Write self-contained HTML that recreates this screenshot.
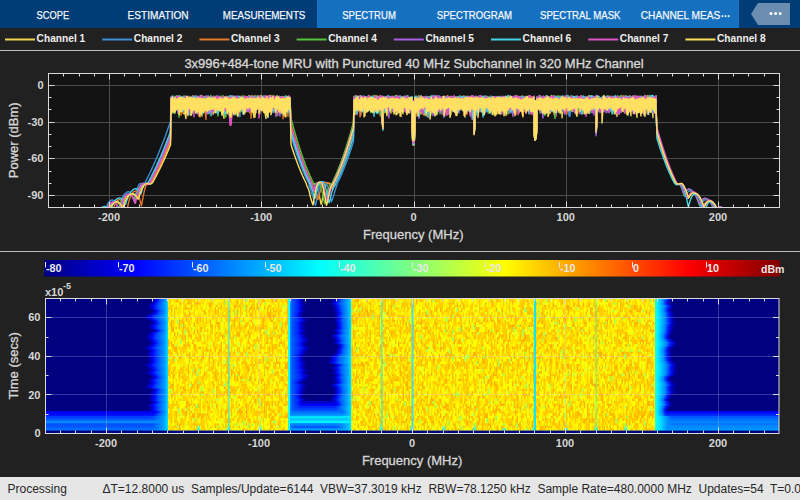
<!DOCTYPE html><html><head><meta charset="utf-8"><style>html,body{margin:0;padding:0;width:800px;height:500px;overflow:hidden;background:#212121}svg{display:block}</style></head><body>
<svg width="800" height="500" viewBox="0 0 800 500" font-family='"Liberation Sans", sans-serif'>
<defs>
<linearGradient id="jet" x1="0" x2="1" y1="0" y2="0"><stop offset="0.000" stop-color="#000080"/><stop offset="0.031" stop-color="#00009f"/><stop offset="0.062" stop-color="#0000bf"/><stop offset="0.094" stop-color="#0000df"/><stop offset="0.125" stop-color="#0000ff"/><stop offset="0.156" stop-color="#0020ff"/><stop offset="0.188" stop-color="#0040ff"/><stop offset="0.219" stop-color="#0060ff"/><stop offset="0.250" stop-color="#0080ff"/><stop offset="0.281" stop-color="#009fff"/><stop offset="0.312" stop-color="#00bfff"/><stop offset="0.344" stop-color="#00dfff"/><stop offset="0.375" stop-color="#00ffff"/><stop offset="0.406" stop-color="#20ffdf"/><stop offset="0.438" stop-color="#40ffbf"/><stop offset="0.469" stop-color="#60ff9f"/><stop offset="0.500" stop-color="#80ff80"/><stop offset="0.531" stop-color="#9fff60"/><stop offset="0.562" stop-color="#bfff40"/><stop offset="0.594" stop-color="#dfff20"/><stop offset="0.625" stop-color="#ffff00"/><stop offset="0.656" stop-color="#ffdf00"/><stop offset="0.688" stop-color="#ffbf00"/><stop offset="0.719" stop-color="#ff9f00"/><stop offset="0.750" stop-color="#ff8000"/><stop offset="0.781" stop-color="#ff6000"/><stop offset="0.812" stop-color="#ff4000"/><stop offset="0.844" stop-color="#ff2000"/><stop offset="0.875" stop-color="#ff0000"/><stop offset="0.906" stop-color="#df0000"/><stop offset="0.938" stop-color="#bf0000"/><stop offset="0.969" stop-color="#9f0000"/><stop offset="1.000" stop-color="#800000"/></linearGradient>
<clipPath id="ax1"><rect x="48.5" y="73.5" width="731" height="134"/></clipPath>
<clipPath id="ax2"><rect x="45.5" y="298.5" width="733.5" height="134.5"/></clipPath>
</defs>
<rect x="0" y="0" width="800" height="28" fill="#003c75"/>
<rect x="317" y="0" width="422" height="28" fill="#1571c0"/>
<text x="36.6" y="18.8" font-size="10.8" fill="#f4f6fa" stroke="#f4f6fa" stroke-width="0.25" textLength="32.5" lengthAdjust="spacingAndGlyphs">SCOPE</text>
<text x="127.6" y="18.8" font-size="10.8" fill="#f4f6fa" stroke="#f4f6fa" stroke-width="0.25" textLength="61.0" lengthAdjust="spacingAndGlyphs">ESTIMATION</text>
<text x="222.8" y="18.8" font-size="10.8" fill="#f4f6fa" stroke="#f4f6fa" stroke-width="0.25" textLength="82.6" lengthAdjust="spacingAndGlyphs">MEASUREMENTS</text>
<text x="342.2" y="18.8" font-size="10.8" fill="#f4f6fa" stroke="#f4f6fa" stroke-width="0.25" textLength="53.7" lengthAdjust="spacingAndGlyphs">SPECTRUM</text>
<text x="436.8" y="18.8" font-size="10.8" fill="#f4f6fa" stroke="#f4f6fa" stroke-width="0.25" textLength="75.3" lengthAdjust="spacingAndGlyphs">SPECTROGRAM</text>
<text x="540.0" y="18.8" font-size="10.8" fill="#f4f6fa" stroke="#f4f6fa" stroke-width="0.25" textLength="80.5" lengthAdjust="spacingAndGlyphs">SPECTRAL MASK</text>
<text x="640.8" y="18.8" font-size="10.8" fill="#f4f6fa" stroke="#f4f6fa" stroke-width="0.25" textLength="79.5" lengthAdjust="spacingAndGlyphs">CHANNEL MEAS</text>
<rect x="721.6" y="15.2" width="1.7" height="1.9" fill="#f2f4f8"/>
<rect x="724.7" y="15.2" width="1.7" height="1.9" fill="#f2f4f8"/>
<rect x="727.8" y="15.2" width="1.7" height="1.9" fill="#f2f4f8"/>
<polygon points="751,14 758,3 790,3 790,25 758,25" fill="#6a8db0"/>
<circle cx="771.0" cy="13.6" r="1.5" fill="#ffffff"/>
<circle cx="775.6" cy="13.6" r="1.5" fill="#ffffff"/>
<circle cx="780.2" cy="13.6" r="1.5" fill="#ffffff"/>
<line x1="5.0" y1="39.5" x2="35.0" y2="39.5" stroke="#f2d453" stroke-width="2"/>
<text x="36.6" y="41.8" font-size="10.4" font-weight="bold" fill="#efefef" textLength="48.6" lengthAdjust="spacingAndGlyphs">Channel 1</text>
<line x1="102.2" y1="39.5" x2="132.2" y2="39.5" stroke="#3d8fd6" stroke-width="2"/>
<text x="133.8" y="41.8" font-size="10.4" font-weight="bold" fill="#efefef" textLength="48.6" lengthAdjust="spacingAndGlyphs">Channel 2</text>
<line x1="199.4" y1="39.5" x2="229.4" y2="39.5" stroke="#e8792b" stroke-width="2"/>
<text x="231.0" y="41.8" font-size="10.4" font-weight="bold" fill="#efefef" textLength="48.6" lengthAdjust="spacingAndGlyphs">Channel 3</text>
<line x1="296.6" y1="39.5" x2="326.6" y2="39.5" stroke="#52c23c" stroke-width="2"/>
<text x="328.2" y="41.8" font-size="10.4" font-weight="bold" fill="#efefef" textLength="48.6" lengthAdjust="spacingAndGlyphs">Channel 4</text>
<line x1="393.8" y1="39.5" x2="423.8" y2="39.5" stroke="#ad5fe2" stroke-width="2"/>
<text x="425.4" y="41.8" font-size="10.4" font-weight="bold" fill="#efefef" textLength="48.6" lengthAdjust="spacingAndGlyphs">Channel 5</text>
<line x1="491.0" y1="39.5" x2="521.0" y2="39.5" stroke="#43d5e6" stroke-width="2"/>
<text x="522.6" y="41.8" font-size="10.4" font-weight="bold" fill="#efefef" textLength="48.6" lengthAdjust="spacingAndGlyphs">Channel 6</text>
<line x1="588.2" y1="39.5" x2="618.2" y2="39.5" stroke="#e153c3" stroke-width="2"/>
<text x="619.8" y="41.8" font-size="10.4" font-weight="bold" fill="#efefef" textLength="48.6" lengthAdjust="spacingAndGlyphs">Channel 7</text>
<line x1="685.4" y1="39.5" x2="715.4" y2="39.5" stroke="#ffe060" stroke-width="2"/>
<text x="717.0" y="41.8" font-size="10.4" font-weight="bold" fill="#efefef" textLength="48.6" lengthAdjust="spacingAndGlyphs">Channel 8</text>
<rect x="0" y="50" width="800" height="1" fill="#bdbdbd"/>
<rect x="48.5" y="73.5" width="731.0" height="134.0" fill="#131313"/>
<path d="M109.5 73.5V207.5M261.5 73.5V207.5M414.5 73.5V207.5M566.5 73.5V207.5M718.5 73.5V207.5M48.5 85.5H779.5M48.5 122.5H779.5M48.5 158.5H779.5M48.5 195.5H779.5" stroke="#4c4c4c" stroke-width="1" fill="none"/>
<g clip-path="url(#ax1)" fill="none" stroke-linejoin="round">
<path d="M49 212.0 97 212.0 97.5 211.9 98 211.6 98.5 211.3 99 211.0 99.5 210.9 100 210.7 100.5 210.7 101 210.8 101.5 211.0 102 211.3 102.5 211.7 103 212.0 107 212.0 107.5 211.4 108 210.1 108.5 208.9 109 207.8 109.5 206.8 110 205.9 110.5 205.2 111 204.5 111.5 203.9 112 203.4 112.5 203.0 113 202.7 113.5 202.4 114 202.1 114.5 201.8 115 201.6 115.5 201.5 116 201.5 116.5 201.7 117 201.9 117.5 202.2 118 202.7 118.5 203.2 119 203.9 119.5 204.6 120 205.4 120.5 206.3 121 207.3 121.5 207.0 122 205.6 122.5 204.2 123 202.9 123.5 201.6 124 200.5 124.5 199.4 125 198.5 125.5 197.6 126 196.9 126.5 196.3 127 195.8 127.5 195.3 128 195.0 128.5 194.7 129 194.4 129.5 194.2 130 194.0 130.5 193.8 131 193.8 131.5 193.8 132 193.9 132.5 194.0 133 194.2 133.5 194.5 134 194.9 134.5 195.5 135 196.1 135.5 196.8 136 197.6 136.5 198.4 137 198.0 137.5 196.4 138 194.9 138.5 193.5 139 192.1 139.5 190.9 140 189.7 140.5 188.6 141 187.7 141.5 186.8 142 186.1 142.5 185.4 143 184.9 143.5 184.4 144 184.0 144.5 183.6 145 183.4 145.5 183.5 146 183.6 146.5 183.7 147 183.8 147.5 183.9 148 184.0 148.5 184.0 149 183.9 149.5 183.8 150 183.5 150.5 183.2 151 182.6 151.5 181.8 152 180.9 152.5 180.0 153 179.0 153.5 178.1 154 177.2 154.5 176.2 155 175.3 155.5 174.3 156 173.3 156.5 172.3 157 171.3 157.5 170.3 158 169.3 158.5 168.3 159 167.2 159.5 166.2 160 165.1 160.5 164.0 161 163.0 161.5 161.9 162 160.8 162.5 159.7 163 158.6 163.5 157.4 164 156.3 164.5 155.1 165 154.0 165.5 152.8 166 151.6 166.5 150.4 167 149.2 167.5 148.0 168 146.8 168.5 145.6 169 144.3 169.5 143.1 170 141.8 170.5 140.6 171 99.0 171 107.4 172 105.8 172 98.6 173 99.5 173 110.7 174 107.2 174 99.5 175 98.9 175 108.2 176 110.3 176 96.9 177 96.0 177 106.1 178 107.6 178 97.9 179 96.6 179 111.3 180 105.2 180 98.1 181 99.9 181 108.9 182 109.0 182 97.7 183 97.3 183 112.8 184 113.9 184 98.3 185 97.5 185 105.7 186 106.2 186 97.2 187 98.8 187 109.7 188 105.6 188 99.5 189 98.1 189 107.3 190 114.7 190 98.1 191 98.2 191 106.0 192 106.8 192 96.7 193 95.9 193 107.2 194 105.9 194 98.3 195 97.1 195 110.7 196 112.6 196 96.8 197 97.0 197 109.2 198 108.2 198 96.7 199 98.3 199 106.9 200 106.8 200 97.0 201 95.6 201 113.3 202 116.0 202 96.9 203 98.5 203 107.7 204 109.5 204 97.2 205 96.4 205 107.6 206 106.6 206 97.4 207 98.5 207 105.8 208 109.9 208 96.1 209 99.2 209 108.7 210 105.8 210 97.3 211 97.9 211 110.3 212 105.4 212 99.1 213 96.5 213 114.3 214 106.2 214 97.5 215 99.1 215 105.7 216 109.2 216 97.2 217 98.3 217 106.6 218 107.3 218 99.9 219 98.6 219 107.5 220 105.8 220 97.5 221 97.1 221 106.8 222 105.4 222 97.7 223 97.8 223 112.7 224 118.4 224 97.3 225 98.1 225 114.5 226 108.5 226 96.5 227 97.7 227 105.4 228 112.2 228 97.5 229 97.2 229 110.3 230 120.0 230 99.0 231 98.6 231 120.0 232 106.5 232 96.2 233 97.5 233 108.7 234 105.7 234 98.1 235 97.5 235 108.2 236 105.7 236 98.4 237 97.5 237 114.8 238 109.3 238 98.6 239 97.5 239 110.7 240 106.3 240 99.6 241 96.4 241 110.9 242 105.4 242 98.4 243 99.6 243 109.4 244 107.3 244 98.1 245 98.2 245 109.9 246 110.8 246 97.7 247 99.1 247 111.5 248 111.3 248 97.4 249 95.5 249 106.9 250 109.8 250 99.2 251 97.5 251 109.9 252 106.1 252 98.2 253 97.6 253 107.5 254 107.2 254 99.8 255 99.1 255 117.2 256 106.0 256 97.3 257 97.9 257 105.2 258 105.5 258 96.0 259 98.6 259 105.3 260 106.0 260 97.6 261 95.5 261 107.6 262 105.7 262 98.7 263 98.8 263 106.1 264 108.0 264 97.9 265 97.9 265 106.8 266 105.7 266 96.9 267 97.7 267 113.7 268 107.1 268 98.7 269 97.6 269 106.2 270 108.9 270 95.5 271 96.4 271 105.8 272 105.6 272 100.9 273 98.0 273 106.0 274 105.2 274 98.8 275 97.1 275 107.0 276 112.4 276 98.0 277 95.7 277 112.6 278 111.5 278 96.8 279 96.9 279 106.5 280 107.8 280 97.6 281 97.9 281 106.7 282 107.5 282 97.5 283 96.4 283 108.3 284 110.3 284 97.2 285 98.2 285 106.4 286 116.9 286 96.4 287 97.6 287 109.3 288 106.1 288 97.9 289 98.7 289 106.6 290 107.4 290 98.5 291 132.9 291.5 134.6 292 136.3 292.5 138.0 293 139.7 293.5 141.3 294 142.9 294.5 144.5 295 146.1 295.5 147.7 296 149.2 296.5 150.7 297 152.2 297.5 153.7 298 155.2 298.5 156.6 299 158.0 299.5 159.4 300 160.8 300.5 162.1 301 163.5 301.5 164.8 302 166.1 302.5 167.3 303 168.6 303.5 169.8 304 171.0 304.5 172.2 305 173.4 305.5 174.5 306 175.7 306.5 176.8 307 177.9 307.5 178.9 308 180.0 308.5 181.0 309 182.0 309.5 183.0 310 184.6 310.5 186.2 311 186.9 311.5 185.8 312 184.9 312.5 184.3 313 183.9 313.5 183.7 314 183.6 314.5 183.6 315 183.7 315.5 184.1 316 184.8 316.5 185.7 317 186.8 317.5 188.2 318 189.9 318.5 191.8 319 193.9 319.5 196.3 320 198.8 320.5 201.4 321 204.2 321.5 203.9 322 200.9 322.5 198.1 323 195.6 323.5 193.3 324 191.2 324.5 189.3 325 187.6 325.5 186.2 326 185.1 326.5 184.2 327 183.6 327.5 183.2 328 183.1 328.5 183.1 329 183.2 329.5 183.4 330 183.8 330.5 184.5 331 185.3 331.5 186.5 332 187.8 332.5 189.4 333 187.8 333.5 186.2 334 184.6 334.5 183.0 335 182.0 335.5 181.0 336 180.0 336.5 178.9 337 177.9 337.5 176.8 338 175.7 338.5 174.5 339 173.4 339.5 172.2 340 171.0 340.5 169.8 341 168.6 341.5 167.3 342 166.1 342.5 164.8 343 163.5 343.5 162.1 344 160.8 344.5 159.4 345 158.0 345.5 156.6 346 155.2 346.5 153.7 347 152.2 347.5 150.7 348 149.2 348.5 147.7 349 146.1 349.5 144.5 350 142.9 350.5 141.3 351 139.7 351.5 138.0 352 136.3 352.5 134.6 353 132.9 353.5 131.1 354 97.9 354 107.6 355 107.3 355 98.4 356 96.2 356 107.5 357 106.9 357 96.7 358 96.4 358 107.0 359 105.7 359 97.2 360 98.0 360 106.2 361 106.1 361 98.3 362 98.1 362 106.9 363 107.4 363 96.8 364 97.7 364 116.9 365 106.3 365 99.5 366 97.9 366 112.0 367 107.1 367 99.4 368 97.7 368 107.3 369 105.3 369 99.2 370 99.2 370 105.6 371 105.4 371 97.7 372 97.9 372 111.5 373 109.6 373 99.7 374 97.0 374 108.7 375 111.3 375 95.5 376 99.5 376 107.1 377 105.8 377 95.8 378 98.6 378 108.6 379 106.0 379 98.4 380 98.0 380 108.1 381 110.0 381 99.4 382 96.4 382 119.7 383 127.4 383 97.3 384 98.7 384 113.0 385 105.9 385 98.1 386 99.5 386 111.4 387 110.6 387 98.2 388 96.8 388 108.7 389 112.0 389 99.7 390 98.3 390 107.3 391 113.0 391 97.7 392 96.7 392 110.9 393 107.0 393 96.3 394 98.3 394 108.4 395 108.8 395 98.6 396 97.3 396 110.8 397 112.2 397 98.2 398 98.2 398 106.6 399 110.2 399 96.6 400 96.0 400 115.9 401 106.7 401 97.5 402 98.0 402 108.2 403 106.7 403 97.2 404 99.9 404 105.6 405 106.6 405 97.9 406 99.0 406 107.7 407 106.3 407 95.5 408 97.0 408 106.7 409 112.3 409 97.7 410 98.0 410 108.1 411 111.0 411 100.6 412 97.0 412 134.4 413 145.1 413 100.8 414 100.6 414 145.1 415 134.4 415 97.1 416 97.0 416 109.8 417 106.1 417 99.5 418 96.8 418 109.6 419 115.1 419 96.3 420 97.6 420 106.9 421 114.1 421 97.9 422 97.0 422 107.4 423 109.5 423 99.5 424 97.7 424 115.1 425 106.2 425 96.7 426 99.2 426 106.4 427 111.3 427 96.7 428 98.3 428 105.2 429 110.1 429 100.1 430 97.9 430 105.3 431 106.6 431 98.9 432 97.5 432 107.1 433 110.1 433 99.1 434 96.7 434 108.0 435 108.7 435 98.6 436 97.4 436 107.0 437 106.5 437 98.5 438 98.2 438 108.0 439 106.4 439 96.5 440 97.6 440 110.4 441 107.6 441 98.3 442 99.2 442 109.7 443 108.8 443 96.6 444 97.0 444 109.6 445 108.5 445 98.2 446 97.6 446 105.9 447 114.3 447 99.0 448 98.9 448 108.1 449 113.5 449 98.7 450 97.4 450 112.4 451 107.5 451 97.5 452 98.7 452 105.4 453 107.2 453 97.0 454 97.0 454 108.7 455 105.3 455 97.6 456 96.7 456 109.6 457 108.2 457 98.1 458 98.0 458 107.6 459 110.6 459 97.3 460 97.9 460 106.7 461 106.2 461 97.0 462 99.2 462 105.2 463 107.2 463 96.3 464 98.7 464 115.6 465 107.3 465 98.0 466 99.3 466 105.7 467 110.7 467 97.2 468 96.4 468 107.6 469 110.8 469 96.7 470 96.9 470 113.1 471 105.3 471 99.5 472 98.7 472 105.4 473 111.0 473 98.3 474 98.9 474 133.3 475 127.1 475 96.6 476 97.6 476 108.0 477 108.3 477 97.9 478 97.3 478 107.5 479 108.6 479 98.9 480 98.8 480 105.8 481 105.7 481 98.8 482 97.3 482 107.1 483 113.7 483 97.5 484 97.2 484 108.6 485 106.5 485 96.6 486 99.3 486 105.5 487 106.8 487 98.4 488 97.7 488 106.8 489 107.9 489 99.3 490 98.4 490 111.9 491 108.5 491 96.7 492 96.6 492 105.2 493 106.6 493 96.6 494 97.8 494 108.8 495 111.3 495 98.1 496 96.6 496 105.6 497 108.8 497 98.2 498 97.5 498 113.8 499 105.6 499 96.4 500 98.2 500 106.1 501 106.8 501 98.5 502 97.8 502 112.7 503 109.0 503 97.2 504 97.3 504 105.9 505 108.3 505 97.7 506 97.2 506 105.7 507 105.4 507 99.6 508 98.8 508 109.5 509 110.9 509 97.7 510 98.9 510 105.3 511 111.6 511 99.3 512 99.2 512 107.3 513 105.9 513 98.8 514 98.0 514 108.8 515 115.8 515 99.0 516 97.6 516 105.7 517 109.8 517 96.0 518 98.0 518 107.1 519 112.7 519 96.4 520 97.5 520 106.2 521 105.4 521 99.1 522 98.1 522 109.1 523 108.8 523 98.9 524 97.0 524 111.0 525 106.7 525 99.1 526 96.4 526 112.5 527 109.6 527 97.2 528 100.1 528 105.8 529 109.5 529 97.0 530 96.1 530 109.4 531 106.4 531 98.7 532 96.7 532 105.8 533 108.8 533 99.8 534 97.6 534 134.0 535 140.4 535 101.0 536 101.4 536 138.9 537 128.1 537 99.8 538 100.7 538 108.0 539 105.5 539 97.4 540 95.5 540 106.9 541 108.3 541 98.5 542 96.9 542 112.4 543 108.2 543 97.7 544 98.2 544 107.6 545 105.7 545 97.2 546 96.0 546 106.9 547 106.4 547 99.2 548 97.2 548 105.8 549 107.3 549 97.5 550 99.4 550 113.3 551 108.3 551 96.1 552 95.7 552 111.3 553 106.6 553 98.9 554 95.9 554 106.5 555 106.2 555 97.8 556 98.0 556 111.7 557 110.0 557 96.2 558 97.6 558 107.7 559 108.2 559 97.5 560 96.2 560 110.2 561 108.4 561 96.4 562 96.9 562 117.9 563 106.5 563 99.4 564 99.6 564 110.4 565 109.8 565 96.6 566 98.9 566 107.4 567 105.6 567 97.7 568 99.0 568 106.3 569 112.5 569 98.0 570 99.2 570 107.9 571 107.8 571 96.0 572 99.0 572 111.5 573 107.8 573 98.0 574 98.0 574 111.5 575 105.2 575 96.5 576 99.4 576 111.9 577 114.1 577 97.9 578 98.1 578 109.1 579 107.7 579 97.3 580 97.3 580 112.0 581 107.3 581 98.3 582 97.6 582 110.1 583 109.4 583 98.2 584 97.3 584 105.4 585 110.1 585 97.9 586 98.6 586 109.5 587 106.7 587 97.9 588 97.4 588 109.1 589 106.3 589 95.5 590 98.4 590 107.8 591 111.8 591 97.5 592 96.2 592 110.3 593 111.0 593 100.1 594 99.8 594 110.1 595 111.7 595 99.1 596 98.0 596 132.2 597 123.1 597 95.5 598 97.4 598 105.7 599 109.5 599 96.5 600 98.1 600 111.6 601 109.6 601 100.5 602 100.4 602 105.3 603 109.9 603 96.7 604 97.6 604 108.5 605 107.7 605 99.3 606 96.6 606 107.9 607 106.4 607 99.5 608 96.6 608 105.8 609 110.5 609 96.2 610 98.7 610 106.5 611 107.6 611 99.1 612 96.9 612 109.4 613 106.5 613 99.0 614 96.9 614 105.6 615 105.9 615 99.1 616 96.9 616 107.0 617 116.4 617 97.7 618 98.3 618 106.4 619 107.1 619 98.8 620 97.6 620 109.3 621 108.8 621 99.9 622 98.1 622 110.0 623 107.7 623 98.3 624 97.1 624 107.1 625 107.0 625 99.2 626 95.9 626 107.1 627 111.1 627 98.2 628 99.1 628 109.3 629 107.0 629 96.3 630 96.0 630 110.1 631 115.8 631 98.0 632 98.8 632 107.3 633 109.9 633 97.8 634 98.6 634 106.6 635 107.7 635 98.2 636 96.1 636 111.1 637 106.6 637 97.4 638 97.7 638 110.7 639 109.9 639 97.5 640 97.9 640 106.9 641 111.9 641 96.9 642 96.9 642 108.6 643 111.3 643 98.2 644 97.7 644 114.7 645 110.9 645 95.5 646 97.4 646 108.3 647 112.0 647 98.0 648 95.6 648 109.4 649 106.0 649 97.8 650 99.0 650 106.3 651 112.2 651 97.1 652 98.8 652 107.5 653 117.5 653 98.4 654 97.5 654 110.7 655 108.8 655 98.0 656 98.7 656 108.3 657 134.4 657.5 136.1 658 137.7 658.5 139.4 659 141.0 659.5 142.6 660 144.2 660.5 145.7 661 147.3 661.5 148.8 662 150.3 662.5 151.8 663 153.3 663.5 154.7 664 156.1 664.5 157.5 665 158.9 665.5 160.3 666 161.6 666.5 163.0 667 164.3 667.5 165.6 668 166.8 668.5 168.1 669 169.3 669.5 170.5 670 171.7 670.5 172.8 671 174.0 671.5 175.1 672 176.2 672.5 177.3 673 178.4 673.5 179.4 674 180.4 674.5 181.4 675 182.4 675.5 183.1 676 183.5 676.5 183.7 677 183.8 677.5 183.9 678 183.9 678.5 183.9 679 183.9 679.5 183.8 680 183.7 680.5 183.6 681 183.6 681.5 183.9 682 184.5 682.5 185.3 683 186.2 683.5 187.2 684 188.4 684.5 189.6 685 191.0 685.5 192.5 686 194.0 686.5 195.7 687 197.4 687.5 198.4 688 197.4 688.5 196.4 689 195.5 689.5 194.8 690 194.1 690.5 193.5 691 193.1 691.5 192.8 692 192.6 692.5 192.5 693 192.5 693.5 192.6 694 192.9 694.5 193.1 695 193.4 695.5 193.6 696 193.9 696.5 194.3 697 194.7 697.5 195.3 698 195.9 698.5 196.7 699 197.6 699.5 198.6 700 199.7 700.5 201.0 701 202.3 701.5 203.8 702 205.3 702.5 207.0 703 207.8 703.5 206.6 704 205.6 704.5 204.6 705 203.7 705.5 202.9 706 202.2 706.5 201.6 707 201.2 707.5 200.9 708 200.7 708.5 200.6 709 200.6 709.5 200.7 710 200.9 710.5 201.1 711 201.4 711.5 201.8 712 202.2 712.5 202.7 713 203.3 713.5 204.0 714 204.8 714.5 205.7 715 206.8 715.5 208.0 716 209.3 716.5 210.7 717 212.0 720.5 212.0 721 211.6 721.5 211.0 722 210.5 722.5 210.1 723 209.8 723.5 209.6 724 209.6 724.5 209.7 725 209.8 725.5 210.0 726 210.3 726.5 210.6 727 211.0 727.5 211.4 728 211.9 728.5 212.0 779.5 212.0" stroke="#f2d453" stroke-width="1.4"/>
<path d="M49 212.0 92.5 212.0 93 211.8 93.5 211.1 94 210.6 94.5 210.1 95 209.8 95.5 209.5 96 209.2 96.5 209.0 97 209.0 97.5 209.0 98 209.2 98.5 209.5 99 210.0 99.5 210.7 100 211.5 100.5 212.0 104.5 212.0 105 211.5 105.5 209.7 106 208.1 106.5 206.7 107 205.4 107.5 204.3 108 203.4 108.5 202.6 109 201.9 109.5 201.4 110 201.0 110.5 200.7 111 200.4 111.5 200.2 112 200.0 112.5 200.0 113 200.1 113.5 200.3 114 200.7 114.5 201.3 115 202.0 115.5 202.8 116 203.8 116.5 205.0 117 206.3 117.5 207.7 118 209.3 118.5 210.9 119 209.1 119.5 207.0 120 205.1 120.5 203.3 121 201.6 121.5 200.0 122 198.6 122.5 197.4 123 196.3 123.5 195.4 124 194.7 124.5 194.1 125 193.6 125.5 193.2 126 192.9 126.5 192.5 127 192.1 127.5 191.9 128 191.7 128.5 191.7 129 191.8 129.5 192.1 130 192.5 130.5 193.1 131 193.8 131.5 194.7 132 195.8 132.5 196.9 133 198.2 133.5 199.6 134 201.1 134.5 199.2 135 197.1 135.5 195.0 136 193.1 136.5 191.2 137 189.6 137.5 188.1 138 186.7 138.5 185.5 139 184.6 139.5 184.1 140 183.8 140.5 183.6 141 183.5 141.5 183.5 142 183.5 142.5 183.5 143 183.5 143.5 183.4 144 183.3 144.5 183.2 145 182.6 145.5 181.7 146 180.7 146.5 179.7 147 178.8 147.5 177.8 148 176.8 148.5 175.8 149 174.8 149.5 173.7 150 172.7 150.5 171.6 151 170.6 151.5 169.5 152 168.4 152.5 167.3 153 166.2 153.5 165.1 154 164.0 154.5 162.9 155 161.7 155.5 160.6 156 159.4 156.5 158.3 157 157.1 157.5 155.9 158 154.7 158.5 153.5 159 152.3 159.5 151.0 160 149.8 160.5 148.6 161 147.3 161.5 146.0 162 144.7 162.5 143.5 163 142.2 163.5 140.9 164 139.5 164.5 138.2 165 136.9 165.5 135.5 166 134.2 166.5 132.8 167 131.4 167.5 130.0 168 128.6 168.5 127.2 169 125.8 169.5 124.4 170 122.9 170.5 121.5 171 97.4 171 108.1 172 108.7 172 98.8 173 98.0 173 105.6 174 105.9 174 98.6 175 100.4 175 110.3 176 107.6 176 99.8 177 97.0 177 108.1 178 106.5 178 98.3 179 98.0 179 109.0 180 106.1 180 99.5 181 98.5 181 105.9 182 105.2 182 97.0 183 97.7 183 106.9 184 106.7 184 98.4 185 96.1 185 105.6 186 105.6 186 97.9 187 98.2 187 110.5 188 105.7 188 96.6 189 99.8 189 114.1 190 114.3 190 97.2 191 99.1 191 112.4 192 106.3 192 98.7 193 98.6 193 110.9 194 107.6 194 97.7 195 97.7 195 109.3 196 106.6 196 97.5 197 97.6 197 106.7 198 113.4 198 96.3 199 96.0 199 107.1 200 106.4 200 97.1 201 97.0 201 105.4 202 109.0 202 98.3 203 99.1 203 108.9 204 111.0 204 97.2 205 97.8 205 106.6 206 106.4 206 96.9 207 99.9 207 108.0 208 106.4 208 95.5 209 99.2 209 107.6 210 109.2 210 97.8 211 96.7 211 112.6 212 106.8 212 99.4 213 98.5 213 108.0 214 111.2 214 100.1 215 99.4 215 113.1 216 106.9 216 100.0 217 97.7 217 109.9 218 109.3 218 97.5 219 98.2 219 111.9 220 107.0 220 96.4 221 96.3 221 106.2 222 106.7 222 97.8 223 98.1 223 109.8 224 114.6 224 98.1 225 98.3 225 106.8 226 106.6 226 96.4 227 97.6 227 105.2 228 111.6 228 98.2 229 98.1 229 107.4 230 115.8 230 97.2 231 98.3 231 115.8 232 106.6 232 97.5 233 97.9 233 106.6 234 106.6 234 96.3 235 96.5 235 107.4 236 115.1 236 99.4 237 98.0 237 107.5 238 107.7 238 97.0 239 98.3 239 107.5 240 116.6 240 96.9 241 97.5 241 109.5 242 107.6 242 97.2 243 97.9 243 114.4 244 108.0 244 97.5 245 97.3 245 107.9 246 107.1 246 99.5 247 98.8 247 106.3 248 107.6 248 99.0 249 96.0 249 105.9 250 106.7 250 97.5 251 97.4 251 107.6 252 108.3 252 97.6 253 98.4 253 112.2 254 108.8 254 98.7 255 96.9 255 107.8 256 105.8 256 98.2 257 96.1 257 108.9 258 109.1 258 97.6 259 97.7 259 113.8 260 106.3 260 98.1 261 97.9 261 110.8 262 108.4 262 97.8 263 96.1 263 109.3 264 106.8 264 95.5 265 99.1 265 105.9 266 107.9 266 97.5 267 97.0 267 108.7 268 112.4 268 98.8 269 98.5 269 110.1 270 105.6 270 98.3 271 100.5 271 105.9 272 108.1 272 97.1 273 97.9 273 112.5 274 112.4 274 97.9 275 97.7 275 107.6 276 105.8 276 97.5 277 95.5 277 109.9 278 108.4 278 97.6 279 96.9 279 107.2 280 105.8 280 98.4 281 97.4 281 112.2 282 106.0 282 98.2 283 98.0 283 105.3 284 110.2 284 98.8 285 98.7 285 114.0 286 112.9 286 97.3 287 97.0 287 107.7 288 106.7 288 97.3 289 98.6 289 111.6 290 109.6 290 97.5 291 136.3 291.5 138.0 292 139.7 292.5 141.3 293 142.9 293.5 144.5 294 146.1 294.5 147.7 295 149.2 295.5 150.7 296 152.2 296.5 153.7 297 155.2 297.5 156.6 298 158.0 298.5 159.4 299 160.8 299.5 162.1 300 163.5 300.5 164.8 301 166.1 301.5 167.3 302 168.6 302.5 169.8 303 171.0 303.5 172.2 304 173.4 304.5 174.5 305 175.7 305.5 176.8 306 177.9 306.5 178.9 307 180.0 307.5 181.0 308 182.0 308.5 183.0 309 184.6 309.5 186.2 310 187.8 310.5 189.4 311 191.0 311.5 192.6 312 194.2 312.5 195.8 313 197.4 313.5 199.0 314 200.6 314.5 202.2 315 203.8 315.5 205.4 316 203.2 316.5 200.6 317 198.1 317.5 195.8 318 193.6 318.5 191.5 319 189.6 319.5 188.0 320 186.5 320.5 185.2 321 184.0 321.5 183.1 322 182.4 322.5 182.0 323 181.8 323.5 181.8 324 181.9 324.5 182.1 325 182.4 325.5 182.8 326 183.3 326.5 184.1 327 185.0 327.5 186.2 328 187.5 328.5 189.0 329 190.7 329.5 192.6 330 194.7 330.5 196.9 331 199.3 331.5 201.8 332 200.6 332.5 199.0 333 197.4 333.5 195.8 334 194.2 334.5 192.6 335 191.0 335.5 189.4 336 187.8 336.5 186.2 337 184.6 337.5 183.0 338 182.0 338.5 181.0 339 180.0 339.5 178.9 340 177.9 340.5 176.8 341 175.7 341.5 174.5 342 173.4 342.5 172.2 343 171.0 343.5 169.8 344 168.6 344.5 167.3 345 166.1 345.5 164.8 346 163.5 346.5 162.1 347 160.8 347.5 159.4 348 158.0 348.5 156.6 349 155.2 349.5 153.7 350 152.2 350.5 150.7 351 149.2 351.5 147.7 352 146.1 352.5 144.5 353 142.9 353.5 141.3 354 98.8 354 112.5 355 111.0 355 95.6 356 97.7 356 105.4 357 105.8 357 97.2 358 98.4 358 106.9 359 106.8 359 98.4 360 96.2 360 112.9 361 113.2 361 98.0 362 97.9 362 111.8 363 105.4 363 96.5 364 95.9 364 108.0 365 107.1 365 99.4 366 98.0 366 105.7 367 110.3 367 97.8 368 95.7 368 108.4 369 106.3 369 95.5 370 97.8 370 105.3 371 105.5 371 97.3 372 96.8 372 107.1 373 108.1 373 96.5 374 98.1 374 107.6 375 110.4 375 96.8 376 98.5 376 106.2 377 105.9 377 100.7 378 99.3 378 109.3 379 112.5 379 97.5 380 96.9 380 109.9 381 105.5 381 100.2 382 99.7 382 119.7 383 127.3 383 97.8 384 101.4 384 108.5 385 111.2 385 97.1 386 96.6 386 108.8 387 106.0 387 101.0 388 96.9 388 108.0 389 108.5 389 97.9 390 96.1 390 107.2 391 106.1 391 97.4 392 98.0 392 106.6 393 109.3 393 97.6 394 96.7 394 105.7 395 105.8 395 97.5 396 97.6 396 108.1 397 105.5 397 99.3 398 97.2 398 113.4 399 108.9 399 97.7 400 95.7 400 110.2 401 110.8 401 97.7 402 97.8 402 109.8 403 108.6 403 98.4 404 96.9 404 106.3 405 108.7 405 97.9 406 98.5 406 110.0 407 106.1 407 95.9 408 95.7 408 109.1 409 106.5 409 98.2 410 98.8 410 110.9 411 105.7 411 96.4 412 98.6 412 130.4 413 139.7 413 101.0 414 102.5 414 139.7 415 130.4 415 96.6 416 99.1 416 108.0 417 111.4 417 97.7 418 96.5 418 109.7 419 106.2 419 97.2 420 98.3 420 106.5 421 108.4 421 95.5 422 96.9 422 110.9 423 105.7 423 97.9 424 98.3 424 113.1 425 109.8 425 98.0 426 96.2 426 108.6 427 105.8 427 98.5 428 97.6 428 108.2 429 108.1 429 98.6 430 96.3 430 107.6 431 114.1 431 97.8 432 96.7 432 105.5 433 107.3 433 97.0 434 98.3 434 105.3 435 110.2 435 96.9 436 96.6 436 107.3 437 109.1 437 98.9 438 96.9 438 107.5 439 109.2 439 95.5 440 98.0 440 106.3 441 106.3 441 97.0 442 99.1 442 108.2 443 108.4 443 97.2 444 98.3 444 117.4 445 106.1 445 96.8 446 97.7 446 106.3 447 106.2 447 99.0 448 96.4 448 109.7 449 109.9 449 97.9 450 98.8 450 107.7 451 107.1 451 97.6 452 98.7 452 106.4 453 107.9 453 97.2 454 97.7 454 106.4 455 112.3 455 98.1 456 96.9 456 105.6 457 113.3 457 99.1 458 96.6 458 106.9 459 110.5 459 99.9 460 95.9 460 107.3 461 109.9 461 97.5 462 98.0 462 109.9 463 106.1 463 98.5 464 97.1 464 106.5 465 113.2 465 97.8 466 97.9 466 110.7 467 109.7 467 96.5 468 98.1 468 107.1 469 110.4 469 97.9 470 97.2 470 110.1 471 116.9 471 96.5 472 97.8 472 106.2 473 107.5 473 97.5 474 97.6 474 132.8 475 126.7 475 96.8 476 96.0 476 108.3 477 109.0 477 98.7 478 97.8 478 110.2 479 111.8 479 97.7 480 97.0 480 107.8 481 106.9 481 96.0 482 97.7 482 109.1 483 106.7 483 97.4 484 96.4 484 108.7 485 110.1 485 99.0 486 98.5 486 106.9 487 109.8 487 98.2 488 97.7 488 112.9 489 108.7 489 97.4 490 98.2 490 106.5 491 106.9 491 95.7 492 98.5 492 109.1 493 108.2 493 97.9 494 96.5 494 113.6 495 107.5 495 96.8 496 97.7 496 108.9 497 110.2 497 97.2 498 96.8 498 105.8 499 106.0 499 97.7 500 96.9 500 111.1 501 105.2 501 98.7 502 97.6 502 109.0 503 105.5 503 99.5 504 98.7 504 107.0 505 111.0 505 98.9 506 96.3 506 107.8 507 106.5 507 98.2 508 97.3 508 105.9 509 108.5 509 98.7 510 97.9 510 110.4 511 108.9 511 98.0 512 98.6 512 112.8 513 109.9 513 96.7 514 99.5 514 107.2 515 107.7 515 97.0 516 95.5 516 105.3 517 111.8 517 98.6 518 97.7 518 109.2 519 110.0 519 99.4 520 97.7 520 108.6 521 107.0 521 99.6 522 97.0 522 110.1 523 105.5 523 98.3 524 99.8 524 106.4 525 106.8 525 99.2 526 99.5 526 107.6 527 110.9 527 98.0 528 96.8 528 107.4 529 110.3 529 98.2 530 99.0 530 108.1 531 105.5 531 98.7 532 97.6 532 106.7 533 112.1 533 100.5 534 97.1 534 134.0 535 140.4 535 101.8 536 100.8 536 138.9 537 128.1 537 96.4 538 99.6 538 108.5 539 105.8 539 98.0 540 96.4 540 108.0 541 110.9 541 99.6 542 99.8 542 107.4 543 106.4 543 99.0 544 99.0 544 106.3 545 107.3 545 97.9 546 98.4 546 105.3 547 106.1 547 98.3 548 98.3 548 107.0 549 108.6 549 98.0 550 98.7 550 111.4 551 106.6 551 97.4 552 97.8 552 106.1 553 105.7 553 98.9 554 95.7 554 109.2 555 110.6 555 99.2 556 97.0 556 107.2 557 112.2 557 98.6 558 97.4 558 108.3 559 107.4 559 97.2 560 96.8 560 106.3 561 107.7 561 96.2 562 98.7 562 107.3 563 106.6 563 95.5 564 97.3 564 106.3 565 112.7 565 98.7 566 99.3 566 110.9 567 107.0 567 95.5 568 95.9 568 107.2 569 116.0 569 97.8 570 96.9 570 116.5 571 105.5 571 96.3 572 97.6 572 108.4 573 105.8 573 98.2 574 97.8 574 107.8 575 105.6 575 96.8 576 97.7 576 109.5 577 105.7 577 99.1 578 96.9 578 105.4 579 110.9 579 99.7 580 98.6 580 110.1 581 109.9 581 96.4 582 97.5 582 114.2 583 105.8 583 97.5 584 97.6 584 106.3 585 110.7 585 96.6 586 97.8 586 107.5 587 108.7 587 99.9 588 97.5 588 110.1 589 107.5 589 101.2 590 100.1 590 113.1 591 111.7 591 96.0 592 96.6 592 105.6 593 108.2 593 98.3 594 97.8 594 105.8 595 108.9 595 97.7 596 96.6 596 132.1 597 123.0 597 98.6 598 98.7 598 108.5 599 109.4 599 98.5 600 97.6 600 110.8 601 109.3 601 97.5 602 98.2 602 105.6 603 105.5 603 96.9 604 98.9 604 106.8 605 105.7 605 97.8 606 98.5 606 106.1 607 112.6 607 98.9 608 96.4 608 107.1 609 112.7 609 98.1 610 98.9 610 108.3 611 105.4 611 97.7 612 98.9 612 106.9 613 106.7 613 97.1 614 96.8 614 106.3 615 111.5 615 96.6 616 98.9 616 106.9 617 112.4 617 97.9 618 95.7 618 107.9 619 108.2 619 98.0 620 96.3 620 107.4 621 108.1 621 96.0 622 99.3 622 107.3 623 107.6 623 96.4 624 96.9 624 108.8 625 110.9 625 96.8 626 95.8 626 107.1 627 112.1 627 97.2 628 97.7 628 115.6 629 106.0 629 97.1 630 98.1 630 109.1 631 105.8 631 97.2 632 100.0 632 108.3 633 108.7 633 95.8 634 98.3 634 113.5 635 110.5 635 97.1 636 97.4 636 105.4 637 107.4 637 97.6 638 97.6 638 105.2 639 112.5 639 97.7 640 99.6 640 106.3 641 111.8 641 98.4 642 96.4 642 106.4 643 106.5 643 98.9 644 98.9 644 106.4 645 108.7 645 95.5 646 96.4 646 113.9 647 107.7 647 96.0 648 97.8 648 108.4 649 114.6 649 97.5 650 96.9 650 108.1 651 111.7 651 97.1 652 97.9 652 107.5 653 106.7 653 99.4 654 98.6 654 107.1 655 109.8 655 99.5 656 96.0 656 106.1 657 136.5 657.5 138.2 658 139.8 658.5 141.4 659 143.0 659.5 144.6 660 146.1 660.5 147.7 661 149.2 661.5 150.7 662 152.1 662.5 153.6 663 155.0 663.5 156.4 664 157.8 664.5 159.2 665 160.5 665.5 161.9 666 163.2 666.5 164.5 667 165.7 667.5 167.0 668 168.2 668.5 169.4 669 170.6 669.5 171.8 670 173.0 670.5 174.1 671 175.2 671.5 176.3 672 177.4 672.5 178.4 673 179.5 673.5 180.5 674 181.5 674.5 182.4 675 183.1 675.5 183.4 676 183.6 676.5 183.7 677 183.8 677.5 183.9 678 183.9 678.5 184.0 679 184.1 679.5 184.2 680 184.6 680.5 185.1 681 185.9 681.5 187.1 682 188.4 682.5 189.8 683 191.3 683.5 192.9 684 194.6 684.5 196.3 685 196.6 685.5 195.6 686 194.7 686.5 193.8 687 193.1 687.5 192.4 688 191.9 688.5 191.4 689 191.1 689.5 191.0 690 190.9 690.5 191.0 691 191.1 691.5 191.4 692 191.7 692.5 192.0 693 192.4 693.5 192.8 694 193.3 694.5 193.8 695 194.3 695.5 195.0 696 195.8 696.5 196.8 697 197.8 697.5 199.0 698 200.3 698.5 201.6 699 203.1 699.5 204.7 700 206.3 700.5 206.5 701 205.4 701.5 204.3 702 203.3 702.5 202.4 703 201.7 703.5 201.0 704 200.5 704.5 200.1 705 199.8 705.5 199.6 706 199.5 706.5 199.5 707 199.7 707.5 199.9 708 200.1 708.5 200.4 709 200.7 709.5 201.1 710 201.5 710.5 202.2 711 202.9 711.5 203.7 712 204.7 712.5 205.8 713 207.0 713.5 208.4 714 209.8 714.5 211.3 715 212.0 717 212.0 717.5 211.8 718 211.0 718.5 210.2 719 209.6 719.5 209.1 720 208.8 720.5 208.5 721 208.4 721.5 208.4 722 208.4 722.5 208.6 723 208.8 723.5 209.1 724 209.4 724.5 209.8 725 210.2 725.5 210.7 726 211.4 726.5 212.0 779.5 212.0" stroke="#3d8fd6" stroke-width="1.4"/>
<path d="M49 212.0 100 212.0 100.5 211.4 101 210.6 101.5 210.0 102 209.5 102.5 209.2 103 208.9 103.5 208.7 104 208.6 104.5 208.6 105 208.8 105.5 209.2 106 209.8 106.5 210.7 107 211.7 107.5 212.0 112.5 212.0 113 211.2 113.5 209.2 114 207.3 114.5 205.7 115 204.3 115.5 203.1 116 202.2 116.5 201.4 117 200.9 117.5 200.5 118 200.2 118.5 199.9 119 199.7 119.5 199.7 120 199.7 120.5 200.0 121 200.4 121.5 201.1 122 202.0 122.5 203.1 123 204.5 123.5 206.0 124 207.8 124.5 209.7 125 211.8 125.5 212.0 126.5 212.0 127 210.3 127.5 207.8 128 205.4 128.5 203.2 129 201.1 129.5 199.3 130 197.8 130.5 196.4 131 195.3 131.5 194.4 132 193.7 132.5 193.1 133 192.5 133.5 192.1 134 191.7 134.5 191.4 135 191.2 135.5 191.2 136 191.3 136.5 191.7 137 192.2 137.5 193.0 138 194.0 138.5 195.2 139 196.6 139.5 198.3 140 200.1 140.5 202.1 141 204.2 141.5 205.9 142 203.0 142.5 200.1 143 197.4 143.5 194.9 144 192.6 144.5 190.4 145 188.5 145.5 186.8 146 185.5 146.5 184.6 147 184.1 147.5 183.8 148 183.6 148.5 183.5 149 183.5 149.5 183.5 150 183.4 150.5 183.3 151 183.1 151.5 182.6 152 181.8 152.5 180.9 153 180.0 153.5 179.1 154 178.1 154.5 177.2 155 176.3 155.5 175.3 156 174.3 156.5 173.4 157 172.4 157.5 171.4 158 170.4 158.5 169.4 159 168.3 159.5 167.3 160 166.3 160.5 165.2 161 164.1 161.5 163.1 162 162.0 162.5 160.9 163 159.8 163.5 158.7 164 157.5 164.5 156.4 165 155.3 165.5 154.1 166 153.0 166.5 151.8 167 150.6 167.5 149.4 168 148.2 168.5 147.0 169 145.8 169.5 144.5 170 143.3 170.5 142.0 171 97.8 171 111.3 172 113.5 172 99.0 173 97.6 173 111.2 174 107.3 174 99.1 175 98.6 175 105.8 176 107.7 176 97.7 177 97.7 177 107.1 178 107.7 178 96.6 179 96.9 179 106.9 180 111.9 180 97.3 181 98.2 181 115.2 182 108.4 182 97.9 183 98.1 183 112.2 184 112.7 184 96.0 185 97.3 185 105.9 186 106.1 186 98.5 187 98.8 187 112.9 188 106.7 188 96.5 189 98.8 189 108.0 190 106.4 190 97.4 191 97.6 191 112.4 192 105.9 192 96.7 193 98.8 193 106.2 194 105.9 194 97.3 195 97.6 195 106.5 196 107.4 196 97.0 197 96.4 197 111.2 198 106.4 198 97.7 199 98.1 199 116.2 200 106.3 200 96.9 201 99.4 201 106.6 202 108.6 202 97.6 203 98.9 203 105.2 204 106.2 204 99.1 205 99.5 205 110.5 206 119.5 206 99.6 207 96.9 207 112.2 208 114.0 208 96.9 209 97.7 209 108.5 210 107.7 210 96.7 211 97.8 211 106.7 212 106.6 212 98.4 213 99.0 213 108.8 214 106.1 214 97.0 215 96.9 215 109.1 216 110.2 216 96.5 217 98.7 217 108.1 218 106.5 218 98.1 219 99.3 219 107.1 220 105.4 220 96.6 221 97.1 221 109.6 222 112.5 222 97.3 223 97.8 223 108.2 224 105.6 224 98.0 225 98.2 225 107.9 226 110.7 226 96.6 227 98.5 227 110.3 228 111.7 228 96.8 229 97.5 229 108.9 230 118.9 230 98.9 231 99.4 231 118.9 232 109.4 232 98.7 233 97.9 233 109.4 234 110.2 234 99.2 235 97.1 235 108.1 236 108.2 236 96.6 237 97.2 237 108.8 238 115.5 238 99.7 239 100.4 239 112.6 240 111.8 240 96.9 241 96.2 241 108.8 242 107.0 242 98.2 243 97.2 243 105.3 244 109.0 244 98.1 245 98.5 245 107.2 246 109.3 246 96.7 247 98.4 247 107.6 248 106.1 248 96.9 249 95.9 249 109.8 250 113.1 250 97.9 251 95.8 251 118.4 252 106.4 252 99.2 253 96.8 253 106.0 254 113.1 254 97.8 255 95.5 255 109.2 256 105.6 256 97.8 257 98.7 257 106.7 258 108.6 258 96.0 259 99.5 259 108.1 260 107.3 260 97.3 261 98.6 261 110.1 262 107.1 262 96.3 263 97.9 263 105.3 264 112.5 264 96.9 265 97.9 265 108.4 266 110.7 266 99.0 267 100.2 267 108.1 268 105.8 268 95.9 269 97.6 269 111.9 270 106.1 270 99.1 271 98.2 271 108.7 272 107.5 272 96.7 273 99.4 273 106.2 274 109.4 274 95.5 275 98.1 275 112.2 276 105.4 276 98.2 277 96.4 277 112.6 278 107.4 278 97.6 279 98.9 279 109.6 280 110.2 280 96.8 281 97.3 281 109.7 282 111.7 282 96.6 283 98.8 283 118.8 284 107.7 284 99.1 285 97.1 285 112.8 286 108.9 286 98.3 287 100.2 287 107.0 288 116.2 288 98.5 289 97.1 289 110.7 290 108.9 290 98.6 291 124.0 291.5 125.8 292 127.6 292.5 129.4 293 131.1 293.5 132.9 294 134.6 294.5 136.3 295 138.0 295.5 139.7 296 141.3 296.5 142.9 297 144.5 297.5 146.1 298 147.7 298.5 149.2 299 150.7 299.5 152.2 300 153.7 300.5 155.2 301 156.6 301.5 158.0 302 159.4 302.5 160.8 303 162.1 303.5 163.5 304 164.8 304.5 166.1 305 167.3 305.5 168.6 306 169.8 306.5 171.0 307 172.2 307.5 173.4 308 174.5 308.5 175.7 309 176.8 309.5 177.9 310 178.9 310.5 180.0 311 181.0 311.5 182.0 312 183.0 312.5 184.6 313 186.2 313.5 187.8 314 188.8 314.5 189.9 315 191.1 315.5 192.5 316 193.9 316.5 195.4 317 197.1 317.5 198.7 318 199.7 318.5 197.7 319 195.8 319.5 194.0 320 192.2 320.5 190.6 321 189.0 321.5 187.6 322 186.3 322.5 185.2 323 184.5 323.5 183.8 324 183.3 324.5 182.9 325 182.7 325.5 182.5 326 182.5 326.5 182.6 327 182.7 327.5 182.9 328 183.1 328.5 183.5 329 184.0 329.5 184.6 330 185.3 330.5 186.2 331 187.3 331.5 186.2 332 184.6 332.5 183.0 333 182.0 333.5 181.0 334 180.0 334.5 178.9 335 177.9 335.5 176.8 336 175.7 336.5 174.5 337 173.4 337.5 172.2 338 171.0 338.5 169.8 339 168.6 339.5 167.3 340 166.1 340.5 164.8 341 163.5 341.5 162.1 342 160.8 342.5 159.4 343 158.0 343.5 156.6 344 155.2 344.5 153.7 345 152.2 345.5 150.7 346 149.2 346.5 147.7 347 146.1 347.5 144.5 348 142.9 348.5 141.3 349 139.7 349.5 138.0 350 136.3 350.5 134.6 351 132.9 351.5 131.1 352 129.4 352.5 127.6 353 125.8 353.5 124.0 354 96.5 354 112.8 355 105.3 355 98.7 356 95.8 356 109.7 357 113.5 357 97.6 358 99.2 358 106.7 359 111.5 359 97.2 360 95.7 360 116.8 361 114.3 361 98.6 362 97.2 362 106.1 363 105.3 363 98.8 364 98.5 364 106.7 365 109.8 365 97.7 366 97.3 366 109.2 367 107.2 367 97.4 368 97.6 368 106.7 369 107.4 369 95.5 370 99.0 370 109.9 371 106.8 371 99.9 372 97.2 372 108.7 373 105.9 373 97.6 374 99.4 374 105.9 375 107.2 375 95.9 376 98.6 376 108.3 377 111.3 377 99.4 378 97.4 378 105.7 379 108.6 379 97.1 380 95.5 380 115.6 381 111.5 381 99.5 382 99.2 382 119.9 383 127.7 383 98.1 384 98.3 384 110.7 385 105.6 385 97.9 386 98.6 386 112.0 387 109.8 387 99.6 388 98.3 388 105.7 389 105.2 389 97.0 390 97.0 390 107.8 391 107.4 391 98.6 392 97.2 392 111.6 393 111.2 393 97.4 394 98.4 394 107.7 395 107.9 395 98.2 396 97.8 396 105.6 397 110.0 397 95.5 398 97.6 398 111.8 399 112.3 399 98.8 400 98.0 400 108.9 401 107.6 401 98.4 402 96.6 402 111.9 403 111.1 403 100.2 404 99.0 404 110.5 405 106.8 405 96.9 406 97.4 406 108.5 407 109.3 407 97.8 408 97.0 408 107.5 409 110.8 409 99.3 410 97.4 410 110.8 411 105.4 411 99.1 412 99.2 412 132.4 413 142.4 413 102.1 414 101.3 414 142.4 415 132.4 415 98.2 416 97.1 416 105.9 417 116.3 417 99.0 418 97.1 418 106.8 419 105.8 419 95.5 420 98.0 420 106.8 421 106.9 421 96.8 422 97.0 422 109.8 423 107.5 423 99.2 424 99.3 424 106.6 425 105.8 425 97.8 426 100.2 426 107.4 427 105.7 427 97.8 428 97.5 428 108.2 429 107.7 429 97.3 430 97.3 430 112.0 431 105.5 431 96.3 432 98.2 432 109.1 433 105.6 433 96.3 434 97.2 434 110.8 435 105.3 435 97.2 436 98.0 436 110.7 437 106.5 437 96.7 438 98.6 438 105.3 439 109.0 439 97.0 440 96.6 440 108.1 441 107.0 441 98.6 442 98.9 442 105.7 443 107.2 443 98.7 444 97.9 444 106.0 445 108.7 445 97.4 446 96.8 446 109.7 447 110.9 447 95.7 448 96.0 448 106.2 449 111.8 449 97.5 450 98.2 450 113.8 451 108.9 451 99.1 452 96.9 452 108.1 453 107.8 453 97.2 454 98.1 454 105.9 455 107.5 455 98.0 456 97.9 456 115.7 457 108.6 457 100.7 458 97.9 458 107.9 459 105.6 459 97.4 460 97.9 460 106.0 461 109.5 461 99.0 462 97.8 462 109.3 463 106.3 463 97.3 464 95.8 464 105.9 465 108.0 465 96.6 466 97.1 466 108.8 467 114.6 467 97.9 468 99.3 468 108.6 469 107.5 469 98.3 470 99.3 470 108.5 471 106.7 471 97.9 472 96.6 472 115.2 473 110.5 473 96.6 474 96.8 474 130.2 475 124.6 475 97.8 476 96.7 476 109.1 477 106.6 477 98.1 478 100.0 478 111.7 479 106.1 479 97.7 480 97.8 480 108.9 481 105.4 481 99.7 482 98.4 482 106.1 483 107.8 483 100.5 484 98.3 484 108.8 485 105.5 485 96.5 486 98.5 486 109.6 487 106.7 487 96.3 488 97.6 488 109.0 489 105.9 489 98.6 490 99.8 490 108.7 491 105.3 491 97.0 492 97.1 492 110.1 493 106.9 493 99.5 494 98.3 494 105.5 495 108.7 495 96.6 496 98.6 496 105.8 497 109.8 497 97.4 498 100.0 498 108.5 499 110.5 499 98.8 500 97.0 500 110.7 501 108.5 501 99.1 502 99.4 502 111.9 503 105.8 503 99.4 504 98.2 504 108.2 505 106.9 505 99.6 506 97.9 506 107.9 507 114.1 507 97.2 508 96.1 508 106.0 509 106.8 509 98.3 510 96.0 510 109.6 511 105.9 511 97.2 512 98.1 512 107.8 513 109.2 513 97.2 514 96.1 514 109.2 515 114.5 515 96.1 516 97.0 516 114.3 517 105.8 517 97.9 518 96.9 518 111.0 519 106.2 519 97.6 520 97.6 520 109.2 521 108.3 521 97.5 522 95.8 522 110.8 523 114.7 523 99.1 524 97.9 524 110.9 525 108.4 525 99.0 526 96.8 526 112.0 527 106.3 527 96.6 528 96.3 528 106.0 529 111.1 529 98.2 530 97.7 530 106.4 531 114.0 531 96.9 532 97.6 532 109.0 533 107.5 533 97.5 534 97.6 534 129.9 535 135.5 535 100.6 536 101.9 536 134.2 537 124.8 537 97.3 538 99.4 538 109.9 539 108.6 539 98.3 540 99.3 540 109.8 541 109.8 541 97.9 542 98.6 542 105.4 543 108.1 543 97.2 544 96.4 544 109.1 545 108.4 545 99.2 546 98.7 546 107.3 547 109.1 547 97.4 548 96.2 548 108.6 549 106.0 549 96.9 550 97.3 550 106.2 551 106.2 551 97.9 552 98.3 552 109.4 553 107.4 553 97.4 554 97.2 554 114.4 555 106.5 555 97.6 556 98.4 556 116.3 557 106.2 557 99.6 558 98.7 558 110.0 559 105.5 559 98.2 560 99.1 560 107.5 561 105.3 561 97.4 562 99.4 562 107.0 563 106.6 563 98.1 564 97.4 564 109.1 565 113.4 565 96.9 566 97.5 566 108.6 567 114.0 567 96.5 568 98.5 568 109.2 569 110.6 569 98.7 570 96.6 570 107.3 571 106.6 571 98.8 572 98.0 572 108.9 573 110.0 573 99.7 574 96.6 574 108.7 575 107.5 575 97.0 576 98.6 576 107.5 577 108.1 577 99.7 578 97.5 578 107.1 579 113.1 579 97.5 580 96.5 580 107.9 581 106.0 581 95.7 582 97.5 582 109.4 583 110.9 583 98.0 584 98.1 584 109.8 585 106.7 585 98.1 586 99.3 586 107.4 587 110.5 587 98.8 588 97.9 588 106.8 589 108.4 589 99.6 590 99.3 590 110.1 591 110.4 591 96.5 592 98.6 592 105.5 593 106.0 593 96.9 594 96.6 594 106.2 595 107.7 595 97.8 596 96.9 596 133.2 597 123.8 597 98.0 598 98.8 598 108.3 599 106.9 599 97.9 600 97.7 600 107.9 601 107.4 601 97.7 602 97.7 602 112.8 603 109.2 603 98.2 604 96.6 604 111.0 605 109.0 605 98.0 606 98.3 606 105.9 607 109.8 607 96.8 608 98.9 608 106.9 609 108.8 609 97.8 610 96.2 610 111.1 611 106.2 611 97.7 612 96.2 612 107.7 613 111.3 613 98.1 614 98.4 614 108.9 615 112.0 615 98.0 616 98.4 616 111.6 617 108.9 617 98.2 618 98.3 618 108.4 619 108.0 619 96.9 620 97.4 620 109.5 621 107.9 621 98.0 622 98.6 622 107.7 623 106.9 623 95.5 624 98.0 624 109.0 625 108.4 625 96.2 626 99.1 626 110.5 627 105.3 627 98.6 628 96.4 628 106.0 629 110.1 629 99.0 630 99.0 630 108.5 631 106.7 631 97.9 632 98.6 632 109.4 633 109.2 633 98.1 634 97.6 634 106.8 635 106.6 635 96.8 636 97.6 636 109.2 637 107.8 637 97.5 638 96.3 638 108.0 639 107.8 639 96.2 640 98.2 640 109.8 641 109.4 641 99.8 642 98.9 642 106.0 643 108.5 643 96.6 644 98.3 644 110.0 645 114.2 645 98.6 646 98.3 646 106.9 647 112.1 647 96.0 648 97.7 648 108.5 649 105.7 649 98.2 650 98.6 650 106.1 651 106.4 651 99.0 652 95.5 652 108.2 653 109.1 653 97.8 654 97.6 654 105.9 655 112.9 655 98.1 656 96.6 656 109.0 657 134.4 657.5 136.1 658 137.7 658.5 139.4 659 141.0 659.5 142.6 660 144.2 660.5 145.7 661 147.3 661.5 148.8 662 150.3 662.5 151.8 663 153.3 663.5 154.7 664 156.1 664.5 157.5 665 158.9 665.5 160.3 666 161.6 666.5 163.0 667 164.3 667.5 165.6 668 166.8 668.5 168.1 669 169.3 669.5 170.5 670 171.7 670.5 172.8 671 174.0 671.5 175.1 672 176.2 672.5 177.3 673 178.4 673.5 179.4 674 180.4 674.5 181.4 675 182.4 675.5 183.2 676 183.5 676.5 183.8 677 184.0 677.5 184.1 678 184.1 678.5 184.1 679 184.0 679.5 183.9 680 183.7 680.5 183.6 681 183.5 681.5 183.5 682 184.0 682.5 184.5 683 185.2 683.5 185.9 684 186.7 684.5 187.6 685 188.7 685.5 189.8 686 191.0 686.5 192.4 687 193.8 687.5 195.3 688 196.9 688.5 198.0 689 197.1 689.5 196.3 690 195.6 690.5 195.0 691 194.4 691.5 193.9 692 193.6 692.5 193.3 693 193.2 693.5 193.2 694 193.2 694.5 193.3 695 193.4 695.5 193.6 696 193.9 696.5 194.1 697 194.4 697.5 194.7 698 195.1 698.5 195.6 699 196.2 699.5 196.9 700 197.8 700.5 198.7 701 199.7 701.5 200.8 702 202.0 702.5 203.3 703 204.7 703.5 206.1 704 207.1 704.5 206.2 705 205.2 705.5 204.4 706 203.6 706.5 202.9 707 202.4 707.5 201.9 708 201.5 708.5 201.3 709 201.1 709.5 201.0 710 201.1 710.5 201.2 711 201.4 711.5 201.7 712 202.0 712.5 202.3 713 202.7 713.5 203.2 714 203.7 714.5 204.4 715 205.1 715.5 206.0 716 206.9 716.5 208.0 717 209.2 717.5 210.4 718 211.8 718.5 212.0 721.5 212.0 722 211.8 722.5 211.3 723 210.8 723.5 210.5 724 210.3 724.5 210.2 725 210.2 725.5 210.2 726 210.4 726.5 210.6 727 210.9 727.5 211.2 728 211.5 728.5 211.9 729 212.0 779.5 212.0" stroke="#e8792b" stroke-width="1.4"/>
<path d="M49 212.0 95.5 212.0 96 211.9 96.5 211.6 97 211.4 97.5 211.3 98 211.3 98.5 211.3 99 211.5 99.5 211.8 100 212.0 105 212.0 105.5 211.1 106 209.8 106.5 208.7 107 207.7 107.5 206.7 108 205.9 108.5 205.2 109 204.6 109.5 204.1 110 203.6 110.5 203.3 111 203.0 111.5 202.7 112 202.4 112.5 202.2 113 202.1 113.5 202.1 114 202.1 114.5 202.3 115 202.7 115.5 203.1 116 203.7 116.5 204.3 117 205.1 117.5 205.9 118 206.9 118.5 207.8 119 208.2 119.5 206.7 120 205.2 120.5 203.8 121 202.5 121.5 201.3 122 200.2 122.5 199.2 123 198.3 123.5 197.6 124 196.9 124.5 196.3 125 195.9 125.5 195.5 126 195.2 126.5 194.9 127 194.7 127.5 194.4 128 194.3 128.5 194.2 129 194.2 129.5 194.4 130 194.6 130.5 194.9 131 195.2 131.5 195.6 132 196.2 132.5 196.8 133 197.5 133.5 198.3 134 199.2 134.5 199.4 135 197.8 135.5 196.2 136 194.7 136.5 193.3 137 191.9 137.5 190.7 138 189.6 138.5 188.6 139 187.7 139.5 186.9 140 186.2 140.5 185.6 141 185.1 141.5 184.7 142 184.3 142.5 184.0 143 183.6 143.5 183.5 144 183.7 144.5 183.9 145 184.1 145.5 184.2 146 184.4 146.5 184.4 147 184.3 147.5 184.2 148 184.0 148.5 183.6 149 183.2 149.5 182.6 150 181.7 150.5 180.8 151 179.9 151.5 179.0 152 178.0 152.5 177.1 153 176.1 153.5 175.1 154 174.1 154.5 173.2 155 172.1 155.5 171.1 156 170.1 156.5 169.1 157 168.0 157.5 167.0 158 165.9 158.5 164.8 159 163.8 159.5 162.7 160 161.6 160.5 160.4 161 159.3 161.5 158.2 162 157.0 162.5 155.9 163 154.7 163.5 153.5 164 152.4 164.5 151.2 165 150.0 165.5 148.8 166 147.5 166.5 146.3 167 145.1 167.5 143.8 168 142.5 168.5 141.3 169 140.0 169.5 138.7 170 137.4 170.5 136.1 171 99.0 171 115.2 172 105.5 172 98.3 173 96.6 173 111.4 174 106.4 174 97.8 175 98.6 175 113.5 176 107.7 176 95.9 177 96.4 177 107.8 178 109.9 178 97.8 179 99.7 179 117.2 180 106.9 180 96.4 181 96.4 181 106.6 182 105.9 182 98.5 183 96.2 183 107.8 184 109.4 184 98.7 185 98.1 185 106.3 186 109.1 186 98.3 187 97.6 187 107.6 188 106.6 188 98.0 189 96.2 189 105.3 190 105.5 190 98.2 191 97.3 191 108.7 192 107.5 192 97.8 193 97.5 193 113.4 194 106.5 194 98.7 195 97.8 195 110.4 196 107.3 196 96.3 197 96.9 197 106.3 198 108.1 198 99.1 199 98.3 199 113.6 200 107.8 200 98.9 201 98.6 201 108.4 202 110.0 202 98.5 203 99.2 203 109.2 204 107.8 204 97.3 205 96.8 205 106.9 206 110.3 206 97.6 207 98.3 207 105.8 208 108.1 208 97.6 209 98.7 209 105.6 210 108.7 210 96.7 211 95.5 211 106.3 212 105.2 212 100.8 213 97.4 213 106.7 214 106.4 214 97.8 215 97.6 215 105.5 216 108.6 216 98.1 217 99.5 217 109.0 218 116.0 218 97.9 219 98.3 219 105.6 220 105.4 220 98.0 221 97.9 221 109.5 222 111.1 222 98.4 223 95.5 223 109.8 224 111.8 224 99.2 225 98.2 225 116.7 226 116.7 226 99.2 227 98.0 227 106.2 228 108.7 228 96.1 229 97.9 229 111.0 230 117.0 230 98.7 231 99.3 231 117.0 232 113.8 232 97.2 233 98.6 233 106.5 234 108.6 234 97.1 235 98.6 235 107.7 236 114.6 236 98.4 237 97.9 237 107.7 238 107.2 238 99.6 239 96.5 239 108.5 240 106.0 240 99.1 241 97.7 241 111.7 242 110.6 242 97.3 243 95.5 243 109.3 244 105.3 244 97.3 245 96.9 245 106.8 246 108.6 246 98.4 247 98.0 247 107.3 248 105.2 248 97.8 249 96.6 249 105.4 250 105.8 250 98.9 251 97.4 251 110.6 252 110.7 252 95.5 253 98.9 253 112.5 254 111.5 254 99.8 255 98.4 255 106.6 256 105.4 256 98.0 257 96.0 257 107.1 258 106.2 258 97.3 259 96.5 259 105.5 260 112.7 260 98.6 261 97.9 261 108.1 262 106.7 262 97.5 263 98.7 263 110.5 264 107.4 264 97.5 265 98.1 265 107.2 266 106.9 266 97.6 267 99.3 267 109.0 268 112.3 268 100.1 269 96.3 269 106.9 270 106.6 270 97.8 271 97.9 271 108.4 272 107.9 272 95.5 273 96.7 273 106.4 274 107.5 274 97.3 275 98.5 275 107.4 276 113.4 276 97.4 277 97.5 277 115.9 278 107.3 278 98.1 279 96.2 279 108.7 280 105.2 280 96.9 281 97.1 281 111.7 282 105.7 282 98.7 283 98.5 283 108.7 284 107.2 284 96.5 285 97.5 285 110.5 286 110.6 286 98.4 287 97.4 287 112.0 288 109.6 288 97.7 289 98.2 289 112.9 290 105.4 290 97.9 291 118.4 291.5 120.3 292 122.1 292.5 124.0 293 125.8 293.5 127.6 294 129.4 294.5 131.1 295 132.9 295.5 134.6 296 136.3 296.5 138.0 297 139.7 297.5 141.3 298 142.9 298.5 144.5 299 146.1 299.5 147.7 300 149.2 300.5 150.7 301 152.2 301.5 153.7 302 155.2 302.5 156.6 303 158.0 303.5 159.4 304 160.8 304.5 162.1 305 163.5 305.5 164.8 306 166.1 306.5 167.3 307 168.6 307.5 169.8 308 171.0 308.5 172.2 309 173.4 309.5 174.5 310 175.7 310.5 176.8 311 177.9 311.5 178.9 312 180.0 312.5 181.0 313 182.0 313.5 183.0 314 184.6 314.5 185.2 315 184.4 315.5 183.7 316 183.2 316.5 183.0 317 182.8 317.5 182.7 318 182.8 318.5 183.0 319 183.5 319.5 184.2 320 185.1 320.5 186.2 321 187.6 321.5 189.2 322 191.0 322.5 193.1 323 195.5 323.5 198.1 324 200.8 324.5 203.6 325 202.4 325.5 199.9 326 197.5 326.5 195.3 327 193.2 327.5 191.3 328 189.6 328.5 188.1 329 186.8 329.5 185.8 330 185.0 330.5 184.4 331 184.1 331.5 183.9 332 183.0 332.5 182.0 333 181.0 333.5 180.0 334 178.9 334.5 177.9 335 176.8 335.5 175.7 336 174.5 336.5 173.4 337 172.2 337.5 171.0 338 169.8 338.5 168.6 339 167.3 339.5 166.1 340 164.8 340.5 163.5 341 162.1 341.5 160.8 342 159.4 342.5 158.0 343 156.6 343.5 155.2 344 153.7 344.5 152.2 345 150.7 345.5 149.2 346 147.7 346.5 146.1 347 144.5 347.5 142.9 348 141.3 348.5 139.7 349 138.0 349.5 136.3 350 134.6 350.5 132.9 351 131.1 351.5 129.4 352 127.6 352.5 125.8 353 124.0 353.5 122.1 354 96.8 354 108.4 355 107.4 355 96.7 356 98.2 356 110.1 357 108.5 357 98.3 358 96.6 358 108.1 359 105.3 359 98.2 360 97.1 360 108.1 361 106.8 361 98.9 362 97.4 362 108.0 363 107.4 363 97.6 364 100.3 364 108.0 365 105.4 365 98.0 366 97.2 366 105.9 367 106.4 367 97.2 368 97.4 368 105.2 369 108.8 369 96.4 370 97.9 370 108.1 371 112.5 371 98.7 372 96.8 372 106.6 373 112.6 373 95.5 374 98.2 374 109.2 375 110.3 375 96.2 376 98.0 376 106.8 377 109.5 377 99.5 378 98.8 378 108.6 379 112.4 379 98.8 380 96.5 380 108.4 381 116.7 381 97.7 382 98.4 382 120.1 383 128.0 383 97.7 384 96.3 384 109.1 385 112.4 385 97.9 386 98.6 386 110.6 387 106.9 387 97.4 388 98.8 388 109.4 389 109.6 389 97.3 390 96.7 390 107.7 391 110.0 391 97.6 392 98.3 392 107.0 393 108.8 393 97.7 394 99.4 394 112.8 395 106.9 395 96.1 396 95.5 396 106.8 397 108.0 397 97.8 398 100.1 398 108.4 399 111.4 399 98.6 400 99.4 400 110.7 401 107.6 401 99.9 402 98.0 402 106.1 403 106.2 403 98.0 404 98.5 404 110.5 405 108.5 405 96.6 406 97.8 406 107.5 407 105.2 407 98.9 408 97.4 408 107.4 409 107.2 409 99.2 410 98.2 410 109.0 411 107.7 411 98.8 412 97.5 412 133.0 413 143.3 413 101.9 414 101.2 414 143.3 415 133.0 415 97.5 416 97.3 416 107.8 417 112.0 417 97.6 418 96.6 418 110.8 419 111.8 419 99.0 420 97.4 420 106.2 421 110.4 421 96.0 422 97.8 422 109.3 423 105.7 423 100.3 424 96.8 424 106.2 425 106.4 425 98.1 426 97.1 426 112.4 427 106.0 427 97.5 428 97.1 428 106.5 429 110.2 429 96.5 430 97.7 430 108.9 431 105.7 431 97.0 432 99.3 432 106.2 433 106.4 433 98.8 434 98.0 434 105.7 435 116.3 435 96.1 436 98.7 436 107.7 437 107.9 437 98.2 438 97.1 438 108.2 439 110.9 439 98.4 440 99.3 440 113.9 441 110.3 441 100.0 442 97.0 442 105.9 443 106.2 443 99.1 444 97.5 444 111.0 445 107.9 445 97.3 446 98.9 446 107.4 447 109.8 447 97.3 448 100.2 448 106.1 449 105.4 449 98.0 450 99.0 450 108.1 451 107.9 451 97.6 452 97.6 452 105.4 453 107.6 453 97.6 454 97.2 454 108.2 455 108.0 455 98.5 456 99.4 456 110.1 457 107.0 457 99.2 458 96.7 458 110.5 459 107.1 459 99.0 460 98.2 460 106.8 461 106.9 461 97.4 462 98.0 462 106.6 463 109.2 463 98.9 464 100.2 464 108.9 465 107.0 465 96.8 466 98.5 466 111.1 467 107.7 467 99.6 468 98.6 468 108.2 469 110.9 469 97.8 470 100.0 470 105.5 471 110.8 471 97.7 472 97.8 472 108.6 473 111.2 473 97.3 474 97.8 474 130.0 475 124.5 475 98.9 476 99.6 476 108.3 477 107.6 477 98.1 478 98.4 478 105.8 479 108.2 479 96.2 480 98.2 480 106.5 481 107.7 481 97.4 482 97.8 482 108.9 483 108.6 483 99.8 484 97.0 484 114.8 485 108.5 485 98.4 486 99.4 486 108.6 487 109.8 487 97.4 488 96.5 488 108.3 489 113.4 489 98.0 490 98.2 490 108.4 491 107.2 491 98.6 492 98.3 492 105.5 493 106.9 493 96.6 494 97.8 494 105.6 495 111.9 495 97.4 496 97.2 496 109.1 497 110.4 497 101.1 498 97.7 498 105.8 499 110.5 499 97.2 500 97.6 500 109.0 501 114.2 501 99.5 502 98.7 502 111.5 503 109.8 503 97.1 504 97.4 504 108.8 505 105.4 505 97.4 506 99.1 506 108.6 507 105.9 507 97.6 508 96.3 508 113.9 509 112.3 509 97.8 510 96.4 510 105.5 511 107.4 511 96.9 512 97.0 512 106.5 513 106.6 513 98.6 514 98.6 514 109.3 515 108.7 515 98.6 516 96.6 516 110.5 517 110.1 517 96.5 518 99.0 518 107.0 519 106.6 519 99.3 520 97.7 520 107.5 521 110.7 521 96.4 522 97.6 522 105.9 523 111.7 523 97.2 524 97.3 524 106.1 525 106.7 525 97.2 526 98.0 526 107.5 527 109.6 527 97.3 528 97.1 528 108.6 529 106.3 529 98.0 530 96.0 530 107.9 531 107.5 531 99.0 532 98.3 532 108.7 533 112.8 533 98.8 534 96.7 534 133.8 535 140.2 535 101.0 536 102.0 536 138.7 537 127.9 537 97.8 538 98.4 538 106.0 539 105.8 539 99.4 540 98.7 540 113.1 541 109.0 541 97.5 542 97.2 542 107.8 543 108.3 543 98.7 544 97.9 544 106.7 545 115.4 545 97.0 546 96.4 546 113.5 547 105.4 547 97.5 548 98.8 548 106.4 549 110.7 549 99.6 550 97.8 550 107.1 551 107.4 551 98.2 552 98.5 552 106.1 553 106.6 553 98.6 554 98.5 554 110.9 555 118.5 555 97.7 556 97.1 556 105.8 557 108.9 557 98.8 558 95.8 558 109.4 559 105.4 559 96.3 560 98.1 560 113.9 561 110.0 561 97.5 562 96.2 562 111.7 563 111.1 563 98.9 564 98.5 564 111.7 565 106.6 565 98.5 566 99.0 566 108.9 567 106.3 567 97.1 568 98.1 568 109.4 569 110.2 569 97.7 570 97.8 570 107.2 571 107.5 571 98.1 572 96.2 572 109.0 573 106.4 573 98.0 574 98.8 574 106.6 575 106.5 575 99.4 576 98.6 576 106.1 577 107.4 577 97.6 578 97.7 578 108.4 579 110.0 579 97.5 580 98.3 580 108.4 581 112.4 581 97.4 582 97.3 582 109.6 583 110.8 583 99.2 584 97.4 584 105.7 585 112.5 585 97.4 586 98.1 586 108.5 587 106.7 587 96.6 588 97.8 588 109.8 589 105.7 589 98.7 590 96.8 590 108.4 591 108.3 591 95.9 592 99.1 592 112.6 593 106.0 593 97.9 594 96.9 594 107.9 595 108.2 595 97.2 596 96.7 596 130.6 597 121.9 597 96.4 598 99.8 598 111.8 599 110.2 599 97.1 600 99.6 600 107.5 601 109.1 601 98.9 602 99.0 602 107.8 603 105.3 603 97.3 604 99.6 604 105.5 605 108.9 605 97.7 606 99.5 606 108.6 607 107.4 607 95.7 608 98.4 608 106.4 609 108.3 609 97.9 610 99.1 610 108.5 611 105.2 611 98.5 612 96.4 612 114.1 613 106.7 613 97.6 614 99.1 614 109.5 615 110.0 615 98.4 616 98.0 616 108.9 617 105.8 617 95.9 618 98.0 618 105.4 619 109.0 619 97.4 620 96.7 620 106.7 621 109.5 621 95.5 622 97.1 622 107.5 623 109.0 623 99.0 624 98.9 624 110.9 625 113.1 625 96.0 626 97.4 626 107.5 627 107.6 627 99.9 628 98.4 628 107.8 629 112.0 629 98.3 630 98.2 630 105.9 631 110.1 631 97.1 632 97.1 632 109.6 633 105.6 633 96.4 634 99.9 634 105.2 635 105.6 635 97.5 636 98.1 636 108.2 637 105.3 637 99.0 638 96.9 638 107.4 639 106.6 639 99.3 640 99.4 640 107.3 641 109.6 641 96.1 642 97.4 642 111.6 643 109.6 643 96.9 644 96.4 644 105.6 645 107.9 645 99.2 646 96.3 646 109.5 647 108.5 647 97.7 648 97.2 648 108.8 649 107.6 649 97.0 650 97.1 650 108.5 651 108.5 651 98.3 652 97.9 652 107.8 653 111.3 653 97.7 654 96.7 654 108.0 655 112.0 655 100.3 656 96.3 656 108.7 657 132.2 657.5 133.9 658 135.6 658.5 137.3 659 139.0 659.5 140.6 660 142.2 660.5 143.8 661 145.4 661.5 146.9 662 148.5 662.5 150.0 663 151.5 663.5 153.0 664 154.4 664.5 155.9 665 157.3 665.5 158.7 666 160.0 666.5 161.4 667 162.7 667.5 164.1 668 165.4 668.5 166.6 669 167.9 669.5 169.1 670 170.3 670.5 171.5 671 172.7 671.5 173.9 672 175.0 672.5 176.1 673 177.2 673.5 178.3 674 179.4 674.5 180.4 675 181.4 675.5 182.4 676 183.1 676.5 183.4 677 183.6 677.5 183.7 678 183.9 678.5 184.0 679 184.3 679.5 184.6 680 185.0 680.5 185.6 681 186.5 681.5 187.6 682 189.0 682.5 190.5 683 192.1 683.5 193.7 684 194.7 684.5 193.8 685 192.9 685.5 192.1 686 191.4 686.5 190.8 687 190.3 687.5 189.9 688 189.7 688.5 189.5 689 189.5 689.5 189.5 690 189.7 690.5 189.9 691 190.2 691.5 190.6 692 190.9 692.5 191.3 693 191.8 693.5 192.4 694 193.0 694.5 193.7 695 194.6 695.5 195.4 696 196.4 696.5 197.4 697 198.6 697.5 199.9 698 201.2 698.5 202.7 699 204.2 699.5 205.0 700 204.0 700.5 203.0 701 202.1 701.5 201.3 702 200.6 702.5 200.0 703 199.5 703.5 199.1 704 198.8 704.5 198.6 705 198.5 705.5 198.6 706 198.7 706.5 198.9 707 199.1 707.5 199.4 708 199.6 708.5 200.0 709 200.4 709.5 200.9 710 201.6 710.5 202.3 711 203.2 711.5 204.2 712 205.3 712.5 206.5 713 207.8 713.5 209.2 714 210.7 714.5 212.0 715.5 212.0 716 211.3 716.5 210.4 717 209.6 717.5 209.0 718 208.4 718.5 207.9 719 207.6 719.5 207.3 720 207.2 720.5 207.2 721 207.3 721.5 207.4 722 207.7 722.5 207.9 723 208.2 723.5 208.6 724 209.0 724.5 209.5 725 210.0 725.5 210.7 726 211.5 726.5 212.0 779.5 212.0" stroke="#52c23c" stroke-width="1.4"/>
<path d="M49 212.0 95 212.0 95.5 211.9 96 211.6 96.5 211.3 97 211.0 97.5 210.9 98 210.8 98.5 210.8 99 211.0 99.5 211.3 100 211.8 100.5 212.0 106 212.0 106.5 210.6 107 209.2 107.5 207.9 108 206.8 108.5 205.8 109 204.9 109.5 204.2 110 203.6 110.5 203.1 111 202.7 111.5 202.4 112 202.1 112.5 201.8 113 201.6 113.5 201.6 114 201.6 114.5 201.9 115 202.2 115.5 202.7 116 203.4 116.5 204.2 117 205.1 117.5 206.2 118 207.3 118.5 208.6 119 210.0 119.5 210.9 120 209.0 120.5 207.1 121 205.4 121.5 203.7 122 202.2 122.5 200.8 123 199.6 123.5 198.5 124 197.5 124.5 196.7 125 196.0 125.5 195.5 126 195.0 126.5 194.7 127 194.4 127.5 194.2 128 194.0 128.5 193.8 129 193.8 129.5 193.9 130 194.1 130.5 194.3 131 194.7 131.5 195.2 132 195.9 132.5 196.7 133 197.6 133.5 198.7 134 199.9 134.5 201.1 135 201.9 135.5 199.9 136 197.9 136.5 196.0 137 194.2 137.5 192.6 138 191.1 138.5 189.7 139 188.5 139.5 187.4 140 186.5 140.5 185.7 141 185.0 141.5 184.4 142 184.0 142.5 183.6 143 183.4 143.5 183.5 144 183.6 144.5 183.7 145 183.9 145.5 184.0 146 184.1 146.5 184.1 147 184.0 147.5 183.9 148 183.6 148.5 183.2 149 182.6 149.5 181.7 150 180.8 150.5 179.9 151 178.9 151.5 178.0 152 177.0 152.5 176.1 153 175.1 153.5 174.1 154 173.1 154.5 172.1 155 171.1 155.5 170.0 156 169.0 156.5 168.0 157 166.9 157.5 165.8 158 164.7 158.5 163.7 159 162.6 159.5 161.5 160 160.3 160.5 159.2 161 158.1 161.5 156.9 162 155.8 162.5 154.6 163 153.4 163.5 152.2 164 151.0 164.5 149.8 165 148.6 165.5 147.4 166 146.1 166.5 144.9 167 143.6 167.5 142.3 168 141.1 168.5 139.8 169 138.5 169.5 137.2 170 135.9 170.5 134.5 171 97.0 171 106.4 172 108.3 172 95.9 173 98.8 173 108.8 174 106.0 174 97.5 175 97.3 175 107.1 176 105.4 176 98.2 177 97.4 177 108.3 178 113.1 178 98.3 179 96.4 179 106.4 180 105.8 180 99.6 181 97.4 181 106.2 182 110.9 182 98.3 183 97.9 183 110.4 184 107.8 184 98.8 185 101.1 185 106.9 186 107.2 186 96.1 187 97.0 187 106.0 188 107.0 188 97.3 189 97.8 189 111.5 190 107.7 190 97.4 191 98.1 191 110.2 192 109.6 192 97.6 193 96.2 193 105.6 194 112.1 194 98.5 195 98.7 195 109.3 196 110.6 196 95.7 197 98.3 197 109.7 198 105.8 198 97.5 199 98.0 199 107.2 200 110.3 200 97.1 201 97.1 201 105.6 202 107.2 202 97.6 203 98.8 203 105.2 204 108.2 204 98.8 205 97.7 205 106.9 206 109.5 206 95.8 207 99.7 207 114.1 208 110.2 208 97.9 209 97.3 209 111.8 210 110.2 210 98.4 211 97.5 211 109.2 212 106.3 212 97.9 213 96.9 213 107.9 214 109.5 214 96.0 215 98.1 215 111.0 216 109.9 216 97.4 217 97.3 217 106.2 218 107.8 218 97.6 219 97.8 219 107.3 220 107.7 220 100.1 221 97.7 221 110.1 222 107.3 222 98.9 223 98.3 223 109.3 224 106.0 224 97.3 225 97.2 225 108.0 226 110.3 226 98.3 227 98.3 227 109.1 228 114.2 228 98.1 229 98.9 229 107.9 230 118.9 230 96.1 231 95.9 231 118.9 232 110.5 232 98.0 233 96.0 233 107.1 234 107.9 234 97.0 235 99.0 235 105.4 236 108.5 236 96.8 237 97.1 237 108.0 238 106.9 238 97.6 239 99.4 239 105.6 240 108.5 240 98.5 241 100.3 241 109.6 242 110.0 242 97.8 243 98.1 243 105.6 244 107.9 244 99.0 245 99.2 245 106.7 246 105.3 246 96.4 247 99.5 247 111.1 248 111.2 248 97.0 249 97.7 249 111.9 250 106.4 250 96.5 251 99.6 251 106.1 252 108.7 252 97.7 253 96.5 253 109.0 254 105.6 254 98.0 255 99.4 255 105.6 256 107.8 256 99.9 257 98.6 257 106.5 258 109.2 258 96.7 259 96.1 259 107.7 260 110.7 260 97.7 261 96.8 261 107.6 262 105.5 262 96.7 263 97.2 263 108.8 264 107.9 264 98.7 265 97.0 265 109.8 266 109.6 266 98.9 267 97.7 267 108.5 268 110.8 268 96.9 269 96.6 269 109.3 270 107.9 270 97.9 271 96.6 271 111.1 272 107.2 272 96.1 273 96.7 273 107.5 274 106.0 274 97.8 275 97.5 275 105.8 276 116.6 276 97.8 277 97.7 277 107.8 278 106.3 278 97.0 279 96.6 279 108.1 280 116.2 280 97.8 281 97.0 281 108.0 282 105.3 282 97.5 283 97.6 283 109.5 284 112.9 284 98.8 285 97.4 285 108.4 286 108.8 286 97.9 287 97.5 287 108.3 288 107.5 288 96.7 289 97.0 289 112.2 290 107.3 290 97.0 291 129.4 291.5 131.1 292 132.9 292.5 134.6 293 136.3 293.5 138.0 294 139.7 294.5 141.3 295 142.9 295.5 144.5 296 146.1 296.5 147.7 297 149.2 297.5 150.7 298 152.2 298.5 153.7 299 155.2 299.5 156.6 300 158.0 300.5 159.4 301 160.8 301.5 162.1 302 163.5 302.5 164.8 303 166.1 303.5 167.3 304 168.6 304.5 169.8 305 171.0 305.5 172.2 306 173.4 306.5 174.5 307 175.7 307.5 176.8 308 177.9 308.5 178.9 309 180.0 309.5 181.0 310 182.0 310.5 183.0 311 184.6 311.5 186.2 312 187.8 312.5 189.4 313 191.0 313.5 190.3 314 188.8 314.5 187.4 315 186.3 315.5 185.2 316 184.4 316.5 183.7 317 183.2 317.5 182.8 318 182.6 318.5 182.4 319 182.4 319.5 182.4 320 182.5 320.5 182.8 321 183.3 321.5 183.9 322 184.7 322.5 185.8 323 187.2 323.5 188.8 324 190.5 324.5 192.4 325 194.3 325.5 196.4 326 198.6 326.5 199.2 327 197.3 327.5 195.5 328 193.7 328.5 192.1 329 190.6 329.5 189.2 330 188.0 330.5 187.0 331 186.1 331.5 185.5 332 185.0 332.5 184.6 333 184.4 333.5 184.4 334 183.0 334.5 182.0 335 181.0 335.5 180.0 336 178.9 336.5 177.9 337 176.8 337.5 175.7 338 174.5 338.5 173.4 339 172.2 339.5 171.0 340 169.8 340.5 168.6 341 167.3 341.5 166.1 342 164.8 342.5 163.5 343 162.1 343.5 160.8 344 159.4 344.5 158.0 345 156.6 345.5 155.2 346 153.7 346.5 152.2 347 150.7 347.5 149.2 348 147.7 348.5 146.1 349 144.5 349.5 142.9 350 141.3 350.5 139.7 351 138.0 351.5 136.3 352 134.6 352.5 132.9 353 131.1 353.5 129.4 354 97.3 354 115.6 355 105.5 355 97.6 356 97.8 356 107.3 357 114.7 357 95.5 358 97.8 358 106.1 359 110.2 359 97.9 360 96.6 360 108.3 361 106.8 361 95.9 362 98.9 362 108.5 363 111.8 363 98.9 364 96.4 364 111.1 365 108.0 365 96.7 366 97.0 366 106.6 367 105.4 367 98.1 368 97.2 368 108.2 369 108.1 369 99.4 370 99.1 370 109.3 371 109.3 371 96.2 372 99.2 372 106.6 373 107.3 373 98.0 374 97.2 374 109.5 375 109.9 375 97.5 376 99.0 376 108.4 377 111.6 377 98.5 378 97.2 378 105.9 379 106.7 379 98.3 380 96.1 380 110.5 381 107.4 381 98.0 382 95.9 382 120.1 383 128.0 383 97.9 384 96.6 384 108.2 385 106.6 385 97.4 386 97.8 386 109.3 387 109.1 387 99.3 388 97.3 388 107.9 389 118.1 389 97.8 390 97.5 390 109.6 391 106.5 391 98.5 392 98.9 392 106.2 393 111.3 393 98.9 394 98.0 394 109.1 395 108.1 395 96.9 396 98.3 396 105.2 397 109.5 397 99.1 398 98.8 398 112.1 399 107.3 399 99.1 400 99.7 400 105.6 401 107.3 401 98.3 402 98.6 402 106.6 403 109.5 403 98.3 404 95.9 404 107.2 405 106.1 405 96.9 406 96.4 406 107.9 407 105.2 407 97.9 408 97.6 408 107.0 409 105.5 409 98.8 410 99.8 410 112.9 411 107.9 411 99.6 412 98.3 412 131.0 413 140.6 413 102.3 414 102.5 414 140.6 415 131.0 415 98.0 416 99.6 416 108.8 417 107.5 417 98.3 418 97.4 418 110.8 419 118.4 419 99.2 420 98.4 420 109.3 421 110.2 421 97.4 422 97.8 422 109.2 423 108.0 423 97.4 424 97.8 424 107.5 425 107.3 425 97.9 426 96.4 426 106.2 427 110.4 427 96.9 428 97.6 428 116.4 429 107.7 429 97.3 430 97.9 430 108.7 431 105.9 431 97.9 432 97.4 432 111.5 433 115.5 433 97.6 434 95.5 434 107.4 435 107.6 435 97.6 436 97.4 436 115.4 437 107.4 437 95.6 438 98.8 438 112.0 439 107.5 439 97.7 440 96.5 440 108.6 441 111.5 441 97.6 442 97.9 442 114.6 443 107.3 443 98.7 444 97.8 444 108.3 445 107.3 445 98.6 446 96.7 446 107.9 447 107.5 447 97.2 448 98.1 448 105.4 449 114.5 449 96.6 450 98.9 450 109.0 451 107.9 451 98.7 452 97.0 452 106.6 453 106.4 453 97.5 454 99.0 454 109.5 455 108.1 455 98.6 456 98.1 456 106.1 457 106.4 457 98.5 458 97.6 458 108.1 459 112.8 459 97.9 460 97.3 460 109.2 461 106.8 461 97.9 462 97.4 462 106.5 463 106.0 463 98.3 464 97.4 464 110.1 465 108.1 465 97.5 466 97.1 466 108.3 467 106.5 467 97.5 468 98.2 468 110.9 469 106.4 469 97.9 470 96.4 470 111.2 471 108.6 471 98.1 472 97.8 472 119.2 473 111.7 473 96.1 474 97.1 474 133.5 475 127.3 475 97.1 476 98.8 476 109.8 477 111.1 477 98.8 478 97.5 478 107.6 479 111.3 479 95.6 480 99.7 480 105.2 481 111.8 481 99.6 482 97.2 482 110.6 483 113.7 483 97.6 484 98.9 484 105.7 485 110.6 485 96.9 486 97.6 486 105.8 487 110.8 487 98.3 488 97.9 488 109.7 489 106.6 489 98.4 490 97.5 490 108.2 491 105.8 491 98.6 492 99.0 492 109.8 493 107.2 493 98.6 494 97.5 494 105.2 495 106.8 495 96.7 496 98.5 496 105.2 497 111.6 497 98.9 498 97.5 498 106.0 499 111.8 499 96.7 500 98.3 500 106.9 501 106.0 501 96.2 502 98.7 502 112.2 503 113.7 503 96.3 504 97.1 504 105.8 505 106.8 505 99.6 506 97.3 506 113.0 507 108.0 507 98.1 508 98.0 508 108.9 509 108.5 509 98.6 510 97.8 510 113.2 511 105.6 511 98.5 512 97.7 512 110.3 513 116.3 513 96.7 514 96.4 514 112.4 515 105.8 515 96.7 516 96.9 516 105.2 517 106.3 517 97.4 518 98.1 518 108.9 519 105.3 519 99.0 520 96.8 520 106.2 521 105.3 521 98.3 522 97.6 522 111.6 523 108.9 523 99.3 524 97.4 524 109.0 525 107.9 525 96.4 526 97.9 526 109.1 527 105.6 527 96.9 528 98.0 528 109.2 529 111.3 529 97.7 530 98.3 530 105.7 531 107.7 531 100.7 532 97.5 532 109.6 533 111.9 533 97.3 534 97.2 534 131.5 535 137.5 535 100.8 536 102.1 536 136.1 537 126.1 537 97.4 538 98.5 538 107.8 539 105.6 539 95.5 540 99.3 540 106.8 541 112.6 541 98.2 542 98.4 542 110.6 543 118.1 543 96.7 544 97.5 544 106.6 545 113.1 545 97.3 546 99.7 546 107.5 547 105.6 547 98.4 548 96.7 548 107.6 549 105.6 549 98.4 550 99.2 550 109.9 551 105.2 551 97.6 552 98.5 552 109.6 553 107.6 553 97.8 554 97.5 554 109.8 555 109.6 555 98.9 556 97.9 556 114.4 557 110.1 557 96.4 558 98.1 558 106.5 559 105.5 559 98.1 560 98.4 560 105.8 561 110.2 561 97.5 562 97.3 562 106.7 563 110.5 563 98.8 564 97.7 564 109.5 565 114.4 565 96.0 566 99.6 566 106.6 567 109.9 567 96.7 568 96.9 568 111.3 569 105.5 569 99.4 570 99.6 570 105.5 571 105.7 571 98.4 572 96.3 572 106.2 573 105.6 573 98.5 574 97.8 574 110.8 575 113.1 575 97.7 576 97.9 576 112.1 577 107.5 577 95.7 578 97.5 578 106.6 579 106.2 579 99.1 580 97.5 580 114.0 581 107.6 581 97.1 582 99.0 582 109.3 583 109.0 583 97.6 584 98.5 584 107.4 585 106.6 585 99.2 586 98.8 586 106.9 587 108.6 587 97.0 588 98.0 588 108.2 589 105.8 589 99.6 590 97.1 590 110.7 591 106.8 591 98.2 592 101.0 592 108.7 593 107.0 593 99.0 594 100.4 594 115.2 595 105.5 595 98.5 596 95.5 596 135.8 597 125.6 597 95.7 598 97.5 598 106.5 599 109.1 599 98.8 600 99.1 600 112.8 601 110.2 601 98.6 602 97.6 602 106.9 603 111.9 603 96.5 604 97.8 604 111.6 605 106.5 605 96.5 606 98.0 606 105.6 607 108.7 607 100.1 608 97.5 608 106.3 609 110.8 609 96.7 610 97.2 610 109.8 611 110.1 611 96.6 612 98.8 612 106.7 613 106.7 613 98.1 614 97.8 614 107.5 615 108.3 615 97.4 616 97.2 616 105.6 617 105.9 617 96.8 618 98.3 618 111.6 619 105.3 619 99.0 620 98.3 620 106.6 621 108.7 621 98.0 622 98.3 622 105.7 623 105.4 623 98.8 624 96.9 624 107.3 625 107.6 625 96.8 626 96.8 626 108.1 627 108.0 627 97.0 628 97.2 628 111.0 629 111.1 629 98.3 630 98.3 630 106.2 631 110.9 631 97.5 632 99.8 632 106.5 633 113.1 633 97.6 634 99.9 634 113.7 635 106.4 635 95.8 636 97.1 636 107.5 637 105.8 637 98.5 638 97.8 638 109.2 639 106.8 639 98.4 640 96.2 640 108.3 641 106.6 641 96.6 642 97.7 642 105.7 643 106.3 643 98.4 644 97.2 644 115.2 645 110.0 645 97.5 646 97.8 646 107.4 647 106.8 647 98.4 648 99.5 648 105.7 649 106.3 649 99.3 650 98.6 650 110.4 651 105.4 651 99.6 652 98.8 652 108.4 653 112.3 653 95.9 654 97.8 654 112.9 655 105.8 655 97.1 656 98.4 656 106.1 657 130.0 657.5 131.7 658 133.5 658.5 135.2 659 136.9 659.5 138.5 660 140.2 660.5 141.8 661 143.4 661.5 145.0 662 146.6 662.5 148.1 663 149.7 663.5 151.2 664 152.7 664.5 154.1 665 155.6 665.5 157.0 666 158.4 666.5 159.8 667 161.2 667.5 162.5 668 163.9 668.5 165.2 669 166.5 669.5 167.7 670 169.0 670.5 170.2 671 171.4 671.5 172.6 672 173.8 672.5 174.9 673 176.0 673.5 177.2 674 178.2 674.5 179.3 675 180.4 675.5 181.4 676 182.4 676.5 183.1 677 183.4 677.5 183.6 678 183.8 678.5 183.9 679 184.2 679.5 184.4 680 184.8 680.5 185.3 681 186.1 681.5 187.0 682 188.3 682.5 189.7 683 191.2 683.5 192.7 684 193.3 684.5 192.5 685 191.7 685.5 191.1 686 190.5 686.5 190.0 687 189.6 687.5 189.3 688 189.1 688.5 189.0 689 189.0 689.5 189.1 690 189.2 690.5 189.5 691 189.8 691.5 190.2 692 190.6 692.5 191.0 693 191.4 693.5 192.0 694 192.6 694.5 193.4 695 194.2 695.5 195.1 696 196.0 696.5 197.0 697 198.1 697.5 199.3 698 200.6 698.5 201.9 699 203.3 699.5 203.7 700 202.8 700.5 202.0 701 201.2 701.5 200.5 702 199.8 702.5 199.3 703 198.9 703.5 198.6 704 198.4 704.5 198.2 705 198.2 705.5 198.3 706 198.4 706.5 198.6 707 198.9 707.5 199.1 708 199.4 708.5 199.8 709 200.2 709.5 200.7 710 201.3 710.5 202.0 711 202.8 711.5 203.7 712 204.8 712.5 205.9 713 207.2 713.5 208.5 714 209.9 714.5 211.4 715 211.8 715.5 211.0 716 210.2 716.5 209.4 717 208.8 717.5 208.2 718 207.7 718.5 207.3 719 207.1 719.5 206.9 720 206.8 720.5 206.8 721 206.9 721.5 207.1 722 207.4 722.5 207.7 723 208.0 723.5 208.3 724 208.7 724.5 209.2 725 209.7 725.5 210.4 726 211.1 726.5 212.0 727 212.0 779.5 212.0" stroke="#ad5fe2" stroke-width="1.4"/>
<path d="M49 212.0 98 212.0 98.5 211.2 99 210.4 99.5 209.7 100 209.0 100.5 208.5 101 208.1 101.5 207.7 102 207.4 102.5 207.1 103 206.9 103.5 206.7 104 206.6 104.5 206.5 105 206.6 105.5 206.8 106 207.1 106.5 207.6 107 208.1 107.5 208.7 108 209.5 108.5 210.3 109 211.2 109.5 212.0 110 212.0 110.5 210.9 111 209.3 111.5 207.9 112 206.5 112.5 205.2 113 204.0 113.5 203.0 114 202.1 114.5 201.3 115 200.7 115.5 200.1 116 199.6 116.5 199.2 117 198.9 117.5 198.7 118 198.4 118.5 198.2 119 198.1 119.5 198.0 120 198.0 120.5 198.2 121 198.4 121.5 198.7 122 199.2 122.5 199.8 123 200.5 123.5 201.3 124 202.2 124.5 203.1 125 204.2 125.5 204.5 126 202.9 126.5 201.4 127 200.0 127.5 198.7 128 197.4 128.5 196.3 129 195.2 129.5 194.2 130 193.3 130.5 192.5 131 191.8 131.5 191.2 132 190.7 132.5 190.3 133 189.9 133.5 189.5 134 189.2 134.5 188.9 135 188.7 135.5 188.6 136 188.7 136.5 188.8 137 189.0 137.5 189.4 138 189.8 138.5 190.4 139 191.1 139.5 191.8 140 192.7 140.5 193.6 141 193.8 141.5 192.1 142 190.3 142.5 188.5 143 187.0 143.5 185.9 144 185.1 144.5 184.5 145 184.1 145.5 183.8 146 183.6 146.5 183.4 147 183.3 147.5 183.1 148 182.6 148.5 181.7 149 180.8 149.5 179.8 150 178.9 150.5 177.9 151 177.0 151.5 176.0 152 175.0 152.5 174.0 153 173.0 153.5 172.0 154 170.9 154.5 169.9 155 168.9 155.5 167.8 156 166.7 156.5 165.7 157 164.6 157.5 163.5 158 162.4 158.5 161.2 159 160.1 159.5 159.0 160 157.8 160.5 156.7 161 155.5 161.5 154.3 162 153.1 162.5 151.9 163 150.7 163.5 149.5 164 148.3 164.5 147.0 165 145.8 165.5 144.5 166 143.3 166.5 142.0 167 140.7 167.5 139.4 168 138.1 168.5 136.8 169 135.4 169.5 134.1 170 132.7 170.5 131.4 171 97.9 171 107.6 172 112.3 172 98.5 173 96.0 173 106.4 174 112.5 174 98.4 175 97.4 175 109.6 176 105.8 176 97.9 177 97.6 177 108.2 178 107.3 178 99.6 179 95.7 179 110.7 180 108.3 180 96.2 181 97.9 181 108.7 182 106.2 182 96.6 183 97.8 183 111.4 184 105.6 184 97.0 185 97.9 185 105.8 186 107.4 186 99.5 187 98.5 187 112.0 188 108.9 188 98.5 189 98.6 189 107.9 190 108.3 190 100.0 191 98.1 191 110.5 192 105.4 192 97.2 193 97.4 193 106.7 194 107.1 194 98.7 195 96.0 195 110.1 196 113.1 196 98.1 197 97.5 197 106.5 198 107.7 198 98.1 199 98.7 199 108.7 200 111.1 200 97.7 201 98.9 201 108.2 202 107.7 202 99.1 203 99.9 203 113.3 204 112.1 204 97.7 205 97.2 205 108.8 206 106.0 206 97.9 207 98.3 207 105.2 208 107.3 208 98.1 209 97.0 209 113.6 210 109.2 210 98.4 211 97.9 211 115.8 212 105.8 212 97.5 213 98.0 213 110.9 214 106.4 214 97.5 215 97.2 215 109.7 216 108.8 216 98.2 217 95.8 217 111.5 218 113.9 218 98.6 219 97.9 219 110.4 220 105.3 220 97.6 221 97.9 221 109.2 222 109.6 222 99.1 223 97.8 223 107.8 224 107.6 224 98.9 225 98.0 225 114.0 226 108.5 226 97.3 227 97.0 227 109.5 228 106.5 228 97.9 229 98.4 229 105.9 230 118.4 230 95.6 231 98.0 231 118.4 232 108.9 232 95.9 233 98.7 233 106.0 234 109.0 234 97.6 235 96.2 235 105.3 236 106.6 236 98.8 237 99.1 237 108.3 238 110.1 238 96.8 239 96.2 239 110.4 240 108.0 240 97.0 241 97.4 241 107.9 242 110.6 242 98.4 243 97.5 243 113.5 244 106.8 244 96.9 245 98.3 245 109.0 246 106.6 246 99.6 247 96.7 247 108.5 248 109.2 248 99.1 249 99.3 249 106.0 250 107.7 250 98.4 251 96.7 251 106.2 252 107.0 252 99.2 253 97.8 253 106.6 254 108.9 254 95.9 255 97.4 255 110.6 256 107.0 256 98.1 257 98.7 257 109.0 258 106.9 258 99.5 259 96.4 259 105.9 260 107.5 260 99.3 261 97.7 261 106.6 262 110.0 262 96.8 263 98.5 263 105.2 264 106.7 264 98.1 265 96.8 265 108.4 266 108.4 266 97.7 267 96.6 267 112.0 268 117.5 268 96.6 269 96.3 269 108.3 270 105.8 270 99.4 271 97.5 271 108.4 272 109.2 272 97.8 273 98.1 273 105.9 274 111.1 274 99.7 275 98.0 275 106.5 276 107.3 276 96.5 277 96.8 277 107.4 278 106.3 278 98.6 279 98.0 279 107.1 280 106.8 280 98.0 281 97.0 281 105.3 282 113.9 282 98.6 283 98.5 283 108.5 284 106.4 284 99.4 285 97.0 285 105.9 286 107.4 286 95.8 287 97.4 287 107.7 288 108.1 288 97.2 289 97.0 289 111.6 290 107.3 290 99.1 291 131.1 291.5 132.9 292 134.6 292.5 136.3 293 138.0 293.5 139.7 294 141.3 294.5 142.9 295 144.5 295.5 146.1 296 147.7 296.5 149.2 297 150.7 297.5 152.2 298 153.7 298.5 155.2 299 156.6 299.5 158.0 300 159.4 300.5 160.8 301 162.1 301.5 163.5 302 164.8 302.5 166.1 303 167.3 303.5 168.6 304 169.8 304.5 171.0 305 172.2 305.5 173.4 306 174.5 306.5 175.7 307 176.8 307.5 177.9 308 178.9 308.5 180.0 309 181.0 309.5 182.0 310 183.0 310.5 184.6 311 186.2 311.5 187.8 312 189.4 312.5 191.0 313 192.6 313.5 194.2 314 195.8 314.5 197.4 315 198.5 315.5 196.1 316 193.8 316.5 191.7 317 189.8 317.5 188.1 318 186.5 318.5 185.2 319 184.2 319.5 183.3 320 182.6 320.5 182.2 321 181.9 321.5 181.7 322 181.6 322.5 181.7 323 182.2 323.5 182.8 324 183.6 324.5 184.7 325 185.9 325.5 187.4 326 189.1 326.5 190.9 327 193.0 327.5 195.2 328 197.6 328.5 200.1 329 202.7 329.5 202.1 330 199.8 330.5 197.6 331 195.5 331.5 193.6 332 191.8 332.5 190.2 333 188.9 333.5 187.7 334 186.7 334.5 186.0 335 185.5 335.5 184.6 336 183.0 336.5 182.0 337 181.0 337.5 180.0 338 178.9 338.5 177.9 339 176.8 339.5 175.7 340 174.5 340.5 173.4 341 172.2 341.5 171.0 342 169.8 342.5 168.6 343 167.3 343.5 166.1 344 164.8 344.5 163.5 345 162.1 345.5 160.8 346 159.4 346.5 158.0 347 156.6 347.5 155.2 348 153.7 348.5 152.2 349 150.7 349.5 149.2 350 147.7 350.5 146.1 351 144.5 351.5 142.9 352 141.3 352.5 139.7 353 138.0 353.5 136.3 354 100.4 354 108.8 355 107.8 355 97.4 356 96.7 356 107.3 357 113.5 357 98.9 358 97.8 358 109.8 359 106.4 359 98.6 360 98.6 360 106.8 361 108.1 361 95.9 362 96.7 362 109.4 363 111.7 363 98.7 364 99.1 364 108.7 365 112.4 365 97.0 366 97.5 366 106.3 367 105.6 367 98.1 368 97.5 368 106.6 369 108.7 369 99.2 370 98.6 370 110.6 371 106.4 371 98.6 372 96.4 372 109.3 373 105.3 373 97.8 374 98.9 374 116.2 375 107.3 375 98.6 376 96.6 376 110.8 377 113.6 377 97.4 378 98.3 378 113.1 379 107.8 379 98.2 380 97.0 380 107.0 381 107.9 381 98.1 382 98.0 382 121.7 383 130.2 383 98.5 384 100.4 384 106.4 385 110.9 385 97.1 386 97.9 386 110.2 387 112.4 387 96.9 388 95.5 388 107.5 389 105.8 389 98.1 390 97.1 390 110.6 391 107.5 391 98.2 392 98.6 392 106.2 393 105.7 393 98.6 394 98.2 394 108.8 395 107.2 395 97.7 396 95.9 396 106.6 397 108.4 397 97.4 398 98.4 398 108.4 399 107.6 399 96.7 400 98.8 400 105.2 401 110.6 401 97.0 402 97.5 402 105.6 403 111.9 403 98.4 404 97.3 404 107.4 405 106.5 405 96.6 406 97.1 406 112.4 407 109.6 407 99.8 408 99.7 408 105.4 409 108.8 409 97.9 410 98.1 410 108.5 411 107.7 411 99.3 412 97.0 412 133.7 413 144.2 413 101.7 414 102.4 414 144.2 415 133.7 415 97.5 416 95.9 416 110.4 417 112.2 417 98.5 418 98.2 418 108.9 419 116.5 419 97.1 420 97.4 420 111.4 421 109.3 421 99.4 422 98.7 422 106.8 423 107.0 423 97.2 424 97.7 424 107.0 425 113.6 425 98.6 426 98.1 426 106.2 427 105.7 427 98.0 428 98.0 428 117.3 429 108.3 429 97.3 430 97.1 430 105.4 431 108.6 431 98.6 432 95.5 432 108.0 433 110.2 433 97.5 434 97.9 434 109.2 435 107.7 435 95.8 436 97.8 436 113.8 437 112.5 437 99.1 438 99.2 438 107.6 439 106.1 439 98.4 440 98.5 440 106.8 441 107.1 441 99.7 442 98.2 442 106.7 443 109.5 443 98.7 444 96.4 444 105.6 445 108.9 445 97.3 446 98.7 446 107.5 447 105.4 447 96.7 448 98.0 448 105.3 449 106.6 449 100.0 450 97.8 450 105.7 451 107.0 451 96.3 452 97.7 452 106.6 453 111.5 453 98.5 454 97.7 454 110.9 455 109.0 455 98.4 456 97.2 456 114.3 457 108.4 457 97.5 458 98.2 458 112.7 459 106.2 459 96.9 460 96.0 460 106.7 461 105.2 461 97.4 462 96.4 462 106.5 463 107.3 463 96.9 464 98.0 464 105.3 465 106.2 465 97.7 466 96.2 466 106.3 467 105.9 467 97.4 468 96.7 468 110.9 469 109.7 469 99.5 470 97.0 470 105.6 471 106.0 471 99.7 472 95.7 472 108.1 473 119.6 473 97.4 474 96.8 474 132.3 475 126.3 475 98.5 476 97.8 476 115.2 477 109.9 477 98.9 478 98.8 478 111.4 479 106.4 479 97.5 480 98.1 480 107.1 481 111.3 481 98.1 482 98.0 482 107.7 483 117.0 483 96.3 484 96.7 484 110.2 485 112.9 485 95.7 486 98.0 486 107.2 487 111.6 487 98.4 488 97.5 488 108.6 489 111.5 489 96.9 490 99.3 490 105.8 491 106.6 491 97.1 492 98.1 492 114.2 493 111.0 493 97.2 494 97.4 494 105.5 495 106.1 495 98.1 496 98.6 496 105.2 497 105.4 497 98.0 498 96.6 498 110.4 499 106.3 499 99.6 500 97.6 500 108.0 501 106.8 501 97.9 502 98.0 502 106.1 503 107.7 503 97.5 504 97.3 504 109.0 505 106.8 505 97.8 506 96.3 506 107.3 507 109.6 507 98.1 508 95.5 508 107.1 509 105.5 509 99.8 510 96.0 510 110.8 511 111.8 511 98.2 512 99.1 512 106.3 513 110.1 513 98.7 514 98.3 514 112.8 515 109.1 515 97.6 516 97.9 516 108.8 517 110.1 517 96.4 518 97.9 518 107.2 519 106.7 519 98.1 520 98.2 520 109.8 521 105.7 521 97.2 522 97.7 522 110.4 523 107.3 523 96.1 524 98.4 524 105.8 525 105.9 525 98.2 526 98.3 526 110.5 527 108.5 527 98.7 528 98.3 528 105.7 529 113.9 529 98.8 530 100.2 530 107.9 531 105.8 531 99.7 532 99.1 532 105.5 533 109.7 533 100.7 534 98.8 534 129.4 535 135.0 535 100.5 536 101.9 536 133.7 537 124.4 537 99.7 538 99.6 538 106.1 539 105.6 539 98.6 540 98.8 540 109.5 541 107.3 541 97.4 542 97.8 542 105.3 543 108.2 543 97.7 544 98.3 544 113.8 545 107.0 545 97.0 546 97.8 546 108.5 547 107.1 547 95.5 548 97.1 548 112.2 549 108.0 549 97.7 550 98.1 550 109.1 551 108.4 551 98.5 552 99.0 552 111.7 553 109.8 553 97.7 554 97.3 554 107.0 555 108.7 555 96.2 556 97.5 556 107.2 557 108.0 557 96.8 558 97.5 558 108.5 559 105.7 559 98.1 560 97.2 560 109.6 561 105.3 561 97.2 562 98.1 562 105.7 563 105.3 563 98.1 564 98.0 564 105.4 565 109.8 565 100.1 566 97.5 566 109.4 567 106.8 567 99.4 568 95.5 568 105.9 569 107.2 569 98.0 570 97.5 570 107.3 571 106.5 571 97.4 572 99.7 572 107.1 573 109.7 573 96.1 574 98.5 574 106.3 575 107.6 575 96.6 576 96.3 576 109.4 577 105.3 577 96.7 578 100.9 578 106.5 579 107.1 579 99.0 580 98.3 580 107.0 581 105.3 581 99.2 582 97.8 582 113.9 583 106.3 583 96.0 584 96.4 584 105.4 585 108.4 585 98.2 586 99.0 586 109.1 587 108.9 587 96.9 588 96.9 588 109.3 589 109.1 589 98.1 590 98.7 590 109.1 591 106.0 591 96.0 592 95.9 592 108.6 593 105.3 593 96.3 594 96.9 594 109.7 595 109.2 595 98.2 596 97.4 596 132.7 597 123.4 597 99.0 598 96.0 598 108.4 599 109.4 599 99.0 600 98.6 600 107.6 601 107.6 601 98.1 602 98.0 602 105.2 603 108.7 603 96.1 604 96.9 604 107.6 605 108.9 605 98.6 606 97.4 606 108.9 607 110.4 607 97.5 608 96.1 608 109.1 609 109.9 609 99.6 610 98.4 610 106.8 611 110.7 611 98.9 612 97.6 612 112.3 613 113.5 613 96.8 614 98.0 614 109.9 615 106.6 615 95.5 616 98.8 616 110.7 617 109.3 617 97.6 618 98.5 618 107.1 619 114.1 619 99.3 620 98.3 620 109.6 621 112.2 621 97.7 622 98.5 622 110.5 623 109.9 623 98.5 624 97.8 624 108.0 625 108.0 625 98.5 626 96.7 626 107.9 627 107.0 627 97.1 628 97.7 628 107.2 629 105.7 629 96.6 630 100.3 630 107.8 631 107.6 631 98.9 632 96.4 632 105.4 633 110.8 633 98.8 634 96.7 634 111.4 635 108.4 635 97.3 636 97.6 636 110.8 637 107.8 637 98.0 638 99.1 638 106.0 639 110.4 639 99.5 640 99.7 640 110.5 641 107.6 641 97.3 642 97.8 642 110.2 643 110.0 643 97.4 644 99.1 644 106.5 645 106.9 645 97.7 646 96.6 646 106.2 647 110.2 647 98.6 648 98.4 648 106.7 649 105.6 649 98.2 650 95.5 650 112.2 651 106.2 651 96.5 652 95.6 652 110.7 653 109.5 653 95.5 654 98.1 654 111.2 655 106.1 655 97.4 656 100.5 656 106.3 657 138.6 657.5 140.2 658 141.8 658.5 143.4 659 144.9 659.5 146.5 660 148.0 660.5 149.5 661 151.0 661.5 152.4 662 153.9 662.5 155.3 663 156.7 663.5 158.1 664 159.4 664.5 160.8 665 162.1 665.5 163.4 666 164.7 666.5 165.9 667 167.2 667.5 168.4 668 169.6 668.5 170.8 669 171.9 669.5 173.1 670 174.2 670.5 175.3 671 176.4 671.5 177.4 672 178.5 672.5 179.5 673 180.5 673.5 181.5 674 182.4 674.5 183.2 675 183.7 675.5 184.2 676 184.6 676.5 184.7 677 184.8 677.5 184.7 678 184.5 678.5 184.3 679 184.0 679.5 183.7 680 183.5 680.5 183.5 681 183.9 681.5 184.3 682 184.9 682.5 185.6 683 186.5 683.5 187.5 684 188.7 684.5 190.2 685 191.8 685.5 193.7 686 195.7 686.5 197.9 687 200.3 687.5 202.8 688 205.4 688.5 206.7 689 204.8 689.5 203.0 690 201.3 690.5 199.7 691 198.4 691.5 197.2 692 196.2 692.5 195.4 693 194.9 693.5 194.4 694 194.1 694.5 194.0 695 194.0 695.5 194.1 696 194.4 696.5 194.6 697 194.9 697.5 195.4 698 196.0 698.5 196.7 699 197.6 699.5 198.7 700 200.1 700.5 201.6 701 203.3 701.5 205.2 702 207.3 702.5 209.6 703 212.0 703.5 212.0 704.5 212.0 705 211.6 705.5 209.8 706 208.2 706.5 206.7 707 205.4 707.5 204.3 708 203.4 708.5 202.7 709 202.2 709.5 201.9 710 201.8 710.5 201.9 711 202.0 711.5 202.3 712 202.6 712.5 203.0 713 203.5 713.5 204.1 714 204.9 714.5 205.9 715 207.0 715.5 208.4 716 210.0 716.5 211.7 717 212.0 723.5 212.0 724 211.8 724.5 211.4 725 211.1 725.5 211.0 726 211.1 726.5 211.2 727 211.5 727.5 211.8 728 212.0 779.5 212.0" stroke="#43d5e6" stroke-width="1.4"/>
<path d="M49 212.0 96 212.0 96.5 211.9 97 211.6 97.5 211.4 98 211.2 98.5 211.2 99 211.4 99.5 211.6 100 212.0 106.5 212.0 107 211.0 107.5 209.5 108 208.2 108.5 207.0 109 206.0 109.5 205.1 110 204.4 110.5 203.8 111 203.3 111.5 203.0 112 202.7 112.5 202.4 113 202.2 113.5 202.0 114 202.0 114.5 202.2 115 202.5 115.5 202.9 116 203.6 116.5 204.4 117 205.4 117.5 206.5 118 207.7 118.5 209.1 119 210.6 119.5 212.0 120 211.8 120.5 209.7 121 207.8 121.5 205.9 122 204.1 122.5 202.5 123 201.1 123.5 199.8 124 198.6 124.5 197.7 125 196.9 125.5 196.2 126 195.7 126.5 195.2 127 194.9 127.5 194.7 128 194.4 128.5 194.2 129 194.2 129.5 194.2 130 194.4 130.5 194.7 131 195.1 131.5 195.7 132 196.4 132.5 197.2 133 198.2 133.5 199.3 134 200.6 134.5 201.9 135 203.4 135.5 202.9 136 200.7 136.5 198.6 137 196.6 137.5 194.8 138 193.0 138.5 191.5 139 190.0 139.5 188.8 140 187.7 140.5 186.8 141 186.0 141.5 185.3 142 184.8 142.5 184.3 143 183.9 143.5 183.6 144 183.5 144.5 183.6 145 183.9 145.5 184.1 146 184.3 146.5 184.5 147 184.5 147.5 184.5 148 184.4 148.5 184.1 149 183.7 149.5 183.3 150 182.6 150.5 181.7 151 180.8 151.5 179.9 152 179.0 152.5 178.0 153 177.1 153.5 176.1 154 175.2 154.5 174.2 155 173.2 155.5 172.2 156 171.2 156.5 170.2 157 169.1 157.5 168.1 158 167.1 158.5 166.0 159 164.9 159.5 163.9 160 162.8 160.5 161.7 161 160.6 161.5 159.4 162 158.3 162.5 157.2 163 156.0 163.5 154.9 164 153.7 164.5 152.5 165 151.3 165.5 150.1 166 148.9 166.5 147.7 167 146.5 167.5 145.2 168 144.0 168.5 142.7 169 141.5 169.5 140.2 170 138.9 170.5 137.6 171 98.2 171 105.3 172 107.3 172 98.7 173 99.6 173 105.6 174 108.6 174 97.4 175 99.4 175 110.4 176 107.5 176 98.7 177 96.5 177 105.4 178 106.8 178 96.2 179 98.1 179 105.9 180 106.4 180 96.9 181 97.7 181 106.5 182 109.1 182 97.3 183 99.3 183 109.4 184 107.9 184 97.5 185 97.6 185 108.4 186 106.1 186 97.4 187 97.4 187 106.1 188 113.0 188 97.7 189 97.2 189 108.2 190 107.3 190 98.7 191 97.4 191 109.8 192 110.3 192 98.8 193 97.7 193 107.6 194 116.9 194 98.3 195 98.6 195 107.2 196 105.8 196 98.5 197 98.5 197 111.1 198 114.6 198 96.9 199 98.6 199 110.9 200 106.8 200 97.4 201 97.2 201 109.7 202 106.4 202 95.5 203 96.7 203 106.0 204 109.1 204 98.9 205 99.1 205 107.2 206 107.6 206 97.7 207 97.3 207 105.4 208 112.9 208 98.5 209 96.8 209 107.4 210 110.0 210 99.9 211 100.1 211 110.7 212 113.3 212 98.6 213 97.1 213 110.6 214 110.3 214 96.8 215 97.7 215 107.6 216 107.1 216 96.2 217 97.3 217 108.2 218 108.0 218 98.0 219 96.1 219 106.9 220 105.4 220 97.4 221 98.7 221 110.8 222 107.2 222 97.5 223 99.0 223 110.7 224 108.9 224 96.6 225 98.1 225 110.9 226 105.7 226 99.8 227 96.4 227 110.3 228 106.2 228 97.4 229 98.4 229 108.0 230 125.3 230 97.6 231 97.1 231 125.3 232 115.2 232 97.8 233 97.5 233 111.9 234 107.0 234 96.6 235 98.3 235 107.9 236 107.4 236 97.8 237 95.8 237 105.7 238 111.0 238 98.1 239 98.6 239 105.5 240 109.0 240 97.7 241 96.7 241 109.3 242 107.6 242 98.7 243 98.1 243 109.0 244 108.9 244 98.5 245 95.9 245 105.5 246 110.8 246 96.4 247 97.4 247 108.7 248 109.6 248 96.5 249 99.3 249 105.3 250 110.1 250 98.6 251 97.5 251 106.9 252 106.2 252 96.3 253 99.4 253 107.7 254 105.9 254 97.4 255 98.1 255 107.6 256 107.6 256 98.1 257 97.7 257 105.5 258 109.2 258 99.0 259 96.2 259 118.1 260 110.2 260 98.4 261 97.4 261 106.4 262 106.2 262 99.0 263 98.6 263 106.0 264 105.2 264 99.8 265 96.2 265 105.9 266 106.8 266 95.5 267 97.7 267 114.0 268 111.0 268 97.4 269 95.6 269 111.6 270 110.9 270 98.5 271 97.5 271 110.3 272 106.7 272 98.6 273 96.9 273 108.8 274 107.8 274 97.3 275 96.6 275 106.1 276 107.4 276 96.6 277 99.0 277 112.9 278 105.3 278 98.5 279 97.5 279 115.0 280 105.2 280 97.1 281 97.9 281 109.3 282 105.5 282 97.1 283 96.9 283 111.6 284 109.0 284 98.2 285 97.7 285 110.1 286 108.7 286 98.2 287 99.1 287 110.3 288 107.4 288 96.6 289 95.7 289 105.8 290 109.0 290 98.0 291 125.8 291.5 127.6 292 129.4 292.5 131.1 293 132.9 293.5 134.6 294 136.3 294.5 138.0 295 139.7 295.5 141.3 296 142.9 296.5 144.5 297 146.1 297.5 147.7 298 149.2 298.5 150.7 299 152.2 299.5 153.7 300 155.2 300.5 156.6 301 158.0 301.5 159.4 302 160.8 302.5 162.1 303 163.5 303.5 164.8 304 166.1 304.5 167.3 305 168.6 305.5 169.8 306 171.0 306.5 172.2 307 173.4 307.5 174.5 308 175.7 308.5 176.8 309 177.9 309.5 178.9 310 180.0 310.5 181.0 311 182.0 311.5 183.0 312 184.6 312.5 186.2 313 187.8 313.5 189.4 314 191.0 314.5 191.4 315 189.6 315.5 188.0 316 186.6 316.5 185.4 317 184.4 317.5 183.6 318 183.0 318.5 182.6 319 182.3 319.5 182.2 320 182.1 320.5 182.1 321 182.3 321.5 182.6 322 183.1 322.5 184.0 323 185.2 323.5 186.6 324 188.2 324.5 189.9 325 191.9 325.5 194.1 326 196.4 326.5 198.8 327 201.4 327.5 200.6 328 199.0 328.5 197.4 329 195.8 329.5 194.2 330 192.6 330.5 191.0 331 189.4 331.5 187.8 332 186.2 332.5 184.6 333 183.0 333.5 182.0 334 181.0 334.5 180.0 335 178.9 335.5 177.9 336 176.8 336.5 175.7 337 174.5 337.5 173.4 338 172.2 338.5 171.0 339 169.8 339.5 168.6 340 167.3 340.5 166.1 341 164.8 341.5 163.5 342 162.1 342.5 160.8 343 159.4 343.5 158.0 344 156.6 344.5 155.2 345 153.7 345.5 152.2 346 150.7 346.5 149.2 347 147.7 347.5 146.1 348 144.5 348.5 142.9 349 141.3 349.5 139.7 350 138.0 350.5 136.3 351 134.6 351.5 132.9 352 131.1 352.5 129.4 353 127.6 353.5 125.8 354 97.5 354 110.9 355 109.4 355 97.5 356 97.7 356 106.6 357 105.8 357 100.2 358 97.0 358 105.5 359 107.4 359 98.3 360 100.1 360 105.3 361 110.7 361 97.2 362 97.0 362 107.6 363 109.0 363 96.3 364 96.6 364 107.5 365 106.5 365 98.0 366 97.0 366 106.6 367 107.3 367 97.8 368 97.6 368 110.1 369 108.4 369 95.7 370 98.1 370 106.1 371 110.3 371 100.5 372 98.3 372 106.9 373 105.4 373 99.5 374 98.9 374 105.9 375 109.5 375 96.2 376 97.3 376 107.9 377 109.9 377 98.6 378 97.9 378 110.2 379 107.4 379 96.6 380 97.5 380 108.8 381 107.3 381 95.9 382 98.9 382 120.4 383 128.4 383 97.5 384 97.6 384 109.1 385 107.7 385 98.7 386 97.4 386 106.3 387 108.4 387 97.0 388 96.5 388 109.5 389 106.1 389 100.0 390 97.6 390 105.5 391 106.2 391 97.1 392 96.4 392 106.5 393 106.2 393 97.3 394 97.7 394 108.0 395 106.4 395 98.5 396 96.2 396 105.5 397 114.1 397 97.9 398 96.1 398 107.4 399 109.5 399 97.6 400 97.4 400 106.5 401 107.1 401 98.6 402 99.2 402 107.4 403 106.5 403 97.4 404 98.0 404 109.6 405 111.5 405 96.3 406 99.3 406 110.7 407 114.3 407 99.2 408 96.6 408 106.5 409 105.2 409 98.8 410 99.0 410 105.7 411 106.4 411 100.1 412 98.8 412 132.8 413 143.0 413 102.4 414 100.7 414 143.0 415 132.8 415 99.9 416 97.5 416 105.6 417 111.6 417 98.9 418 98.6 418 111.8 419 108.0 419 97.2 420 98.0 420 111.9 421 107.3 421 97.5 422 97.2 422 108.4 423 114.2 423 97.2 424 97.5 424 108.4 425 106.7 425 96.9 426 98.4 426 110.2 427 107.2 427 98.9 428 98.8 428 106.5 429 106.0 429 97.8 430 98.7 430 109.0 431 107.6 431 97.6 432 98.0 432 105.5 433 106.9 433 96.2 434 98.9 434 109.0 435 109.7 435 96.5 436 97.1 436 106.4 437 108.7 437 95.5 438 98.5 438 110.6 439 111.3 439 97.2 440 98.4 440 107.1 441 106.2 441 98.2 442 97.5 442 106.1 443 108.7 443 96.8 444 96.2 444 106.0 445 115.7 445 98.2 446 98.6 446 107.9 447 115.3 447 97.7 448 96.6 448 107.2 449 107.5 449 97.1 450 97.1 450 108.1 451 105.2 451 96.8 452 97.7 452 107.2 453 109.1 453 97.1 454 95.5 454 109.9 455 107.6 455 97.2 456 98.5 456 106.7 457 112.1 457 98.2 458 98.0 458 106.8 459 106.1 459 97.4 460 97.1 460 107.8 461 108.5 461 99.5 462 98.6 462 109.0 463 105.7 463 98.2 464 98.9 464 105.4 465 106.0 465 100.0 466 99.2 466 107.0 467 112.3 467 96.6 468 99.3 468 106.4 469 105.3 469 96.1 470 97.8 470 115.6 471 107.0 471 97.6 472 95.8 472 110.0 473 107.7 473 95.7 474 99.1 474 133.0 475 126.8 475 96.7 476 97.1 476 107.1 477 107.3 477 98.6 478 98.2 478 107.5 479 107.3 479 98.8 480 96.0 480 105.7 481 105.5 481 95.5 482 99.4 482 110.8 483 106.9 483 98.7 484 98.0 484 106.1 485 112.7 485 98.9 486 96.6 486 106.0 487 106.3 487 97.5 488 98.1 488 109.0 489 107.2 489 99.7 490 99.6 490 107.4 491 105.8 491 97.8 492 100.0 492 108.5 493 110.6 493 96.9 494 98.3 494 113.5 495 106.3 495 96.7 496 97.5 496 105.5 497 107.2 497 97.2 498 97.4 498 110.1 499 107.0 499 98.5 500 98.5 500 106.6 501 113.5 501 98.2 502 97.7 502 106.8 503 109.4 503 96.9 504 98.0 504 105.6 505 108.6 505 96.3 506 98.3 506 107.4 507 107.1 507 99.1 508 98.6 508 110.3 509 110.0 509 98.5 510 96.2 510 105.5 511 109.3 511 96.9 512 97.4 512 106.0 513 110.0 513 97.9 514 97.5 514 107.1 515 106.9 515 99.1 516 95.5 516 109.0 517 105.7 517 97.2 518 96.6 518 114.8 519 111.4 519 96.5 520 97.8 520 107.2 521 109.9 521 97.9 522 98.8 522 107.6 523 111.5 523 97.9 524 98.0 524 107.6 525 105.9 525 99.8 526 97.5 526 113.5 527 108.2 527 99.1 528 98.0 528 107.1 529 106.4 529 95.5 530 95.9 530 112.8 531 107.5 531 99.4 532 97.6 532 114.6 533 108.1 533 97.4 534 96.1 534 133.4 535 139.7 535 101.9 536 101.6 536 138.3 537 127.6 537 98.4 538 97.4 538 105.8 539 107.7 539 97.2 540 99.8 540 105.3 541 107.0 541 97.5 542 98.2 542 105.3 543 106.5 543 96.0 544 97.1 544 108.1 545 111.2 545 97.5 546 96.9 546 109.4 547 107.1 547 98.0 548 97.6 548 112.9 549 110.9 549 97.4 550 99.8 550 105.8 551 107.2 551 96.8 552 96.7 552 108.7 553 106.7 553 97.0 554 96.6 554 109.0 555 109.8 555 99.1 556 97.6 556 106.6 557 107.7 557 98.0 558 98.1 558 108.2 559 107.4 559 99.1 560 98.8 560 106.1 561 108.4 561 97.9 562 99.0 562 107.5 563 108.7 563 98.2 564 99.1 564 112.7 565 111.9 565 97.3 566 95.6 566 109.5 567 105.9 567 97.4 568 97.9 568 108.6 569 108.8 569 99.4 570 98.6 570 105.4 571 106.0 571 97.1 572 97.7 572 108.9 573 106.5 573 98.1 574 99.9 574 110.5 575 106.4 575 99.1 576 97.4 576 110.2 577 107.4 577 99.0 578 97.0 578 107.6 579 105.3 579 97.7 580 98.9 580 105.2 581 108.8 581 95.8 582 100.7 582 107.5 583 106.2 583 98.3 584 99.5 584 108.8 585 112.4 585 98.3 586 97.3 586 116.4 587 108.2 587 96.4 588 97.4 588 112.8 589 111.2 589 98.1 590 97.6 590 106.3 591 105.7 591 99.2 592 98.0 592 110.1 593 113.1 593 97.0 594 97.5 594 105.5 595 107.0 595 97.1 596 98.3 596 132.0 597 122.9 597 97.2 598 98.0 598 110.2 599 110.5 599 98.9 600 99.6 600 106.7 601 111.4 601 100.4 602 98.9 602 109.6 603 108.6 603 98.4 604 97.7 604 105.8 605 109.2 605 98.7 606 99.2 606 112.6 607 107.2 607 97.5 608 97.3 608 108.1 609 112.4 609 97.3 610 97.4 610 106.7 611 106.9 611 98.5 612 97.4 612 108.0 613 105.9 613 97.3 614 96.8 614 108.3 615 114.1 615 98.1 616 99.0 616 105.9 617 113.5 617 96.7 618 96.8 618 110.2 619 114.4 619 98.0 620 100.3 620 110.7 621 112.6 621 98.8 622 96.7 622 109.4 623 106.6 623 98.6 624 98.5 624 110.4 625 113.0 625 96.7 626 97.7 626 107.3 627 111.9 627 97.8 628 98.6 628 106.4 629 105.2 629 97.5 630 97.7 630 107.5 631 111.4 631 97.1 632 99.8 632 105.3 633 111.4 633 96.5 634 95.8 634 108.7 635 113.9 635 97.3 636 98.2 636 106.6 637 105.6 637 96.5 638 96.4 638 106.0 639 106.2 639 98.6 640 97.9 640 107.5 641 106.0 641 97.6 642 98.8 642 110.8 643 112.9 643 98.0 644 96.8 644 107.7 645 108.7 645 95.5 646 99.8 646 109.2 647 108.0 647 97.1 648 99.4 648 108.4 649 106.4 649 98.5 650 97.1 650 111.4 651 108.7 651 99.0 652 97.4 652 105.3 653 109.3 653 98.3 654 97.0 654 105.5 655 107.1 655 99.3 656 95.6 656 109.2 657 127.7 657.5 129.5 658 131.3 658.5 133.0 659 134.7 659.5 136.4 660 138.1 660.5 139.8 661 141.4 661.5 143.0 662 144.6 662.5 146.2 663 147.8 663.5 149.3 664 150.8 664.5 152.3 665 153.8 665.5 155.3 666 156.7 666.5 158.2 667 159.6 667.5 160.9 668 162.3 668.5 163.6 669 165.0 669.5 166.3 670 167.6 670.5 168.8 671 170.1 671.5 171.3 672 172.5 672.5 173.7 673 174.8 673.5 176.0 674 177.1 674.5 178.2 675 179.3 675.5 180.3 676 181.4 676.5 182.4 677 183.1 677.5 183.4 678 183.6 678.5 183.8 679 183.8 679.5 183.9 680 183.9 680.5 183.9 681 183.8 681.5 183.8 682 183.9 682.5 184.1 683 184.7 683.5 185.6 684 186.7 684.5 187.9 685 189.2 685.5 190.7 686 192.3 686.5 194.0 687 195.7 687.5 197.6 688 198.5 688.5 197.4 689 196.3 689.5 195.3 690 194.5 690.5 193.7 691 193.1 691.5 192.5 692 192.2 692.5 191.9 693 191.8 693.5 191.8 694 191.9 694.5 192.1 695 192.4 695.5 192.8 696 193.1 696.5 193.4 697 193.8 697.5 194.2 698 194.8 698.5 195.5 699 196.3 699.5 197.3 700 198.4 700.5 199.6 701 200.9 701.5 202.4 702 204.0 702.5 205.6 703 207.3 703.5 208.2 704 206.9 704.5 205.7 705 204.6 705.5 203.6 706 202.7 706.5 202.0 707 201.3 707.5 200.8 708 200.5 708.5 200.2 709 200.1 709.5 200.1 710 200.2 710.5 200.4 711 200.6 711.5 200.9 712 201.2 712.5 201.6 713 202.1 713.5 202.7 714 203.5 714.5 204.3 715 205.3 715.5 206.5 716 207.7 716.5 209.1 717 210.6 717.5 212.0 721 212.0 721.5 211.4 722 210.7 722.5 210.1 723 209.6 723.5 209.3 724 209.1 724.5 209.0 725 209.1 725.5 209.2 726 209.5 726.5 209.7 727 210.0 727.5 210.4 728 210.8 728.5 211.3 729 211.9 729.5 212.0 779.5 212.0" stroke="#e153c3" stroke-width="1.4"/>
<path d="M49 212.0 98.5 212.0 99 211.9 99.5 211.6 100 211.3 100.5 211.0 101 210.9 101.5 210.8 102 210.8 102.5 210.9 103 211.1 103.5 211.4 104 211.9 104.5 212.0 108.5 212.0 109 211.9 109.5 210.5 110 209.2 110.5 208.1 111 207.0 111.5 206.1 112 205.3 112.5 204.6 113 204.0 113.5 203.4 114 203.0 114.5 202.7 115 202.4 115.5 202.1 116 201.8 116.5 201.7 117 201.6 117.5 201.6 118 201.7 118.5 202.0 119 202.4 119.5 202.9 120 203.5 120.5 204.2 121 205.0 121.5 206.0 122 206.9 122.5 208.0 123 207.8 123.5 206.3 124 204.8 124.5 203.3 125 202.0 125.5 200.8 126 199.7 126.5 198.7 127 197.8 127.5 197.0 128 196.4 128.5 195.8 129 195.3 129.5 195.0 130 194.7 130.5 194.4 131 194.2 131.5 194.0 132 193.8 132.5 193.8 133 193.8 133.5 193.9 134 194.1 134.5 194.4 135 194.7 135.5 195.2 136 195.8 136.5 196.5 137 197.3 137.5 198.2 138 199.1 138.5 198.8 139 197.1 139.5 195.5 140 194.0 140.5 192.5 141 191.2 141.5 189.9 142 188.8 142.5 187.8 143 186.9 143.5 186.1 144 185.5 144.5 184.9 145 184.4 145.5 184.0 146 183.6 146.5 183.4 147 183.5 147.5 183.6 148 183.7 148.5 183.9 149 184.0 149.5 184.0 150 184.0 150.5 184.0 151 183.8 151.5 183.5 152 183.2 152.5 182.7 153 181.8 153.5 180.9 154 180.0 154.5 179.1 155 178.2 155.5 177.3 156 176.3 156.5 175.4 157 174.4 157.5 173.5 158 172.5 158.5 171.5 159 170.5 159.5 169.5 160 168.5 160.5 167.5 161 166.4 161.5 165.4 162 164.3 162.5 163.3 163 162.2 163.5 161.1 164 160.0 164.5 158.9 165 157.8 165.5 156.7 166 155.5 166.5 154.4 167 153.2 167.5 152.1 168 150.9 168.5 149.7 169 148.5 169.5 147.3 170 146.1 170.5 144.9 171 99.0 171 114.4 172 111.1 172 97.1 173 98.8 173 110.4 174 112.8 174 99.9 175 97.2 175 111.7 176 107.4 176 99.8 177 99.2 177 109.7 178 107.3 178 98.3 179 97.8 179 114.6 180 109.4 180 97.8 181 97.6 181 111.6 182 111.0 182 97.8 183 98.0 183 108.4 184 109.4 184 98.5 185 98.8 185 113.4 186 118.5 186 99.1 187 96.3 187 111.3 188 115.6 188 97.7 189 98.3 189 107.7 190 108.8 190 97.4 191 98.0 191 115.4 192 112.7 192 97.9 193 98.3 193 110.9 194 109.5 194 98.0 195 98.4 195 107.8 196 113.0 196 99.8 197 98.3 197 111.3 198 112.2 198 97.9 199 98.5 199 106.5 200 116.7 200 98.8 201 98.3 201 113.6 202 110.7 202 98.6 203 99.6 203 112.2 204 111.8 204 98.6 205 99.3 205 110.1 206 110.4 206 99.8 207 98.1 207 111.8 208 107.6 208 98.3 209 97.7 209 110.3 210 109.3 210 98.8 211 98.1 211 109.5 212 107.4 212 98.4 213 98.0 213 109.4 214 106.8 214 99.3 215 97.6 215 112.3 216 112.7 216 99.2 217 100.5 217 109.3 218 110.3 218 98.6 219 100.0 219 109.2 220 111.0 220 97.6 221 99.8 221 107.6 222 115.3 222 98.5 223 100.2 223 113.8 224 108.7 224 98.2 225 97.2 225 107.1 226 107.8 226 98.9 227 97.4 227 113.6 228 111.5 228 98.7 229 99.6 229 109.3 230 117.0 230 98.8 231 99.3 231 117.0 232 108.0 232 98.0 233 98.0 233 111.8 234 114.9 234 96.9 235 99.3 235 112.9 236 113.7 236 98.7 237 99.1 237 106.6 238 116.6 238 99.3 239 98.9 239 111.0 240 110.8 240 98.0 241 97.9 241 109.6 242 107.1 242 97.5 243 98.9 243 108.9 244 114.3 244 98.7 245 99.0 245 112.9 246 107.6 246 101.9 247 98.5 247 106.5 248 108.8 248 98.5 249 99.1 249 106.8 250 107.3 250 98.4 251 97.5 251 108.0 252 111.7 252 99.8 253 98.2 253 110.2 254 117.6 254 99.2 255 98.7 255 108.4 256 112.6 256 98.8 257 98.8 257 109.0 258 106.9 258 97.1 259 98.7 259 113.2 260 108.1 260 98.8 261 99.6 261 109.3 262 111.0 262 97.0 263 98.1 263 106.6 264 112.5 264 98.5 265 99.4 265 112.9 266 118.5 266 98.9 267 96.9 267 113.4 268 116.7 268 99.4 269 99.5 269 112.3 270 109.9 270 97.2 271 99.5 271 114.7 272 110.6 272 97.9 273 96.7 273 107.0 274 107.4 274 99.8 275 99.5 275 107.2 276 112.4 276 97.3 277 97.3 277 109.0 278 109.1 278 96.6 279 98.3 279 112.0 280 107.8 280 98.4 281 99.7 281 113.0 282 110.7 282 98.8 283 98.6 283 112.6 284 114.9 284 98.3 285 99.4 285 116.6 286 109.5 286 98.8 287 97.6 287 111.7 288 108.2 288 97.0 289 98.0 289 108.4 290 111.0 290 97.7 291 144.5 291.5 146.1 292 147.7 292.5 149.2 293 150.7 293.5 152.2 294 153.7 294.5 155.2 295 156.6 295.5 158.0 296 159.4 296.5 160.8 297 162.1 297.5 163.5 298 164.8 298.5 166.1 299 167.3 299.5 168.6 300 169.8 300.5 171.0 301 172.2 301.5 173.4 302 174.5 302.5 175.7 303 176.8 303.5 177.9 304 178.9 304.5 180.0 305 181.0 305.5 182.0 306 183.0 306.5 184.6 307 186.2 307.5 186.9 308 187.9 308.5 189.3 309 190.9 309.5 192.8 310 195.0 310.5 197.4 311 199.0 311.5 200.6 312 202.2 312.5 203.8 313 205.1 313.5 201.9 314 198.8 314.5 195.9 315 193.2 315.5 190.8 316 188.7 316.5 186.9 317 185.4 317.5 184.3 318 183.4 318.5 182.7 319 182.4 319.5 182.2 320 182.1 320.5 182.2 321 182.5 321.5 183.2 322 184.1 322.5 185.4 323 187.2 323.5 189.2 324 191.6 324.5 194.2 325 197.1 325.5 200.2 326 203.4 326.5 205.4 327 203.8 327.5 202.0 328 199.1 328.5 196.4 329 193.9 329.5 191.7 330 189.7 330.5 188.1 331 186.7 331.5 185.7 332 185.0 332.5 184.5 333 184.3 333.5 183.0 334 182.0 334.5 181.0 335 180.0 335.5 178.9 336 177.9 336.5 176.8 337 175.7 337.5 174.5 338 173.4 338.5 172.2 339 171.0 339.5 169.8 340 168.6 340.5 167.3 341 166.1 341.5 164.8 342 163.5 342.5 162.1 343 160.8 343.5 159.4 344 158.0 344.5 156.6 345 155.2 345.5 153.7 346 152.2 346.5 150.7 347 149.2 347.5 147.7 348 146.1 348.5 144.5 349 142.9 349.5 141.3 350 139.7 350.5 138.0 351 136.3 351.5 134.6 352 132.9 352.5 131.1 353 129.4 353.5 127.6 354 99.7 354 108.9 355 114.6 355 100.2 356 98.1 356 110.4 357 106.7 357 97.5 358 96.5 358 110.2 359 108.9 359 100.2 360 99.8 360 110.6 361 110.8 361 97.3 362 97.9 362 111.1 363 107.1 363 99.0 364 98.3 364 107.7 365 115.8 365 97.5 366 98.0 366 107.2 367 112.1 367 100.3 368 98.6 368 111.2 369 108.2 369 98.4 370 97.5 370 108.8 371 111.9 371 97.4 372 98.4 372 110.7 373 112.7 373 98.0 374 98.9 374 110.9 375 106.8 375 99.4 376 98.3 376 112.1 377 107.4 377 100.0 378 100.6 378 111.3 379 106.9 379 99.9 380 98.0 380 110.1 381 108.6 381 98.5 382 98.7 382 120.4 383 128.3 383 97.1 384 98.2 384 108.2 385 107.4 385 98.9 386 97.4 386 110.7 387 115.7 387 98.6 388 100.2 388 106.6 389 106.8 389 99.2 390 99.1 390 110.4 391 107.5 391 98.3 392 98.7 392 108.2 393 106.9 393 98.1 394 98.6 394 114.0 395 107.0 395 98.9 396 98.9 396 114.7 397 113.9 397 98.8 398 99.0 398 107.2 399 112.5 399 100.0 400 99.4 400 109.4 401 116.5 401 98.1 402 99.7 402 109.6 403 113.7 403 97.3 404 98.2 404 107.2 405 107.2 405 98.8 406 100.1 406 108.6 407 114.6 407 98.8 408 98.9 408 112.0 409 113.0 409 98.1 410 97.4 410 107.1 411 109.8 411 97.6 412 97.9 412 131.0 413 140.6 413 102.0 414 102.1 414 140.6 415 131.0 415 97.9 416 98.0 416 112.8 417 108.3 417 99.1 418 98.5 418 115.7 419 106.9 419 98.0 420 100.2 420 109.0 421 107.8 421 96.7 422 98.7 422 106.6 423 108.8 423 97.9 424 100.7 424 107.0 425 106.6 425 98.4 426 99.7 426 115.9 427 108.2 427 98.7 428 99.7 428 111.3 429 110.2 429 99.6 430 100.2 430 119.1 431 112.2 431 97.3 432 99.3 432 108.7 433 112.3 433 99.7 434 100.1 434 112.7 435 115.3 435 98.7 436 97.0 436 106.7 437 114.6 437 98.7 438 99.5 438 109.9 439 108.4 439 98.7 440 99.3 440 107.9 441 110.5 441 98.8 442 99.3 442 107.4 443 108.2 443 97.2 444 96.4 444 115.9 445 110.9 445 99.0 446 99.5 446 108.6 447 108.2 447 98.4 448 98.5 448 107.4 449 107.2 449 97.6 450 99.1 450 117.4 451 113.3 451 98.8 452 98.6 452 107.4 453 110.8 453 98.7 454 98.2 454 111.3 455 112.5 455 98.1 456 98.1 456 114.9 457 115.4 457 100.3 458 98.0 458 108.9 459 109.8 459 98.4 460 100.4 460 109.3 461 108.2 461 98.5 462 99.2 462 108.1 463 110.8 463 98.7 464 99.7 464 109.6 465 117.0 465 97.8 466 97.9 466 113.2 467 108.8 467 97.6 468 98.1 468 109.9 469 108.6 469 98.1 470 98.0 470 112.0 471 109.3 471 97.4 472 98.5 472 107.6 473 109.3 473 97.7 474 99.7 474 134.7 475 128.2 475 97.8 476 98.7 476 110.5 477 106.9 477 97.0 478 98.1 478 117.3 479 106.7 479 99.4 480 98.1 480 107.0 481 107.6 481 99.0 482 97.4 482 112.0 483 106.8 483 98.5 484 98.7 484 114.9 485 109.7 485 98.6 486 99.7 486 107.1 487 107.6 487 98.5 488 98.8 488 107.0 489 109.9 489 98.5 490 97.5 490 113.1 491 108.7 491 99.7 492 98.6 492 110.3 493 114.7 493 97.1 494 98.7 494 109.3 495 115.9 495 98.9 496 98.4 496 114.8 497 110.9 497 97.4 498 98.5 498 107.3 499 113.4 499 97.4 500 99.6 500 114.0 501 107.1 501 97.2 502 98.9 502 111.1 503 110.8 503 97.9 504 97.5 504 115.8 505 108.5 505 99.2 506 96.6 506 115.4 507 108.5 507 98.3 508 99.0 508 109.9 509 108.0 509 96.9 510 97.8 510 106.6 511 107.4 511 96.4 512 98.5 512 109.7 513 108.7 513 99.8 514 98.2 514 110.6 515 114.1 515 100.3 516 97.7 516 107.8 517 108.1 517 98.5 518 100.9 518 108.0 519 108.9 519 98.7 520 99.5 520 111.0 521 111.0 521 100.4 522 99.5 522 112.1 523 116.8 523 99.4 524 98.5 524 107.5 525 108.9 525 99.5 526 97.3 526 112.4 527 110.2 527 96.4 528 98.0 528 110.2 529 108.4 529 99.4 530 98.6 530 107.6 531 111.6 531 98.6 532 99.4 532 111.8 533 110.9 533 98.9 534 97.3 534 133.9 535 140.4 535 100.6 536 102.1 536 138.9 537 128.1 537 98.8 538 99.6 538 109.3 539 107.3 539 98.9 540 97.7 540 110.3 541 107.5 541 98.7 542 99.2 542 111.7 543 113.4 543 98.8 544 99.6 544 110.6 545 113.9 545 98.4 546 97.7 546 113.1 547 111.2 547 97.6 548 96.8 548 116.6 549 113.5 549 97.9 550 100.8 550 108.6 551 109.8 551 98.2 552 99.9 552 110.3 553 110.1 553 99.0 554 99.3 554 112.5 555 106.6 555 98.1 556 98.6 556 112.9 557 108.1 557 99.0 558 98.5 558 106.7 559 112.4 559 100.1 560 99.5 560 109.3 561 113.2 561 98.0 562 96.8 562 107.9 563 109.3 563 99.2 564 97.3 564 106.7 565 110.5 565 98.8 566 97.4 566 107.3 567 107.9 567 99.8 568 98.4 568 110.7 569 108.0 569 97.5 570 99.8 570 110.5 571 108.5 571 98.6 572 99.5 572 109.0 573 107.6 573 98.9 574 98.3 574 108.6 575 107.1 575 98.9 576 99.2 576 113.6 577 116.3 577 98.4 578 99.3 578 107.8 579 107.1 579 99.0 580 99.3 580 111.2 581 108.8 581 98.4 582 99.4 582 107.8 583 109.7 583 99.5 584 99.6 584 113.6 585 113.8 585 99.8 586 98.2 586 112.9 587 113.2 587 97.7 588 98.8 588 108.3 589 113.4 589 99.8 590 100.2 590 110.1 591 109.4 591 99.1 592 99.0 592 107.1 593 109.2 593 98.6 594 98.7 594 106.6 595 108.0 595 98.1 596 99.4 596 131.7 597 122.7 597 96.7 598 99.6 598 109.8 599 106.7 599 98.9 600 98.8 600 107.2 601 108.8 601 99.4 602 100.7 602 123.0 603 107.4 603 97.6 604 95.5 604 108.5 605 108.8 605 97.5 606 100.4 606 107.6 607 110.2 607 98.6 608 98.9 608 108.9 609 107.5 609 97.4 610 98.5 610 107.5 611 107.3 611 98.8 612 99.4 612 109.1 613 109.5 613 98.2 614 99.0 614 108.7 615 113.9 615 98.3 616 98.2 616 111.9 617 108.9 617 98.6 618 98.6 618 108.6 619 107.8 619 98.9 620 98.7 620 107.0 621 106.9 621 99.9 622 100.7 622 110.3 623 111.6 623 98.8 624 97.9 624 108.9 625 106.9 625 99.0 626 99.4 626 107.2 627 114.7 627 98.6 628 99.6 628 114.5 629 107.9 629 99.6 630 99.0 630 111.4 631 111.5 631 98.5 632 98.7 632 109.0 633 110.1 633 97.4 634 98.9 634 113.5 635 110.8 635 100.1 636 99.6 636 109.0 637 117.3 637 99.3 638 98.8 638 112.7 639 112.4 639 99.8 640 98.1 640 108.3 641 116.0 641 98.1 642 99.4 642 113.0 643 107.0 643 97.5 644 98.8 644 112.3 645 116.4 645 99.6 646 99.2 646 109.1 647 108.7 647 99.3 648 97.6 648 114.4 649 110.0 649 99.2 650 97.4 650 110.4 651 112.1 651 98.2 652 98.7 652 107.5 653 109.5 653 98.1 654 98.8 654 109.6 655 112.9 655 99.0 656 99.8 656 107.2 657 132.2 657.5 133.9 658 135.6 658.5 137.3 659 139.0 659.5 140.6 660 142.2 660.5 143.8 661 145.4 661.5 146.9 662 148.5 662.5 150.0 663 151.5 663.5 153.0 664 154.4 664.5 155.9 665 157.3 665.5 158.7 666 160.0 666.5 161.4 667 162.7 667.5 164.1 668 165.4 668.5 166.6 669 167.9 669.5 169.1 670 170.3 670.5 171.5 671 172.7 671.5 173.9 672 175.0 672.5 176.1 673 177.2 673.5 178.3 674 179.4 674.5 180.4 675 181.4 675.5 182.4 676 183.2 676.5 183.5 677 183.7 677.5 183.9 678 184.0 678.5 184.0 679 184.0 679.5 183.9 680 183.8 680.5 183.7 681 183.6 681.5 183.5 682 183.6 682.5 184.1 683 184.7 683.5 185.4 684 186.2 684.5 187.1 685 188.2 685.5 189.3 686 190.5 686.5 191.9 687 193.3 687.5 194.8 688 196.4 688.5 198.0 689 197.3 689.5 196.4 690 195.7 690.5 195.0 691 194.4 691.5 193.8 692 193.4 692.5 193.2 693 193.0 693.5 192.9 694 192.9 694.5 193.1 695 193.2 695.5 193.4 696 193.6 696.5 193.9 697 194.1 697.5 194.5 698 194.9 698.5 195.3 699 195.9 699.5 196.6 700 197.4 700.5 198.3 701 199.3 701.5 200.4 702 201.6 702.5 202.9 703 204.3 703.5 205.8 704 207.3 704.5 206.4 705 205.5 705.5 204.6 706 203.7 706.5 203.0 707 202.4 707.5 201.9 708 201.5 708.5 201.2 709 201.0 709.5 200.9 710 200.9 710.5 201.0 711 201.2 711.5 201.4 712 201.7 712.5 202.0 713 202.4 713.5 202.9 714 203.4 714.5 204.0 715 204.7 715.5 205.6 716 206.5 716.5 207.6 717 208.7 717.5 210.0 718 211.4 718.5 212.0 721.5 212.0 722 211.8 722.5 211.2 723 210.8 723.5 210.4 724 210.1 724.5 210.0 725 210.0 725.5 210.0 726 210.1 726.5 210.4 727 210.6 727.5 210.9 728 211.2 728.5 211.6 729 212.0 779.5 212.0" stroke="#ffe060" stroke-width="1.4"/>
</g>
<path d="M63.5 73.5v3 M63.5 207.5v-3M79.5 73.5v3 M79.5 207.5v-3M94.5 73.5v3 M94.5 207.5v-3M109.5 73.5v6 M109.5 207.5v-6M124.5 73.5v3 M124.5 207.5v-3M139.5 73.5v3 M139.5 207.5v-3M155.5 73.5v3 M155.5 207.5v-3M170.5 73.5v3 M170.5 207.5v-3M185.5 73.5v3 M185.5 207.5v-3M200.5 73.5v3 M200.5 207.5v-3M216.5 73.5v3 M216.5 207.5v-3M231.5 73.5v3 M231.5 207.5v-3M246.5 73.5v3 M246.5 207.5v-3M261.5 73.5v6 M261.5 207.5v-6M276.5 73.5v3 M276.5 207.5v-3M292.5 73.5v3 M292.5 207.5v-3M307.5 73.5v3 M307.5 207.5v-3M322.5 73.5v3 M322.5 207.5v-3M337.5 73.5v3 M337.5 207.5v-3M353.5 73.5v3 M353.5 207.5v-3M368.5 73.5v3 M368.5 207.5v-3M383.5 73.5v3 M383.5 207.5v-3M398.5 73.5v3 M398.5 207.5v-3M414.5 73.5v6 M414.5 207.5v-6M429.5 73.5v3 M429.5 207.5v-3M444.5 73.5v3 M444.5 207.5v-3M459.5 73.5v3 M459.5 207.5v-3M474.5 73.5v3 M474.5 207.5v-3M490.5 73.5v3 M490.5 207.5v-3M505.5 73.5v3 M505.5 207.5v-3M520.5 73.5v3 M520.5 207.5v-3M535.5 73.5v3 M535.5 207.5v-3M551.5 73.5v3 M551.5 207.5v-3M566.5 73.5v6 M566.5 207.5v-6M581.5 73.5v3 M581.5 207.5v-3M596.5 73.5v3 M596.5 207.5v-3M611.5 73.5v3 M611.5 207.5v-3M627.5 73.5v3 M627.5 207.5v-3M642.5 73.5v3 M642.5 207.5v-3M657.5 73.5v3 M657.5 207.5v-3M672.5 73.5v3 M672.5 207.5v-3M688.5 73.5v3 M688.5 207.5v-3M703.5 73.5v3 M703.5 207.5v-3M718.5 73.5v6 M718.5 207.5v-6M733.5 73.5v3 M733.5 207.5v-3M748.5 73.5v3 M748.5 207.5v-3M764.5 73.5v3 M764.5 207.5v-3" stroke="#d9d9d9" stroke-width="1" fill="none"/>
<path d="M48.5 85.5h6 M779.5 85.5h-6M48.5 97.5h3 M779.5 97.5h-3M48.5 109.5h3 M779.5 109.5h-3M48.5 122.5h6 M779.5 122.5h-6M48.5 134.5h3 M779.5 134.5h-3M48.5 146.5h3 M779.5 146.5h-3M48.5 158.5h6 M779.5 158.5h-6M48.5 171.5h3 M779.5 171.5h-3M48.5 183.5h3 M779.5 183.5h-3M48.5 195.5h6 M779.5 195.5h-6" stroke="#d9d9d9" stroke-width="1" fill="none"/>
<rect x="48.5" y="73.5" width="731.0" height="134.0" fill="none" stroke="#d9d9d9" stroke-width="1"/>
<text x="414" y="68" font-size="13" fill="#d6d6d6" stroke="#d6d6d6" stroke-width="0.35" text-anchor="middle">3x996+484-tone MRU with Punctured 40 MHz Subchannel in 320 MHz Channel</text>
<text x="43.5" y="89.0" font-size="11" font-weight="bold" fill="#d6d6d6" text-anchor="end">0</text>
<text x="43.5" y="125.7" font-size="11" font-weight="bold" fill="#d6d6d6" text-anchor="end">-30</text>
<text x="43.5" y="162.3" font-size="11" font-weight="bold" fill="#d6d6d6" text-anchor="end">-60</text>
<text x="43.5" y="199.0" font-size="11" font-weight="bold" fill="#d6d6d6" text-anchor="end">-90</text>
<text x="109.0" y="221" font-size="11" font-weight="bold" fill="#d6d6d6" text-anchor="middle">-200</text>
<text x="261.2" y="221" font-size="11" font-weight="bold" fill="#d6d6d6" text-anchor="middle">-100</text>
<text x="413.5" y="221" font-size="11" font-weight="bold" fill="#d6d6d6" text-anchor="middle">0</text>
<text x="565.8" y="221" font-size="11" font-weight="bold" fill="#d6d6d6" text-anchor="middle">100</text>
<text x="718.0" y="221" font-size="11" font-weight="bold" fill="#d6d6d6" text-anchor="middle">200</text>
<text x="413.3" y="238.7" font-size="13" fill="#d6d6d6" stroke="#d6d6d6" stroke-width="0.3" text-anchor="middle">Frequency (MHz)</text>
<text transform="translate(18.3 140.3) rotate(-90)" font-size="13" fill="#d6d6d6" stroke="#d6d6d6" stroke-width="0.3" text-anchor="middle">Power (dBm)</text>
<rect x="0" y="251" width="800" height="1" fill="#bdbdbd"/>
<rect x="44" y="260" width="736" height="16.5" fill="url(#jet)"/>
<line x1="45.5" y1="262" x2="45.5" y2="267.5" stroke="#e8e8e8" stroke-width="1"/>
<text x="46.0" y="272" font-size="10.8" font-weight="bold" fill="#e8e8e8">-80</text>
<line x1="118.5" y1="262" x2="118.5" y2="267.5" stroke="#e8e8e8" stroke-width="1"/>
<text x="119.0" y="272" font-size="10.8" font-weight="bold" fill="#e8e8e8">-70</text>
<line x1="192.5" y1="262" x2="192.5" y2="267.5" stroke="#e8e8e8" stroke-width="1"/>
<text x="193.0" y="272" font-size="10.8" font-weight="bold" fill="#e8e8e8">-60</text>
<line x1="265.5" y1="262" x2="265.5" y2="267.5" stroke="#e8e8e8" stroke-width="1"/>
<text x="266.0" y="272" font-size="10.8" font-weight="bold" fill="#e8e8e8">-50</text>
<line x1="339.5" y1="262" x2="339.5" y2="267.5" stroke="#e8e8e8" stroke-width="1"/>
<text x="340.0" y="272" font-size="10.8" font-weight="bold" fill="#e8e8e8">-40</text>
<line x1="412.5" y1="262" x2="412.5" y2="267.5" stroke="#e8e8e8" stroke-width="1"/>
<text x="413.0" y="272" font-size="10.8" font-weight="bold" fill="#e8e8e8">-30</text>
<line x1="485.5" y1="262" x2="485.5" y2="267.5" stroke="#e8e8e8" stroke-width="1"/>
<text x="486.0" y="272" font-size="10.8" font-weight="bold" fill="#e8e8e8">-20</text>
<line x1="559.5" y1="262" x2="559.5" y2="267.5" stroke="#e8e8e8" stroke-width="1"/>
<text x="560.0" y="272" font-size="10.8" font-weight="bold" fill="#e8e8e8">-10</text>
<line x1="632.5" y1="262" x2="632.5" y2="267.5" stroke="#e8e8e8" stroke-width="1"/>
<text x="633.0" y="272" font-size="10.8" font-weight="bold" fill="#e8e8e8">0</text>
<line x1="706.5" y1="262" x2="706.5" y2="267.5" stroke="#e8e8e8" stroke-width="1"/>
<text x="707.0" y="272" font-size="10.8" font-weight="bold" fill="#e8e8e8">10</text>
<text x="761" y="272.5" font-size="10.5" font-weight="bold" fill="#e6e6e6">dBm</text>
<text x="45" y="296" font-size="11" font-weight="bold" fill="#d6d6d6">x10</text>
<text x="63" y="289" font-size="9" font-weight="bold" fill="#d6d6d6">-5</text>
<g clip-path="url(#ax2)">
<rect x="45.5" y="298.5" width="733.5" height="135.0" fill="#00007f"/>
<linearGradient id="g53" gradientUnits="userSpaceOnUse" x1="45.5" y1="0" x2="779.0" y2="0"><stop offset="0.0000" stop-color="#000080"/><stop offset="0.1474" stop-color="#000080"/><stop offset="0.1504" stop-color="#0000bd"/><stop offset="0.1533" stop-color="#0005ff"/><stop offset="0.1572" stop-color="#004dff"/><stop offset="0.1641" stop-color="#009eff"/><stop offset="0.1670" stop-color="#00e5ff"/><stop offset="0.3333" stop-color="#008aff"/><stop offset="0.3366" stop-color="#0057ff"/><stop offset="0.3442" stop-color="#0024ff"/><stop offset="0.3485" stop-color="#0000e6"/><stop offset="0.3518" stop-color="#0000a8"/><stop offset="0.3550" stop-color="#000080"/><stop offset="0.3932" stop-color="#000080"/><stop offset="0.3968" stop-color="#0000bd"/><stop offset="0.4004" stop-color="#000fff"/><stop offset="0.4052" stop-color="#0061ff"/><stop offset="0.4136" stop-color="#00b3ff"/><stop offset="0.4172" stop-color="#00f0ff"/><stop offset="0.8309" stop-color="#1affe5"/><stop offset="0.8350" stop-color="#00f0ff"/><stop offset="0.8446" stop-color="#008aff"/><stop offset="0.8501" stop-color="#0019ff"/><stop offset="0.8542" stop-color="#0000bd"/><stop offset="0.8582" stop-color="#000080"/><stop offset="1.0000" stop-color="#000080"/></linearGradient>
<rect x="45.5" y="298.50" width="733.5" height="2.35" fill="url(#g53)"/>
<linearGradient id="g52" gradientUnits="userSpaceOnUse" x1="45.5" y1="0" x2="779.0" y2="0"><stop offset="0.0000" stop-color="#000080"/><stop offset="0.1449" stop-color="#000080"/><stop offset="0.1483" stop-color="#0000bd"/><stop offset="0.1516" stop-color="#0005ff"/><stop offset="0.1560" stop-color="#004dff"/><stop offset="0.1637" stop-color="#009eff"/><stop offset="0.1670" stop-color="#00e5ff"/><stop offset="0.3333" stop-color="#008aff"/><stop offset="0.3361" stop-color="#0057ff"/><stop offset="0.3427" stop-color="#0024ff"/><stop offset="0.3465" stop-color="#0000e6"/><stop offset="0.3493" stop-color="#0000a8"/><stop offset="0.3521" stop-color="#000080"/><stop offset="0.3901" stop-color="#000080"/><stop offset="0.3942" stop-color="#0000bd"/><stop offset="0.3982" stop-color="#000fff"/><stop offset="0.4036" stop-color="#0061ff"/><stop offset="0.4131" stop-color="#00b3ff"/><stop offset="0.4172" stop-color="#00f0ff"/><stop offset="0.8309" stop-color="#1affe5"/><stop offset="0.8343" stop-color="#00f0ff"/><stop offset="0.8421" stop-color="#008aff"/><stop offset="0.8466" stop-color="#0019ff"/><stop offset="0.8499" stop-color="#0000bd"/><stop offset="0.8533" stop-color="#000080"/><stop offset="1.0000" stop-color="#000080"/></linearGradient>
<rect x="45.5" y="299.85" width="733.5" height="3.47" fill="url(#g52)"/>
<linearGradient id="g51" gradientUnits="userSpaceOnUse" x1="45.5" y1="0" x2="779.0" y2="0"><stop offset="0.0000" stop-color="#000080"/><stop offset="0.1417" stop-color="#000080"/><stop offset="0.1455" stop-color="#0000bd"/><stop offset="0.1493" stop-color="#0005ff"/><stop offset="0.1544" stop-color="#004dff"/><stop offset="0.1632" stop-color="#009eff"/><stop offset="0.1670" stop-color="#00e5ff"/><stop offset="0.3333" stop-color="#008aff"/><stop offset="0.3364" stop-color="#0057ff"/><stop offset="0.3435" stop-color="#0024ff"/><stop offset="0.3475" stop-color="#0000e6"/><stop offset="0.3506" stop-color="#0000a8"/><stop offset="0.3536" stop-color="#000080"/><stop offset="0.3871" stop-color="#000080"/><stop offset="0.3916" stop-color="#0000bd"/><stop offset="0.3961" stop-color="#000fff"/><stop offset="0.4021" stop-color="#0061ff"/><stop offset="0.4127" stop-color="#00b3ff"/><stop offset="0.4172" stop-color="#00f0ff"/><stop offset="0.8309" stop-color="#1affe5"/><stop offset="0.8342" stop-color="#00f0ff"/><stop offset="0.8418" stop-color="#008aff"/><stop offset="0.8461" stop-color="#0019ff"/><stop offset="0.8494" stop-color="#0000bd"/><stop offset="0.8526" stop-color="#000080"/><stop offset="1.0000" stop-color="#000080"/></linearGradient>
<rect x="45.5" y="302.32" width="733.5" height="3.47" fill="url(#g51)"/>
<linearGradient id="g50" gradientUnits="userSpaceOnUse" x1="45.5" y1="0" x2="779.0" y2="0"><stop offset="0.0000" stop-color="#000080"/><stop offset="0.1389" stop-color="#000080"/><stop offset="0.1431" stop-color="#0000bd"/><stop offset="0.1473" stop-color="#0005ff"/><stop offset="0.1529" stop-color="#004dff"/><stop offset="0.1628" stop-color="#009eff"/><stop offset="0.1670" stop-color="#00e5ff"/><stop offset="0.3333" stop-color="#008aff"/><stop offset="0.3365" stop-color="#0057ff"/><stop offset="0.3439" stop-color="#0024ff"/><stop offset="0.3481" stop-color="#0000e6"/><stop offset="0.3513" stop-color="#0000a8"/><stop offset="0.3545" stop-color="#000080"/><stop offset="0.3905" stop-color="#000080"/><stop offset="0.3945" stop-color="#0000bd"/><stop offset="0.3985" stop-color="#000fff"/><stop offset="0.4038" stop-color="#0061ff"/><stop offset="0.4132" stop-color="#00b3ff"/><stop offset="0.4172" stop-color="#00f0ff"/><stop offset="0.8309" stop-color="#1affe5"/><stop offset="0.8349" stop-color="#00f0ff"/><stop offset="0.8443" stop-color="#008aff"/><stop offset="0.8496" stop-color="#0019ff"/><stop offset="0.8536" stop-color="#0000bd"/><stop offset="0.8576" stop-color="#000080"/><stop offset="1.0000" stop-color="#000080"/></linearGradient>
<rect x="45.5" y="304.78" width="733.5" height="3.47" fill="url(#g50)"/>
<linearGradient id="g49" gradientUnits="userSpaceOnUse" x1="45.5" y1="0" x2="779.0" y2="0"><stop offset="0.0000" stop-color="#000080"/><stop offset="0.1403" stop-color="#000080"/><stop offset="0.1443" stop-color="#0000bd"/><stop offset="0.1483" stop-color="#0005ff"/><stop offset="0.1537" stop-color="#004dff"/><stop offset="0.1630" stop-color="#009eff"/><stop offset="0.1670" stop-color="#00e5ff"/><stop offset="0.3333" stop-color="#008aff"/><stop offset="0.3363" stop-color="#0057ff"/><stop offset="0.3433" stop-color="#0024ff"/><stop offset="0.3472" stop-color="#0000e6"/><stop offset="0.3502" stop-color="#0000a8"/><stop offset="0.3532" stop-color="#000080"/><stop offset="0.3915" stop-color="#000080"/><stop offset="0.3953" stop-color="#0000bd"/><stop offset="0.3992" stop-color="#000fff"/><stop offset="0.4043" stop-color="#0061ff"/><stop offset="0.4133" stop-color="#00b3ff"/><stop offset="0.4172" stop-color="#00f0ff"/><stop offset="0.8309" stop-color="#1affe5"/><stop offset="0.8347" stop-color="#00f0ff"/><stop offset="0.8433" stop-color="#008aff"/><stop offset="0.8483" stop-color="#0019ff"/><stop offset="0.8520" stop-color="#0000bd"/><stop offset="0.8557" stop-color="#000080"/><stop offset="1.0000" stop-color="#000080"/></linearGradient>
<rect x="45.5" y="307.25" width="733.5" height="3.47" fill="url(#g49)"/>
<linearGradient id="g48" gradientUnits="userSpaceOnUse" x1="45.5" y1="0" x2="779.0" y2="0"><stop offset="0.0000" stop-color="#000080"/><stop offset="0.1455" stop-color="#000080"/><stop offset="0.1487" stop-color="#0000bd"/><stop offset="0.1519" stop-color="#0005ff"/><stop offset="0.1562" stop-color="#004dff"/><stop offset="0.1638" stop-color="#009eff"/><stop offset="0.1670" stop-color="#00e5ff"/><stop offset="0.3333" stop-color="#008aff"/><stop offset="0.3366" stop-color="#0057ff"/><stop offset="0.3441" stop-color="#0024ff"/><stop offset="0.3484" stop-color="#0000e6"/><stop offset="0.3516" stop-color="#0000a8"/><stop offset="0.3549" stop-color="#000080"/><stop offset="0.3922" stop-color="#000080"/><stop offset="0.3959" stop-color="#0000bd"/><stop offset="0.3997" stop-color="#000fff"/><stop offset="0.4047" stop-color="#0061ff"/><stop offset="0.4134" stop-color="#00b3ff"/><stop offset="0.4172" stop-color="#00f0ff"/><stop offset="0.8309" stop-color="#1affe5"/><stop offset="0.8346" stop-color="#00f0ff"/><stop offset="0.8430" stop-color="#008aff"/><stop offset="0.8479" stop-color="#0019ff"/><stop offset="0.8515" stop-color="#0000bd"/><stop offset="0.8551" stop-color="#000080"/><stop offset="1.0000" stop-color="#000080"/></linearGradient>
<rect x="45.5" y="309.72" width="733.5" height="3.47" fill="url(#g48)"/>
<linearGradient id="g47" gradientUnits="userSpaceOnUse" x1="45.5" y1="0" x2="779.0" y2="0"><stop offset="0.0000" stop-color="#000080"/><stop offset="0.1426" stop-color="#000080"/><stop offset="0.1462" stop-color="#0000bd"/><stop offset="0.1499" stop-color="#0005ff"/><stop offset="0.1548" stop-color="#004dff"/><stop offset="0.1633" stop-color="#009eff"/><stop offset="0.1670" stop-color="#00e5ff"/><stop offset="0.3333" stop-color="#008aff"/><stop offset="0.3361" stop-color="#0057ff"/><stop offset="0.3426" stop-color="#0024ff"/><stop offset="0.3463" stop-color="#0000e6"/><stop offset="0.3491" stop-color="#0000a8"/><stop offset="0.3519" stop-color="#000080"/><stop offset="0.3940" stop-color="#000080"/><stop offset="0.3975" stop-color="#0000bd"/><stop offset="0.4010" stop-color="#000fff"/><stop offset="0.4056" stop-color="#0061ff"/><stop offset="0.4137" stop-color="#00b3ff"/><stop offset="0.4172" stop-color="#00f0ff"/><stop offset="0.8309" stop-color="#1affe5"/><stop offset="0.8349" stop-color="#00f0ff"/><stop offset="0.8443" stop-color="#008aff"/><stop offset="0.8496" stop-color="#0019ff"/><stop offset="0.8536" stop-color="#0000bd"/><stop offset="0.8576" stop-color="#000080"/><stop offset="1.0000" stop-color="#000080"/></linearGradient>
<rect x="45.5" y="312.18" width="733.5" height="3.47" fill="url(#g47)"/>
<linearGradient id="g46" gradientUnits="userSpaceOnUse" x1="45.5" y1="0" x2="779.0" y2="0"><stop offset="0.0000" stop-color="#000080"/><stop offset="0.1340" stop-color="#000080"/><stop offset="0.1390" stop-color="#0000bd"/><stop offset="0.1439" stop-color="#0005ff"/><stop offset="0.1505" stop-color="#004dff"/><stop offset="0.1621" stop-color="#009eff"/><stop offset="0.1670" stop-color="#00e5ff"/><stop offset="0.3333" stop-color="#008aff"/><stop offset="0.3359" stop-color="#0057ff"/><stop offset="0.3420" stop-color="#0024ff"/><stop offset="0.3455" stop-color="#0000e6"/><stop offset="0.3481" stop-color="#0000a8"/><stop offset="0.3508" stop-color="#000080"/><stop offset="0.3921" stop-color="#000080"/><stop offset="0.3958" stop-color="#0000bd"/><stop offset="0.3996" stop-color="#000fff"/><stop offset="0.4046" stop-color="#0061ff"/><stop offset="0.4134" stop-color="#00b3ff"/><stop offset="0.4172" stop-color="#00f0ff"/><stop offset="0.8309" stop-color="#1affe5"/><stop offset="0.8350" stop-color="#00f0ff"/><stop offset="0.8444" stop-color="#008aff"/><stop offset="0.8497" stop-color="#0019ff"/><stop offset="0.8537" stop-color="#0000bd"/><stop offset="0.8578" stop-color="#000080"/><stop offset="1.0000" stop-color="#000080"/></linearGradient>
<rect x="45.5" y="314.65" width="733.5" height="3.47" fill="url(#g46)"/>
<linearGradient id="g45" gradientUnits="userSpaceOnUse" x1="45.5" y1="0" x2="779.0" y2="0"><stop offset="0.0000" stop-color="#000080"/><stop offset="0.1348" stop-color="#000080"/><stop offset="0.1396" stop-color="#0000bd"/><stop offset="0.1445" stop-color="#0005ff"/><stop offset="0.1509" stop-color="#004dff"/><stop offset="0.1622" stop-color="#009eff"/><stop offset="0.1670" stop-color="#00e5ff"/><stop offset="0.3333" stop-color="#008aff"/><stop offset="0.3368" stop-color="#0057ff"/><stop offset="0.3449" stop-color="#0024ff"/><stop offset="0.3495" stop-color="#0000e6"/><stop offset="0.3529" stop-color="#0000a8"/><stop offset="0.3564" stop-color="#000080"/><stop offset="0.3946" stop-color="#000080"/><stop offset="0.3979" stop-color="#0000bd"/><stop offset="0.4013" stop-color="#000fff"/><stop offset="0.4059" stop-color="#0061ff"/><stop offset="0.4138" stop-color="#00b3ff"/><stop offset="0.4172" stop-color="#00f0ff"/><stop offset="0.8309" stop-color="#1affe5"/><stop offset="0.8351" stop-color="#00f0ff"/><stop offset="0.8448" stop-color="#008aff"/><stop offset="0.8504" stop-color="#0019ff"/><stop offset="0.8546" stop-color="#0000bd"/><stop offset="0.8587" stop-color="#000080"/><stop offset="1.0000" stop-color="#000080"/></linearGradient>
<rect x="45.5" y="317.12" width="733.5" height="3.47" fill="url(#g45)"/>
<linearGradient id="g44" gradientUnits="userSpaceOnUse" x1="45.5" y1="0" x2="779.0" y2="0"><stop offset="0.0000" stop-color="#000080"/><stop offset="0.1417" stop-color="#000080"/><stop offset="0.1455" stop-color="#0000bd"/><stop offset="0.1493" stop-color="#0005ff"/><stop offset="0.1543" stop-color="#004dff"/><stop offset="0.1632" stop-color="#009eff"/><stop offset="0.1670" stop-color="#00e5ff"/><stop offset="0.3333" stop-color="#008aff"/><stop offset="0.3370" stop-color="#0057ff"/><stop offset="0.3457" stop-color="#0024ff"/><stop offset="0.3506" stop-color="#0000e6"/><stop offset="0.3543" stop-color="#0000a8"/><stop offset="0.3580" stop-color="#000080"/><stop offset="0.3928" stop-color="#000080"/><stop offset="0.3965" stop-color="#0000bd"/><stop offset="0.4001" stop-color="#000fff"/><stop offset="0.4050" stop-color="#0061ff"/><stop offset="0.4135" stop-color="#00b3ff"/><stop offset="0.4172" stop-color="#00f0ff"/><stop offset="0.8309" stop-color="#1affe5"/><stop offset="0.8351" stop-color="#00f0ff"/><stop offset="0.8448" stop-color="#008aff"/><stop offset="0.8503" stop-color="#0019ff"/><stop offset="0.8545" stop-color="#0000bd"/><stop offset="0.8586" stop-color="#000080"/><stop offset="1.0000" stop-color="#000080"/></linearGradient>
<rect x="45.5" y="319.59" width="733.5" height="3.47" fill="url(#g44)"/>
<linearGradient id="g43" gradientUnits="userSpaceOnUse" x1="45.5" y1="0" x2="779.0" y2="0"><stop offset="0.0000" stop-color="#000080"/><stop offset="0.1442" stop-color="#000080"/><stop offset="0.1476" stop-color="#0000bd"/><stop offset="0.1510" stop-color="#0005ff"/><stop offset="0.1556" stop-color="#004dff"/><stop offset="0.1636" stop-color="#009eff"/><stop offset="0.1670" stop-color="#00e5ff"/><stop offset="0.3333" stop-color="#008aff"/><stop offset="0.3364" stop-color="#0057ff"/><stop offset="0.3434" stop-color="#0024ff"/><stop offset="0.3474" stop-color="#0000e6"/><stop offset="0.3504" stop-color="#0000a8"/><stop offset="0.3535" stop-color="#000080"/><stop offset="0.3942" stop-color="#000080"/><stop offset="0.3976" stop-color="#0000bd"/><stop offset="0.4011" stop-color="#000fff"/><stop offset="0.4057" stop-color="#0061ff"/><stop offset="0.4137" stop-color="#00b3ff"/><stop offset="0.4172" stop-color="#00f0ff"/><stop offset="0.8309" stop-color="#1affe5"/><stop offset="0.8353" stop-color="#00f0ff"/><stop offset="0.8454" stop-color="#008aff"/><stop offset="0.8512" stop-color="#0019ff"/><stop offset="0.8555" stop-color="#0000bd"/><stop offset="0.8598" stop-color="#000080"/><stop offset="1.0000" stop-color="#000080"/></linearGradient>
<rect x="45.5" y="322.05" width="733.5" height="3.47" fill="url(#g43)"/>
<linearGradient id="g42" gradientUnits="userSpaceOnUse" x1="45.5" y1="0" x2="779.0" y2="0"><stop offset="0.0000" stop-color="#000080"/><stop offset="0.1395" stop-color="#000080"/><stop offset="0.1436" stop-color="#0000bd"/><stop offset="0.1478" stop-color="#0005ff"/><stop offset="0.1533" stop-color="#004dff"/><stop offset="0.1629" stop-color="#009eff"/><stop offset="0.1670" stop-color="#00e5ff"/><stop offset="0.3333" stop-color="#008aff"/><stop offset="0.3366" stop-color="#0057ff"/><stop offset="0.3441" stop-color="#0024ff"/><stop offset="0.3485" stop-color="#0000e6"/><stop offset="0.3517" stop-color="#0000a8"/><stop offset="0.3549" stop-color="#000080"/><stop offset="0.3944" stop-color="#000080"/><stop offset="0.3978" stop-color="#0000bd"/><stop offset="0.4012" stop-color="#000fff"/><stop offset="0.4058" stop-color="#0061ff"/><stop offset="0.4138" stop-color="#00b3ff"/><stop offset="0.4172" stop-color="#00f0ff"/><stop offset="0.8309" stop-color="#1affe5"/><stop offset="0.8349" stop-color="#00f0ff"/><stop offset="0.8441" stop-color="#008aff"/><stop offset="0.8494" stop-color="#0019ff"/><stop offset="0.8534" stop-color="#0000bd"/><stop offset="0.8573" stop-color="#000080"/><stop offset="1.0000" stop-color="#000080"/></linearGradient>
<rect x="45.5" y="324.52" width="733.5" height="3.47" fill="url(#g42)"/>
<linearGradient id="g41" gradientUnits="userSpaceOnUse" x1="45.5" y1="0" x2="779.0" y2="0"><stop offset="0.0000" stop-color="#000080"/><stop offset="0.1401" stop-color="#000080"/><stop offset="0.1441" stop-color="#0000bd"/><stop offset="0.1482" stop-color="#0005ff"/><stop offset="0.1535" stop-color="#004dff"/><stop offset="0.1630" stop-color="#009eff"/><stop offset="0.1670" stop-color="#00e5ff"/><stop offset="0.3333" stop-color="#008aff"/><stop offset="0.3363" stop-color="#0057ff"/><stop offset="0.3434" stop-color="#0024ff"/><stop offset="0.3474" stop-color="#0000e6"/><stop offset="0.3504" stop-color="#0000a8"/><stop offset="0.3534" stop-color="#000080"/><stop offset="0.3951" stop-color="#000080"/><stop offset="0.3984" stop-color="#0000bd"/><stop offset="0.4017" stop-color="#000fff"/><stop offset="0.4061" stop-color="#0061ff"/><stop offset="0.4139" stop-color="#00b3ff"/><stop offset="0.4172" stop-color="#00f0ff"/><stop offset="0.8309" stop-color="#1affe5"/><stop offset="0.8348" stop-color="#00f0ff"/><stop offset="0.8439" stop-color="#008aff"/><stop offset="0.8490" stop-color="#0019ff"/><stop offset="0.8529" stop-color="#0000bd"/><stop offset="0.8568" stop-color="#000080"/><stop offset="1.0000" stop-color="#000080"/></linearGradient>
<rect x="45.5" y="326.99" width="733.5" height="3.47" fill="url(#g41)"/>
<linearGradient id="g40" gradientUnits="userSpaceOnUse" x1="45.5" y1="0" x2="779.0" y2="0"><stop offset="0.0000" stop-color="#000080"/><stop offset="0.1470" stop-color="#000080"/><stop offset="0.1500" stop-color="#0000bd"/><stop offset="0.1530" stop-color="#0005ff"/><stop offset="0.1570" stop-color="#004dff"/><stop offset="0.1640" stop-color="#009eff"/><stop offset="0.1670" stop-color="#00e5ff"/><stop offset="0.3333" stop-color="#008aff"/><stop offset="0.3367" stop-color="#0057ff"/><stop offset="0.3446" stop-color="#0024ff"/><stop offset="0.3492" stop-color="#0000e6"/><stop offset="0.3526" stop-color="#0000a8"/><stop offset="0.3560" stop-color="#000080"/><stop offset="0.3915" stop-color="#000080"/><stop offset="0.3953" stop-color="#0000bd"/><stop offset="0.3992" stop-color="#000fff"/><stop offset="0.4043" stop-color="#0061ff"/><stop offset="0.4133" stop-color="#00b3ff"/><stop offset="0.4172" stop-color="#00f0ff"/><stop offset="0.8309" stop-color="#1affe5"/><stop offset="0.8347" stop-color="#00f0ff"/><stop offset="0.8436" stop-color="#008aff"/><stop offset="0.8486" stop-color="#0019ff"/><stop offset="0.8524" stop-color="#0000bd"/><stop offset="0.8562" stop-color="#000080"/><stop offset="1.0000" stop-color="#000080"/></linearGradient>
<rect x="45.5" y="329.45" width="733.5" height="3.47" fill="url(#g40)"/>
<linearGradient id="g39" gradientUnits="userSpaceOnUse" x1="45.5" y1="0" x2="779.0" y2="0"><stop offset="0.0000" stop-color="#000080"/><stop offset="0.1390" stop-color="#000080"/><stop offset="0.1432" stop-color="#0000bd"/><stop offset="0.1474" stop-color="#0005ff"/><stop offset="0.1530" stop-color="#004dff"/><stop offset="0.1628" stop-color="#009eff"/><stop offset="0.1670" stop-color="#00e5ff"/><stop offset="0.3333" stop-color="#008aff"/><stop offset="0.3363" stop-color="#0057ff"/><stop offset="0.3433" stop-color="#0024ff"/><stop offset="0.3472" stop-color="#0000e6"/><stop offset="0.3502" stop-color="#0000a8"/><stop offset="0.3532" stop-color="#000080"/><stop offset="0.3940" stop-color="#000080"/><stop offset="0.3975" stop-color="#0000bd"/><stop offset="0.4009" stop-color="#000fff"/><stop offset="0.4056" stop-color="#0061ff"/><stop offset="0.4137" stop-color="#00b3ff"/><stop offset="0.4172" stop-color="#00f0ff"/><stop offset="0.8309" stop-color="#1affe5"/><stop offset="0.8346" stop-color="#00f0ff"/><stop offset="0.8431" stop-color="#008aff"/><stop offset="0.8479" stop-color="#0019ff"/><stop offset="0.8515" stop-color="#0000bd"/><stop offset="0.8552" stop-color="#000080"/><stop offset="1.0000" stop-color="#000080"/></linearGradient>
<rect x="45.5" y="331.92" width="733.5" height="3.47" fill="url(#g39)"/>
<linearGradient id="g38" gradientUnits="userSpaceOnUse" x1="45.5" y1="0" x2="779.0" y2="0"><stop offset="0.0000" stop-color="#000080"/><stop offset="0.1370" stop-color="#000080"/><stop offset="0.1415" stop-color="#0000bd"/><stop offset="0.1460" stop-color="#0005ff"/><stop offset="0.1520" stop-color="#004dff"/><stop offset="0.1625" stop-color="#009eff"/><stop offset="0.1670" stop-color="#00e5ff"/><stop offset="0.3333" stop-color="#008aff"/><stop offset="0.3369" stop-color="#0057ff"/><stop offset="0.3452" stop-color="#0024ff"/><stop offset="0.3499" stop-color="#0000e6"/><stop offset="0.3535" stop-color="#0000a8"/><stop offset="0.3571" stop-color="#000080"/><stop offset="0.3883" stop-color="#000080"/><stop offset="0.3926" stop-color="#0000bd"/><stop offset="0.3969" stop-color="#000fff"/><stop offset="0.4027" stop-color="#0061ff"/><stop offset="0.4128" stop-color="#00b3ff"/><stop offset="0.4172" stop-color="#00f0ff"/><stop offset="0.8309" stop-color="#1affe5"/><stop offset="0.8343" stop-color="#00f0ff"/><stop offset="0.8421" stop-color="#008aff"/><stop offset="0.8466" stop-color="#0019ff"/><stop offset="0.8500" stop-color="#0000bd"/><stop offset="0.8533" stop-color="#000080"/><stop offset="1.0000" stop-color="#000080"/></linearGradient>
<rect x="45.5" y="334.39" width="733.5" height="3.47" fill="url(#g38)"/>
<linearGradient id="g37" gradientUnits="userSpaceOnUse" x1="45.5" y1="0" x2="779.0" y2="0"><stop offset="0.0000" stop-color="#000080"/><stop offset="0.1358" stop-color="#000080"/><stop offset="0.1405" stop-color="#0000bd"/><stop offset="0.1452" stop-color="#0005ff"/><stop offset="0.1514" stop-color="#004dff"/><stop offset="0.1623" stop-color="#009eff"/><stop offset="0.1670" stop-color="#00e5ff"/><stop offset="0.3333" stop-color="#008aff"/><stop offset="0.3371" stop-color="#0057ff"/><stop offset="0.3460" stop-color="#0024ff"/><stop offset="0.3510" stop-color="#0000e6"/><stop offset="0.3548" stop-color="#0000a8"/><stop offset="0.3586" stop-color="#000080"/><stop offset="0.3907" stop-color="#000080"/><stop offset="0.3947" stop-color="#0000bd"/><stop offset="0.3986" stop-color="#000fff"/><stop offset="0.4039" stop-color="#0061ff"/><stop offset="0.4132" stop-color="#00b3ff"/><stop offset="0.4172" stop-color="#00f0ff"/><stop offset="0.8309" stop-color="#1affe5"/><stop offset="0.8343" stop-color="#00f0ff"/><stop offset="0.8421" stop-color="#008aff"/><stop offset="0.8466" stop-color="#0019ff"/><stop offset="0.8500" stop-color="#0000bd"/><stop offset="0.8533" stop-color="#000080"/><stop offset="1.0000" stop-color="#000080"/></linearGradient>
<rect x="45.5" y="336.85" width="733.5" height="3.47" fill="url(#g37)"/>
<linearGradient id="g36" gradientUnits="userSpaceOnUse" x1="45.5" y1="0" x2="779.0" y2="0"><stop offset="0.0000" stop-color="#000080"/><stop offset="0.1397" stop-color="#000080"/><stop offset="0.1438" stop-color="#0000bd"/><stop offset="0.1479" stop-color="#0005ff"/><stop offset="0.1534" stop-color="#004dff"/><stop offset="0.1629" stop-color="#009eff"/><stop offset="0.1670" stop-color="#00e5ff"/><stop offset="0.3333" stop-color="#008aff"/><stop offset="0.3375" stop-color="#0057ff"/><stop offset="0.3472" stop-color="#0024ff"/><stop offset="0.3528" stop-color="#0000e6"/><stop offset="0.3569" stop-color="#0000a8"/><stop offset="0.3611" stop-color="#000080"/><stop offset="0.3930" stop-color="#000080"/><stop offset="0.3966" stop-color="#0000bd"/><stop offset="0.4002" stop-color="#000fff"/><stop offset="0.4051" stop-color="#0061ff"/><stop offset="0.4135" stop-color="#00b3ff"/><stop offset="0.4172" stop-color="#00f0ff"/><stop offset="0.8309" stop-color="#1affe5"/><stop offset="0.8350" stop-color="#00f0ff"/><stop offset="0.8444" stop-color="#008aff"/><stop offset="0.8498" stop-color="#0019ff"/><stop offset="0.8538" stop-color="#0000bd"/><stop offset="0.8579" stop-color="#000080"/><stop offset="1.0000" stop-color="#000080"/></linearGradient>
<rect x="45.5" y="339.32" width="733.5" height="3.47" fill="url(#g36)"/>
<linearGradient id="g35" gradientUnits="userSpaceOnUse" x1="45.5" y1="0" x2="779.0" y2="0"><stop offset="0.0000" stop-color="#000080"/><stop offset="0.1419" stop-color="#000080"/><stop offset="0.1457" stop-color="#0000bd"/><stop offset="0.1494" stop-color="#0005ff"/><stop offset="0.1545" stop-color="#004dff"/><stop offset="0.1632" stop-color="#009eff"/><stop offset="0.1670" stop-color="#00e5ff"/><stop offset="0.3333" stop-color="#008aff"/><stop offset="0.3369" stop-color="#0057ff"/><stop offset="0.3451" stop-color="#0024ff"/><stop offset="0.3499" stop-color="#0000e6"/><stop offset="0.3534" stop-color="#0000a8"/><stop offset="0.3570" stop-color="#000080"/><stop offset="0.3918" stop-color="#000080"/><stop offset="0.3956" stop-color="#0000bd"/><stop offset="0.3994" stop-color="#000fff"/><stop offset="0.4045" stop-color="#0061ff"/><stop offset="0.4134" stop-color="#00b3ff"/><stop offset="0.4172" stop-color="#00f0ff"/><stop offset="0.8309" stop-color="#1affe5"/><stop offset="0.8356" stop-color="#00f0ff"/><stop offset="0.8463" stop-color="#008aff"/><stop offset="0.8525" stop-color="#0019ff"/><stop offset="0.8571" stop-color="#0000bd"/><stop offset="0.8617" stop-color="#000080"/><stop offset="1.0000" stop-color="#000080"/></linearGradient>
<rect x="45.5" y="341.79" width="733.5" height="3.47" fill="url(#g35)"/>
<linearGradient id="g34" gradientUnits="userSpaceOnUse" x1="45.5" y1="0" x2="779.0" y2="0"><stop offset="0.0000" stop-color="#000080"/><stop offset="0.1389" stop-color="#000080"/><stop offset="0.1431" stop-color="#0000bd"/><stop offset="0.1473" stop-color="#0005ff"/><stop offset="0.1529" stop-color="#004dff"/><stop offset="0.1628" stop-color="#009eff"/><stop offset="0.1670" stop-color="#00e5ff"/><stop offset="0.3333" stop-color="#008aff"/><stop offset="0.3369" stop-color="#0057ff"/><stop offset="0.3451" stop-color="#0024ff"/><stop offset="0.3498" stop-color="#0000e6"/><stop offset="0.3533" stop-color="#0000a8"/><stop offset="0.3568" stop-color="#000080"/><stop offset="0.3977" stop-color="#000080"/><stop offset="0.4006" stop-color="#0000bd"/><stop offset="0.4036" stop-color="#000fff"/><stop offset="0.4075" stop-color="#0061ff"/><stop offset="0.4143" stop-color="#00b3ff"/><stop offset="0.4172" stop-color="#00f0ff"/><stop offset="0.8309" stop-color="#1affe5"/><stop offset="0.8353" stop-color="#00f0ff"/><stop offset="0.8454" stop-color="#008aff"/><stop offset="0.8512" stop-color="#0019ff"/><stop offset="0.8555" stop-color="#0000bd"/><stop offset="0.8599" stop-color="#000080"/><stop offset="1.0000" stop-color="#000080"/></linearGradient>
<rect x="45.5" y="344.25" width="733.5" height="3.47" fill="url(#g34)"/>
<linearGradient id="g33" gradientUnits="userSpaceOnUse" x1="45.5" y1="0" x2="779.0" y2="0"><stop offset="0.0000" stop-color="#000080"/><stop offset="0.1335" stop-color="#000080"/><stop offset="0.1386" stop-color="#0000bd"/><stop offset="0.1436" stop-color="#0005ff"/><stop offset="0.1503" stop-color="#004dff"/><stop offset="0.1620" stop-color="#009eff"/><stop offset="0.1670" stop-color="#00e5ff"/><stop offset="0.3333" stop-color="#008aff"/><stop offset="0.3377" stop-color="#0057ff"/><stop offset="0.3478" stop-color="#0024ff"/><stop offset="0.3536" stop-color="#0000e6"/><stop offset="0.3580" stop-color="#0000a8"/><stop offset="0.3623" stop-color="#000080"/><stop offset="0.3967" stop-color="#000080"/><stop offset="0.3997" stop-color="#0000bd"/><stop offset="0.4028" stop-color="#000fff"/><stop offset="0.4069" stop-color="#0061ff"/><stop offset="0.4141" stop-color="#00b3ff"/><stop offset="0.4172" stop-color="#00f0ff"/><stop offset="0.8309" stop-color="#1affe5"/><stop offset="0.8346" stop-color="#00f0ff"/><stop offset="0.8432" stop-color="#008aff"/><stop offset="0.8481" stop-color="#0019ff"/><stop offset="0.8517" stop-color="#0000bd"/><stop offset="0.8554" stop-color="#000080"/><stop offset="1.0000" stop-color="#000080"/></linearGradient>
<rect x="45.5" y="346.72" width="733.5" height="3.47" fill="url(#g33)"/>
<linearGradient id="g32" gradientUnits="userSpaceOnUse" x1="45.5" y1="0" x2="779.0" y2="0"><stop offset="0.0000" stop-color="#000080"/><stop offset="0.1385" stop-color="#000080"/><stop offset="0.1427" stop-color="#0000bd"/><stop offset="0.1470" stop-color="#0005ff"/><stop offset="0.1527" stop-color="#004dff"/><stop offset="0.1627" stop-color="#009eff"/><stop offset="0.1670" stop-color="#00e5ff"/><stop offset="0.3333" stop-color="#008aff"/><stop offset="0.3371" stop-color="#0057ff"/><stop offset="0.3458" stop-color="#0024ff"/><stop offset="0.3507" stop-color="#0000e6"/><stop offset="0.3545" stop-color="#0000a8"/><stop offset="0.3582" stop-color="#000080"/><stop offset="0.3947" stop-color="#000080"/><stop offset="0.3981" stop-color="#0000bd"/><stop offset="0.4014" stop-color="#000fff"/><stop offset="0.4059" stop-color="#0061ff"/><stop offset="0.4138" stop-color="#00b3ff"/><stop offset="0.4172" stop-color="#00f0ff"/><stop offset="0.8309" stop-color="#1affe5"/><stop offset="0.8344" stop-color="#00f0ff"/><stop offset="0.8424" stop-color="#008aff"/><stop offset="0.8470" stop-color="#0019ff"/><stop offset="0.8505" stop-color="#0000bd"/><stop offset="0.8539" stop-color="#000080"/><stop offset="1.0000" stop-color="#000080"/></linearGradient>
<rect x="45.5" y="349.19" width="733.5" height="3.47" fill="url(#g32)"/>
<linearGradient id="g31" gradientUnits="userSpaceOnUse" x1="45.5" y1="0" x2="779.0" y2="0"><stop offset="0.0000" stop-color="#000080"/><stop offset="0.1373" stop-color="#000080"/><stop offset="0.1418" stop-color="#0000bd"/><stop offset="0.1462" stop-color="#0005ff"/><stop offset="0.1522" stop-color="#004dff"/><stop offset="0.1626" stop-color="#009eff"/><stop offset="0.1670" stop-color="#00e5ff"/><stop offset="0.3333" stop-color="#008aff"/><stop offset="0.3369" stop-color="#0057ff"/><stop offset="0.3454" stop-color="#0024ff"/><stop offset="0.3502" stop-color="#0000e6"/><stop offset="0.3538" stop-color="#0000a8"/><stop offset="0.3574" stop-color="#000080"/><stop offset="0.3940" stop-color="#000080"/><stop offset="0.3975" stop-color="#0000bd"/><stop offset="0.4010" stop-color="#000fff"/><stop offset="0.4056" stop-color="#0061ff"/><stop offset="0.4137" stop-color="#00b3ff"/><stop offset="0.4172" stop-color="#00f0ff"/><stop offset="0.8309" stop-color="#1affe5"/><stop offset="0.8345" stop-color="#00f0ff"/><stop offset="0.8427" stop-color="#008aff"/><stop offset="0.8474" stop-color="#0019ff"/><stop offset="0.8509" stop-color="#0000bd"/><stop offset="0.8544" stop-color="#000080"/><stop offset="1.0000" stop-color="#000080"/></linearGradient>
<rect x="45.5" y="351.66" width="733.5" height="3.47" fill="url(#g31)"/>
<linearGradient id="g30" gradientUnits="userSpaceOnUse" x1="45.5" y1="0" x2="779.0" y2="0"><stop offset="0.0000" stop-color="#000080"/><stop offset="0.1373" stop-color="#000080"/><stop offset="0.1417" stop-color="#0000bd"/><stop offset="0.1462" stop-color="#0005ff"/><stop offset="0.1521" stop-color="#004dff"/><stop offset="0.1625" stop-color="#009eff"/><stop offset="0.1670" stop-color="#00e5ff"/><stop offset="0.3333" stop-color="#008aff"/><stop offset="0.3363" stop-color="#0057ff"/><stop offset="0.3432" stop-color="#0024ff"/><stop offset="0.3472" stop-color="#0000e6"/><stop offset="0.3501" stop-color="#0000a8"/><stop offset="0.3531" stop-color="#000080"/><stop offset="0.3890" stop-color="#000080"/><stop offset="0.3932" stop-color="#0000bd"/><stop offset="0.3975" stop-color="#000fff"/><stop offset="0.4031" stop-color="#0061ff"/><stop offset="0.4130" stop-color="#00b3ff"/><stop offset="0.4172" stop-color="#00f0ff"/><stop offset="0.8309" stop-color="#1affe5"/><stop offset="0.8345" stop-color="#00f0ff"/><stop offset="0.8430" stop-color="#008aff"/><stop offset="0.8478" stop-color="#0019ff"/><stop offset="0.8514" stop-color="#0000bd"/><stop offset="0.8550" stop-color="#000080"/><stop offset="1.0000" stop-color="#000080"/></linearGradient>
<rect x="45.5" y="354.12" width="733.5" height="3.47" fill="url(#g30)"/>
<linearGradient id="g29" gradientUnits="userSpaceOnUse" x1="45.5" y1="0" x2="779.0" y2="0"><stop offset="0.0000" stop-color="#000080"/><stop offset="0.1391" stop-color="#000080"/><stop offset="0.1433" stop-color="#0000bd"/><stop offset="0.1475" stop-color="#0005ff"/><stop offset="0.1530" stop-color="#004dff"/><stop offset="0.1628" stop-color="#009eff"/><stop offset="0.1670" stop-color="#00e5ff"/><stop offset="0.3333" stop-color="#008aff"/><stop offset="0.3364" stop-color="#0057ff"/><stop offset="0.3436" stop-color="#0024ff"/><stop offset="0.3476" stop-color="#0000e6"/><stop offset="0.3507" stop-color="#0000a8"/><stop offset="0.3538" stop-color="#000080"/><stop offset="0.3851" stop-color="#000080"/><stop offset="0.3899" stop-color="#0000bd"/><stop offset="0.3947" stop-color="#000fff"/><stop offset="0.4011" stop-color="#0061ff"/><stop offset="0.4124" stop-color="#00b3ff"/><stop offset="0.4172" stop-color="#00f0ff"/><stop offset="0.8309" stop-color="#1affe5"/><stop offset="0.8346" stop-color="#00f0ff"/><stop offset="0.8430" stop-color="#008aff"/><stop offset="0.8478" stop-color="#0019ff"/><stop offset="0.8514" stop-color="#0000bd"/><stop offset="0.8550" stop-color="#000080"/><stop offset="1.0000" stop-color="#000080"/></linearGradient>
<rect x="45.5" y="356.59" width="733.5" height="3.47" fill="url(#g29)"/>
<linearGradient id="g28" gradientUnits="userSpaceOnUse" x1="45.5" y1="0" x2="779.0" y2="0"><stop offset="0.0000" stop-color="#000080"/><stop offset="0.1389" stop-color="#000080"/><stop offset="0.1431" stop-color="#0000bd"/><stop offset="0.1473" stop-color="#0005ff"/><stop offset="0.1529" stop-color="#004dff"/><stop offset="0.1628" stop-color="#009eff"/><stop offset="0.1670" stop-color="#00e5ff"/><stop offset="0.3333" stop-color="#008aff"/><stop offset="0.3363" stop-color="#0057ff"/><stop offset="0.3433" stop-color="#0024ff"/><stop offset="0.3473" stop-color="#0000e6"/><stop offset="0.3503" stop-color="#0000a8"/><stop offset="0.3533" stop-color="#000080"/><stop offset="0.3848" stop-color="#000080"/><stop offset="0.3897" stop-color="#0000bd"/><stop offset="0.3945" stop-color="#000fff"/><stop offset="0.4010" stop-color="#0061ff"/><stop offset="0.4123" stop-color="#00b3ff"/><stop offset="0.4172" stop-color="#00f0ff"/><stop offset="0.8309" stop-color="#1affe5"/><stop offset="0.8346" stop-color="#00f0ff"/><stop offset="0.8432" stop-color="#008aff"/><stop offset="0.8481" stop-color="#0019ff"/><stop offset="0.8518" stop-color="#0000bd"/><stop offset="0.8555" stop-color="#000080"/><stop offset="1.0000" stop-color="#000080"/></linearGradient>
<rect x="45.5" y="359.06" width="733.5" height="3.47" fill="url(#g28)"/>
<linearGradient id="g27" gradientUnits="userSpaceOnUse" x1="45.5" y1="0" x2="779.0" y2="0"><stop offset="0.0000" stop-color="#000080"/><stop offset="0.1381" stop-color="#000080"/><stop offset="0.1425" stop-color="#0000bd"/><stop offset="0.1468" stop-color="#0005ff"/><stop offset="0.1526" stop-color="#004dff"/><stop offset="0.1627" stop-color="#009eff"/><stop offset="0.1670" stop-color="#00e5ff"/><stop offset="0.3333" stop-color="#008aff"/><stop offset="0.3368" stop-color="#0057ff"/><stop offset="0.3448" stop-color="#0024ff"/><stop offset="0.3494" stop-color="#0000e6"/><stop offset="0.3528" stop-color="#0000a8"/><stop offset="0.3563" stop-color="#000080"/><stop offset="0.3835" stop-color="#000080"/><stop offset="0.3886" stop-color="#0000bd"/><stop offset="0.3936" stop-color="#000fff"/><stop offset="0.4004" stop-color="#0061ff"/><stop offset="0.4121" stop-color="#00b3ff"/><stop offset="0.4172" stop-color="#00f0ff"/><stop offset="0.8309" stop-color="#1affe5"/><stop offset="0.8352" stop-color="#00f0ff"/><stop offset="0.8451" stop-color="#008aff"/><stop offset="0.8508" stop-color="#0019ff"/><stop offset="0.8551" stop-color="#0000bd"/><stop offset="0.8594" stop-color="#000080"/><stop offset="1.0000" stop-color="#000080"/></linearGradient>
<rect x="45.5" y="361.52" width="733.5" height="3.47" fill="url(#g27)"/>
<linearGradient id="g26" gradientUnits="userSpaceOnUse" x1="45.5" y1="0" x2="779.0" y2="0"><stop offset="0.0000" stop-color="#000080"/><stop offset="0.1345" stop-color="#000080"/><stop offset="0.1394" stop-color="#0000bd"/><stop offset="0.1443" stop-color="#0005ff"/><stop offset="0.1508" stop-color="#004dff"/><stop offset="0.1621" stop-color="#009eff"/><stop offset="0.1670" stop-color="#00e5ff"/><stop offset="0.3333" stop-color="#008aff"/><stop offset="0.3367" stop-color="#0057ff"/><stop offset="0.3445" stop-color="#0024ff"/><stop offset="0.3490" stop-color="#0000e6"/><stop offset="0.3523" stop-color="#0000a8"/><stop offset="0.3556" stop-color="#000080"/><stop offset="0.3928" stop-color="#000080"/><stop offset="0.3965" stop-color="#0000bd"/><stop offset="0.4001" stop-color="#000fff"/><stop offset="0.4050" stop-color="#0061ff"/><stop offset="0.4135" stop-color="#00b3ff"/><stop offset="0.4172" stop-color="#00f0ff"/><stop offset="0.8309" stop-color="#1affe5"/><stop offset="0.8356" stop-color="#00f0ff"/><stop offset="0.8465" stop-color="#008aff"/><stop offset="0.8527" stop-color="#0019ff"/><stop offset="0.8573" stop-color="#0000bd"/><stop offset="0.8620" stop-color="#000080"/><stop offset="1.0000" stop-color="#000080"/></linearGradient>
<rect x="45.5" y="363.99" width="733.5" height="3.47" fill="url(#g26)"/>
<linearGradient id="g25" gradientUnits="userSpaceOnUse" x1="45.5" y1="0" x2="779.0" y2="0"><stop offset="0.0000" stop-color="#000080"/><stop offset="0.1378" stop-color="#000080"/><stop offset="0.1421" stop-color="#0000bd"/><stop offset="0.1465" stop-color="#0005ff"/><stop offset="0.1524" stop-color="#004dff"/><stop offset="0.1626" stop-color="#009eff"/><stop offset="0.1670" stop-color="#00e5ff"/><stop offset="0.3333" stop-color="#008aff"/><stop offset="0.3365" stop-color="#0057ff"/><stop offset="0.3440" stop-color="#0024ff"/><stop offset="0.3483" stop-color="#0000e6"/><stop offset="0.3515" stop-color="#0000a8"/><stop offset="0.3547" stop-color="#000080"/><stop offset="0.3888" stop-color="#000080"/><stop offset="0.3931" stop-color="#0000bd"/><stop offset="0.3973" stop-color="#000fff"/><stop offset="0.4030" stop-color="#0061ff"/><stop offset="0.4129" stop-color="#00b3ff"/><stop offset="0.4172" stop-color="#00f0ff"/><stop offset="0.8309" stop-color="#1affe5"/><stop offset="0.8355" stop-color="#00f0ff"/><stop offset="0.8460" stop-color="#008aff"/><stop offset="0.8520" stop-color="#0019ff"/><stop offset="0.8565" stop-color="#0000bd"/><stop offset="0.8610" stop-color="#000080"/><stop offset="1.0000" stop-color="#000080"/></linearGradient>
<rect x="45.5" y="366.46" width="733.5" height="3.47" fill="url(#g25)"/>
<linearGradient id="g24" gradientUnits="userSpaceOnUse" x1="45.5" y1="0" x2="779.0" y2="0"><stop offset="0.0000" stop-color="#000080"/><stop offset="0.1399" stop-color="#000080"/><stop offset="0.1440" stop-color="#0000bd"/><stop offset="0.1480" stop-color="#0005ff"/><stop offset="0.1534" stop-color="#004dff"/><stop offset="0.1629" stop-color="#009eff"/><stop offset="0.1670" stop-color="#00e5ff"/><stop offset="0.3333" stop-color="#008aff"/><stop offset="0.3371" stop-color="#0057ff"/><stop offset="0.3460" stop-color="#0024ff"/><stop offset="0.3510" stop-color="#0000e6"/><stop offset="0.3548" stop-color="#0000a8"/><stop offset="0.3586" stop-color="#000080"/><stop offset="0.3910" stop-color="#000080"/><stop offset="0.3949" stop-color="#0000bd"/><stop offset="0.3988" stop-color="#000fff"/><stop offset="0.4041" stop-color="#0061ff"/><stop offset="0.4132" stop-color="#00b3ff"/><stop offset="0.4172" stop-color="#00f0ff"/><stop offset="0.8309" stop-color="#1affe5"/><stop offset="0.8354" stop-color="#00f0ff"/><stop offset="0.8458" stop-color="#008aff"/><stop offset="0.8517" stop-color="#0019ff"/><stop offset="0.8562" stop-color="#0000bd"/><stop offset="0.8606" stop-color="#000080"/><stop offset="1.0000" stop-color="#000080"/></linearGradient>
<rect x="45.5" y="368.93" width="733.5" height="3.47" fill="url(#g24)"/>
<linearGradient id="g23" gradientUnits="userSpaceOnUse" x1="45.5" y1="0" x2="779.0" y2="0"><stop offset="0.0000" stop-color="#000080"/><stop offset="0.1361" stop-color="#000080"/><stop offset="0.1407" stop-color="#0000bd"/><stop offset="0.1454" stop-color="#0005ff"/><stop offset="0.1515" stop-color="#004dff"/><stop offset="0.1624" stop-color="#009eff"/><stop offset="0.1670" stop-color="#00e5ff"/><stop offset="0.3333" stop-color="#008aff"/><stop offset="0.3369" stop-color="#0057ff"/><stop offset="0.3451" stop-color="#0024ff"/><stop offset="0.3498" stop-color="#0000e6"/><stop offset="0.3533" stop-color="#0000a8"/><stop offset="0.3568" stop-color="#000080"/><stop offset="0.3899" stop-color="#000080"/><stop offset="0.3940" stop-color="#0000bd"/><stop offset="0.3981" stop-color="#000fff"/><stop offset="0.4035" stop-color="#0061ff"/><stop offset="0.4131" stop-color="#00b3ff"/><stop offset="0.4172" stop-color="#00f0ff"/><stop offset="0.8309" stop-color="#1affe5"/><stop offset="0.8355" stop-color="#00f0ff"/><stop offset="0.8461" stop-color="#008aff"/><stop offset="0.8522" stop-color="#0019ff"/><stop offset="0.8567" stop-color="#0000bd"/><stop offset="0.8613" stop-color="#000080"/><stop offset="1.0000" stop-color="#000080"/></linearGradient>
<rect x="45.5" y="371.39" width="733.5" height="3.47" fill="url(#g23)"/>
<linearGradient id="g22" gradientUnits="userSpaceOnUse" x1="45.5" y1="0" x2="779.0" y2="0"><stop offset="0.0000" stop-color="#000080"/><stop offset="0.1403" stop-color="#000080"/><stop offset="0.1443" stop-color="#0000bd"/><stop offset="0.1483" stop-color="#0005ff"/><stop offset="0.1537" stop-color="#004dff"/><stop offset="0.1630" stop-color="#009eff"/><stop offset="0.1670" stop-color="#00e5ff"/><stop offset="0.3333" stop-color="#008aff"/><stop offset="0.3374" stop-color="#0057ff"/><stop offset="0.3470" stop-color="#0024ff"/><stop offset="0.3525" stop-color="#0000e6"/><stop offset="0.3566" stop-color="#0000a8"/><stop offset="0.3607" stop-color="#000080"/><stop offset="0.3931" stop-color="#000080"/><stop offset="0.3967" stop-color="#0000bd"/><stop offset="0.4003" stop-color="#000fff"/><stop offset="0.4051" stop-color="#0061ff"/><stop offset="0.4136" stop-color="#00b3ff"/><stop offset="0.4172" stop-color="#00f0ff"/><stop offset="0.8309" stop-color="#1affe5"/><stop offset="0.8352" stop-color="#00f0ff"/><stop offset="0.8450" stop-color="#008aff"/><stop offset="0.8507" stop-color="#0019ff"/><stop offset="0.8549" stop-color="#0000bd"/><stop offset="0.8591" stop-color="#000080"/><stop offset="1.0000" stop-color="#000080"/></linearGradient>
<rect x="45.5" y="373.86" width="733.5" height="3.47" fill="url(#g22)"/>
<linearGradient id="g21" gradientUnits="userSpaceOnUse" x1="45.5" y1="0" x2="779.0" y2="0"><stop offset="0.0000" stop-color="#000080"/><stop offset="0.1440" stop-color="#000080"/><stop offset="0.1475" stop-color="#0000bd"/><stop offset="0.1509" stop-color="#0005ff"/><stop offset="0.1555" stop-color="#004dff"/><stop offset="0.1636" stop-color="#009eff"/><stop offset="0.1670" stop-color="#00e5ff"/><stop offset="0.3333" stop-color="#008aff"/><stop offset="0.3374" stop-color="#0057ff"/><stop offset="0.3469" stop-color="#0024ff"/><stop offset="0.3524" stop-color="#0000e6"/><stop offset="0.3564" stop-color="#0000a8"/><stop offset="0.3605" stop-color="#000080"/><stop offset="0.3910" stop-color="#000080"/><stop offset="0.3949" stop-color="#0000bd"/><stop offset="0.3989" stop-color="#000fff"/><stop offset="0.4041" stop-color="#0061ff"/><stop offset="0.4133" stop-color="#00b3ff"/><stop offset="0.4172" stop-color="#00f0ff"/><stop offset="0.8309" stop-color="#1affe5"/><stop offset="0.8343" stop-color="#00f0ff"/><stop offset="0.8422" stop-color="#008aff"/><stop offset="0.8466" stop-color="#0019ff"/><stop offset="0.8500" stop-color="#0000bd"/><stop offset="0.8534" stop-color="#000080"/><stop offset="1.0000" stop-color="#000080"/></linearGradient>
<rect x="45.5" y="376.33" width="733.5" height="3.47" fill="url(#g21)"/>
<linearGradient id="g20" gradientUnits="userSpaceOnUse" x1="45.5" y1="0" x2="779.0" y2="0"><stop offset="0.0000" stop-color="#000080"/><stop offset="0.1381" stop-color="#000080"/><stop offset="0.1424" stop-color="#0000bd"/><stop offset="0.1468" stop-color="#0005ff"/><stop offset="0.1525" stop-color="#004dff"/><stop offset="0.1627" stop-color="#009eff"/><stop offset="0.1670" stop-color="#00e5ff"/><stop offset="0.3333" stop-color="#008aff"/><stop offset="0.3367" stop-color="#0057ff"/><stop offset="0.3447" stop-color="#0024ff"/><stop offset="0.3492" stop-color="#0000e6"/><stop offset="0.3526" stop-color="#0000a8"/><stop offset="0.3560" stop-color="#000080"/><stop offset="0.3926" stop-color="#000080"/><stop offset="0.3963" stop-color="#0000bd"/><stop offset="0.4000" stop-color="#000fff"/><stop offset="0.4049" stop-color="#0061ff"/><stop offset="0.4135" stop-color="#00b3ff"/><stop offset="0.4172" stop-color="#00f0ff"/><stop offset="0.8309" stop-color="#1affe5"/><stop offset="0.8343" stop-color="#00f0ff"/><stop offset="0.8421" stop-color="#008aff"/><stop offset="0.8465" stop-color="#0019ff"/><stop offset="0.8499" stop-color="#0000bd"/><stop offset="0.8532" stop-color="#000080"/><stop offset="1.0000" stop-color="#000080"/></linearGradient>
<rect x="45.5" y="378.79" width="733.5" height="3.47" fill="url(#g20)"/>
<linearGradient id="g19" gradientUnits="userSpaceOnUse" x1="45.5" y1="0" x2="779.0" y2="0"><stop offset="0.0000" stop-color="#000080"/><stop offset="0.1396" stop-color="#000080"/><stop offset="0.1437" stop-color="#0000bd"/><stop offset="0.1478" stop-color="#0005ff"/><stop offset="0.1533" stop-color="#004dff"/><stop offset="0.1629" stop-color="#009eff"/><stop offset="0.1670" stop-color="#00e5ff"/><stop offset="0.3333" stop-color="#008aff"/><stop offset="0.3359" stop-color="#0057ff"/><stop offset="0.3419" stop-color="#0024ff"/><stop offset="0.3454" stop-color="#0000e6"/><stop offset="0.3480" stop-color="#0000a8"/><stop offset="0.3506" stop-color="#000080"/><stop offset="0.3939" stop-color="#000080"/><stop offset="0.3974" stop-color="#0000bd"/><stop offset="0.4009" stop-color="#000fff"/><stop offset="0.4055" stop-color="#0061ff"/><stop offset="0.4137" stop-color="#00b3ff"/><stop offset="0.4172" stop-color="#00f0ff"/><stop offset="0.8309" stop-color="#1affe5"/><stop offset="0.8349" stop-color="#00f0ff"/><stop offset="0.8442" stop-color="#008aff"/><stop offset="0.8495" stop-color="#0019ff"/><stop offset="0.8534" stop-color="#0000bd"/><stop offset="0.8574" stop-color="#000080"/><stop offset="1.0000" stop-color="#000080"/></linearGradient>
<rect x="45.5" y="381.26" width="733.5" height="3.47" fill="url(#g19)"/>
<linearGradient id="g18" gradientUnits="userSpaceOnUse" x1="45.5" y1="0" x2="779.0" y2="0"><stop offset="0.0000" stop-color="#000080"/><stop offset="0.1369" stop-color="#000080"/><stop offset="0.1414" stop-color="#0000bd"/><stop offset="0.1459" stop-color="#0005ff"/><stop offset="0.1519" stop-color="#004dff"/><stop offset="0.1625" stop-color="#009eff"/><stop offset="0.1670" stop-color="#00e5ff"/><stop offset="0.3333" stop-color="#008aff"/><stop offset="0.3367" stop-color="#0057ff"/><stop offset="0.3445" stop-color="#0024ff"/><stop offset="0.3490" stop-color="#0000e6"/><stop offset="0.3523" stop-color="#0000a8"/><stop offset="0.3556" stop-color="#000080"/><stop offset="0.3872" stop-color="#000080"/><stop offset="0.3917" stop-color="#0000bd"/><stop offset="0.3962" stop-color="#000fff"/><stop offset="0.4022" stop-color="#0061ff"/><stop offset="0.4127" stop-color="#00b3ff"/><stop offset="0.4172" stop-color="#00f0ff"/><stop offset="0.8309" stop-color="#1affe5"/><stop offset="0.8353" stop-color="#00f0ff"/><stop offset="0.8454" stop-color="#008aff"/><stop offset="0.8512" stop-color="#0019ff"/><stop offset="0.8556" stop-color="#0000bd"/><stop offset="0.8599" stop-color="#000080"/><stop offset="1.0000" stop-color="#000080"/></linearGradient>
<rect x="45.5" y="383.73" width="733.5" height="3.47" fill="url(#g18)"/>
<linearGradient id="g17" gradientUnits="userSpaceOnUse" x1="45.5" y1="0" x2="779.0" y2="0"><stop offset="0.0000" stop-color="#000080"/><stop offset="0.1349" stop-color="#000080"/><stop offset="0.1397" stop-color="#0000bd"/><stop offset="0.1445" stop-color="#0005ff"/><stop offset="0.1510" stop-color="#004dff"/><stop offset="0.1622" stop-color="#009eff"/><stop offset="0.1670" stop-color="#00e5ff"/><stop offset="0.3333" stop-color="#008aff"/><stop offset="0.3367" stop-color="#0057ff"/><stop offset="0.3445" stop-color="#0024ff"/><stop offset="0.3490" stop-color="#0000e6"/><stop offset="0.3523" stop-color="#0000a8"/><stop offset="0.3557" stop-color="#000080"/><stop offset="0.3912" stop-color="#000080"/><stop offset="0.3951" stop-color="#0000bd"/><stop offset="0.3990" stop-color="#000fff"/><stop offset="0.4042" stop-color="#0061ff"/><stop offset="0.4133" stop-color="#00b3ff"/><stop offset="0.4172" stop-color="#00f0ff"/><stop offset="0.8309" stop-color="#1affe5"/><stop offset="0.8350" stop-color="#00f0ff"/><stop offset="0.8444" stop-color="#008aff"/><stop offset="0.8497" stop-color="#0019ff"/><stop offset="0.8538" stop-color="#0000bd"/><stop offset="0.8578" stop-color="#000080"/><stop offset="1.0000" stop-color="#000080"/></linearGradient>
<rect x="45.5" y="386.19" width="733.5" height="3.47" fill="url(#g17)"/>
<linearGradient id="g16" gradientUnits="userSpaceOnUse" x1="45.5" y1="0" x2="779.0" y2="0"><stop offset="0.0000" stop-color="#000080"/><stop offset="0.1448" stop-color="#000080"/><stop offset="0.1481" stop-color="#0000bd"/><stop offset="0.1515" stop-color="#0005ff"/><stop offset="0.1559" stop-color="#004dff"/><stop offset="0.1637" stop-color="#009eff"/><stop offset="0.1670" stop-color="#00e5ff"/><stop offset="0.3333" stop-color="#008aff"/><stop offset="0.3365" stop-color="#0057ff"/><stop offset="0.3439" stop-color="#0024ff"/><stop offset="0.3481" stop-color="#0000e6"/><stop offset="0.3513" stop-color="#0000a8"/><stop offset="0.3545" stop-color="#000080"/><stop offset="0.3923" stop-color="#000080"/><stop offset="0.3960" stop-color="#0000bd"/><stop offset="0.3998" stop-color="#000fff"/><stop offset="0.4047" stop-color="#0061ff"/><stop offset="0.4134" stop-color="#00b3ff"/><stop offset="0.4172" stop-color="#00f0ff"/><stop offset="0.8309" stop-color="#1affe5"/><stop offset="0.8350" stop-color="#00f0ff"/><stop offset="0.8445" stop-color="#008aff"/><stop offset="0.8499" stop-color="#0019ff"/><stop offset="0.8539" stop-color="#0000bd"/><stop offset="0.8580" stop-color="#000080"/><stop offset="1.0000" stop-color="#000080"/></linearGradient>
<rect x="45.5" y="388.66" width="733.5" height="3.47" fill="url(#g16)"/>
<linearGradient id="g15" gradientUnits="userSpaceOnUse" x1="45.5" y1="0" x2="779.0" y2="0"><stop offset="0.0000" stop-color="#000080"/><stop offset="0.1425" stop-color="#000080"/><stop offset="0.1462" stop-color="#0000bd"/><stop offset="0.1499" stop-color="#0005ff"/><stop offset="0.1548" stop-color="#004dff"/><stop offset="0.1633" stop-color="#009eff"/><stop offset="0.1670" stop-color="#00e5ff"/><stop offset="0.3333" stop-color="#008aff"/><stop offset="0.3363" stop-color="#0057ff"/><stop offset="0.3432" stop-color="#0024ff"/><stop offset="0.3472" stop-color="#0000e6"/><stop offset="0.3501" stop-color="#0000a8"/><stop offset="0.3531" stop-color="#000080"/><stop offset="0.3925" stop-color="#000080"/><stop offset="0.3962" stop-color="#0000bd"/><stop offset="0.3999" stop-color="#000fff"/><stop offset="0.4048" stop-color="#0061ff"/><stop offset="0.4135" stop-color="#00b3ff"/><stop offset="0.4172" stop-color="#00f0ff"/><stop offset="0.8309" stop-color="#1affe5"/><stop offset="0.8352" stop-color="#00f0ff"/><stop offset="0.8451" stop-color="#008aff"/><stop offset="0.8508" stop-color="#0019ff"/><stop offset="0.8550" stop-color="#0000bd"/><stop offset="0.8593" stop-color="#000080"/><stop offset="1.0000" stop-color="#000080"/></linearGradient>
<rect x="45.5" y="391.13" width="733.5" height="3.47" fill="url(#g15)"/>
<linearGradient id="g14" gradientUnits="userSpaceOnUse" x1="45.5" y1="0" x2="779.0" y2="0"><stop offset="0.0000" stop-color="#000080"/><stop offset="0.1401" stop-color="#000080"/><stop offset="0.1442" stop-color="#0000bd"/><stop offset="0.1482" stop-color="#0005ff"/><stop offset="0.1536" stop-color="#004dff"/><stop offset="0.1630" stop-color="#009eff"/><stop offset="0.1670" stop-color="#00e5ff"/><stop offset="0.3333" stop-color="#008aff"/><stop offset="0.3364" stop-color="#0057ff"/><stop offset="0.3434" stop-color="#0024ff"/><stop offset="0.3475" stop-color="#0000e6"/><stop offset="0.3505" stop-color="#0000a8"/><stop offset="0.3535" stop-color="#000080"/><stop offset="0.3910" stop-color="#000080"/><stop offset="0.3950" stop-color="#0000bd"/><stop offset="0.3989" stop-color="#000fff"/><stop offset="0.4041" stop-color="#0061ff"/><stop offset="0.4133" stop-color="#00b3ff"/><stop offset="0.4172" stop-color="#00f0ff"/><stop offset="0.8309" stop-color="#1affe5"/><stop offset="0.8347" stop-color="#00f0ff"/><stop offset="0.8434" stop-color="#008aff"/><stop offset="0.8484" stop-color="#0019ff"/><stop offset="0.8521" stop-color="#0000bd"/><stop offset="0.8559" stop-color="#000080"/><stop offset="1.0000" stop-color="#000080"/></linearGradient>
<rect x="45.5" y="393.60" width="733.5" height="3.47" fill="url(#g14)"/>
<linearGradient id="g13" gradientUnits="userSpaceOnUse" x1="45.5" y1="0" x2="779.0" y2="0"><stop offset="0.0000" stop-color="#000080"/><stop offset="0.1414" stop-color="#000080"/><stop offset="0.1453" stop-color="#0000bd"/><stop offset="0.1491" stop-color="#0005ff"/><stop offset="0.1542" stop-color="#004dff"/><stop offset="0.1632" stop-color="#009eff"/><stop offset="0.1670" stop-color="#00e5ff"/><stop offset="0.3333" stop-color="#008aff"/><stop offset="0.3361" stop-color="#0057ff"/><stop offset="0.3425" stop-color="#0024ff"/><stop offset="0.3462" stop-color="#0000e6"/><stop offset="0.3489" stop-color="#0000a8"/><stop offset="0.3517" stop-color="#000080"/><stop offset="0.3888" stop-color="#000080"/><stop offset="0.3931" stop-color="#0000bd"/><stop offset="0.3973" stop-color="#000fff"/><stop offset="0.4030" stop-color="#0061ff"/><stop offset="0.4129" stop-color="#00b3ff"/><stop offset="0.4172" stop-color="#00f0ff"/><stop offset="0.8309" stop-color="#1affe5"/><stop offset="0.8344" stop-color="#00f0ff"/><stop offset="0.8424" stop-color="#008aff"/><stop offset="0.8470" stop-color="#0019ff"/><stop offset="0.8505" stop-color="#0000bd"/><stop offset="0.8539" stop-color="#000080"/><stop offset="1.0000" stop-color="#000080"/></linearGradient>
<rect x="45.5" y="396.06" width="733.5" height="3.47" fill="url(#g13)"/>
<linearGradient id="g12" gradientUnits="userSpaceOnUse" x1="45.5" y1="0" x2="779.0" y2="0"><stop offset="0.0000" stop-color="#000080"/><stop offset="0.1397" stop-color="#000080"/><stop offset="0.1438" stop-color="#0000bd"/><stop offset="0.1479" stop-color="#0005ff"/><stop offset="0.1534" stop-color="#004dff"/><stop offset="0.1629" stop-color="#009eff"/><stop offset="0.1670" stop-color="#00e5ff"/><stop offset="0.3333" stop-color="#008aff"/><stop offset="0.3368" stop-color="#0057ff"/><stop offset="0.3447" stop-color="#0024ff"/><stop offset="0.3493" stop-color="#0000e6"/><stop offset="0.3527" stop-color="#0000a8"/><stop offset="0.3562" stop-color="#000080"/><stop offset="0.3878" stop-color="#000080"/><stop offset="0.3922" stop-color="#0000bd"/><stop offset="0.3966" stop-color="#000fff"/><stop offset="0.4025" stop-color="#0061ff"/><stop offset="0.4128" stop-color="#00b3ff"/><stop offset="0.4172" stop-color="#00f0ff"/><stop offset="0.8309" stop-color="#1affe5"/><stop offset="0.8340" stop-color="#00f0ff"/><stop offset="0.8410" stop-color="#008aff"/><stop offset="0.8450" stop-color="#0019ff"/><stop offset="0.8481" stop-color="#0000bd"/><stop offset="0.8511" stop-color="#000080"/><stop offset="1.0000" stop-color="#000080"/></linearGradient>
<rect x="45.5" y="398.53" width="733.5" height="3.47" fill="url(#g12)"/>
<linearGradient id="g11" gradientUnits="userSpaceOnUse" x1="45.5" y1="0" x2="779.0" y2="0"><stop offset="0.0000" stop-color="#000080"/><stop offset="0.1437" stop-color="#000080"/><stop offset="0.1472" stop-color="#0000bd"/><stop offset="0.1507" stop-color="#0005ff"/><stop offset="0.1553" stop-color="#004dff"/><stop offset="0.1635" stop-color="#009eff"/><stop offset="0.1670" stop-color="#00e5ff"/><stop offset="0.3333" stop-color="#008aff"/><stop offset="0.3364" stop-color="#0057ff"/><stop offset="0.3436" stop-color="#0024ff"/><stop offset="0.3477" stop-color="#0000e6"/><stop offset="0.3508" stop-color="#0000c7"/><stop offset="0.3539" stop-color="#0000c7"/><stop offset="0.3900" stop-color="#0000c7"/><stop offset="0.3940" stop-color="#0000c7"/><stop offset="0.3981" stop-color="#000fff"/><stop offset="0.4036" stop-color="#0061ff"/><stop offset="0.4131" stop-color="#00b3ff"/><stop offset="0.4172" stop-color="#00f0ff"/><stop offset="0.8309" stop-color="#1affe5"/><stop offset="0.8344" stop-color="#00f0ff"/><stop offset="0.8424" stop-color="#008aff"/><stop offset="0.8470" stop-color="#0019ff"/><stop offset="0.8504" stop-color="#0000bd"/><stop offset="0.8539" stop-color="#000080"/><stop offset="1.0000" stop-color="#000080"/></linearGradient>
<rect x="45.5" y="401.00" width="733.5" height="3.47" fill="url(#g11)"/>
<linearGradient id="g10" gradientUnits="userSpaceOnUse" x1="45.5" y1="0" x2="779.0" y2="0"><stop offset="0.0000" stop-color="#000080"/><stop offset="0.1384" stop-color="#000080"/><stop offset="0.1427" stop-color="#0000bd"/><stop offset="0.1470" stop-color="#0005ff"/><stop offset="0.1527" stop-color="#004dff"/><stop offset="0.1627" stop-color="#009eff"/><stop offset="0.1670" stop-color="#00e5ff"/><stop offset="0.3333" stop-color="#008aff"/><stop offset="0.3367" stop-color="#0057ff"/><stop offset="0.3445" stop-color="#0024ff"/><stop offset="0.3489" stop-color="#0000fa"/><stop offset="0.3522" stop-color="#0000fa"/><stop offset="0.3556" stop-color="#0000fa"/><stop offset="0.3919" stop-color="#0000fa"/><stop offset="0.3957" stop-color="#0000fa"/><stop offset="0.3995" stop-color="#000fff"/><stop offset="0.4045" stop-color="#0061ff"/><stop offset="0.4134" stop-color="#00b3ff"/><stop offset="0.4172" stop-color="#00f0ff"/><stop offset="0.8309" stop-color="#1affe5"/><stop offset="0.8346" stop-color="#00f0ff"/><stop offset="0.8431" stop-color="#008aff"/><stop offset="0.8480" stop-color="#0019ff"/><stop offset="0.8516" stop-color="#0000bd"/><stop offset="0.8553" stop-color="#000080"/><stop offset="1.0000" stop-color="#000080"/></linearGradient>
<rect x="45.5" y="403.46" width="733.5" height="3.47" fill="url(#g10)"/>
<linearGradient id="g9" gradientUnits="userSpaceOnUse" x1="45.5" y1="0" x2="779.0" y2="0"><stop offset="0.0000" stop-color="#000080"/><stop offset="0.1399" stop-color="#000080"/><stop offset="0.1440" stop-color="#0000bd"/><stop offset="0.1481" stop-color="#0005ff"/><stop offset="0.1535" stop-color="#004dff"/><stop offset="0.1629" stop-color="#009eff"/><stop offset="0.1670" stop-color="#00e5ff"/><stop offset="0.3333" stop-color="#008aff"/><stop offset="0.3371" stop-color="#0057ff"/><stop offset="0.3458" stop-color="#0028ff"/><stop offset="0.3508" stop-color="#0028ff"/><stop offset="0.3545" stop-color="#0028ff"/><stop offset="0.3582" stop-color="#0028ff"/><stop offset="0.3851" stop-color="#0028ff"/><stop offset="0.3900" stop-color="#0028ff"/><stop offset="0.3948" stop-color="#0028ff"/><stop offset="0.4012" stop-color="#0061ff"/><stop offset="0.4124" stop-color="#00b3ff"/><stop offset="0.4172" stop-color="#00f0ff"/><stop offset="0.8309" stop-color="#1affe5"/><stop offset="0.8340" stop-color="#00f0ff"/><stop offset="0.8413" stop-color="#008aff"/><stop offset="0.8454" stop-color="#0019ff"/><stop offset="0.8485" stop-color="#0000bd"/><stop offset="0.8516" stop-color="#000080"/><stop offset="1.0000" stop-color="#000080"/></linearGradient>
<rect x="45.5" y="405.93" width="733.5" height="3.47" fill="url(#g9)"/>
<linearGradient id="g8" gradientUnits="userSpaceOnUse" x1="45.5" y1="0" x2="779.0" y2="0"><stop offset="0.0000" stop-color="#000080"/><stop offset="0.1396" stop-color="#000080"/><stop offset="0.1437" stop-color="#0000bd"/><stop offset="0.1478" stop-color="#0005ff"/><stop offset="0.1533" stop-color="#004dff"/><stop offset="0.1629" stop-color="#009eff"/><stop offset="0.1670" stop-color="#00e5ff"/><stop offset="0.3333" stop-color="#008aff"/><stop offset="0.3371" stop-color="#0057ff"/><stop offset="0.3458" stop-color="#0046ff"/><stop offset="0.3508" stop-color="#0046ff"/><stop offset="0.3545" stop-color="#0046ff"/><stop offset="0.3583" stop-color="#0046ff"/><stop offset="0.3862" stop-color="#0046ff"/><stop offset="0.3908" stop-color="#0046ff"/><stop offset="0.3955" stop-color="#0046ff"/><stop offset="0.4017" stop-color="#0061ff"/><stop offset="0.4125" stop-color="#00b3ff"/><stop offset="0.4172" stop-color="#00f0ff"/><stop offset="0.8309" stop-color="#1affe5"/><stop offset="0.8338" stop-color="#00f0ff"/><stop offset="0.8403" stop-color="#008aff"/><stop offset="0.8441" stop-color="#0019ff"/><stop offset="0.8469" stop-color="#0000bd"/><stop offset="0.8497" stop-color="#000080"/><stop offset="1.0000" stop-color="#000080"/></linearGradient>
<rect x="45.5" y="408.40" width="733.5" height="3.47" fill="url(#g8)"/>
<linearGradient id="g7" gradientUnits="userSpaceOnUse" x1="45.5" y1="0" x2="779.0" y2="0"><stop offset="0.0000" stop-color="#0000f0"/><stop offset="0.1458" stop-color="#0000f0"/><stop offset="0.1490" stop-color="#0000f0"/><stop offset="0.1522" stop-color="#0005ff"/><stop offset="0.1564" stop-color="#004dff"/><stop offset="0.1638" stop-color="#009eff"/><stop offset="0.1670" stop-color="#00e5ff"/><stop offset="0.3333" stop-color="#008aff"/><stop offset="0.3371" stop-color="#006eff"/><stop offset="0.3460" stop-color="#006eff"/><stop offset="0.3511" stop-color="#006eff"/><stop offset="0.3549" stop-color="#006eff"/><stop offset="0.3587" stop-color="#006eff"/><stop offset="0.3938" stop-color="#006eff"/><stop offset="0.3973" stop-color="#006eff"/><stop offset="0.4008" stop-color="#006eff"/><stop offset="0.4055" stop-color="#006eff"/><stop offset="0.4137" stop-color="#00b3ff"/><stop offset="0.4172" stop-color="#00f0ff"/><stop offset="0.8309" stop-color="#1affe5"/><stop offset="0.8338" stop-color="#00f0ff"/><stop offset="0.8406" stop-color="#008aff"/><stop offset="0.8445" stop-color="#0019ff"/><stop offset="0.8474" stop-color="#0000fa"/><stop offset="0.8503" stop-color="#0000fa"/><stop offset="1.0000" stop-color="#0000fa"/></linearGradient>
<rect x="45.5" y="410.86" width="733.5" height="3.47" fill="url(#g7)"/>
<linearGradient id="g6" gradientUnits="userSpaceOnUse" x1="45.5" y1="0" x2="779.0" y2="0"><stop offset="0.0000" stop-color="#000aff"/><stop offset="0.1391" stop-color="#000aff"/><stop offset="0.1433" stop-color="#000aff"/><stop offset="0.1474" stop-color="#000aff"/><stop offset="0.1530" stop-color="#004dff"/><stop offset="0.1628" stop-color="#009eff"/><stop offset="0.1670" stop-color="#00e5ff"/><stop offset="0.3333" stop-color="#008cff"/><stop offset="0.3367" stop-color="#008cff"/><stop offset="0.3445" stop-color="#008cff"/><stop offset="0.3490" stop-color="#008cff"/><stop offset="0.3523" stop-color="#008cff"/><stop offset="0.3557" stop-color="#008cff"/><stop offset="0.3924" stop-color="#008cff"/><stop offset="0.3961" stop-color="#008cff"/><stop offset="0.3999" stop-color="#008cff"/><stop offset="0.4048" stop-color="#008cff"/><stop offset="0.4135" stop-color="#00b3ff"/><stop offset="0.4172" stop-color="#00f0ff"/><stop offset="0.8309" stop-color="#1affe5"/><stop offset="0.8341" stop-color="#00f0ff"/><stop offset="0.8415" stop-color="#008aff"/><stop offset="0.8457" stop-color="#0024ff"/><stop offset="0.8488" stop-color="#0024ff"/><stop offset="0.8520" stop-color="#0024ff"/><stop offset="1.0000" stop-color="#0024ff"/></linearGradient>
<rect x="45.5" y="413.33" width="733.5" height="3.47" fill="url(#g6)"/>
<linearGradient id="g5" gradientUnits="userSpaceOnUse" x1="45.5" y1="0" x2="779.0" y2="0"><stop offset="0.0000" stop-color="#003cff"/><stop offset="0.1279" stop-color="#003cff"/><stop offset="0.1338" stop-color="#003cff"/><stop offset="0.1396" stop-color="#003cff"/><stop offset="0.1475" stop-color="#004dff"/><stop offset="0.1611" stop-color="#009eff"/><stop offset="0.1670" stop-color="#00e5ff"/><stop offset="0.3333" stop-color="#00e5ff"/><stop offset="0.3384" stop-color="#00e5ff"/><stop offset="0.3501" stop-color="#00e5ff"/><stop offset="0.3569" stop-color="#00e5ff"/><stop offset="0.3619" stop-color="#00e5ff"/><stop offset="0.3670" stop-color="#00e5ff"/><stop offset="0.3799" stop-color="#00e5ff"/><stop offset="0.3855" stop-color="#00e5ff"/><stop offset="0.3911" stop-color="#00e5ff"/><stop offset="0.3986" stop-color="#00e5ff"/><stop offset="0.4116" stop-color="#00e5ff"/><stop offset="0.4172" stop-color="#00f0ff"/><stop offset="0.8309" stop-color="#1affe5"/><stop offset="0.8358" stop-color="#00f0ff"/><stop offset="0.8472" stop-color="#008aff"/><stop offset="0.8536" stop-color="#005aff"/><stop offset="0.8585" stop-color="#005aff"/><stop offset="0.8634" stop-color="#005aff"/><stop offset="1.0000" stop-color="#005aff"/></linearGradient>
<rect x="45.5" y="415.80" width="733.5" height="3.47" fill="url(#g5)"/>
<linearGradient id="g4" gradientUnits="userSpaceOnUse" x1="45.5" y1="0" x2="779.0" y2="0"><stop offset="0.0000" stop-color="#005aff"/><stop offset="0.1265" stop-color="#005aff"/><stop offset="0.1326" stop-color="#005aff"/><stop offset="0.1387" stop-color="#005aff"/><stop offset="0.1468" stop-color="#005aff"/><stop offset="0.1609" stop-color="#009eff"/><stop offset="0.1670" stop-color="#00e5ff"/><stop offset="0.3333" stop-color="#00c8ff"/><stop offset="0.3389" stop-color="#00c8ff"/><stop offset="0.3517" stop-color="#00c8ff"/><stop offset="0.3591" stop-color="#00c8ff"/><stop offset="0.3646" stop-color="#00c8ff"/><stop offset="0.3701" stop-color="#00c8ff"/><stop offset="0.3842" stop-color="#00c8ff"/><stop offset="0.3891" stop-color="#00c8ff"/><stop offset="0.3941" stop-color="#00c8ff"/><stop offset="0.4007" stop-color="#00c8ff"/><stop offset="0.4122" stop-color="#00c8ff"/><stop offset="0.4172" stop-color="#00f0ff"/><stop offset="0.8309" stop-color="#1affe5"/><stop offset="0.8362" stop-color="#00f0ff"/><stop offset="0.8486" stop-color="#008aff"/><stop offset="0.8557" stop-color="#006eff"/><stop offset="0.8610" stop-color="#006eff"/><stop offset="0.8663" stop-color="#006eff"/><stop offset="1.0000" stop-color="#006eff"/></linearGradient>
<rect x="45.5" y="418.27" width="733.5" height="3.47" fill="url(#g4)"/>
<linearGradient id="g3" gradientUnits="userSpaceOnUse" x1="45.5" y1="0" x2="779.0" y2="0"><stop offset="0.0000" stop-color="#008cff"/><stop offset="0.1281" stop-color="#008cff"/><stop offset="0.1339" stop-color="#008cff"/><stop offset="0.1398" stop-color="#008cff"/><stop offset="0.1476" stop-color="#008cff"/><stop offset="0.1612" stop-color="#009eff"/><stop offset="0.1670" stop-color="#00e5ff"/><stop offset="0.3333" stop-color="#00f0ff"/><stop offset="0.3382" stop-color="#00f0ff"/><stop offset="0.3497" stop-color="#00f0ff"/><stop offset="0.3562" stop-color="#00f0ff"/><stop offset="0.3611" stop-color="#00f0ff"/><stop offset="0.3660" stop-color="#00f0ff"/><stop offset="0.3814" stop-color="#00f0ff"/><stop offset="0.3868" stop-color="#00f0ff"/><stop offset="0.3921" stop-color="#00f0ff"/><stop offset="0.3993" stop-color="#00f0ff"/><stop offset="0.4118" stop-color="#00f0ff"/><stop offset="0.4172" stop-color="#00f0ff"/><stop offset="0.8309" stop-color="#1affe5"/><stop offset="0.8364" stop-color="#00f0ff"/><stop offset="0.8491" stop-color="#008aff"/><stop offset="0.8564" stop-color="#0083ff"/><stop offset="0.8618" stop-color="#0083ff"/><stop offset="0.8673" stop-color="#0083ff"/><stop offset="1.0000" stop-color="#0083ff"/></linearGradient>
<rect x="45.5" y="420.73" width="733.5" height="3.47" fill="url(#g3)"/>
<linearGradient id="g2" gradientUnits="userSpaceOnUse" x1="45.5" y1="0" x2="779.0" y2="0"><stop offset="0.0000" stop-color="#0050ff"/><stop offset="0.1251" stop-color="#0050ff"/><stop offset="0.1314" stop-color="#0050ff"/><stop offset="0.1377" stop-color="#0050ff"/><stop offset="0.1461" stop-color="#0050ff"/><stop offset="0.1607" stop-color="#009eff"/><stop offset="0.1670" stop-color="#00e5ff"/><stop offset="0.3333" stop-color="#008aff"/><stop offset="0.3382" stop-color="#0083ff"/><stop offset="0.3495" stop-color="#0083ff"/><stop offset="0.3559" stop-color="#0083ff"/><stop offset="0.3608" stop-color="#0083ff"/><stop offset="0.3656" stop-color="#0083ff"/><stop offset="0.3825" stop-color="#0083ff"/><stop offset="0.3877" stop-color="#0083ff"/><stop offset="0.3929" stop-color="#0083ff"/><stop offset="0.3998" stop-color="#0083ff"/><stop offset="0.4120" stop-color="#00b3ff"/><stop offset="0.4172" stop-color="#00f0ff"/><stop offset="0.8309" stop-color="#1affe5"/><stop offset="0.8363" stop-color="#00f0ff"/><stop offset="0.8487" stop-color="#008aff"/><stop offset="0.8558" stop-color="#0078ff"/><stop offset="0.8611" stop-color="#0078ff"/><stop offset="0.8664" stop-color="#0078ff"/><stop offset="1.0000" stop-color="#0078ff"/></linearGradient>
<rect x="45.5" y="423.20" width="733.5" height="3.47" fill="url(#g2)"/>
<linearGradient id="g1" gradientUnits="userSpaceOnUse" x1="45.5" y1="0" x2="779.0" y2="0"><stop offset="0.0000" stop-color="#005aff"/><stop offset="0.1261" stop-color="#005aff"/><stop offset="0.1322" stop-color="#005aff"/><stop offset="0.1384" stop-color="#005aff"/><stop offset="0.1465" stop-color="#005aff"/><stop offset="0.1609" stop-color="#009eff"/><stop offset="0.1670" stop-color="#00e5ff"/><stop offset="0.3333" stop-color="#008aff"/><stop offset="0.3378" stop-color="#005aff"/><stop offset="0.3482" stop-color="#005aff"/><stop offset="0.3542" stop-color="#005aff"/><stop offset="0.3587" stop-color="#005aff"/><stop offset="0.3631" stop-color="#005aff"/><stop offset="0.3800" stop-color="#005aff"/><stop offset="0.3856" stop-color="#005aff"/><stop offset="0.3912" stop-color="#005aff"/><stop offset="0.3986" stop-color="#0061ff"/><stop offset="0.4116" stop-color="#00b3ff"/><stop offset="0.4172" stop-color="#00f0ff"/><stop offset="0.8309" stop-color="#1affe5"/><stop offset="0.8360" stop-color="#00f0ff"/><stop offset="0.8478" stop-color="#008cff"/><stop offset="0.8545" stop-color="#008cff"/><stop offset="0.8596" stop-color="#008cff"/><stop offset="0.8646" stop-color="#008cff"/><stop offset="1.0000" stop-color="#008cff"/></linearGradient>
<rect x="45.5" y="425.67" width="733.5" height="3.47" fill="url(#g1)"/>
<linearGradient id="g0" gradientUnits="userSpaceOnUse" x1="45.5" y1="0" x2="779.0" y2="0"><stop offset="0.0000" stop-color="#006eff"/><stop offset="0.1254" stop-color="#006eff"/><stop offset="0.1316" stop-color="#006eff"/><stop offset="0.1379" stop-color="#006eff"/><stop offset="0.1462" stop-color="#006eff"/><stop offset="0.1608" stop-color="#009eff"/><stop offset="0.1670" stop-color="#00e5ff"/><stop offset="0.3333" stop-color="#0096ff"/><stop offset="0.3374" stop-color="#0096ff"/><stop offset="0.3469" stop-color="#0096ff"/><stop offset="0.3523" stop-color="#0096ff"/><stop offset="0.3564" stop-color="#0096ff"/><stop offset="0.3605" stop-color="#0096ff"/><stop offset="0.3813" stop-color="#0096ff"/><stop offset="0.3866" stop-color="#0096ff"/><stop offset="0.3920" stop-color="#0096ff"/><stop offset="0.3992" stop-color="#0096ff"/><stop offset="0.4118" stop-color="#00b3ff"/><stop offset="0.4172" stop-color="#00f0ff"/><stop offset="0.8309" stop-color="#1affe5"/><stop offset="0.8360" stop-color="#00f0ff"/><stop offset="0.8478" stop-color="#0096ff"/><stop offset="0.8546" stop-color="#0096ff"/><stop offset="0.8597" stop-color="#0096ff"/><stop offset="0.8647" stop-color="#0096ff"/><stop offset="1.0000" stop-color="#0096ff"/></linearGradient>
<rect x="45.5" y="428.13" width="733.5" height="3.47" fill="url(#g0)"/>
<rect x="168.0" y="298.5" width="120.0" height="132.1" fill="#ffff00"/>
<rect x="351.5" y="298.5" width="303.5" height="132.1" fill="#ffff00"/>
<g transform="translate(0 430.60) scale(1.5 -2.467)">
<path fill="#ffe400" d="M112 4h1v1h-1zM112 15h1v1h-1zM112 20h1v1h-1zM112 30h1v1h-1zM112 41h1v1h-1zM112 46h1v1h-1zM112 50h1v2h-1zM112 52h1v1h-1zM113 3h1v1h-1zM113 10h1v1h-1zM113 14h1v1h-1zM113 23h1v1h-1zM113 28h1v2h-1zM113 37h1v1h-1zM113 38h1v1h-1zM113 39h1v1h-1zM113 50h1v1h-1zM113 53h1v1h-1zM114 7h1v1h-1zM114 12h1v1h-1zM114 25h1v2h-1zM114 32h1v2h-1zM114 36h1v1h-1zM114 39h1v1h-1zM114 47h1v1h-1zM114 52h1v1h-1zM114 53h1v1h-1zM115 1h1v1h-1zM115 5h1v1h-1zM115 6h1v1h-1zM115 7h1v1h-1zM115 25h1v1h-1zM115 30h1v1h-1zM115 32h1v1h-1zM115 42h1v1h-1zM115 47h1v1h-1zM115 50h1v1h-1zM116 2h1v1h-1zM116 5h1v1h-1zM116 23h1v1h-1zM116 26h1v2h-1zM116 34h1v1h-1zM116 35h1v1h-1zM116 41h1v2h-1zM116 43h1v2h-1zM116 51h1v1h-1zM117 0h1v1h-1zM117 2h1v1h-1zM117 16h1v2h-1zM117 18h1v1h-1zM117 19h1v1h-1zM118 0h1v1h-1zM118 6h1v2h-1zM118 8h1v1h-1zM118 11h1v2h-1zM118 13h1v2h-1zM118 24h1v1h-1zM118 27h1v1h-1zM118 28h1v1h-1zM118 32h1v1h-1zM118 33h1v1h-1zM118 34h1v2h-1zM118 48h1v2h-1zM119 6h1v1h-1zM119 9h1v2h-1zM119 12h1v1h-1zM119 16h1v2h-1zM119 18h1v2h-1zM119 27h1v1h-1zM119 37h1v1h-1zM119 38h1v1h-1zM119 45h1v1h-1zM119 46h1v2h-1zM119 48h1v1h-1zM119 49h1v2h-1zM120 1h1v1h-1zM120 13h1v1h-1zM120 16h1v1h-1zM120 21h1v2h-1zM120 26h1v1h-1zM120 27h1v2h-1zM120 30h1v1h-1zM120 37h1v1h-1zM120 40h1v1h-1zM120 42h1v1h-1zM120 48h1v1h-1zM120 49h1v2h-1zM120 52h1v1h-1zM121 1h1v1h-1zM121 6h1v1h-1zM121 12h1v1h-1zM121 18h1v1h-1zM121 20h1v1h-1zM121 22h1v1h-1zM121 27h1v1h-1zM121 28h1v1h-1zM121 29h1v2h-1zM121 31h1v1h-1zM121 45h1v1h-1zM122 0h1v2h-1zM122 4h1v1h-1zM122 27h1v1h-1zM122 28h1v2h-1zM122 46h1v1h-1zM122 50h1v1h-1zM123 2h1v1h-1zM123 3h1v1h-1zM123 14h1v1h-1zM123 24h1v2h-1zM123 26h1v2h-1zM123 44h1v2h-1zM123 51h1v1h-1zM123 52h1v1h-1zM124 5h1v1h-1zM124 13h1v1h-1zM124 15h1v1h-1zM124 16h1v1h-1zM124 23h1v2h-1zM124 25h1v1h-1zM124 32h1v1h-1zM124 35h1v1h-1zM124 50h1v1h-1zM124 51h1v1h-1zM125 0h1v1h-1zM125 9h1v1h-1zM125 12h1v1h-1zM125 13h1v2h-1zM125 17h1v1h-1zM125 19h1v1h-1zM125 20h1v1h-1zM125 29h1v1h-1zM125 36h1v1h-1zM125 42h1v1h-1zM125 44h1v2h-1zM125 47h1v1h-1zM125 48h1v1h-1zM126 0h1v1h-1zM126 1h1v2h-1zM126 3h1v1h-1zM126 4h1v1h-1zM126 19h1v2h-1zM126 23h1v2h-1zM126 35h1v1h-1zM126 45h1v1h-1zM127 0h1v1h-1zM127 3h1v1h-1zM127 13h1v1h-1zM127 26h1v1h-1zM127 39h1v2h-1zM127 43h1v2h-1zM128 0h1v1h-1zM128 1h1v1h-1zM128 10h1v2h-1zM128 21h1v1h-1zM128 25h1v2h-1zM128 27h1v1h-1zM128 31h1v2h-1zM128 39h1v1h-1zM128 47h1v1h-1zM128 52h1v1h-1zM128 53h1v1h-1zM129 20h1v1h-1zM129 29h1v1h-1zM129 32h1v1h-1zM129 35h1v1h-1zM129 49h1v2h-1zM130 6h1v1h-1zM130 10h1v1h-1zM130 17h1v2h-1zM130 28h1v2h-1zM130 31h1v1h-1zM130 41h1v1h-1zM130 42h1v1h-1zM130 45h1v1h-1zM130 46h1v1h-1zM130 49h1v1h-1zM130 50h1v1h-1zM131 3h1v1h-1zM131 4h1v1h-1zM131 12h1v1h-1zM131 15h1v1h-1zM131 26h1v1h-1zM131 28h1v1h-1zM131 41h1v2h-1zM131 46h1v1h-1zM132 7h1v2h-1zM132 11h1v2h-1zM132 15h1v1h-1zM132 16h1v1h-1zM132 21h1v1h-1zM132 27h1v1h-1zM132 28h1v2h-1zM132 40h1v1h-1zM132 42h1v1h-1zM132 44h1v1h-1zM132 47h1v2h-1zM132 52h1v2h-1zM133 3h1v1h-1zM133 4h1v2h-1zM133 13h1v1h-1zM133 24h1v1h-1zM133 26h1v1h-1zM133 27h1v1h-1zM133 30h1v1h-1zM133 39h1v1h-1zM133 42h1v2h-1zM133 46h1v2h-1zM133 49h1v2h-1zM133 52h1v2h-1zM134 13h1v1h-1zM134 18h1v2h-1zM134 30h1v1h-1zM134 31h1v1h-1zM134 32h1v2h-1zM134 35h1v2h-1zM134 37h1v1h-1zM134 42h1v1h-1zM134 43h1v1h-1zM134 44h1v1h-1zM134 45h1v1h-1zM134 46h1v1h-1zM134 48h1v1h-1zM134 50h1v1h-1zM134 51h1v1h-1zM134 52h1v1h-1zM134 53h1v1h-1zM135 4h1v1h-1zM135 7h1v1h-1zM135 8h1v1h-1zM135 11h1v2h-1zM135 14h1v1h-1zM135 28h1v1h-1zM135 34h1v1h-1zM135 39h1v1h-1zM135 41h1v2h-1zM135 46h1v2h-1zM135 52h1v1h-1zM136 1h1v2h-1zM136 3h1v2h-1zM136 5h1v1h-1zM136 11h1v1h-1zM136 12h1v1h-1zM136 13h1v2h-1zM136 20h1v1h-1zM136 21h1v1h-1zM136 24h1v2h-1zM136 26h1v2h-1zM136 29h1v2h-1zM136 37h1v1h-1zM136 43h1v1h-1zM136 52h1v1h-1zM137 0h1v1h-1zM137 10h1v1h-1zM137 15h1v2h-1zM137 20h1v1h-1zM137 30h1v2h-1zM137 34h1v1h-1zM137 35h1v1h-1zM137 40h1v1h-1zM137 42h1v1h-1zM137 46h1v1h-1zM137 49h1v2h-1zM137 51h1v1h-1zM138 4h1v2h-1zM138 10h1v1h-1zM138 15h1v2h-1zM138 17h1v2h-1zM138 21h1v2h-1zM138 23h1v1h-1zM138 26h1v2h-1zM138 33h1v1h-1zM138 35h1v1h-1zM138 39h1v1h-1zM138 43h1v1h-1zM138 44h1v1h-1zM138 51h1v1h-1zM138 52h1v1h-1zM139 6h1v2h-1zM139 11h1v1h-1zM139 12h1v1h-1zM139 13h1v2h-1zM139 15h1v1h-1zM139 17h1v2h-1zM139 20h1v1h-1zM139 21h1v1h-1zM139 22h1v1h-1zM139 31h1v1h-1zM139 37h1v2h-1zM139 43h1v1h-1zM139 44h1v2h-1zM139 49h1v1h-1zM140 8h1v1h-1zM140 11h1v2h-1zM140 15h1v1h-1zM140 16h1v2h-1zM140 18h1v1h-1zM140 19h1v1h-1zM140 29h1v1h-1zM140 30h1v2h-1zM140 33h1v2h-1zM140 36h1v1h-1zM140 41h1v1h-1zM140 47h1v1h-1zM140 48h1v1h-1zM140 52h1v1h-1zM141 1h1v1h-1zM141 2h1v1h-1zM141 3h1v1h-1zM141 5h1v1h-1zM141 16h1v2h-1zM141 18h1v1h-1zM141 21h1v1h-1zM141 27h1v2h-1zM141 37h1v1h-1zM141 49h1v1h-1zM141 50h1v1h-1zM142 4h1v2h-1zM142 6h1v1h-1zM142 8h1v1h-1zM142 11h1v1h-1zM142 20h1v1h-1zM142 31h1v1h-1zM142 32h1v1h-1zM142 33h1v1h-1zM142 47h1v2h-1zM142 51h1v1h-1zM142 53h1v1h-1zM143 7h1v2h-1zM143 12h1v1h-1zM143 25h1v1h-1zM143 26h1v2h-1zM143 28h1v1h-1zM143 30h1v1h-1zM143 31h1v1h-1zM143 34h1v2h-1zM143 40h1v1h-1zM143 43h1v2h-1zM143 45h1v1h-1zM143 46h1v1h-1zM143 50h1v1h-1zM143 52h1v1h-1zM143 53h1v1h-1zM144 0h1v2h-1zM144 6h1v1h-1zM144 8h1v1h-1zM144 11h1v1h-1zM144 18h1v1h-1zM144 19h1v1h-1zM144 28h1v1h-1zM144 35h1v2h-1zM144 42h1v1h-1zM145 5h1v2h-1zM145 9h1v2h-1zM145 13h1v1h-1zM145 28h1v1h-1zM145 29h1v1h-1zM145 32h1v2h-1zM145 34h1v1h-1zM145 39h1v2h-1zM145 53h1v1h-1zM146 0h1v1h-1zM146 4h1v1h-1zM146 5h1v1h-1zM146 20h1v2h-1zM146 27h1v1h-1zM146 30h1v1h-1zM146 33h1v1h-1zM146 36h1v1h-1zM146 40h1v1h-1zM146 45h1v1h-1zM146 46h1v2h-1zM146 49h1v1h-1zM146 50h1v1h-1zM146 51h1v1h-1zM147 9h1v2h-1zM147 25h1v1h-1zM147 31h1v1h-1zM147 46h1v2h-1zM147 48h1v1h-1zM148 9h1v2h-1zM148 11h1v2h-1zM148 15h1v1h-1zM148 26h1v1h-1zM148 48h1v2h-1zM148 51h1v2h-1zM149 0h1v2h-1zM149 3h1v2h-1zM149 6h1v2h-1zM149 8h1v1h-1zM149 21h1v1h-1zM149 25h1v1h-1zM149 31h1v1h-1zM149 36h1v1h-1zM149 39h1v2h-1zM149 41h1v2h-1zM149 45h1v1h-1zM149 49h1v1h-1zM150 8h1v1h-1zM150 20h1v1h-1zM150 22h1v1h-1zM150 30h1v1h-1zM150 32h1v1h-1zM150 41h1v1h-1zM150 44h1v1h-1zM150 47h1v1h-1zM150 48h1v1h-1zM151 11h1v1h-1zM151 12h1v2h-1zM151 17h1v1h-1zM151 18h1v1h-1zM151 20h1v2h-1zM151 30h1v1h-1zM151 37h1v1h-1zM151 38h1v1h-1zM151 42h1v2h-1zM151 50h1v1h-1zM151 51h1v1h-1zM151 52h1v1h-1zM151 53h1v1h-1zM152 7h1v2h-1zM152 11h1v1h-1zM152 13h1v1h-1zM152 14h1v2h-1zM152 22h1v1h-1zM152 27h1v2h-1zM152 37h1v2h-1zM152 41h1v1h-1zM152 43h1v1h-1zM152 47h1v1h-1zM152 49h1v1h-1zM153 2h1v1h-1zM153 7h1v1h-1zM153 9h1v1h-1zM153 16h1v1h-1zM153 22h1v1h-1zM153 23h1v1h-1zM153 24h1v1h-1zM153 26h1v1h-1zM153 29h1v1h-1zM153 33h1v1h-1zM153 36h1v1h-1zM153 40h1v1h-1zM153 49h1v2h-1zM154 3h1v1h-1zM154 4h1v2h-1zM154 18h1v1h-1zM154 20h1v2h-1zM154 26h1v1h-1zM154 27h1v1h-1zM154 30h1v1h-1zM154 31h1v1h-1zM154 34h1v1h-1zM154 45h1v1h-1zM154 49h1v1h-1zM154 51h1v1h-1zM154 52h1v1h-1zM155 2h1v1h-1zM155 11h1v2h-1zM155 14h1v1h-1zM155 24h1v1h-1zM155 29h1v1h-1zM155 36h1v1h-1zM155 40h1v1h-1zM155 41h1v1h-1zM155 50h1v1h-1zM155 51h1v1h-1zM156 2h1v1h-1zM156 7h1v1h-1zM156 9h1v1h-1zM156 25h1v1h-1zM156 29h1v2h-1zM156 40h1v1h-1zM156 46h1v1h-1zM156 48h1v1h-1zM156 51h1v1h-1zM156 52h1v2h-1zM157 5h1v1h-1zM157 6h1v1h-1zM157 9h1v1h-1zM157 13h1v1h-1zM157 14h1v1h-1zM157 17h1v1h-1zM157 19h1v1h-1zM157 25h1v1h-1zM157 27h1v1h-1zM157 29h1v2h-1zM157 36h1v1h-1zM157 37h1v1h-1zM157 53h1v1h-1zM158 1h1v2h-1zM158 6h1v1h-1zM158 11h1v2h-1zM158 13h1v1h-1zM158 40h1v1h-1zM158 42h1v1h-1zM158 44h1v1h-1zM158 50h1v1h-1zM159 3h1v1h-1zM159 14h1v1h-1zM159 15h1v1h-1zM159 17h1v1h-1zM159 18h1v2h-1zM159 25h1v2h-1zM159 30h1v2h-1zM159 36h1v2h-1zM159 53h1v1h-1zM160 3h1v2h-1zM160 17h1v1h-1zM160 18h1v1h-1zM160 23h1v1h-1zM160 24h1v1h-1zM160 29h1v1h-1zM160 37h1v1h-1zM160 38h1v1h-1zM160 39h1v1h-1zM160 42h1v2h-1zM160 45h1v1h-1zM160 52h1v1h-1zM161 8h1v1h-1zM161 14h1v1h-1zM161 16h1v1h-1zM161 25h1v1h-1zM161 28h1v1h-1zM161 29h1v1h-1zM161 40h1v1h-1zM161 48h1v2h-1zM161 50h1v1h-1zM162 1h1v1h-1zM162 9h1v2h-1zM162 22h1v1h-1zM162 23h1v2h-1zM162 29h1v2h-1zM162 31h1v1h-1zM162 34h1v1h-1zM162 38h1v2h-1zM162 41h1v1h-1zM162 42h1v1h-1zM162 53h1v1h-1zM163 0h1v1h-1zM163 5h1v1h-1zM163 11h1v1h-1zM163 19h1v2h-1zM163 23h1v2h-1zM163 25h1v1h-1zM163 39h1v1h-1zM163 40h1v1h-1zM163 43h1v2h-1zM163 51h1v1h-1zM164 3h1v1h-1zM164 11h1v2h-1zM164 16h1v1h-1zM164 18h1v2h-1zM164 20h1v1h-1zM164 29h1v1h-1zM164 32h1v1h-1zM164 34h1v2h-1zM164 39h1v1h-1zM164 48h1v1h-1zM165 0h1v1h-1zM165 5h1v2h-1zM165 7h1v1h-1zM165 22h1v1h-1zM165 30h1v1h-1zM165 32h1v1h-1zM165 37h1v2h-1zM165 50h1v2h-1zM166 0h1v1h-1zM166 2h1v1h-1zM166 5h1v2h-1zM166 7h1v1h-1zM166 8h1v2h-1zM166 10h1v1h-1zM166 26h1v1h-1zM166 28h1v1h-1zM166 32h1v1h-1zM166 40h1v1h-1zM166 43h1v1h-1zM166 45h1v1h-1zM166 51h1v1h-1zM166 53h1v1h-1zM167 2h1v2h-1zM167 10h1v1h-1zM167 11h1v1h-1zM167 17h1v1h-1zM167 29h1v1h-1zM167 40h1v1h-1zM168 7h1v1h-1zM168 8h1v2h-1zM168 28h1v1h-1zM168 31h1v1h-1zM168 35h1v2h-1zM168 39h1v2h-1zM168 44h1v1h-1zM169 18h1v2h-1zM169 22h1v1h-1zM169 24h1v2h-1zM169 28h1v1h-1zM169 30h1v2h-1zM169 38h1v1h-1zM169 39h1v1h-1zM169 40h1v2h-1zM169 45h1v1h-1zM169 47h1v2h-1zM170 17h1v1h-1zM170 18h1v1h-1zM170 21h1v1h-1zM170 22h1v1h-1zM170 23h1v2h-1zM170 25h1v2h-1zM170 30h1v2h-1zM170 32h1v1h-1zM170 42h1v1h-1zM170 49h1v1h-1zM171 1h1v2h-1zM171 8h1v1h-1zM171 11h1v2h-1zM171 17h1v2h-1zM171 28h1v2h-1zM171 30h1v1h-1zM171 31h1v2h-1zM171 33h1v1h-1zM171 34h1v1h-1zM171 39h1v1h-1zM171 40h1v1h-1zM171 42h1v1h-1zM171 45h1v2h-1zM172 10h1v1h-1zM172 15h1v1h-1zM172 18h1v1h-1zM172 20h1v1h-1zM172 22h1v1h-1zM172 23h1v1h-1zM172 31h1v1h-1zM172 32h1v1h-1zM172 37h1v1h-1zM172 42h1v1h-1zM172 45h1v1h-1zM172 47h1v2h-1zM173 3h1v2h-1zM173 9h1v1h-1zM173 12h1v1h-1zM173 13h1v2h-1zM173 23h1v2h-1zM173 32h1v1h-1zM173 47h1v2h-1zM173 52h1v1h-1zM174 21h1v2h-1zM174 27h1v2h-1zM174 29h1v2h-1zM174 31h1v1h-1zM174 35h1v2h-1zM175 1h1v2h-1zM175 5h1v1h-1zM175 6h1v1h-1zM175 8h1v2h-1zM175 11h1v1h-1zM175 13h1v1h-1zM175 21h1v2h-1zM175 25h1v1h-1zM175 26h1v1h-1zM175 30h1v1h-1zM175 46h1v1h-1zM175 47h1v2h-1zM176 21h1v1h-1zM176 28h1v2h-1zM176 32h1v1h-1zM176 35h1v1h-1zM176 37h1v2h-1zM176 40h1v2h-1zM176 43h1v1h-1zM176 47h1v2h-1zM177 15h1v1h-1zM177 20h1v1h-1zM177 26h1v1h-1zM177 36h1v1h-1zM177 43h1v1h-1zM177 44h1v1h-1zM177 46h1v1h-1zM177 47h1v1h-1zM177 51h1v1h-1zM177 53h1v1h-1zM178 8h1v1h-1zM178 12h1v1h-1zM178 13h1v1h-1zM178 15h1v2h-1zM178 21h1v1h-1zM178 22h1v1h-1zM178 23h1v1h-1zM178 29h1v2h-1zM178 32h1v1h-1zM178 40h1v2h-1zM178 42h1v2h-1zM178 44h1v1h-1zM178 50h1v1h-1zM178 53h1v1h-1zM179 3h1v1h-1zM179 16h1v2h-1zM179 22h1v1h-1zM179 28h1v1h-1zM179 34h1v2h-1zM179 49h1v1h-1zM179 52h1v1h-1zM180 5h1v1h-1zM180 10h1v1h-1zM180 11h1v1h-1zM180 14h1v1h-1zM180 17h1v1h-1zM180 24h1v1h-1zM180 26h1v2h-1zM180 32h1v1h-1zM180 33h1v2h-1zM180 40h1v2h-1zM180 49h1v1h-1zM180 51h1v1h-1zM180 52h1v1h-1zM181 9h1v1h-1zM181 16h1v1h-1zM181 17h1v1h-1zM181 19h1v2h-1zM181 21h1v1h-1zM181 38h1v1h-1zM181 51h1v1h-1zM182 6h1v1h-1zM182 11h1v1h-1zM182 15h1v1h-1zM182 16h1v1h-1zM182 21h1v2h-1zM182 23h1v1h-1zM182 44h1v1h-1zM182 47h1v1h-1zM182 53h1v1h-1zM183 0h1v1h-1zM183 1h1v2h-1zM183 4h1v2h-1zM183 7h1v2h-1zM183 17h1v1h-1zM183 24h1v1h-1zM183 37h1v2h-1zM183 42h1v1h-1zM183 49h1v1h-1zM184 2h1v1h-1zM184 8h1v1h-1zM184 9h1v1h-1zM184 10h1v1h-1zM184 15h1v1h-1zM184 24h1v1h-1zM184 35h1v1h-1zM184 37h1v1h-1zM184 43h1v2h-1zM184 45h1v1h-1zM184 47h1v1h-1zM184 49h1v1h-1zM184 53h1v1h-1zM185 0h1v1h-1zM185 4h1v1h-1zM185 13h1v1h-1zM185 14h1v2h-1zM185 25h1v1h-1zM185 30h1v2h-1zM185 32h1v1h-1zM185 33h1v1h-1zM185 34h1v1h-1zM185 39h1v1h-1zM185 43h1v1h-1zM186 0h1v1h-1zM186 21h1v2h-1zM186 28h1v1h-1zM186 41h1v1h-1zM186 42h1v2h-1zM186 45h1v1h-1zM186 49h1v1h-1zM186 50h1v1h-1zM186 51h1v1h-1zM186 52h1v1h-1zM186 53h1v1h-1zM187 0h1v1h-1zM187 1h1v1h-1zM187 2h1v1h-1zM187 7h1v1h-1zM187 11h1v1h-1zM187 14h1v2h-1zM187 25h1v1h-1zM187 44h1v2h-1zM187 46h1v1h-1zM187 50h1v1h-1zM188 2h1v1h-1zM188 6h1v2h-1zM188 8h1v1h-1zM188 10h1v1h-1zM188 13h1v1h-1zM188 17h1v1h-1zM188 18h1v2h-1zM188 26h1v2h-1zM188 30h1v1h-1zM188 44h1v1h-1zM188 46h1v1h-1zM188 50h1v1h-1zM188 53h1v1h-1zM189 4h1v1h-1zM189 6h1v2h-1zM189 13h1v1h-1zM189 17h1v2h-1zM189 20h1v2h-1zM189 22h1v1h-1zM189 23h1v1h-1zM189 24h1v1h-1zM189 29h1v1h-1zM189 30h1v2h-1zM189 41h1v2h-1zM189 43h1v1h-1zM189 51h1v2h-1zM190 3h1v1h-1zM190 7h1v1h-1zM190 19h1v1h-1zM190 20h1v2h-1zM190 28h1v1h-1zM190 33h1v1h-1zM190 34h1v2h-1zM190 37h1v1h-1zM190 44h1v1h-1zM190 46h1v1h-1zM190 47h1v1h-1zM190 48h1v1h-1zM191 7h1v1h-1zM191 13h1v1h-1zM191 34h1v1h-1zM191 36h1v1h-1zM191 38h1v1h-1zM191 41h1v2h-1zM191 53h1v1h-1zM234.33 1h1v1h-1zM234.33 6h1v2h-1zM234.33 8h1v1h-1zM234.33 12h1v1h-1zM234.33 22h1v2h-1zM234.33 24h1v2h-1zM234.33 29h1v1h-1zM234.33 34h1v2h-1zM234.33 37h1v1h-1zM234.33 38h1v1h-1zM234.33 39h1v1h-1zM234.33 40h1v2h-1zM234.33 47h1v1h-1zM234.33 52h1v2h-1zM235.33 2h1v1h-1zM235.33 4h1v1h-1zM235.33 8h1v1h-1zM235.33 15h1v1h-1zM235.33 17h1v2h-1zM235.33 20h1v1h-1zM235.33 21h1v1h-1zM235.33 27h1v1h-1zM235.33 32h1v1h-1zM235.33 33h1v1h-1zM235.33 48h1v1h-1zM235.33 51h1v1h-1zM236.33 2h1v1h-1zM236.33 3h1v2h-1zM236.33 27h1v1h-1zM236.33 29h1v1h-1zM236.33 30h1v1h-1zM236.33 33h1v1h-1zM236.33 36h1v1h-1zM237.33 6h1v1h-1zM237.33 7h1v1h-1zM237.33 12h1v1h-1zM237.33 13h1v1h-1zM237.33 14h1v1h-1zM237.33 18h1v1h-1zM237.33 24h1v2h-1zM237.33 26h1v1h-1zM237.33 27h1v1h-1zM237.33 31h1v1h-1zM237.33 36h1v2h-1zM237.33 40h1v1h-1zM237.33 46h1v2h-1zM237.33 51h1v1h-1zM238.33 11h1v1h-1zM238.33 16h1v1h-1zM238.33 22h1v1h-1zM238.33 23h1v2h-1zM238.33 25h1v1h-1zM238.33 28h1v2h-1zM238.33 35h1v2h-1zM238.33 37h1v1h-1zM238.33 41h1v2h-1zM239.33 0h1v2h-1zM239.33 5h1v1h-1zM239.33 7h1v1h-1zM239.33 8h1v1h-1zM239.33 15h1v2h-1zM239.33 28h1v1h-1zM239.33 29h1v2h-1zM239.33 36h1v2h-1zM239.33 45h1v1h-1zM239.33 48h1v2h-1zM240.33 5h1v1h-1zM240.33 7h1v1h-1zM240.33 12h1v2h-1zM240.33 14h1v1h-1zM240.33 22h1v1h-1zM240.33 25h1v1h-1zM240.33 39h1v1h-1zM240.33 40h1v1h-1zM240.33 44h1v1h-1zM240.33 52h1v1h-1zM241.33 6h1v1h-1zM241.33 10h1v1h-1zM241.33 14h1v1h-1zM241.33 17h1v2h-1zM241.33 19h1v1h-1zM241.33 22h1v1h-1zM241.33 25h1v1h-1zM241.33 29h1v1h-1zM241.33 32h1v1h-1zM241.33 33h1v1h-1zM241.33 43h1v2h-1zM241.33 45h1v1h-1zM241.33 47h1v1h-1zM241.33 50h1v1h-1zM241.33 53h1v1h-1zM242.33 3h1v1h-1zM242.33 8h1v2h-1zM242.33 15h1v1h-1zM242.33 43h1v2h-1zM242.33 49h1v1h-1zM242.33 50h1v1h-1zM243.33 20h1v1h-1zM243.33 31h1v2h-1zM243.33 33h1v1h-1zM243.33 34h1v2h-1zM243.33 41h1v1h-1zM243.33 45h1v2h-1zM243.33 47h1v1h-1zM243.33 50h1v2h-1zM243.33 53h1v1h-1zM244.33 2h1v1h-1zM244.33 33h1v1h-1zM244.33 34h1v1h-1zM244.33 36h1v2h-1zM244.33 43h1v1h-1zM244.33 50h1v1h-1zM244.33 51h1v1h-1zM245.33 2h1v1h-1zM245.33 5h1v1h-1zM245.33 6h1v1h-1zM245.33 15h1v2h-1zM245.33 22h1v1h-1zM245.33 24h1v1h-1zM245.33 28h1v1h-1zM245.33 30h1v1h-1zM245.33 39h1v2h-1zM245.33 43h1v1h-1zM245.33 44h1v2h-1zM246.33 6h1v2h-1zM246.33 14h1v1h-1zM246.33 17h1v1h-1zM246.33 19h1v1h-1zM246.33 30h1v2h-1zM246.33 34h1v2h-1zM246.33 41h1v2h-1zM246.33 44h1v2h-1zM246.33 52h1v1h-1zM247.33 4h1v1h-1zM247.33 5h1v1h-1zM247.33 19h1v1h-1zM247.33 22h1v1h-1zM247.33 30h1v1h-1zM247.33 35h1v1h-1zM247.33 39h1v2h-1zM247.33 42h1v1h-1zM247.33 44h1v2h-1zM247.33 47h1v1h-1zM247.33 49h1v1h-1zM247.33 50h1v1h-1zM247.33 52h1v2h-1zM248.33 5h1v1h-1zM248.33 6h1v2h-1zM248.33 9h1v1h-1zM248.33 11h1v1h-1zM248.33 24h1v2h-1zM248.33 26h1v1h-1zM248.33 29h1v1h-1zM248.33 33h1v1h-1zM248.33 39h1v1h-1zM248.33 44h1v1h-1zM248.33 49h1v1h-1zM249.33 7h1v2h-1zM249.33 11h1v1h-1zM249.33 13h1v2h-1zM249.33 18h1v1h-1zM249.33 24h1v1h-1zM249.33 29h1v1h-1zM249.33 33h1v1h-1zM249.33 34h1v2h-1zM249.33 43h1v2h-1zM249.33 45h1v1h-1zM249.33 47h1v2h-1zM249.33 52h1v1h-1zM250.33 10h1v1h-1zM250.33 30h1v1h-1zM250.33 39h1v2h-1zM250.33 42h1v2h-1zM250.33 45h1v1h-1zM250.33 46h1v2h-1zM250.33 53h1v1h-1zM251.33 4h1v2h-1zM251.33 9h1v2h-1zM251.33 14h1v1h-1zM251.33 15h1v1h-1zM251.33 18h1v1h-1zM251.33 19h1v1h-1zM251.33 24h1v2h-1zM251.33 29h1v1h-1zM251.33 32h1v1h-1zM251.33 33h1v2h-1zM251.33 38h1v1h-1zM251.33 42h1v1h-1zM251.33 50h1v2h-1zM252.33 0h1v1h-1zM252.33 3h1v1h-1zM252.33 7h1v2h-1zM252.33 10h1v2h-1zM252.33 13h1v2h-1zM252.33 15h1v1h-1zM252.33 19h1v2h-1zM252.33 28h1v1h-1zM252.33 36h1v1h-1zM252.33 47h1v2h-1zM252.33 52h1v2h-1zM253.33 11h1v1h-1zM253.33 17h1v1h-1zM253.33 18h1v1h-1zM253.33 28h1v2h-1zM253.33 31h1v1h-1zM253.33 38h1v2h-1zM253.33 48h1v1h-1zM253.33 49h1v1h-1zM253.33 52h1v1h-1zM254.33 8h1v1h-1zM254.33 9h1v1h-1zM254.33 10h1v1h-1zM254.33 13h1v1h-1zM254.33 16h1v1h-1zM254.33 17h1v1h-1zM254.33 21h1v1h-1zM254.33 25h1v2h-1zM254.33 29h1v1h-1zM254.33 34h1v2h-1zM254.33 47h1v1h-1zM254.33 48h1v2h-1zM254.33 52h1v1h-1zM254.33 53h1v1h-1zM255.33 10h1v1h-1zM255.33 12h1v1h-1zM255.33 13h1v1h-1zM255.33 14h1v2h-1zM255.33 16h1v1h-1zM255.33 17h1v1h-1zM255.33 20h1v1h-1zM255.33 28h1v1h-1zM255.33 36h1v1h-1zM255.33 44h1v1h-1zM255.33 48h1v1h-1zM255.33 53h1v1h-1zM256.33 1h1v2h-1zM256.33 10h1v1h-1zM256.33 19h1v1h-1zM256.33 29h1v2h-1zM256.33 43h1v1h-1zM257.33 0h1v1h-1zM257.33 1h1v1h-1zM257.33 4h1v1h-1zM257.33 16h1v1h-1zM257.33 18h1v1h-1zM257.33 20h1v1h-1zM257.33 33h1v1h-1zM257.33 35h1v1h-1zM257.33 39h1v1h-1zM257.33 43h1v1h-1zM257.33 52h1v1h-1zM257.33 53h1v1h-1zM258.33 2h1v2h-1zM258.33 9h1v1h-1zM258.33 10h1v1h-1zM258.33 14h1v1h-1zM258.33 15h1v2h-1zM258.33 17h1v1h-1zM258.33 20h1v2h-1zM258.33 25h1v1h-1zM258.33 27h1v1h-1zM258.33 33h1v1h-1zM258.33 38h1v1h-1zM258.33 49h1v2h-1zM258.33 51h1v1h-1zM258.33 52h1v1h-1zM258.33 53h1v1h-1zM259.33 3h1v2h-1zM259.33 11h1v1h-1zM259.33 12h1v1h-1zM259.33 15h1v1h-1zM259.33 16h1v1h-1zM259.33 19h1v2h-1zM259.33 22h1v1h-1zM259.33 27h1v1h-1zM259.33 31h1v2h-1zM259.33 47h1v2h-1zM259.33 49h1v1h-1zM260.33 1h1v1h-1zM260.33 8h1v1h-1zM260.33 12h1v1h-1zM260.33 13h1v2h-1zM260.33 21h1v2h-1zM260.33 23h1v1h-1zM260.33 26h1v1h-1zM260.33 33h1v2h-1zM260.33 41h1v1h-1zM260.33 43h1v2h-1zM261.33 0h1v2h-1zM261.33 3h1v1h-1zM261.33 7h1v1h-1zM261.33 23h1v1h-1zM261.33 27h1v1h-1zM261.33 33h1v1h-1zM261.33 41h1v1h-1zM261.33 42h1v2h-1zM262.33 2h1v2h-1zM262.33 8h1v1h-1zM262.33 12h1v1h-1zM262.33 17h1v1h-1zM262.33 18h1v1h-1zM262.33 23h1v1h-1zM262.33 29h1v1h-1zM262.33 37h1v1h-1zM262.33 49h1v1h-1zM263.33 0h1v1h-1zM263.33 10h1v1h-1zM263.33 12h1v2h-1zM263.33 16h1v2h-1zM263.33 26h1v1h-1zM263.33 29h1v1h-1zM263.33 41h1v1h-1zM263.33 47h1v1h-1zM263.33 50h1v1h-1zM263.33 51h1v1h-1zM264.33 8h1v1h-1zM264.33 15h1v1h-1zM264.33 18h1v1h-1zM264.33 41h1v1h-1zM264.33 42h1v1h-1zM264.33 48h1v1h-1zM264.33 52h1v2h-1zM265.33 2h1v1h-1zM265.33 7h1v1h-1zM265.33 11h1v1h-1zM265.33 12h1v1h-1zM265.33 23h1v1h-1zM265.33 24h1v1h-1zM265.33 33h1v1h-1zM265.33 36h1v1h-1zM265.33 41h1v1h-1zM265.33 47h1v2h-1zM265.33 52h1v2h-1zM266.33 1h1v2h-1zM266.33 3h1v1h-1zM266.33 4h1v2h-1zM266.33 7h1v2h-1zM266.33 16h1v1h-1zM266.33 21h1v1h-1zM266.33 27h1v1h-1zM266.33 42h1v1h-1zM266.33 47h1v1h-1zM267.33 0h1v2h-1zM267.33 7h1v1h-1zM267.33 17h1v1h-1zM267.33 21h1v1h-1zM267.33 26h1v1h-1zM267.33 31h1v2h-1zM267.33 35h1v2h-1zM267.33 38h1v2h-1zM267.33 40h1v1h-1zM267.33 42h1v2h-1zM267.33 44h1v1h-1zM267.33 46h1v1h-1zM268.33 4h1v1h-1zM268.33 8h1v1h-1zM268.33 22h1v1h-1zM268.33 23h1v2h-1zM268.33 34h1v1h-1zM268.33 39h1v2h-1zM268.33 49h1v1h-1zM268.33 52h1v1h-1zM269.33 0h1v1h-1zM269.33 1h1v1h-1zM269.33 13h1v1h-1zM269.33 14h1v1h-1zM269.33 21h1v1h-1zM269.33 26h1v1h-1zM269.33 27h1v1h-1zM269.33 33h1v1h-1zM269.33 41h1v1h-1zM269.33 43h1v1h-1zM269.33 45h1v1h-1zM269.33 46h1v2h-1zM269.33 48h1v1h-1zM270.33 15h1v1h-1zM270.33 26h1v1h-1zM270.33 27h1v2h-1zM270.33 30h1v2h-1zM270.33 34h1v1h-1zM270.33 38h1v1h-1zM270.33 39h1v1h-1zM270.33 45h1v1h-1zM270.33 46h1v1h-1zM270.33 47h1v1h-1zM270.33 48h1v1h-1zM270.33 52h1v2h-1zM271.33 46h1v2h-1zM271.33 52h1v2h-1zM272.33 0h1v2h-1zM272.33 4h1v1h-1zM272.33 5h1v1h-1zM272.33 16h1v1h-1zM272.33 24h1v1h-1zM272.33 25h1v1h-1zM272.33 26h1v1h-1zM272.33 41h1v1h-1zM272.33 45h1v2h-1zM272.33 51h1v2h-1zM272.33 53h1v1h-1zM273.33 18h1v1h-1zM273.33 20h1v1h-1zM273.33 27h1v1h-1zM273.33 30h1v1h-1zM273.33 32h1v2h-1zM273.33 47h1v1h-1zM273.33 52h1v2h-1zM274.33 8h1v1h-1zM274.33 12h1v1h-1zM274.33 18h1v2h-1zM274.33 31h1v1h-1zM274.33 36h1v1h-1zM274.33 40h1v2h-1zM274.33 42h1v1h-1zM274.33 50h1v2h-1zM274.33 52h1v2h-1zM275.33 0h1v1h-1zM275.33 1h1v1h-1zM275.33 7h1v1h-1zM275.33 8h1v1h-1zM275.33 10h1v1h-1zM275.33 26h1v1h-1zM275.33 39h1v1h-1zM275.33 43h1v1h-1zM275.33 45h1v1h-1zM275.33 48h1v1h-1zM275.33 49h1v1h-1zM276.33 0h1v1h-1zM276.33 9h1v1h-1zM276.33 13h1v1h-1zM276.33 17h1v2h-1zM276.33 19h1v1h-1zM276.33 21h1v1h-1zM276.33 23h1v2h-1zM276.33 34h1v1h-1zM276.33 46h1v2h-1zM276.33 48h1v1h-1zM276.33 49h1v1h-1zM276.33 50h1v1h-1zM276.33 51h1v1h-1zM277.33 0h1v1h-1zM277.33 12h1v1h-1zM277.33 13h1v1h-1zM277.33 16h1v1h-1zM277.33 17h1v1h-1zM277.33 18h1v1h-1zM277.33 23h1v2h-1zM277.33 25h1v1h-1zM277.33 27h1v2h-1zM277.33 30h1v1h-1zM277.33 33h1v1h-1zM277.33 44h1v2h-1zM277.33 46h1v1h-1zM278.33 3h1v1h-1zM278.33 9h1v2h-1zM278.33 11h1v1h-1zM278.33 17h1v1h-1zM278.33 24h1v1h-1zM278.33 28h1v2h-1zM278.33 30h1v1h-1zM278.33 31h1v2h-1zM278.33 35h1v2h-1zM278.33 37h1v2h-1zM278.33 39h1v1h-1zM278.33 40h1v1h-1zM278.33 41h1v1h-1zM278.33 52h1v1h-1zM279.33 2h1v1h-1zM279.33 6h1v1h-1zM279.33 8h1v1h-1zM279.33 9h1v1h-1zM279.33 16h1v1h-1zM279.33 19h1v2h-1zM279.33 24h1v1h-1zM279.33 36h1v1h-1zM279.33 37h1v2h-1zM279.33 39h1v1h-1zM279.33 44h1v2h-1zM279.33 50h1v1h-1zM279.33 51h1v1h-1zM279.33 52h1v1h-1zM280.33 1h1v1h-1zM280.33 2h1v1h-1zM280.33 6h1v1h-1zM280.33 13h1v1h-1zM280.33 34h1v1h-1zM280.33 39h1v1h-1zM280.33 46h1v1h-1zM281.33 15h1v1h-1zM281.33 16h1v1h-1zM281.33 31h1v2h-1zM281.33 36h1v2h-1zM281.33 50h1v2h-1zM281.33 53h1v1h-1zM282.33 9h1v1h-1zM282.33 13h1v1h-1zM282.33 15h1v1h-1zM282.33 16h1v1h-1zM282.33 25h1v1h-1zM282.33 28h1v2h-1zM282.33 32h1v2h-1zM282.33 35h1v1h-1zM282.33 39h1v1h-1zM282.33 42h1v2h-1zM282.33 47h1v1h-1zM282.33 48h1v1h-1zM282.33 49h1v1h-1zM282.33 50h1v1h-1zM282.33 51h1v1h-1zM283.33 8h1v2h-1zM283.33 11h1v1h-1zM283.33 12h1v1h-1zM283.33 17h1v1h-1zM283.33 20h1v2h-1zM283.33 31h1v2h-1zM283.33 44h1v1h-1zM283.33 52h1v2h-1zM284.33 0h1v1h-1zM284.33 6h1v1h-1zM284.33 7h1v1h-1zM284.33 20h1v1h-1zM284.33 25h1v1h-1zM284.33 26h1v1h-1zM284.33 31h1v1h-1zM284.33 39h1v2h-1zM284.33 44h1v2h-1zM284.33 51h1v1h-1zM284.33 52h1v2h-1zM285.33 14h1v2h-1zM285.33 16h1v2h-1zM285.33 21h1v1h-1zM285.33 23h1v1h-1zM285.33 24h1v2h-1zM285.33 28h1v2h-1zM285.33 34h1v2h-1zM285.33 44h1v2h-1zM285.33 46h1v2h-1zM285.33 48h1v2h-1zM286.33 3h1v1h-1zM286.33 20h1v1h-1zM286.33 21h1v1h-1zM286.33 22h1v1h-1zM286.33 36h1v2h-1zM286.33 44h1v1h-1zM286.33 46h1v1h-1zM286.33 53h1v1h-1zM287.33 0h1v1h-1zM287.33 1h1v2h-1zM287.33 6h1v2h-1zM287.33 8h1v2h-1zM287.33 14h1v1h-1zM287.33 15h1v2h-1zM287.33 26h1v2h-1zM287.33 38h1v1h-1zM287.33 40h1v2h-1zM287.33 43h1v1h-1zM287.33 44h1v1h-1zM287.33 45h1v1h-1zM287.33 50h1v1h-1zM288.33 16h1v1h-1zM288.33 17h1v2h-1zM288.33 24h1v2h-1zM288.33 40h1v1h-1zM288.33 45h1v1h-1zM288.33 47h1v1h-1zM288.33 53h1v1h-1zM289.33 1h1v1h-1zM289.33 2h1v2h-1zM289.33 11h1v1h-1zM289.33 14h1v1h-1zM289.33 15h1v1h-1zM289.33 18h1v1h-1zM289.33 22h1v1h-1zM289.33 25h1v1h-1zM289.33 26h1v1h-1zM289.33 42h1v1h-1zM289.33 45h1v1h-1zM289.33 50h1v1h-1zM289.33 52h1v1h-1zM290.33 0h1v1h-1zM290.33 8h1v1h-1zM290.33 33h1v2h-1zM290.33 35h1v2h-1zM290.33 37h1v2h-1zM290.33 39h1v2h-1zM290.33 50h1v2h-1zM290.33 53h1v1h-1zM291.33 3h1v2h-1zM291.33 12h1v2h-1zM291.33 14h1v1h-1zM291.33 19h1v2h-1zM291.33 21h1v2h-1zM291.33 23h1v1h-1zM291.33 26h1v1h-1zM291.33 31h1v1h-1zM291.33 37h1v1h-1zM291.33 41h1v2h-1zM291.33 44h1v1h-1zM291.33 45h1v1h-1zM291.33 46h1v1h-1zM291.33 48h1v1h-1zM291.33 51h1v2h-1zM292.33 4h1v1h-1zM292.33 8h1v1h-1zM292.33 14h1v1h-1zM292.33 15h1v1h-1zM292.33 23h1v2h-1zM292.33 32h1v2h-1zM292.33 40h1v1h-1zM292.33 43h1v1h-1zM293.33 7h1v1h-1zM293.33 10h1v1h-1zM293.33 14h1v1h-1zM293.33 17h1v1h-1zM293.33 18h1v1h-1zM293.33 19h1v1h-1zM293.33 21h1v1h-1zM293.33 25h1v1h-1zM293.33 26h1v1h-1zM293.33 29h1v1h-1zM293.33 43h1v1h-1zM294.33 13h1v1h-1zM294.33 17h1v1h-1zM294.33 23h1v1h-1zM294.33 25h1v1h-1zM294.33 30h1v2h-1zM294.33 35h1v1h-1zM294.33 41h1v1h-1zM294.33 43h1v1h-1zM294.33 44h1v1h-1zM294.33 45h1v2h-1zM294.33 53h1v1h-1zM295.33 0h1v2h-1zM295.33 3h1v1h-1zM295.33 8h1v1h-1zM295.33 11h1v1h-1zM295.33 14h1v1h-1zM295.33 19h1v1h-1zM295.33 21h1v2h-1zM295.33 25h1v1h-1zM295.33 26h1v1h-1zM295.33 38h1v2h-1zM295.33 43h1v2h-1zM295.33 46h1v1h-1zM295.33 50h1v1h-1zM295.33 51h1v1h-1zM296.33 8h1v1h-1zM296.33 21h1v1h-1zM296.33 23h1v1h-1zM296.33 26h1v1h-1zM296.33 35h1v2h-1zM296.33 38h1v2h-1zM296.33 47h1v1h-1zM297.33 0h1v1h-1zM297.33 1h1v1h-1zM297.33 2h1v2h-1zM297.33 18h1v1h-1zM297.33 21h1v1h-1zM297.33 27h1v1h-1zM297.33 34h1v1h-1zM297.33 38h1v1h-1zM297.33 47h1v1h-1zM297.33 50h1v1h-1zM297.33 51h1v1h-1zM298.33 4h1v1h-1zM298.33 6h1v2h-1zM298.33 13h1v1h-1zM298.33 14h1v1h-1zM298.33 15h1v1h-1zM298.33 22h1v1h-1zM298.33 29h1v1h-1zM298.33 37h1v1h-1zM298.33 40h1v1h-1zM298.33 46h1v1h-1zM299.33 1h1v2h-1zM299.33 3h1v1h-1zM299.33 9h1v2h-1zM299.33 17h1v1h-1zM299.33 19h1v1h-1zM299.33 20h1v1h-1zM299.33 21h1v1h-1zM299.33 39h1v1h-1zM299.33 40h1v1h-1zM299.33 42h1v1h-1zM299.33 45h1v2h-1zM299.33 47h1v2h-1zM300.33 6h1v1h-1zM300.33 15h1v1h-1zM300.33 18h1v1h-1zM300.33 24h1v2h-1zM300.33 26h1v2h-1zM300.33 37h1v1h-1zM300.33 49h1v2h-1zM300.33 52h1v1h-1zM301.33 1h1v1h-1zM301.33 2h1v1h-1zM301.33 4h1v1h-1zM301.33 5h1v2h-1zM301.33 8h1v1h-1zM301.33 9h1v2h-1zM301.33 11h1v1h-1zM301.33 17h1v1h-1zM301.33 32h1v1h-1zM301.33 35h1v1h-1zM301.33 38h1v1h-1zM301.33 42h1v2h-1zM302.33 0h1v2h-1zM302.33 23h1v1h-1zM302.33 33h1v1h-1zM302.33 34h1v1h-1zM302.33 46h1v1h-1zM302.33 47h1v2h-1zM302.33 50h1v1h-1zM302.33 53h1v1h-1zM303.33 7h1v1h-1zM303.33 9h1v2h-1zM303.33 11h1v1h-1zM303.33 12h1v1h-1zM303.33 16h1v1h-1zM303.33 17h1v1h-1zM303.33 20h1v1h-1zM303.33 24h1v1h-1zM303.33 31h1v1h-1zM303.33 32h1v2h-1zM303.33 37h1v1h-1zM303.33 40h1v1h-1zM303.33 41h1v2h-1zM303.33 47h1v1h-1zM304.33 0h1v1h-1zM304.33 3h1v1h-1zM304.33 4h1v2h-1zM304.33 8h1v1h-1zM304.33 12h1v1h-1zM304.33 13h1v1h-1zM304.33 16h1v2h-1zM304.33 33h1v2h-1zM304.33 36h1v2h-1zM304.33 38h1v1h-1zM304.33 42h1v2h-1zM305.33 2h1v1h-1zM305.33 5h1v2h-1zM305.33 8h1v1h-1zM305.33 11h1v1h-1zM305.33 12h1v2h-1zM305.33 18h1v1h-1zM305.33 24h1v2h-1zM305.33 29h1v2h-1zM305.33 31h1v1h-1zM305.33 40h1v1h-1zM305.33 48h1v1h-1zM305.33 49h1v1h-1zM305.33 50h1v1h-1zM306.33 1h1v1h-1zM306.33 2h1v2h-1zM306.33 10h1v1h-1zM306.33 15h1v1h-1zM306.33 24h1v2h-1zM306.33 27h1v1h-1zM306.33 30h1v2h-1zM306.33 47h1v1h-1zM306.33 48h1v1h-1zM306.33 52h1v2h-1zM307.33 5h1v2h-1zM307.33 9h1v1h-1zM307.33 16h1v2h-1zM307.33 21h1v2h-1zM307.33 25h1v1h-1zM307.33 29h1v1h-1zM307.33 30h1v1h-1zM307.33 31h1v2h-1zM307.33 34h1v1h-1zM307.33 39h1v1h-1zM307.33 46h1v1h-1zM307.33 53h1v1h-1zM308.33 0h1v1h-1zM308.33 7h1v2h-1zM308.33 13h1v1h-1zM308.33 14h1v1h-1zM308.33 23h1v2h-1zM308.33 32h1v1h-1zM308.33 34h1v1h-1zM308.33 37h1v1h-1zM308.33 40h1v1h-1zM308.33 43h1v1h-1zM308.33 47h1v1h-1zM309.33 10h1v1h-1zM309.33 13h1v2h-1zM309.33 19h1v2h-1zM309.33 33h1v1h-1zM309.33 35h1v1h-1zM309.33 40h1v1h-1zM309.33 41h1v2h-1zM309.33 44h1v1h-1zM309.33 51h1v2h-1zM310.33 16h1v1h-1zM310.33 21h1v2h-1zM310.33 24h1v1h-1zM310.33 27h1v2h-1zM310.33 35h1v2h-1zM310.33 44h1v1h-1zM310.33 45h1v2h-1zM310.33 47h1v1h-1zM310.33 50h1v2h-1zM310.33 52h1v1h-1zM311.33 1h1v1h-1zM311.33 4h1v1h-1zM311.33 8h1v1h-1zM311.33 10h1v1h-1zM311.33 12h1v1h-1zM311.33 18h1v2h-1zM311.33 28h1v1h-1zM311.33 46h1v1h-1zM311.33 47h1v1h-1zM311.33 48h1v1h-1zM311.33 51h1v1h-1zM311.33 52h1v1h-1zM312.33 1h1v2h-1zM312.33 17h1v1h-1zM312.33 23h1v1h-1zM312.33 25h1v2h-1zM312.33 28h1v2h-1zM312.33 30h1v2h-1zM312.33 38h1v2h-1zM312.33 41h1v2h-1zM312.33 45h1v1h-1zM313.33 11h1v1h-1zM313.33 19h1v1h-1zM313.33 23h1v1h-1zM313.33 30h1v1h-1zM313.33 32h1v1h-1zM313.33 33h1v1h-1zM313.33 36h1v2h-1zM313.33 43h1v1h-1zM313.33 48h1v1h-1zM314.33 2h1v1h-1zM314.33 19h1v2h-1zM314.33 24h1v2h-1zM314.33 26h1v1h-1zM314.33 36h1v1h-1zM314.33 38h1v1h-1zM314.33 48h1v1h-1zM315.33 0h1v1h-1zM315.33 1h1v2h-1zM315.33 7h1v2h-1zM315.33 9h1v2h-1zM315.33 11h1v2h-1zM315.33 13h1v1h-1zM315.33 15h1v1h-1zM315.33 17h1v1h-1zM315.33 18h1v1h-1zM315.33 22h1v1h-1zM315.33 27h1v1h-1zM315.33 39h1v1h-1zM315.33 43h1v1h-1zM315.33 51h1v2h-1zM316.33 1h1v2h-1zM316.33 5h1v1h-1zM316.33 6h1v1h-1zM316.33 17h1v1h-1zM316.33 25h1v1h-1zM316.33 26h1v1h-1zM316.33 32h1v2h-1zM316.33 40h1v2h-1zM316.33 44h1v2h-1zM317.33 12h1v2h-1zM317.33 15h1v2h-1zM317.33 18h1v2h-1zM317.33 21h1v1h-1zM317.33 22h1v2h-1zM317.33 26h1v1h-1zM317.33 34h1v2h-1zM317.33 37h1v2h-1zM317.33 39h1v1h-1zM317.33 51h1v2h-1zM318.33 0h1v2h-1zM318.33 20h1v2h-1zM318.33 33h1v2h-1zM318.33 35h1v1h-1zM318.33 43h1v1h-1zM318.33 45h1v1h-1zM318.33 51h1v2h-1zM319.33 0h1v1h-1zM319.33 2h1v1h-1zM319.33 9h1v1h-1zM319.33 12h1v1h-1zM319.33 14h1v2h-1zM319.33 25h1v1h-1zM319.33 33h1v1h-1zM319.33 36h1v1h-1zM319.33 39h1v1h-1zM319.33 41h1v1h-1zM320.33 1h1v1h-1zM320.33 4h1v1h-1zM320.33 10h1v2h-1zM320.33 15h1v1h-1zM320.33 18h1v1h-1zM320.33 22h1v1h-1zM320.33 23h1v2h-1zM320.33 25h1v1h-1zM320.33 33h1v1h-1zM320.33 37h1v1h-1zM320.33 51h1v1h-1zM321.33 5h1v2h-1zM321.33 7h1v1h-1zM321.33 11h1v1h-1zM321.33 12h1v1h-1zM321.33 15h1v1h-1zM321.33 16h1v1h-1zM321.33 17h1v1h-1zM321.33 23h1v1h-1zM321.33 26h1v1h-1zM321.33 32h1v1h-1zM321.33 38h1v2h-1zM321.33 42h1v1h-1zM321.33 43h1v2h-1zM321.33 48h1v1h-1zM321.33 52h1v1h-1zM322.33 0h1v1h-1zM322.33 1h1v1h-1zM322.33 22h1v1h-1zM322.33 26h1v1h-1zM322.33 30h1v1h-1zM322.33 48h1v1h-1zM322.33 49h1v1h-1zM322.33 50h1v1h-1zM323.33 1h1v1h-1zM323.33 13h1v1h-1zM323.33 23h1v1h-1zM323.33 42h1v1h-1zM323.33 43h1v1h-1zM323.33 53h1v1h-1zM324.33 0h1v1h-1zM324.33 7h1v1h-1zM324.33 14h1v2h-1zM324.33 16h1v2h-1zM324.33 20h1v1h-1zM324.33 24h1v2h-1zM324.33 40h1v2h-1zM324.33 43h1v1h-1zM325.33 3h1v1h-1zM325.33 4h1v1h-1zM325.33 7h1v1h-1zM325.33 8h1v1h-1zM325.33 12h1v2h-1zM325.33 14h1v1h-1zM325.33 29h1v2h-1zM325.33 37h1v1h-1zM325.33 43h1v2h-1zM325.33 46h1v2h-1zM325.33 48h1v1h-1zM325.33 49h1v1h-1zM325.33 50h1v2h-1zM325.33 52h1v1h-1zM325.33 53h1v1h-1zM326.33 0h1v1h-1zM326.33 8h1v1h-1zM326.33 13h1v2h-1zM326.33 16h1v1h-1zM326.33 22h1v2h-1zM326.33 27h1v1h-1zM326.33 40h1v1h-1zM326.33 41h1v1h-1zM326.33 44h1v1h-1zM327.33 2h1v1h-1zM327.33 3h1v1h-1zM327.33 14h1v2h-1zM327.33 17h1v1h-1zM327.33 27h1v1h-1zM327.33 28h1v1h-1zM327.33 37h1v2h-1zM327.33 41h1v1h-1zM327.33 42h1v1h-1zM327.33 53h1v1h-1zM328.33 2h1v1h-1zM328.33 12h1v1h-1zM328.33 13h1v2h-1zM328.33 16h1v1h-1zM328.33 18h1v1h-1zM328.33 19h1v2h-1zM328.33 34h1v1h-1zM328.33 39h1v1h-1zM328.33 42h1v2h-1zM328.33 45h1v1h-1zM328.33 48h1v2h-1zM328.33 53h1v1h-1zM329.33 0h1v1h-1zM329.33 1h1v1h-1zM329.33 12h1v1h-1zM329.33 13h1v1h-1zM329.33 23h1v1h-1zM329.33 31h1v2h-1zM329.33 35h1v1h-1zM329.33 37h1v1h-1zM329.33 38h1v2h-1zM329.33 47h1v1h-1zM329.33 48h1v1h-1zM329.33 51h1v1h-1zM330.33 3h1v1h-1zM330.33 6h1v1h-1zM330.33 10h1v1h-1zM330.33 21h1v1h-1zM330.33 27h1v2h-1zM330.33 34h1v1h-1zM330.33 35h1v1h-1zM331.33 2h1v1h-1zM331.33 13h1v1h-1zM331.33 19h1v1h-1zM331.33 22h1v2h-1zM331.33 29h1v1h-1zM332.33 9h1v2h-1zM332.33 12h1v1h-1zM332.33 17h1v1h-1zM332.33 21h1v1h-1zM332.33 29h1v2h-1zM332.33 32h1v2h-1zM332.33 42h1v1h-1zM332.33 45h1v2h-1zM332.33 53h1v1h-1zM333.33 0h1v2h-1zM333.33 5h1v1h-1zM333.33 14h1v1h-1zM333.33 21h1v1h-1zM333.33 24h1v1h-1zM333.33 29h1v1h-1zM333.33 34h1v2h-1zM333.33 41h1v1h-1zM333.33 42h1v1h-1zM333.33 45h1v2h-1zM333.33 50h1v1h-1zM333.33 51h1v1h-1zM333.33 53h1v1h-1zM334.33 3h1v1h-1zM334.33 12h1v1h-1zM334.33 15h1v1h-1zM334.33 17h1v1h-1zM334.33 20h1v1h-1zM334.33 26h1v2h-1zM334.33 41h1v1h-1zM334.33 44h1v1h-1zM335.33 2h1v1h-1zM335.33 8h1v1h-1zM335.33 9h1v1h-1zM335.33 11h1v1h-1zM335.33 12h1v2h-1zM335.33 15h1v2h-1zM335.33 29h1v2h-1zM335.33 34h1v1h-1zM335.33 37h1v1h-1zM335.33 43h1v1h-1zM335.33 44h1v1h-1zM335.33 45h1v2h-1zM336.33 2h1v2h-1zM336.33 4h1v2h-1zM336.33 15h1v1h-1zM336.33 19h1v1h-1zM336.33 23h1v2h-1zM336.33 25h1v1h-1zM336.33 48h1v1h-1zM337.33 7h1v2h-1zM337.33 9h1v1h-1zM337.33 19h1v2h-1zM337.33 21h1v1h-1zM337.33 24h1v1h-1zM337.33 30h1v1h-1zM337.33 36h1v1h-1zM337.33 41h1v1h-1zM337.33 48h1v1h-1zM337.33 49h1v1h-1zM337.33 50h1v1h-1zM337.33 52h1v1h-1zM338.33 5h1v1h-1zM338.33 49h1v2h-1zM338.33 53h1v1h-1zM339.33 0h1v2h-1zM339.33 9h1v1h-1zM339.33 12h1v1h-1zM339.33 13h1v1h-1zM339.33 15h1v1h-1zM339.33 43h1v1h-1zM340.33 1h1v1h-1zM340.33 6h1v1h-1zM340.33 7h1v1h-1zM340.33 11h1v1h-1zM340.33 15h1v1h-1zM340.33 22h1v2h-1zM340.33 31h1v1h-1zM340.33 33h1v2h-1zM340.33 35h1v1h-1zM340.33 36h1v1h-1zM341.33 0h1v1h-1zM341.33 3h1v1h-1zM341.33 6h1v2h-1zM341.33 14h1v2h-1zM341.33 16h1v2h-1zM341.33 20h1v1h-1zM341.33 23h1v1h-1zM341.33 32h1v1h-1zM341.33 34h1v1h-1zM341.33 35h1v2h-1zM341.33 37h1v1h-1zM341.33 43h1v1h-1zM341.33 48h1v1h-1zM341.33 50h1v1h-1zM342.33 15h1v2h-1zM342.33 19h1v1h-1zM342.33 22h1v2h-1zM342.33 26h1v2h-1zM342.33 32h1v1h-1zM342.33 36h1v2h-1zM342.33 38h1v1h-1zM342.33 43h1v1h-1zM342.33 44h1v1h-1zM342.33 47h1v1h-1zM343.33 1h1v1h-1zM343.33 8h1v1h-1zM343.33 10h1v2h-1zM343.33 13h1v1h-1zM343.33 14h1v1h-1zM343.33 17h1v1h-1zM343.33 24h1v2h-1zM343.33 26h1v1h-1zM343.33 27h1v2h-1zM343.33 30h1v1h-1zM343.33 31h1v2h-1zM343.33 35h1v2h-1zM343.33 42h1v1h-1zM343.33 47h1v2h-1zM343.33 49h1v1h-1zM343.33 51h1v1h-1zM343.33 52h1v1h-1zM344.33 19h1v1h-1zM344.33 21h1v1h-1zM344.33 27h1v1h-1zM344.33 35h1v1h-1zM344.33 36h1v1h-1zM344.33 40h1v1h-1zM344.33 41h1v2h-1zM345.33 15h1v1h-1zM345.33 22h1v1h-1zM345.33 30h1v2h-1zM345.33 32h1v1h-1zM345.33 33h1v2h-1zM345.33 39h1v1h-1zM345.33 41h1v1h-1zM345.33 46h1v1h-1zM345.33 47h1v1h-1zM345.33 48h1v1h-1zM346.33 5h1v1h-1zM346.33 10h1v2h-1zM346.33 16h1v2h-1zM346.33 24h1v2h-1zM346.33 30h1v1h-1zM346.33 35h1v1h-1zM346.33 40h1v1h-1zM346.33 45h1v1h-1zM346.33 49h1v1h-1zM347.33 0h1v1h-1zM347.33 3h1v1h-1zM347.33 7h1v1h-1zM347.33 9h1v1h-1zM347.33 14h1v1h-1zM347.33 18h1v1h-1zM347.33 20h1v1h-1zM347.33 24h1v1h-1zM347.33 25h1v1h-1zM347.33 28h1v1h-1zM347.33 30h1v1h-1zM347.33 31h1v2h-1zM347.33 34h1v1h-1zM347.33 41h1v2h-1zM347.33 52h1v1h-1zM347.33 53h1v1h-1zM348.33 2h1v1h-1zM348.33 3h1v1h-1zM348.33 10h1v2h-1zM348.33 12h1v1h-1zM348.33 17h1v2h-1zM348.33 19h1v2h-1zM348.33 34h1v2h-1zM348.33 46h1v1h-1zM349.33 6h1v1h-1zM349.33 10h1v1h-1zM349.33 11h1v1h-1zM349.33 12h1v1h-1zM349.33 17h1v1h-1zM349.33 19h1v1h-1zM349.33 21h1v1h-1zM349.33 23h1v2h-1zM349.33 26h1v1h-1zM349.33 35h1v1h-1zM349.33 42h1v1h-1zM349.33 45h1v1h-1zM349.33 46h1v1h-1zM349.33 52h1v1h-1zM349.33 53h1v1h-1zM350.33 2h1v2h-1zM350.33 7h1v2h-1zM350.33 11h1v2h-1zM350.33 20h1v1h-1zM350.33 22h1v2h-1zM350.33 30h1v2h-1zM350.33 42h1v1h-1zM350.33 43h1v1h-1zM350.33 45h1v1h-1zM350.33 46h1v1h-1zM351.33 1h1v1h-1zM351.33 2h1v1h-1zM351.33 9h1v1h-1zM351.33 12h1v1h-1zM351.33 14h1v1h-1zM351.33 16h1v2h-1zM351.33 20h1v2h-1zM351.33 23h1v1h-1zM351.33 28h1v2h-1zM351.33 40h1v2h-1zM351.33 42h1v2h-1zM352.33 0h1v1h-1zM352.33 1h1v1h-1zM352.33 4h1v1h-1zM352.33 6h1v2h-1zM352.33 11h1v2h-1zM352.33 13h1v1h-1zM352.33 21h1v1h-1zM352.33 30h1v1h-1zM352.33 35h1v1h-1zM352.33 43h1v1h-1zM352.33 52h1v1h-1zM353.33 1h1v1h-1zM353.33 23h1v1h-1zM353.33 26h1v1h-1zM353.33 27h1v2h-1zM353.33 52h1v1h-1zM354.33 17h1v2h-1zM354.33 20h1v2h-1zM354.33 26h1v1h-1zM354.33 27h1v1h-1zM354.33 49h1v1h-1zM354.33 53h1v1h-1zM355.33 1h1v1h-1zM355.33 2h1v1h-1zM355.33 6h1v2h-1zM355.33 15h1v2h-1zM355.33 32h1v1h-1zM355.33 33h1v1h-1zM355.33 37h1v2h-1zM355.33 44h1v1h-1zM355.33 46h1v2h-1zM355.33 52h1v1h-1zM355.33 53h1v1h-1zM356.33 3h1v2h-1zM356.33 9h1v2h-1zM356.33 12h1v1h-1zM356.33 14h1v1h-1zM356.33 15h1v1h-1zM356.33 32h1v2h-1zM356.33 34h1v1h-1zM356.33 35h1v1h-1zM356.33 36h1v2h-1zM356.33 45h1v1h-1zM357.33 0h1v1h-1zM357.33 6h1v1h-1zM357.33 10h1v1h-1zM357.33 17h1v2h-1zM357.33 22h1v2h-1zM357.33 24h1v1h-1zM357.33 27h1v2h-1zM357.33 32h1v2h-1zM357.33 38h1v1h-1zM357.33 42h1v2h-1zM357.33 44h1v2h-1zM357.33 48h1v2h-1zM357.33 50h1v1h-1zM357.33 53h1v1h-1zM358.33 6h1v1h-1zM358.33 11h1v1h-1zM358.33 17h1v1h-1zM358.33 30h1v2h-1zM358.33 34h1v1h-1zM358.33 42h1v1h-1zM358.33 50h1v1h-1zM358.33 53h1v1h-1zM359.33 2h1v1h-1zM359.33 6h1v1h-1zM359.33 7h1v1h-1zM359.33 8h1v1h-1zM359.33 13h1v2h-1zM359.33 19h1v1h-1zM359.33 26h1v1h-1zM359.33 30h1v1h-1zM359.33 39h1v1h-1zM359.33 47h1v2h-1zM359.33 50h1v1h-1zM359.33 52h1v2h-1zM360.33 2h1v2h-1zM360.33 10h1v1h-1zM360.33 13h1v1h-1zM360.33 16h1v1h-1zM360.33 24h1v1h-1zM360.33 31h1v1h-1zM360.33 32h1v2h-1zM360.33 37h1v1h-1zM360.33 40h1v1h-1zM360.33 49h1v1h-1zM360.33 52h1v2h-1zM361.33 5h1v2h-1zM361.33 7h1v1h-1zM361.33 9h1v1h-1zM361.33 11h1v1h-1zM361.33 20h1v1h-1zM361.33 21h1v1h-1zM361.33 33h1v1h-1zM361.33 40h1v2h-1zM361.33 50h1v2h-1zM362.33 3h1v2h-1zM362.33 7h1v1h-1zM362.33 10h1v1h-1zM362.33 11h1v1h-1zM362.33 21h1v1h-1zM362.33 22h1v1h-1zM362.33 28h1v1h-1zM362.33 29h1v2h-1zM362.33 33h1v2h-1zM362.33 40h1v1h-1zM362.33 47h1v1h-1zM362.33 48h1v1h-1zM363.33 6h1v1h-1zM363.33 15h1v1h-1zM363.33 16h1v2h-1zM363.33 18h1v1h-1zM363.33 19h1v2h-1zM363.33 40h1v2h-1zM363.33 44h1v1h-1zM363.33 52h1v1h-1zM364.33 9h1v1h-1zM364.33 10h1v2h-1zM364.33 29h1v1h-1zM364.33 30h1v2h-1zM364.33 34h1v2h-1zM364.33 37h1v1h-1zM364.33 42h1v2h-1zM364.33 44h1v1h-1zM364.33 48h1v1h-1zM364.33 49h1v1h-1zM365.33 4h1v1h-1zM365.33 8h1v1h-1zM365.33 29h1v1h-1zM365.33 35h1v1h-1zM365.33 42h1v1h-1zM365.33 44h1v1h-1zM365.33 49h1v1h-1zM365.33 51h1v1h-1zM366.33 2h1v1h-1zM366.33 30h1v1h-1zM366.33 31h1v2h-1zM366.33 49h1v2h-1zM366.33 53h1v1h-1zM367.33 2h1v2h-1zM367.33 8h1v1h-1zM367.33 17h1v1h-1zM367.33 19h1v1h-1zM367.33 20h1v2h-1zM367.33 23h1v2h-1zM367.33 35h1v1h-1zM367.33 38h1v1h-1zM368.33 23h1v1h-1zM368.33 30h1v1h-1zM368.33 33h1v1h-1zM368.33 39h1v1h-1zM368.33 44h1v1h-1zM369.33 1h1v1h-1zM369.33 18h1v1h-1zM369.33 20h1v1h-1zM369.33 23h1v1h-1zM369.33 25h1v1h-1zM369.33 28h1v2h-1zM369.33 35h1v1h-1zM369.33 36h1v1h-1zM369.33 44h1v1h-1zM369.33 48h1v1h-1zM370.33 8h1v1h-1zM370.33 30h1v1h-1zM370.33 33h1v1h-1zM370.33 38h1v1h-1zM370.33 43h1v2h-1zM370.33 53h1v1h-1zM371.33 2h1v1h-1zM371.33 6h1v1h-1zM371.33 8h1v1h-1zM371.33 9h1v1h-1zM371.33 12h1v2h-1zM371.33 17h1v1h-1zM371.33 22h1v1h-1zM371.33 28h1v2h-1zM371.33 30h1v2h-1zM371.33 41h1v2h-1zM371.33 48h1v1h-1zM371.33 51h1v1h-1zM371.33 52h1v2h-1zM372.33 11h1v2h-1zM372.33 18h1v2h-1zM372.33 20h1v1h-1zM372.33 27h1v1h-1zM372.33 33h1v1h-1zM372.33 36h1v1h-1zM372.33 38h1v2h-1zM372.33 40h1v1h-1zM372.33 41h1v1h-1zM372.33 49h1v1h-1zM373.33 0h1v1h-1zM373.33 1h1v2h-1zM373.33 3h1v2h-1zM373.33 8h1v1h-1zM373.33 20h1v2h-1zM373.33 24h1v2h-1zM373.33 26h1v2h-1zM373.33 42h1v2h-1zM373.33 49h1v2h-1zM374.33 3h1v1h-1zM374.33 19h1v1h-1zM374.33 21h1v2h-1zM374.33 35h1v1h-1zM374.33 48h1v1h-1zM374.33 49h1v2h-1zM375.33 14h1v1h-1zM375.33 18h1v1h-1zM375.33 20h1v1h-1zM375.33 22h1v1h-1zM375.33 23h1v2h-1zM375.33 29h1v1h-1zM375.33 35h1v2h-1zM375.33 51h1v2h-1zM376.33 10h1v1h-1zM376.33 19h1v1h-1zM376.33 27h1v2h-1zM376.33 30h1v2h-1zM376.33 32h1v2h-1zM376.33 36h1v1h-1zM376.33 37h1v1h-1zM376.33 39h1v1h-1zM376.33 46h1v2h-1zM376.33 49h1v2h-1zM376.33 51h1v1h-1zM377.33 2h1v2h-1zM377.33 14h1v2h-1zM377.33 19h1v2h-1zM377.33 27h1v2h-1zM377.33 35h1v1h-1zM377.33 40h1v1h-1zM377.33 43h1v1h-1zM377.33 47h1v1h-1zM378.33 0h1v2h-1zM378.33 2h1v1h-1zM378.33 13h1v1h-1zM378.33 14h1v2h-1zM378.33 17h1v1h-1zM378.33 24h1v1h-1zM378.33 28h1v1h-1zM378.33 30h1v2h-1zM378.33 38h1v1h-1zM378.33 45h1v2h-1zM379.33 14h1v1h-1zM379.33 15h1v2h-1zM379.33 21h1v1h-1zM379.33 28h1v2h-1zM379.33 31h1v1h-1zM379.33 32h1v1h-1zM379.33 34h1v1h-1zM379.33 36h1v1h-1zM379.33 39h1v2h-1zM379.33 48h1v1h-1zM380.33 0h1v1h-1zM380.33 3h1v2h-1zM380.33 5h1v1h-1zM380.33 15h1v1h-1zM380.33 19h1v1h-1zM380.33 30h1v1h-1zM380.33 38h1v1h-1zM380.33 43h1v2h-1zM380.33 48h1v1h-1zM381.33 1h1v1h-1zM381.33 10h1v1h-1zM381.33 12h1v1h-1zM381.33 14h1v1h-1zM381.33 24h1v1h-1zM381.33 26h1v1h-1zM381.33 34h1v2h-1zM381.33 36h1v1h-1zM381.33 48h1v1h-1zM381.33 49h1v1h-1zM381.33 50h1v2h-1zM382.33 0h1v1h-1zM382.33 2h1v1h-1zM382.33 3h1v2h-1zM382.33 18h1v1h-1zM382.33 23h1v1h-1zM382.33 24h1v1h-1zM382.33 27h1v1h-1zM382.33 39h1v1h-1zM382.33 44h1v2h-1zM382.33 46h1v1h-1zM383.33 0h1v1h-1zM383.33 1h1v1h-1zM383.33 8h1v2h-1zM383.33 10h1v1h-1zM383.33 11h1v2h-1zM383.33 15h1v2h-1zM383.33 25h1v1h-1zM383.33 37h1v1h-1zM383.33 39h1v2h-1zM383.33 48h1v2h-1zM383.33 51h1v2h-1zM384.33 3h1v2h-1zM384.33 12h1v2h-1zM384.33 14h1v2h-1zM384.33 16h1v1h-1zM384.33 20h1v1h-1zM384.33 29h1v2h-1zM384.33 42h1v1h-1zM384.33 44h1v1h-1zM384.33 45h1v2h-1zM384.33 51h1v1h-1zM384.33 52h1v1h-1zM384.33 53h1v1h-1zM385.33 1h1v1h-1zM385.33 5h1v1h-1zM385.33 8h1v1h-1zM385.33 10h1v1h-1zM385.33 15h1v2h-1zM385.33 19h1v1h-1zM385.33 25h1v1h-1zM385.33 29h1v2h-1zM385.33 34h1v1h-1zM385.33 38h1v1h-1zM385.33 39h1v2h-1zM385.33 45h1v1h-1zM385.33 48h1v1h-1zM386.33 3h1v1h-1zM386.33 17h1v1h-1zM386.33 18h1v2h-1zM386.33 25h1v2h-1zM386.33 33h1v1h-1zM386.33 48h1v1h-1zM387.33 1h1v1h-1zM387.33 2h1v1h-1zM387.33 3h1v1h-1zM387.33 20h1v2h-1zM387.33 25h1v2h-1zM387.33 28h1v2h-1zM387.33 33h1v2h-1zM387.33 37h1v1h-1zM387.33 47h1v1h-1zM387.33 52h1v1h-1zM388.33 8h1v2h-1zM388.33 10h1v1h-1zM388.33 14h1v1h-1zM388.33 17h1v2h-1zM388.33 19h1v1h-1zM388.33 28h1v1h-1zM388.33 33h1v1h-1zM388.33 42h1v1h-1zM388.33 46h1v2h-1zM388.33 48h1v1h-1zM388.33 49h1v1h-1zM389.33 0h1v1h-1zM389.33 1h1v2h-1zM389.33 14h1v2h-1zM389.33 21h1v1h-1zM389.33 22h1v1h-1zM389.33 23h1v1h-1zM389.33 25h1v1h-1zM389.33 29h1v1h-1zM389.33 31h1v2h-1zM389.33 45h1v2h-1zM389.33 50h1v2h-1zM390.33 5h1v1h-1zM390.33 12h1v2h-1zM390.33 14h1v2h-1zM390.33 19h1v2h-1zM390.33 21h1v2h-1zM390.33 28h1v1h-1zM390.33 36h1v2h-1zM390.33 44h1v1h-1zM390.33 46h1v1h-1zM390.33 48h1v2h-1zM390.33 50h1v1h-1zM391.33 3h1v1h-1zM391.33 17h1v1h-1zM391.33 22h1v1h-1zM391.33 25h1v2h-1zM391.33 27h1v2h-1zM391.33 31h1v2h-1zM391.33 52h1v1h-1zM392.33 7h1v1h-1zM392.33 11h1v1h-1zM392.33 12h1v1h-1zM392.33 16h1v1h-1zM392.33 19h1v1h-1zM392.33 22h1v1h-1zM392.33 26h1v1h-1zM392.33 28h1v2h-1zM392.33 33h1v1h-1zM392.33 34h1v1h-1zM392.33 36h1v1h-1zM392.33 52h1v2h-1zM393.33 6h1v1h-1zM393.33 9h1v1h-1zM393.33 22h1v2h-1zM393.33 27h1v1h-1zM393.33 28h1v1h-1zM393.33 30h1v2h-1zM393.33 33h1v1h-1zM393.33 34h1v1h-1zM393.33 39h1v2h-1zM393.33 43h1v2h-1zM393.33 52h1v2h-1zM394.33 0h1v1h-1zM394.33 1h1v2h-1zM394.33 13h1v1h-1zM394.33 21h1v1h-1zM394.33 23h1v1h-1zM394.33 24h1v1h-1zM394.33 27h1v1h-1zM394.33 28h1v1h-1zM394.33 33h1v1h-1zM394.33 34h1v1h-1zM394.33 40h1v1h-1zM394.33 41h1v1h-1zM394.33 42h1v1h-1zM394.33 44h1v2h-1zM394.33 48h1v1h-1zM395.33 11h1v2h-1zM395.33 13h1v1h-1zM395.33 14h1v1h-1zM395.33 15h1v2h-1zM395.33 29h1v2h-1zM395.33 35h1v1h-1zM395.33 36h1v1h-1zM395.33 41h1v1h-1zM395.33 42h1v2h-1zM395.33 44h1v2h-1zM395.33 47h1v1h-1zM395.33 52h1v1h-1zM395.33 53h1v1h-1zM396.33 0h1v1h-1zM396.33 3h1v1h-1zM396.33 7h1v1h-1zM396.33 14h1v1h-1zM396.33 15h1v2h-1zM396.33 22h1v2h-1zM396.33 25h1v1h-1zM396.33 28h1v2h-1zM396.33 37h1v2h-1zM396.33 39h1v1h-1zM396.33 51h1v2h-1zM397.33 5h1v1h-1zM397.33 6h1v1h-1zM397.33 15h1v1h-1zM397.33 29h1v1h-1zM397.33 33h1v1h-1zM397.33 34h1v1h-1zM397.33 37h1v1h-1zM397.33 38h1v1h-1zM397.33 39h1v2h-1zM397.33 49h1v1h-1zM398.33 0h1v1h-1zM398.33 2h1v1h-1zM398.33 6h1v1h-1zM398.33 7h1v1h-1zM398.33 13h1v2h-1zM398.33 16h1v1h-1zM398.33 17h1v1h-1zM398.33 19h1v1h-1zM398.33 21h1v1h-1zM398.33 22h1v1h-1zM398.33 23h1v2h-1zM398.33 26h1v2h-1zM398.33 34h1v1h-1zM398.33 35h1v1h-1zM398.33 36h1v1h-1zM398.33 37h1v1h-1zM398.33 45h1v1h-1zM398.33 53h1v1h-1zM399.33 2h1v1h-1zM399.33 4h1v2h-1zM399.33 9h1v1h-1zM399.33 12h1v2h-1zM399.33 17h1v2h-1zM399.33 19h1v2h-1zM399.33 24h1v1h-1zM399.33 33h1v2h-1zM399.33 41h1v1h-1zM399.33 43h1v1h-1zM399.33 44h1v2h-1zM399.33 52h1v1h-1zM400.33 1h1v2h-1zM400.33 16h1v2h-1zM400.33 27h1v1h-1zM400.33 37h1v1h-1zM401.33 10h1v1h-1zM401.33 16h1v1h-1zM401.33 19h1v1h-1zM401.33 22h1v2h-1zM401.33 26h1v2h-1zM401.33 28h1v1h-1zM401.33 29h1v1h-1zM401.33 34h1v1h-1zM401.33 37h1v2h-1zM401.33 39h1v1h-1zM401.33 43h1v2h-1zM401.33 46h1v1h-1zM402.33 7h1v2h-1zM402.33 34h1v2h-1zM402.33 36h1v1h-1zM402.33 46h1v2h-1zM403.33 4h1v1h-1zM403.33 13h1v1h-1zM403.33 22h1v1h-1zM403.33 32h1v1h-1zM403.33 37h1v1h-1zM403.33 45h1v2h-1zM403.33 47h1v1h-1zM403.33 48h1v1h-1zM403.33 50h1v1h-1zM404.33 2h1v1h-1zM404.33 3h1v1h-1zM404.33 15h1v1h-1zM404.33 16h1v1h-1zM404.33 20h1v1h-1zM404.33 27h1v2h-1zM404.33 30h1v2h-1zM404.33 36h1v1h-1zM404.33 40h1v1h-1zM404.33 49h1v2h-1zM405.33 0h1v1h-1zM405.33 4h1v1h-1zM405.33 5h1v2h-1zM405.33 7h1v1h-1zM405.33 11h1v1h-1zM405.33 14h1v1h-1zM405.33 15h1v2h-1zM405.33 17h1v1h-1zM405.33 26h1v2h-1zM405.33 32h1v1h-1zM405.33 37h1v1h-1zM405.33 41h1v2h-1zM405.33 53h1v1h-1zM406.33 9h1v1h-1zM406.33 20h1v1h-1zM406.33 24h1v1h-1zM406.33 26h1v1h-1zM406.33 29h1v1h-1zM406.33 31h1v2h-1zM406.33 37h1v1h-1zM406.33 40h1v1h-1zM406.33 41h1v2h-1zM406.33 48h1v1h-1zM406.33 49h1v1h-1zM406.33 52h1v1h-1zM407.33 2h1v2h-1zM407.33 5h1v1h-1zM407.33 15h1v1h-1zM407.33 16h1v1h-1zM407.33 18h1v2h-1zM407.33 27h1v1h-1zM407.33 38h1v1h-1zM407.33 39h1v2h-1zM407.33 49h1v1h-1zM407.33 51h1v1h-1zM407.33 52h1v1h-1zM408.33 1h1v1h-1zM408.33 8h1v1h-1zM408.33 13h1v1h-1zM408.33 14h1v2h-1zM408.33 18h1v2h-1zM408.33 31h1v1h-1zM408.33 39h1v1h-1zM408.33 41h1v1h-1zM408.33 51h1v2h-1zM408.33 53h1v1h-1zM409.33 7h1v1h-1zM409.33 9h1v1h-1zM409.33 10h1v1h-1zM409.33 14h1v1h-1zM409.33 18h1v1h-1zM409.33 20h1v2h-1zM409.33 35h1v1h-1zM409.33 46h1v1h-1zM410.33 8h1v2h-1zM410.33 15h1v2h-1zM410.33 27h1v2h-1zM410.33 31h1v2h-1zM410.33 38h1v2h-1zM410.33 42h1v2h-1zM410.33 44h1v1h-1zM410.33 49h1v2h-1zM410.33 51h1v1h-1zM411.33 3h1v1h-1zM411.33 5h1v2h-1zM411.33 7h1v1h-1zM411.33 8h1v1h-1zM411.33 13h1v1h-1zM411.33 16h1v2h-1zM411.33 19h1v1h-1zM411.33 26h1v2h-1zM411.33 28h1v1h-1zM411.33 31h1v1h-1zM411.33 41h1v1h-1zM412.33 3h1v1h-1zM412.33 10h1v1h-1zM412.33 13h1v1h-1zM412.33 15h1v1h-1zM412.33 27h1v1h-1zM412.33 31h1v1h-1zM412.33 33h1v1h-1zM412.33 34h1v1h-1zM412.33 38h1v2h-1zM412.33 42h1v2h-1zM413.33 13h1v2h-1zM413.33 15h1v2h-1zM413.33 29h1v1h-1zM413.33 30h1v1h-1zM413.33 31h1v1h-1zM413.33 36h1v1h-1zM413.33 41h1v1h-1zM413.33 42h1v2h-1zM413.33 44h1v2h-1zM413.33 46h1v2h-1zM414.33 0h1v2h-1zM414.33 2h1v1h-1zM414.33 6h1v2h-1zM414.33 8h1v2h-1zM414.33 10h1v1h-1zM414.33 24h1v1h-1zM414.33 25h1v1h-1zM414.33 37h1v1h-1zM414.33 39h1v1h-1zM414.33 52h1v1h-1zM415.33 7h1v1h-1zM415.33 8h1v1h-1zM415.33 9h1v1h-1zM415.33 10h1v2h-1zM415.33 14h1v2h-1zM415.33 17h1v1h-1zM415.33 18h1v1h-1zM415.33 20h1v1h-1zM415.33 24h1v2h-1zM415.33 29h1v1h-1zM415.33 33h1v1h-1zM415.33 49h1v1h-1zM416.33 0h1v1h-1zM416.33 1h1v2h-1zM416.33 4h1v1h-1zM416.33 5h1v2h-1zM416.33 11h1v1h-1zM416.33 12h1v2h-1zM416.33 14h1v1h-1zM416.33 15h1v2h-1zM416.33 17h1v1h-1zM416.33 18h1v1h-1zM416.33 24h1v2h-1zM416.33 40h1v1h-1zM416.33 42h1v2h-1zM416.33 47h1v1h-1zM417.33 17h1v1h-1zM417.33 21h1v2h-1zM417.33 33h1v1h-1zM417.33 35h1v1h-1zM417.33 43h1v2h-1zM417.33 48h1v1h-1zM418.33 2h1v1h-1zM418.33 3h1v2h-1zM418.33 29h1v1h-1zM418.33 41h1v1h-1zM418.33 46h1v1h-1zM418.33 47h1v2h-1zM418.33 49h1v2h-1zM419.33 9h1v1h-1zM419.33 10h1v1h-1zM419.33 11h1v1h-1zM419.33 12h1v2h-1zM419.33 14h1v1h-1zM419.33 17h1v1h-1zM419.33 32h1v1h-1zM419.33 33h1v1h-1zM419.33 42h1v1h-1zM419.33 47h1v1h-1zM419.33 49h1v1h-1zM419.33 51h1v1h-1zM420.33 7h1v1h-1zM420.33 10h1v1h-1zM420.33 15h1v1h-1zM420.33 20h1v1h-1zM420.33 29h1v1h-1zM420.33 30h1v1h-1zM420.33 37h1v1h-1zM420.33 38h1v1h-1zM420.33 44h1v1h-1zM421.33 5h1v1h-1zM421.33 6h1v2h-1zM421.33 16h1v1h-1zM421.33 21h1v1h-1zM421.33 24h1v1h-1zM421.33 38h1v1h-1zM421.33 41h1v1h-1zM421.33 42h1v1h-1zM421.33 51h1v2h-1zM422.33 2h1v2h-1zM422.33 14h1v2h-1zM422.33 16h1v1h-1zM422.33 19h1v1h-1zM422.33 24h1v2h-1zM422.33 28h1v1h-1zM422.33 38h1v2h-1zM422.33 44h1v2h-1zM422.33 47h1v1h-1zM422.33 51h1v2h-1zM423.33 11h1v2h-1zM423.33 16h1v1h-1zM423.33 30h1v1h-1zM423.33 31h1v2h-1zM423.33 38h1v1h-1zM423.33 39h1v1h-1zM423.33 40h1v2h-1zM423.33 44h1v2h-1zM424.33 9h1v1h-1zM424.33 17h1v1h-1zM424.33 18h1v1h-1zM424.33 20h1v1h-1zM424.33 21h1v2h-1zM424.33 23h1v2h-1zM424.33 27h1v1h-1zM424.33 28h1v2h-1zM424.33 36h1v1h-1zM424.33 45h1v1h-1zM424.33 51h1v1h-1zM424.33 53h1v1h-1zM425.33 0h1v1h-1zM425.33 1h1v2h-1zM425.33 9h1v1h-1zM425.33 18h1v1h-1zM425.33 26h1v1h-1zM425.33 33h1v2h-1zM425.33 41h1v1h-1zM425.33 43h1v1h-1zM425.33 46h1v1h-1zM425.33 47h1v1h-1zM425.33 49h1v1h-1zM425.33 53h1v1h-1zM426.33 9h1v1h-1zM426.33 10h1v2h-1zM426.33 14h1v2h-1zM426.33 20h1v1h-1zM426.33 32h1v2h-1zM426.33 34h1v1h-1zM426.33 39h1v2h-1zM426.33 47h1v1h-1zM426.33 52h1v1h-1zM427.33 2h1v1h-1zM427.33 11h1v1h-1zM427.33 21h1v1h-1zM427.33 24h1v2h-1zM427.33 26h1v1h-1zM427.33 45h1v1h-1zM427.33 51h1v1h-1zM427.33 52h1v2h-1zM428.33 3h1v2h-1zM428.33 8h1v1h-1zM428.33 12h1v2h-1zM428.33 18h1v1h-1zM428.33 22h1v1h-1zM428.33 24h1v1h-1zM428.33 28h1v2h-1zM428.33 46h1v2h-1zM428.33 51h1v1h-1zM428.33 52h1v1h-1zM428.33 53h1v1h-1zM429.33 0h1v2h-1zM429.33 9h1v2h-1zM429.33 12h1v2h-1zM429.33 16h1v1h-1zM429.33 19h1v1h-1zM429.33 20h1v2h-1zM429.33 23h1v1h-1zM429.33 31h1v1h-1zM429.33 34h1v1h-1zM429.33 37h1v1h-1zM429.33 48h1v2h-1zM430.33 3h1v2h-1zM430.33 10h1v1h-1zM430.33 14h1v1h-1zM430.33 18h1v2h-1zM430.33 20h1v1h-1zM430.33 22h1v1h-1zM430.33 29h1v2h-1zM430.33 53h1v1h-1zM431.33 2h1v1h-1zM431.33 7h1v1h-1zM431.33 24h1v1h-1zM431.33 30h1v1h-1zM431.33 39h1v1h-1zM431.33 45h1v1h-1zM431.33 47h1v2h-1zM431.33 49h1v1h-1zM431.33 50h1v2h-1zM432.33 1h1v1h-1zM432.33 14h1v2h-1zM432.33 16h1v1h-1zM432.33 22h1v1h-1zM432.33 23h1v1h-1zM432.33 24h1v1h-1zM432.33 25h1v1h-1zM432.33 31h1v1h-1zM432.33 38h1v1h-1zM432.33 39h1v2h-1zM432.33 48h1v1h-1zM432.33 50h1v2h-1zM432.33 53h1v1h-1zM433.33 1h1v2h-1zM433.33 3h1v1h-1zM433.33 9h1v1h-1zM433.33 11h1v1h-1zM433.33 32h1v2h-1zM433.33 36h1v1h-1zM433.33 45h1v1h-1zM434.33 4h1v1h-1zM434.33 7h1v2h-1zM434.33 28h1v1h-1zM434.33 29h1v2h-1zM434.33 37h1v1h-1zM434.33 43h1v1h-1zM434.33 44h1v1h-1zM434.33 46h1v1h-1zM434.33 49h1v2h-1zM435.33 1h1v1h-1zM435.33 8h1v1h-1zM435.33 18h1v2h-1zM435.33 25h1v2h-1zM435.33 27h1v2h-1zM435.33 30h1v2h-1zM435.33 41h1v2h-1zM435.33 47h1v1h-1zM435.33 53h1v1h-1z"/>
<path fill="#ffcc00" d="M112 1h1v1h-1zM112 5h1v1h-1zM112 6h1v1h-1zM112 10h1v1h-1zM112 11h1v1h-1zM112 13h1v1h-1zM112 17h1v1h-1zM112 19h1v1h-1zM112 26h1v1h-1zM112 28h1v1h-1zM112 44h1v1h-1zM112 48h1v2h-1zM112 53h1v1h-1zM113 2h1v1h-1zM113 4h1v1h-1zM113 5h1v2h-1zM113 7h1v1h-1zM113 8h1v2h-1zM113 17h1v1h-1zM113 18h1v2h-1zM113 21h1v1h-1zM113 22h1v1h-1zM113 24h1v1h-1zM113 25h1v2h-1zM113 27h1v1h-1zM113 30h1v2h-1zM113 32h1v1h-1zM113 35h1v1h-1zM113 42h1v2h-1zM113 47h1v1h-1zM113 51h1v1h-1zM113 52h1v1h-1zM114 0h1v2h-1zM114 4h1v2h-1zM114 6h1v1h-1zM114 8h1v1h-1zM114 9h1v2h-1zM114 27h1v2h-1zM114 30h1v1h-1zM114 49h1v1h-1zM115 0h1v1h-1zM115 9h1v2h-1zM115 14h1v1h-1zM115 15h1v1h-1zM115 17h1v1h-1zM115 19h1v1h-1zM115 20h1v1h-1zM115 23h1v1h-1zM115 27h1v1h-1zM115 37h1v1h-1zM115 43h1v2h-1zM115 53h1v1h-1zM116 3h1v1h-1zM116 4h1v1h-1zM116 6h1v1h-1zM116 7h1v1h-1zM116 10h1v1h-1zM116 12h1v2h-1zM116 14h1v2h-1zM116 21h1v1h-1zM116 24h1v1h-1zM116 29h1v1h-1zM116 45h1v1h-1zM116 46h1v2h-1zM116 48h1v2h-1zM116 52h1v1h-1zM117 1h1v1h-1zM117 3h1v2h-1zM117 7h1v1h-1zM117 10h1v1h-1zM117 15h1v1h-1zM117 20h1v1h-1zM117 23h1v1h-1zM117 49h1v2h-1zM118 2h1v1h-1zM118 3h1v1h-1zM118 10h1v1h-1zM118 15h1v2h-1zM118 17h1v2h-1zM118 30h1v2h-1zM118 47h1v1h-1zM119 20h1v1h-1zM119 24h1v1h-1zM119 28h1v1h-1zM119 33h1v1h-1zM119 51h1v1h-1zM120 0h1v1h-1zM120 2h1v1h-1zM120 3h1v2h-1zM120 12h1v1h-1zM120 14h1v2h-1zM120 23h1v2h-1zM120 25h1v1h-1zM120 31h1v1h-1zM120 32h1v2h-1zM120 43h1v1h-1zM120 44h1v1h-1zM120 53h1v1h-1zM121 2h1v2h-1zM121 17h1v1h-1zM121 19h1v1h-1zM121 23h1v1h-1zM121 24h1v2h-1zM121 32h1v1h-1zM121 33h1v1h-1zM121 36h1v1h-1zM121 38h1v2h-1zM121 40h1v1h-1zM121 41h1v1h-1zM121 43h1v1h-1zM122 2h1v1h-1zM122 3h1v1h-1zM122 6h1v1h-1zM122 7h1v1h-1zM122 8h1v1h-1zM122 12h1v1h-1zM122 15h1v1h-1zM122 19h1v2h-1zM122 21h1v1h-1zM122 22h1v1h-1zM122 23h1v2h-1zM122 25h1v2h-1zM122 31h1v2h-1zM122 33h1v1h-1zM122 36h1v2h-1zM122 38h1v1h-1zM122 39h1v1h-1zM122 40h1v1h-1zM122 44h1v1h-1zM122 45h1v1h-1zM122 47h1v1h-1zM122 48h1v1h-1zM122 49h1v1h-1zM122 51h1v1h-1zM123 4h1v2h-1zM123 9h1v1h-1zM123 12h1v1h-1zM123 13h1v1h-1zM123 15h1v1h-1zM123 17h1v1h-1zM123 18h1v2h-1zM123 21h1v2h-1zM123 32h1v2h-1zM123 36h1v1h-1zM123 41h1v2h-1zM123 53h1v1h-1zM124 12h1v1h-1zM124 20h1v1h-1zM124 21h1v1h-1zM124 31h1v1h-1zM124 33h1v1h-1zM124 34h1v1h-1zM124 40h1v2h-1zM124 46h1v1h-1zM125 2h1v1h-1zM125 3h1v1h-1zM125 16h1v1h-1zM125 18h1v1h-1zM125 21h1v1h-1zM125 22h1v1h-1zM125 30h1v1h-1zM125 37h1v2h-1zM125 40h1v1h-1zM125 41h1v1h-1zM125 43h1v1h-1zM125 46h1v1h-1zM125 49h1v1h-1zM126 5h1v1h-1zM126 6h1v1h-1zM126 7h1v1h-1zM126 8h1v2h-1zM126 13h1v2h-1zM126 15h1v2h-1zM126 27h1v1h-1zM126 28h1v1h-1zM126 33h1v1h-1zM126 39h1v2h-1zM126 42h1v1h-1zM126 43h1v1h-1zM126 44h1v1h-1zM126 48h1v2h-1zM126 52h1v1h-1zM126 53h1v1h-1zM127 1h1v2h-1zM127 5h1v1h-1zM127 10h1v1h-1zM127 11h1v2h-1zM127 19h1v1h-1zM127 25h1v1h-1zM127 29h1v1h-1zM127 41h1v1h-1zM127 47h1v1h-1zM127 51h1v2h-1zM127 53h1v1h-1zM128 2h1v1h-1zM128 9h1v1h-1zM128 13h1v2h-1zM128 22h1v2h-1zM128 30h1v1h-1zM128 36h1v1h-1zM128 50h1v1h-1zM129 1h1v1h-1zM129 3h1v1h-1zM129 7h1v1h-1zM129 8h1v1h-1zM129 12h1v2h-1zM129 15h1v2h-1zM129 17h1v2h-1zM129 19h1v1h-1zM129 24h1v2h-1zM129 28h1v1h-1zM129 31h1v1h-1zM129 36h1v1h-1zM129 46h1v2h-1zM129 48h1v1h-1zM129 51h1v1h-1zM129 53h1v1h-1zM130 0h1v1h-1zM130 3h1v2h-1zM130 8h1v1h-1zM130 9h1v1h-1zM130 13h1v1h-1zM130 15h1v1h-1zM130 19h1v2h-1zM130 22h1v1h-1zM130 25h1v1h-1zM130 38h1v1h-1zM130 44h1v1h-1zM131 2h1v1h-1zM131 5h1v1h-1zM131 6h1v2h-1zM131 8h1v1h-1zM131 13h1v1h-1zM131 19h1v1h-1zM131 20h1v2h-1zM131 31h1v2h-1zM131 37h1v1h-1zM131 39h1v1h-1zM131 49h1v2h-1zM131 52h1v1h-1zM131 53h1v1h-1zM132 1h1v2h-1zM132 9h1v2h-1zM132 20h1v1h-1zM132 22h1v1h-1zM132 25h1v1h-1zM132 26h1v1h-1zM132 36h1v2h-1zM132 38h1v1h-1zM132 39h1v1h-1zM132 43h1v1h-1zM132 45h1v2h-1zM133 2h1v1h-1zM133 7h1v2h-1zM133 9h1v2h-1zM133 11h1v1h-1zM133 12h1v1h-1zM133 14h1v2h-1zM133 18h1v2h-1zM133 21h1v1h-1zM133 28h1v1h-1zM133 36h1v1h-1zM133 51h1v1h-1zM134 0h1v2h-1zM134 2h1v2h-1zM134 6h1v1h-1zM134 20h1v2h-1zM134 25h1v1h-1zM134 27h1v1h-1zM134 40h1v1h-1zM134 49h1v1h-1zM135 0h1v1h-1zM135 2h1v2h-1zM135 9h1v2h-1zM135 13h1v1h-1zM135 20h1v1h-1zM135 22h1v1h-1zM135 32h1v2h-1zM135 35h1v1h-1zM135 38h1v1h-1zM135 43h1v1h-1zM135 44h1v1h-1zM135 45h1v1h-1zM135 48h1v1h-1zM135 51h1v1h-1zM135 53h1v1h-1zM136 0h1v1h-1zM136 6h1v1h-1zM136 8h1v1h-1zM136 9h1v2h-1zM136 17h1v2h-1zM136 32h1v1h-1zM136 35h1v2h-1zM136 38h1v1h-1zM136 40h1v2h-1zM136 42h1v1h-1zM137 3h1v2h-1zM137 5h1v1h-1zM137 6h1v1h-1zM137 11h1v1h-1zM137 12h1v1h-1zM137 13h1v1h-1zM137 14h1v1h-1zM137 21h1v1h-1zM137 22h1v2h-1zM137 26h1v1h-1zM137 43h1v2h-1zM137 45h1v1h-1zM137 47h1v1h-1zM138 1h1v2h-1zM138 7h1v2h-1zM138 13h1v2h-1zM138 24h1v1h-1zM138 34h1v1h-1zM138 36h1v1h-1zM138 38h1v1h-1zM138 53h1v1h-1zM139 0h1v1h-1zM139 4h1v1h-1zM139 10h1v1h-1zM139 19h1v1h-1zM139 24h1v2h-1zM139 26h1v1h-1zM139 27h1v1h-1zM139 32h1v1h-1zM139 46h1v2h-1zM140 1h1v1h-1zM140 4h1v1h-1zM140 7h1v1h-1zM140 13h1v1h-1zM140 24h1v1h-1zM140 25h1v1h-1zM140 27h1v1h-1zM140 37h1v1h-1zM140 38h1v2h-1zM140 40h1v1h-1zM140 49h1v1h-1zM141 7h1v1h-1zM141 9h1v1h-1zM141 10h1v1h-1zM141 11h1v1h-1zM141 12h1v1h-1zM141 15h1v1h-1zM141 23h1v2h-1zM141 26h1v1h-1zM141 30h1v2h-1zM141 36h1v1h-1zM141 39h1v2h-1zM141 45h1v1h-1zM141 46h1v1h-1zM141 48h1v1h-1zM141 51h1v2h-1zM142 13h1v2h-1zM142 17h1v1h-1zM142 19h1v1h-1zM142 21h1v1h-1zM142 22h1v2h-1zM142 25h1v2h-1zM142 45h1v2h-1zM143 20h1v1h-1zM143 24h1v1h-1zM143 36h1v1h-1zM143 37h1v1h-1zM143 39h1v1h-1zM143 41h1v2h-1zM144 2h1v1h-1zM144 15h1v2h-1zM144 22h1v2h-1zM144 24h1v1h-1zM144 33h1v2h-1zM144 37h1v1h-1zM144 44h1v2h-1zM144 47h1v2h-1zM144 53h1v1h-1zM145 2h1v1h-1zM145 7h1v2h-1zM145 14h1v2h-1zM145 16h1v1h-1zM145 18h1v1h-1zM145 19h1v1h-1zM145 20h1v1h-1zM145 22h1v1h-1zM145 23h1v1h-1zM145 36h1v1h-1zM145 38h1v1h-1zM145 41h1v1h-1zM145 47h1v1h-1zM145 51h1v1h-1zM146 1h1v1h-1zM146 13h1v1h-1zM146 14h1v1h-1zM146 15h1v2h-1zM146 18h1v1h-1zM146 28h1v2h-1zM146 34h1v1h-1zM146 38h1v2h-1zM146 42h1v1h-1zM146 53h1v1h-1zM147 0h1v1h-1zM147 8h1v1h-1zM147 14h1v1h-1zM147 15h1v1h-1zM147 18h1v1h-1zM147 19h1v1h-1zM147 20h1v1h-1zM147 23h1v2h-1zM147 26h1v1h-1zM147 27h1v2h-1zM147 30h1v1h-1zM147 39h1v1h-1zM147 44h1v2h-1zM147 51h1v1h-1zM148 1h1v2h-1zM148 5h1v1h-1zM148 8h1v1h-1zM148 13h1v2h-1zM148 18h1v1h-1zM148 19h1v1h-1zM148 23h1v1h-1zM148 25h1v1h-1zM148 31h1v1h-1zM148 46h1v1h-1zM149 11h1v2h-1zM149 14h1v1h-1zM149 22h1v1h-1zM149 26h1v1h-1zM149 30h1v1h-1zM149 32h1v1h-1zM149 35h1v1h-1zM149 37h1v2h-1zM149 43h1v1h-1zM149 46h1v1h-1zM149 48h1v1h-1zM149 50h1v2h-1zM149 52h1v1h-1zM150 1h1v2h-1zM150 3h1v1h-1zM150 4h1v2h-1zM150 11h1v1h-1zM150 15h1v1h-1zM150 16h1v2h-1zM150 21h1v1h-1zM150 23h1v1h-1zM150 26h1v1h-1zM150 29h1v1h-1zM150 31h1v1h-1zM150 33h1v2h-1zM150 36h1v1h-1zM150 39h1v2h-1zM150 45h1v2h-1zM150 49h1v1h-1zM151 1h1v1h-1zM151 9h1v1h-1zM151 10h1v1h-1zM151 26h1v1h-1zM151 31h1v1h-1zM151 34h1v1h-1zM151 39h1v2h-1zM151 44h1v2h-1zM151 46h1v2h-1zM151 48h1v2h-1zM152 0h1v2h-1zM152 4h1v2h-1zM152 17h1v1h-1zM152 18h1v2h-1zM152 25h1v1h-1zM152 29h1v2h-1zM152 31h1v1h-1zM152 33h1v1h-1zM152 39h1v2h-1zM152 42h1v1h-1zM152 45h1v1h-1zM152 46h1v1h-1zM152 48h1v1h-1zM153 0h1v1h-1zM153 3h1v2h-1zM153 8h1v1h-1zM153 13h1v1h-1zM153 14h1v1h-1zM153 21h1v1h-1zM153 25h1v1h-1zM153 28h1v1h-1zM153 37h1v2h-1zM153 39h1v1h-1zM153 41h1v1h-1zM153 44h1v2h-1zM153 46h1v2h-1zM153 52h1v2h-1zM154 0h1v1h-1zM154 7h1v1h-1zM154 8h1v2h-1zM154 10h1v2h-1zM154 15h1v1h-1zM154 17h1v1h-1zM154 29h1v1h-1zM154 32h1v1h-1zM154 33h1v1h-1zM154 35h1v1h-1zM154 36h1v1h-1zM154 37h1v1h-1zM154 40h1v2h-1zM154 44h1v1h-1zM155 9h1v1h-1zM155 10h1v1h-1zM155 17h1v1h-1zM155 28h1v1h-1zM155 30h1v2h-1zM155 34h1v2h-1zM155 37h1v1h-1zM155 38h1v2h-1zM155 42h1v1h-1zM155 43h1v2h-1zM155 48h1v1h-1zM156 5h1v1h-1zM156 8h1v1h-1zM156 14h1v2h-1zM156 16h1v1h-1zM156 17h1v1h-1zM156 23h1v1h-1zM156 32h1v1h-1zM156 34h1v1h-1zM156 38h1v1h-1zM156 41h1v1h-1zM156 47h1v1h-1zM157 10h1v2h-1zM157 15h1v1h-1zM157 20h1v2h-1zM157 24h1v1h-1zM157 28h1v1h-1zM157 34h1v1h-1zM157 38h1v2h-1zM157 40h1v1h-1zM157 41h1v1h-1zM157 44h1v1h-1zM157 45h1v2h-1zM157 51h1v1h-1zM157 52h1v1h-1zM158 9h1v1h-1zM158 25h1v1h-1zM158 26h1v1h-1zM158 27h1v2h-1zM158 41h1v1h-1zM158 45h1v2h-1zM158 49h1v1h-1zM158 53h1v1h-1zM159 4h1v1h-1zM159 5h1v2h-1zM159 24h1v1h-1zM159 28h1v2h-1zM159 32h1v1h-1zM159 33h1v1h-1zM159 40h1v2h-1zM159 44h1v1h-1zM159 45h1v1h-1zM160 5h1v1h-1zM160 12h1v2h-1zM160 19h1v2h-1zM160 30h1v2h-1zM160 34h1v1h-1zM160 35h1v1h-1zM160 36h1v1h-1zM160 40h1v1h-1zM160 46h1v2h-1zM160 48h1v1h-1zM160 50h1v2h-1zM160 53h1v1h-1zM161 0h1v1h-1zM161 3h1v2h-1zM161 5h1v1h-1zM161 6h1v1h-1zM161 13h1v1h-1zM161 15h1v1h-1zM161 17h1v1h-1zM161 19h1v1h-1zM161 22h1v1h-1zM161 26h1v1h-1zM161 36h1v2h-1zM161 41h1v1h-1zM161 42h1v1h-1zM161 44h1v1h-1zM161 47h1v1h-1zM161 52h1v1h-1zM162 4h1v2h-1zM162 6h1v1h-1zM162 8h1v1h-1zM162 11h1v1h-1zM162 12h1v2h-1zM162 14h1v2h-1zM162 17h1v1h-1zM162 18h1v2h-1zM162 21h1v1h-1zM162 25h1v1h-1zM162 27h1v2h-1zM162 32h1v2h-1zM162 40h1v1h-1zM162 44h1v2h-1zM162 50h1v1h-1zM163 2h1v1h-1zM163 9h1v2h-1zM163 12h1v1h-1zM163 14h1v1h-1zM163 15h1v2h-1zM163 17h1v1h-1zM163 21h1v1h-1zM163 22h1v1h-1zM163 28h1v2h-1zM163 31h1v2h-1zM163 37h1v2h-1zM163 48h1v1h-1zM163 52h1v2h-1zM164 0h1v1h-1zM164 2h1v1h-1zM164 13h1v1h-1zM164 15h1v1h-1zM164 21h1v2h-1zM164 23h1v2h-1zM164 27h1v1h-1zM164 33h1v1h-1zM164 47h1v1h-1zM165 3h1v1h-1zM165 8h1v2h-1zM165 10h1v1h-1zM165 23h1v1h-1zM165 26h1v1h-1zM165 31h1v1h-1zM165 43h1v1h-1zM165 48h1v1h-1zM166 14h1v1h-1zM166 15h1v1h-1zM166 17h1v1h-1zM166 24h1v2h-1zM166 34h1v2h-1zM166 41h1v2h-1zM166 44h1v1h-1zM166 46h1v1h-1zM166 47h1v2h-1zM167 7h1v2h-1zM167 12h1v1h-1zM167 14h1v1h-1zM167 19h1v1h-1zM167 20h1v1h-1zM167 22h1v1h-1zM167 23h1v1h-1zM167 27h1v2h-1zM167 30h1v2h-1zM167 34h1v1h-1zM167 39h1v1h-1zM167 41h1v1h-1zM167 52h1v1h-1zM168 5h1v2h-1zM168 10h1v1h-1zM168 18h1v2h-1zM168 23h1v2h-1zM168 26h1v1h-1zM168 27h1v1h-1zM168 32h1v1h-1zM168 33h1v2h-1zM168 46h1v2h-1zM168 49h1v2h-1zM168 51h1v1h-1zM168 52h1v1h-1zM169 0h1v1h-1zM169 4h1v1h-1zM169 6h1v2h-1zM169 11h1v2h-1zM169 13h1v1h-1zM169 14h1v2h-1zM169 20h1v2h-1zM169 34h1v2h-1zM169 42h1v1h-1zM169 50h1v1h-1zM169 51h1v1h-1zM169 52h1v1h-1zM169 53h1v1h-1zM170 0h1v2h-1zM170 2h1v2h-1zM170 6h1v2h-1zM170 10h1v1h-1zM170 28h1v2h-1zM170 35h1v2h-1zM170 45h1v1h-1zM170 46h1v1h-1zM170 47h1v2h-1zM171 3h1v2h-1zM171 5h1v1h-1zM171 6h1v1h-1zM171 13h1v1h-1zM171 14h1v2h-1zM171 25h1v2h-1zM171 27h1v1h-1zM171 41h1v1h-1zM171 51h1v1h-1zM171 53h1v1h-1zM172 2h1v1h-1zM172 3h1v1h-1zM172 6h1v1h-1zM172 7h1v1h-1zM172 11h1v1h-1zM172 16h1v1h-1zM172 27h1v2h-1zM172 35h1v2h-1zM172 40h1v2h-1zM172 51h1v1h-1zM172 52h1v2h-1zM173 6h1v1h-1zM173 7h1v1h-1zM173 15h1v1h-1zM173 20h1v1h-1zM173 21h1v2h-1zM173 27h1v2h-1zM173 36h1v2h-1zM173 38h1v2h-1zM173 42h1v1h-1zM173 45h1v1h-1zM173 46h1v1h-1zM173 50h1v1h-1zM173 51h1v1h-1zM174 5h1v1h-1zM174 7h1v1h-1zM174 8h1v2h-1zM174 12h1v2h-1zM174 15h1v2h-1zM174 17h1v1h-1zM174 23h1v1h-1zM174 33h1v2h-1zM174 37h1v1h-1zM174 42h1v1h-1zM174 43h1v1h-1zM174 44h1v1h-1zM174 45h1v1h-1zM174 46h1v2h-1zM174 51h1v2h-1zM174 53h1v1h-1zM175 0h1v1h-1zM175 3h1v1h-1zM175 4h1v1h-1zM175 7h1v1h-1zM175 12h1v1h-1zM175 14h1v2h-1zM175 16h1v1h-1zM175 18h1v1h-1zM175 27h1v1h-1zM175 33h1v1h-1zM175 39h1v1h-1zM176 0h1v1h-1zM176 5h1v2h-1zM176 10h1v1h-1zM176 11h1v1h-1zM176 12h1v1h-1zM176 14h1v1h-1zM176 16h1v2h-1zM176 19h1v1h-1zM176 23h1v2h-1zM176 25h1v2h-1zM176 31h1v1h-1zM176 33h1v1h-1zM176 34h1v1h-1zM176 36h1v1h-1zM176 42h1v1h-1zM176 44h1v2h-1zM176 46h1v1h-1zM176 50h1v1h-1zM177 7h1v2h-1zM177 9h1v2h-1zM177 11h1v1h-1zM177 14h1v1h-1zM177 16h1v2h-1zM177 18h1v1h-1zM177 27h1v1h-1zM177 31h1v1h-1zM177 37h1v2h-1zM177 41h1v2h-1zM177 45h1v1h-1zM178 2h1v1h-1zM178 17h1v2h-1zM178 19h1v2h-1zM178 27h1v2h-1zM178 31h1v1h-1zM178 33h1v1h-1zM178 37h1v1h-1zM178 38h1v1h-1zM178 52h1v1h-1zM179 10h1v2h-1zM179 18h1v1h-1zM179 19h1v1h-1zM179 20h1v2h-1zM179 25h1v1h-1zM179 26h1v2h-1zM179 29h1v2h-1zM179 31h1v1h-1zM179 37h1v1h-1zM180 0h1v1h-1zM180 7h1v2h-1zM180 13h1v1h-1zM180 21h1v2h-1zM180 28h1v1h-1zM180 35h1v1h-1zM180 36h1v1h-1zM180 38h1v2h-1zM180 50h1v1h-1zM181 2h1v1h-1zM181 7h1v2h-1zM181 12h1v2h-1zM181 14h1v1h-1zM181 18h1v1h-1zM181 22h1v1h-1zM181 28h1v1h-1zM181 29h1v2h-1zM181 31h1v1h-1zM181 35h1v1h-1zM181 36h1v1h-1zM181 39h1v2h-1zM181 46h1v2h-1zM181 49h1v1h-1zM182 2h1v1h-1zM182 4h1v2h-1zM182 8h1v1h-1zM182 25h1v2h-1zM182 27h1v1h-1zM182 31h1v2h-1zM182 33h1v1h-1zM182 34h1v1h-1zM182 40h1v1h-1zM182 41h1v2h-1zM182 49h1v1h-1zM182 51h1v1h-1zM182 52h1v1h-1zM183 23h1v1h-1zM183 25h1v1h-1zM183 27h1v1h-1zM183 30h1v1h-1zM183 43h1v1h-1zM183 47h1v2h-1zM183 50h1v1h-1zM184 6h1v1h-1zM184 13h1v1h-1zM184 18h1v1h-1zM184 22h1v1h-1zM184 25h1v1h-1zM184 32h1v2h-1zM184 34h1v1h-1zM184 36h1v1h-1zM184 38h1v1h-1zM184 48h1v1h-1zM185 2h1v1h-1zM185 3h1v1h-1zM185 8h1v2h-1zM185 16h1v1h-1zM185 17h1v2h-1zM185 21h1v2h-1zM185 37h1v2h-1zM185 40h1v1h-1zM185 44h1v2h-1zM185 46h1v2h-1zM185 48h1v2h-1zM185 50h1v2h-1zM186 1h1v1h-1zM186 2h1v2h-1zM186 4h1v2h-1zM186 7h1v1h-1zM186 8h1v2h-1zM186 11h1v2h-1zM186 13h1v1h-1zM186 16h1v1h-1zM186 19h1v2h-1zM186 25h1v1h-1zM186 29h1v1h-1zM186 32h1v1h-1zM186 44h1v1h-1zM186 46h1v1h-1zM186 47h1v2h-1zM187 3h1v1h-1zM187 5h1v1h-1zM187 6h1v1h-1zM187 13h1v1h-1zM187 16h1v1h-1zM187 23h1v2h-1zM187 29h1v1h-1zM187 32h1v1h-1zM187 39h1v1h-1zM187 48h1v2h-1zM187 52h1v1h-1zM187 53h1v1h-1zM188 0h1v1h-1zM188 5h1v1h-1zM188 11h1v2h-1zM188 34h1v1h-1zM188 35h1v1h-1zM188 39h1v1h-1zM188 40h1v1h-1zM188 41h1v2h-1zM188 43h1v1h-1zM188 45h1v1h-1zM188 51h1v2h-1zM189 0h1v1h-1zM189 1h1v1h-1zM189 5h1v1h-1zM189 19h1v1h-1zM189 25h1v1h-1zM189 27h1v1h-1zM189 33h1v1h-1zM189 34h1v1h-1zM189 35h1v1h-1zM189 36h1v1h-1zM189 39h1v1h-1zM189 40h1v1h-1zM189 47h1v1h-1zM190 6h1v1h-1zM190 11h1v2h-1zM190 22h1v2h-1zM190 27h1v1h-1zM190 29h1v1h-1zM190 30h1v1h-1zM190 41h1v1h-1zM190 52h1v1h-1zM191 10h1v2h-1zM191 14h1v2h-1zM191 16h1v1h-1zM191 17h1v1h-1zM191 18h1v1h-1zM191 20h1v2h-1zM191 24h1v1h-1zM191 29h1v1h-1zM191 37h1v1h-1zM191 40h1v1h-1zM191 46h1v1h-1zM191 50h1v1h-1zM234.33 4h1v2h-1zM234.33 10h1v1h-1zM234.33 18h1v2h-1zM234.33 26h1v1h-1zM234.33 27h1v2h-1zM234.33 36h1v1h-1zM234.33 43h1v1h-1zM234.33 49h1v1h-1zM234.33 50h1v1h-1zM234.33 51h1v1h-1zM235.33 0h1v1h-1zM235.33 6h1v1h-1zM235.33 9h1v1h-1zM235.33 10h1v2h-1zM235.33 14h1v1h-1zM235.33 23h1v1h-1zM235.33 28h1v1h-1zM235.33 29h1v2h-1zM235.33 31h1v1h-1zM235.33 42h1v1h-1zM235.33 46h1v2h-1zM235.33 49h1v1h-1zM235.33 52h1v1h-1zM236.33 0h1v1h-1zM236.33 9h1v1h-1zM236.33 10h1v2h-1zM236.33 12h1v1h-1zM236.33 14h1v1h-1zM236.33 15h1v1h-1zM236.33 17h1v1h-1zM236.33 21h1v1h-1zM236.33 25h1v1h-1zM236.33 31h1v2h-1zM236.33 37h1v1h-1zM236.33 38h1v2h-1zM236.33 40h1v1h-1zM236.33 43h1v1h-1zM236.33 44h1v2h-1zM236.33 46h1v2h-1zM236.33 50h1v1h-1zM236.33 51h1v2h-1zM236.33 53h1v1h-1zM237.33 8h1v1h-1zM237.33 10h1v2h-1zM237.33 15h1v1h-1zM237.33 16h1v1h-1zM237.33 17h1v1h-1zM237.33 19h1v2h-1zM237.33 29h1v1h-1zM237.33 35h1v1h-1zM237.33 42h1v2h-1zM237.33 48h1v1h-1zM238.33 4h1v1h-1zM238.33 5h1v1h-1zM238.33 14h1v2h-1zM238.33 27h1v1h-1zM238.33 38h1v1h-1zM238.33 45h1v2h-1zM238.33 47h1v1h-1zM238.33 49h1v1h-1zM238.33 51h1v1h-1zM239.33 11h1v1h-1zM239.33 14h1v1h-1zM239.33 17h1v1h-1zM239.33 22h1v1h-1zM239.33 25h1v2h-1zM239.33 31h1v1h-1zM239.33 32h1v2h-1zM239.33 38h1v1h-1zM239.33 42h1v2h-1zM239.33 44h1v1h-1zM239.33 53h1v1h-1zM240.33 0h1v1h-1zM240.33 6h1v1h-1zM240.33 10h1v1h-1zM240.33 17h1v1h-1zM240.33 23h1v1h-1zM240.33 24h1v1h-1zM240.33 31h1v2h-1zM240.33 34h1v2h-1zM240.33 37h1v1h-1zM240.33 42h1v1h-1zM240.33 45h1v2h-1zM240.33 47h1v1h-1zM240.33 48h1v1h-1zM240.33 50h1v2h-1zM240.33 53h1v1h-1zM241.33 2h1v1h-1zM241.33 4h1v2h-1zM241.33 8h1v2h-1zM241.33 20h1v1h-1zM241.33 23h1v2h-1zM241.33 30h1v1h-1zM241.33 31h1v1h-1zM241.33 35h1v1h-1zM241.33 37h1v1h-1zM241.33 38h1v2h-1zM241.33 42h1v1h-1zM241.33 46h1v1h-1zM241.33 51h1v1h-1zM242.33 1h1v2h-1zM242.33 10h1v1h-1zM242.33 11h1v1h-1zM242.33 12h1v2h-1zM242.33 16h1v1h-1zM242.33 22h1v2h-1zM242.33 24h1v1h-1zM242.33 31h1v1h-1zM242.33 33h1v1h-1zM242.33 34h1v1h-1zM242.33 38h1v1h-1zM242.33 45h1v1h-1zM243.33 3h1v1h-1zM243.33 6h1v1h-1zM243.33 7h1v2h-1zM243.33 11h1v2h-1zM243.33 14h1v1h-1zM243.33 17h1v1h-1zM243.33 29h1v2h-1zM243.33 36h1v1h-1zM243.33 37h1v1h-1zM243.33 38h1v1h-1zM243.33 39h1v1h-1zM243.33 40h1v1h-1zM243.33 42h1v2h-1zM243.33 44h1v1h-1zM244.33 5h1v2h-1zM244.33 7h1v2h-1zM244.33 12h1v2h-1zM244.33 17h1v1h-1zM244.33 19h1v1h-1zM244.33 24h1v2h-1zM244.33 26h1v1h-1zM244.33 30h1v1h-1zM244.33 32h1v1h-1zM244.33 35h1v1h-1zM244.33 38h1v1h-1zM244.33 39h1v1h-1zM244.33 40h1v1h-1zM244.33 41h1v2h-1zM244.33 49h1v1h-1zM245.33 0h1v1h-1zM245.33 3h1v1h-1zM245.33 4h1v1h-1zM245.33 10h1v1h-1zM245.33 12h1v1h-1zM245.33 13h1v2h-1zM245.33 18h1v2h-1zM245.33 20h1v2h-1zM245.33 27h1v1h-1zM245.33 29h1v1h-1zM245.33 31h1v1h-1zM245.33 37h1v1h-1zM245.33 51h1v1h-1zM246.33 0h1v1h-1zM246.33 1h1v1h-1zM246.33 3h1v1h-1zM246.33 4h1v1h-1zM246.33 15h1v2h-1zM246.33 21h1v1h-1zM246.33 22h1v2h-1zM246.33 24h1v2h-1zM246.33 28h1v2h-1zM246.33 40h1v1h-1zM246.33 46h1v2h-1zM246.33 49h1v2h-1zM247.33 0h1v1h-1zM247.33 1h1v1h-1zM247.33 6h1v1h-1zM247.33 10h1v1h-1zM247.33 14h1v2h-1zM247.33 17h1v1h-1zM247.33 18h1v1h-1zM247.33 21h1v1h-1zM247.33 31h1v1h-1zM247.33 34h1v1h-1zM247.33 46h1v1h-1zM247.33 48h1v1h-1zM247.33 51h1v1h-1zM248.33 1h1v1h-1zM248.33 2h1v1h-1zM248.33 4h1v1h-1zM248.33 8h1v1h-1zM248.33 12h1v1h-1zM248.33 18h1v1h-1zM248.33 20h1v1h-1zM248.33 21h1v2h-1zM248.33 32h1v1h-1zM248.33 50h1v1h-1zM248.33 52h1v1h-1zM248.33 53h1v1h-1zM249.33 1h1v1h-1zM249.33 2h1v1h-1zM249.33 10h1v1h-1zM249.33 16h1v1h-1zM249.33 21h1v1h-1zM249.33 25h1v2h-1zM249.33 27h1v2h-1zM249.33 36h1v2h-1zM249.33 39h1v2h-1zM249.33 41h1v2h-1zM249.33 46h1v1h-1zM249.33 51h1v1h-1zM250.33 1h1v1h-1zM250.33 2h1v2h-1zM250.33 11h1v2h-1zM250.33 14h1v1h-1zM250.33 25h1v2h-1zM250.33 27h1v2h-1zM250.33 29h1v1h-1zM250.33 31h1v1h-1zM250.33 35h1v1h-1zM250.33 36h1v1h-1zM250.33 41h1v1h-1zM250.33 49h1v1h-1zM251.33 0h1v1h-1zM251.33 22h1v1h-1zM251.33 23h1v1h-1zM251.33 26h1v1h-1zM251.33 35h1v2h-1zM251.33 39h1v1h-1zM251.33 43h1v2h-1zM251.33 45h1v2h-1zM251.33 52h1v1h-1zM251.33 53h1v1h-1zM252.33 1h1v2h-1zM252.33 4h1v1h-1zM252.33 5h1v1h-1zM252.33 6h1v1h-1zM252.33 9h1v1h-1zM252.33 29h1v1h-1zM252.33 30h1v2h-1zM252.33 32h1v1h-1zM252.33 33h1v1h-1zM252.33 39h1v2h-1zM252.33 41h1v2h-1zM252.33 43h1v1h-1zM252.33 44h1v1h-1zM252.33 49h1v2h-1zM253.33 0h1v1h-1zM253.33 1h1v1h-1zM253.33 2h1v1h-1zM253.33 5h1v1h-1zM253.33 7h1v2h-1zM253.33 13h1v2h-1zM253.33 19h1v2h-1zM253.33 21h1v1h-1zM253.33 23h1v1h-1zM253.33 24h1v2h-1zM253.33 32h1v1h-1zM253.33 37h1v1h-1zM253.33 46h1v2h-1zM253.33 50h1v1h-1zM254.33 5h1v2h-1zM254.33 14h1v1h-1zM254.33 18h1v2h-1zM254.33 38h1v1h-1zM254.33 39h1v1h-1zM254.33 50h1v2h-1zM255.33 1h1v1h-1zM255.33 5h1v1h-1zM255.33 8h1v1h-1zM255.33 9h1v1h-1zM255.33 18h1v1h-1zM255.33 19h1v1h-1zM255.33 27h1v1h-1zM255.33 37h1v2h-1zM255.33 40h1v1h-1zM255.33 49h1v1h-1zM255.33 50h1v1h-1zM255.33 51h1v1h-1zM255.33 52h1v1h-1zM256.33 6h1v1h-1zM256.33 7h1v2h-1zM256.33 9h1v1h-1zM256.33 11h1v1h-1zM256.33 12h1v1h-1zM256.33 13h1v1h-1zM256.33 22h1v1h-1zM256.33 28h1v1h-1zM256.33 31h1v2h-1zM256.33 39h1v1h-1zM256.33 40h1v1h-1zM256.33 44h1v1h-1zM256.33 50h1v2h-1zM257.33 2h1v1h-1zM257.33 8h1v2h-1zM257.33 10h1v2h-1zM257.33 17h1v1h-1zM257.33 23h1v2h-1zM257.33 27h1v1h-1zM257.33 28h1v2h-1zM257.33 32h1v1h-1zM257.33 37h1v1h-1zM257.33 41h1v2h-1zM258.33 0h1v1h-1zM258.33 6h1v2h-1zM258.33 8h1v1h-1zM258.33 12h1v2h-1zM258.33 19h1v1h-1zM258.33 23h1v1h-1zM258.33 28h1v1h-1zM258.33 29h1v1h-1zM258.33 34h1v2h-1zM258.33 43h1v2h-1zM258.33 46h1v1h-1zM259.33 17h1v2h-1zM259.33 24h1v1h-1zM259.33 28h1v2h-1zM259.33 39h1v2h-1zM259.33 42h1v2h-1zM259.33 44h1v1h-1zM259.33 45h1v1h-1zM259.33 50h1v1h-1zM259.33 53h1v1h-1zM260.33 2h1v1h-1zM260.33 4h1v1h-1zM260.33 9h1v2h-1zM260.33 25h1v1h-1zM260.33 27h1v2h-1zM260.33 31h1v2h-1zM260.33 40h1v1h-1zM260.33 42h1v1h-1zM260.33 46h1v1h-1zM260.33 48h1v1h-1zM260.33 51h1v1h-1zM260.33 52h1v2h-1zM261.33 8h1v1h-1zM261.33 9h1v2h-1zM261.33 17h1v2h-1zM261.33 20h1v2h-1zM261.33 24h1v2h-1zM261.33 26h1v1h-1zM261.33 30h1v2h-1zM261.33 37h1v2h-1zM261.33 40h1v1h-1zM261.33 46h1v1h-1zM261.33 47h1v2h-1zM261.33 50h1v2h-1zM261.33 52h1v2h-1zM262.33 4h1v1h-1zM262.33 6h1v1h-1zM262.33 9h1v2h-1zM262.33 20h1v2h-1zM262.33 22h1v1h-1zM262.33 25h1v2h-1zM262.33 33h1v1h-1zM262.33 38h1v2h-1zM262.33 40h1v1h-1zM262.33 42h1v2h-1zM262.33 46h1v1h-1zM262.33 52h1v1h-1zM262.33 53h1v1h-1zM263.33 6h1v1h-1zM263.33 11h1v1h-1zM263.33 21h1v1h-1zM263.33 22h1v1h-1zM263.33 28h1v1h-1zM263.33 35h1v2h-1zM263.33 37h1v2h-1zM263.33 39h1v1h-1zM263.33 40h1v1h-1zM263.33 49h1v1h-1zM263.33 52h1v1h-1zM264.33 0h1v1h-1zM264.33 1h1v1h-1zM264.33 4h1v2h-1zM264.33 9h1v2h-1zM264.33 11h1v1h-1zM264.33 27h1v2h-1zM264.33 31h1v2h-1zM264.33 43h1v2h-1zM264.33 46h1v1h-1zM264.33 49h1v1h-1zM265.33 3h1v2h-1zM265.33 5h1v2h-1zM265.33 8h1v1h-1zM265.33 9h1v2h-1zM265.33 13h1v2h-1zM265.33 15h1v1h-1zM265.33 16h1v1h-1zM265.33 20h1v2h-1zM265.33 25h1v1h-1zM265.33 27h1v1h-1zM265.33 40h1v1h-1zM265.33 42h1v1h-1zM265.33 45h1v1h-1zM265.33 46h1v1h-1zM265.33 49h1v1h-1zM265.33 51h1v1h-1zM266.33 0h1v1h-1zM266.33 6h1v1h-1zM266.33 17h1v2h-1zM266.33 19h1v2h-1zM266.33 25h1v2h-1zM266.33 30h1v1h-1zM266.33 33h1v1h-1zM266.33 35h1v1h-1zM266.33 37h1v1h-1zM266.33 38h1v1h-1zM266.33 41h1v1h-1zM266.33 43h1v1h-1zM266.33 44h1v1h-1zM266.33 46h1v1h-1zM266.33 48h1v1h-1zM266.33 53h1v1h-1zM267.33 2h1v1h-1zM267.33 4h1v1h-1zM267.33 5h1v1h-1zM267.33 6h1v1h-1zM267.33 12h1v1h-1zM267.33 15h1v1h-1zM267.33 18h1v1h-1zM267.33 22h1v1h-1zM267.33 27h1v2h-1zM267.33 29h1v1h-1zM267.33 30h1v1h-1zM267.33 45h1v1h-1zM267.33 49h1v2h-1zM267.33 51h1v1h-1zM267.33 53h1v1h-1zM268.33 0h1v1h-1zM268.33 5h1v1h-1zM268.33 9h1v1h-1zM268.33 19h1v1h-1zM268.33 28h1v1h-1zM268.33 35h1v1h-1zM268.33 42h1v1h-1zM268.33 48h1v1h-1zM268.33 50h1v2h-1zM268.33 53h1v1h-1zM269.33 2h1v2h-1zM269.33 6h1v2h-1zM269.33 19h1v2h-1zM269.33 22h1v1h-1zM269.33 23h1v1h-1zM269.33 24h1v2h-1zM269.33 28h1v2h-1zM269.33 30h1v2h-1zM269.33 32h1v1h-1zM269.33 39h1v2h-1zM269.33 44h1v1h-1zM269.33 49h1v1h-1zM269.33 50h1v1h-1zM269.33 51h1v2h-1zM269.33 53h1v1h-1zM270.33 0h1v2h-1zM270.33 7h1v2h-1zM270.33 9h1v1h-1zM270.33 10h1v2h-1zM270.33 13h1v2h-1zM270.33 16h1v1h-1zM270.33 17h1v1h-1zM270.33 21h1v1h-1zM270.33 22h1v1h-1zM270.33 32h1v2h-1zM270.33 37h1v1h-1zM270.33 40h1v1h-1zM270.33 41h1v1h-1zM270.33 50h1v2h-1zM271.33 4h1v2h-1zM271.33 6h1v1h-1zM271.33 9h1v1h-1zM271.33 13h1v1h-1zM271.33 20h1v1h-1zM271.33 24h1v1h-1zM271.33 25h1v2h-1zM271.33 28h1v1h-1zM271.33 29h1v1h-1zM271.33 34h1v2h-1zM271.33 40h1v1h-1zM271.33 44h1v2h-1zM271.33 48h1v1h-1zM271.33 49h1v2h-1zM271.33 51h1v1h-1zM272.33 3h1v1h-1zM272.33 6h1v1h-1zM272.33 7h1v1h-1zM272.33 8h1v2h-1zM272.33 10h1v1h-1zM272.33 11h1v2h-1zM272.33 17h1v1h-1zM272.33 21h1v2h-1zM272.33 33h1v1h-1zM272.33 36h1v1h-1zM272.33 49h1v1h-1zM273.33 19h1v1h-1zM273.33 21h1v1h-1zM273.33 22h1v2h-1zM273.33 24h1v1h-1zM273.33 25h1v1h-1zM273.33 29h1v1h-1zM273.33 39h1v2h-1zM274.33 17h1v1h-1zM274.33 20h1v2h-1zM274.33 22h1v1h-1zM274.33 23h1v2h-1zM274.33 26h1v2h-1zM274.33 30h1v1h-1zM274.33 32h1v1h-1zM274.33 46h1v1h-1zM274.33 47h1v2h-1zM275.33 5h1v1h-1zM275.33 9h1v1h-1zM275.33 18h1v1h-1zM275.33 22h1v2h-1zM275.33 24h1v1h-1zM275.33 35h1v1h-1zM275.33 36h1v1h-1zM275.33 40h1v1h-1zM275.33 41h1v1h-1zM275.33 51h1v1h-1zM275.33 52h1v1h-1zM276.33 3h1v1h-1zM276.33 6h1v2h-1zM276.33 14h1v2h-1zM276.33 27h1v1h-1zM276.33 32h1v1h-1zM276.33 33h1v1h-1zM276.33 35h1v2h-1zM276.33 37h1v2h-1zM276.33 42h1v1h-1zM276.33 45h1v1h-1zM277.33 3h1v2h-1zM277.33 8h1v1h-1zM277.33 9h1v2h-1zM277.33 34h1v2h-1zM277.33 41h1v1h-1zM278.33 18h1v1h-1zM278.33 19h1v1h-1zM278.33 20h1v2h-1zM278.33 26h1v1h-1zM278.33 43h1v2h-1zM278.33 46h1v2h-1zM279.33 5h1v1h-1zM279.33 10h1v1h-1zM279.33 11h1v1h-1zM279.33 17h1v2h-1zM279.33 26h1v1h-1zM279.33 27h1v2h-1zM279.33 29h1v1h-1zM279.33 40h1v1h-1zM279.33 46h1v1h-1zM280.33 0h1v1h-1zM280.33 4h1v2h-1zM280.33 7h1v1h-1zM280.33 10h1v1h-1zM280.33 14h1v1h-1zM280.33 15h1v1h-1zM280.33 18h1v2h-1zM280.33 22h1v2h-1zM280.33 30h1v1h-1zM280.33 31h1v1h-1zM280.33 32h1v2h-1zM280.33 40h1v1h-1zM280.33 41h1v2h-1zM280.33 45h1v1h-1zM281.33 4h1v2h-1zM281.33 10h1v1h-1zM281.33 12h1v1h-1zM281.33 14h1v1h-1zM281.33 26h1v1h-1zM281.33 28h1v1h-1zM281.33 34h1v2h-1zM281.33 39h1v1h-1zM281.33 41h1v1h-1zM281.33 43h1v2h-1zM281.33 46h1v1h-1zM281.33 47h1v1h-1zM281.33 49h1v1h-1zM281.33 52h1v1h-1zM282.33 0h1v1h-1zM282.33 1h1v1h-1zM282.33 4h1v1h-1zM282.33 5h1v2h-1zM282.33 11h1v2h-1zM282.33 20h1v2h-1zM282.33 26h1v1h-1zM282.33 31h1v1h-1zM282.33 37h1v1h-1zM282.33 44h1v1h-1zM282.33 53h1v1h-1zM283.33 6h1v2h-1zM283.33 10h1v1h-1zM283.33 25h1v1h-1zM283.33 27h1v2h-1zM283.33 30h1v1h-1zM283.33 34h1v2h-1zM283.33 36h1v1h-1zM283.33 38h1v1h-1zM283.33 39h1v2h-1zM283.33 42h1v1h-1zM283.33 43h1v1h-1zM283.33 50h1v2h-1zM284.33 1h1v1h-1zM284.33 2h1v2h-1zM284.33 11h1v2h-1zM284.33 14h1v1h-1zM284.33 15h1v1h-1zM284.33 18h1v2h-1zM284.33 21h1v1h-1zM284.33 22h1v2h-1zM284.33 28h1v1h-1zM284.33 35h1v2h-1zM284.33 42h1v2h-1zM284.33 49h1v1h-1zM284.33 50h1v1h-1zM285.33 0h1v1h-1zM285.33 5h1v2h-1zM285.33 7h1v1h-1zM285.33 8h1v2h-1zM285.33 10h1v1h-1zM285.33 37h1v1h-1zM285.33 42h1v2h-1zM285.33 50h1v2h-1zM286.33 12h1v1h-1zM286.33 17h1v2h-1zM286.33 19h1v1h-1zM286.33 28h1v1h-1zM286.33 38h1v2h-1zM286.33 40h1v2h-1zM286.33 47h1v1h-1zM286.33 48h1v2h-1zM287.33 4h1v1h-1zM287.33 5h1v1h-1zM287.33 10h1v1h-1zM287.33 24h1v2h-1zM287.33 28h1v1h-1zM287.33 36h1v2h-1zM287.33 39h1v1h-1zM287.33 46h1v1h-1zM287.33 51h1v2h-1zM287.33 53h1v1h-1zM288.33 4h1v2h-1zM288.33 14h1v2h-1zM288.33 19h1v1h-1zM288.33 37h1v2h-1zM288.33 39h1v1h-1zM288.33 41h1v1h-1zM288.33 42h1v1h-1zM289.33 6h1v2h-1zM289.33 9h1v1h-1zM289.33 12h1v1h-1zM289.33 13h1v1h-1zM289.33 16h1v2h-1zM289.33 21h1v1h-1zM289.33 23h1v2h-1zM289.33 27h1v1h-1zM289.33 29h1v1h-1zM289.33 35h1v2h-1zM289.33 37h1v2h-1zM289.33 44h1v1h-1zM289.33 48h1v2h-1zM290.33 4h1v2h-1zM290.33 6h1v1h-1zM290.33 11h1v1h-1zM290.33 14h1v2h-1zM290.33 18h1v1h-1zM290.33 19h1v1h-1zM290.33 22h1v2h-1zM290.33 24h1v2h-1zM290.33 26h1v1h-1zM290.33 32h1v1h-1zM290.33 44h1v2h-1zM290.33 46h1v1h-1zM291.33 0h1v2h-1zM291.33 6h1v1h-1zM291.33 10h1v1h-1zM291.33 11h1v1h-1zM291.33 16h1v2h-1zM291.33 18h1v1h-1zM291.33 27h1v1h-1zM291.33 33h1v1h-1zM291.33 43h1v1h-1zM291.33 47h1v1h-1zM291.33 49h1v2h-1zM291.33 53h1v1h-1zM292.33 2h1v1h-1zM292.33 5h1v1h-1zM292.33 7h1v1h-1zM292.33 9h1v1h-1zM292.33 10h1v1h-1zM292.33 11h1v2h-1zM292.33 18h1v2h-1zM292.33 21h1v1h-1zM292.33 27h1v1h-1zM292.33 28h1v1h-1zM292.33 39h1v1h-1zM292.33 44h1v1h-1zM292.33 46h1v1h-1zM292.33 50h1v2h-1zM292.33 52h1v1h-1zM292.33 53h1v1h-1zM293.33 1h1v1h-1zM293.33 15h1v1h-1zM293.33 16h1v1h-1zM293.33 20h1v1h-1zM293.33 22h1v1h-1zM293.33 24h1v1h-1zM293.33 34h1v1h-1zM293.33 35h1v2h-1zM293.33 40h1v2h-1zM293.33 42h1v1h-1zM293.33 44h1v1h-1zM293.33 50h1v2h-1zM294.33 3h1v2h-1zM294.33 9h1v2h-1zM294.33 14h1v1h-1zM294.33 18h1v1h-1zM294.33 22h1v1h-1zM294.33 29h1v1h-1zM294.33 39h1v2h-1zM294.33 47h1v1h-1zM294.33 48h1v1h-1zM294.33 49h1v1h-1zM294.33 50h1v2h-1zM294.33 52h1v1h-1zM295.33 20h1v1h-1zM295.33 32h1v2h-1zM295.33 47h1v1h-1zM295.33 52h1v2h-1zM296.33 0h1v2h-1zM296.33 2h1v1h-1zM296.33 5h1v2h-1zM296.33 11h1v1h-1zM296.33 14h1v1h-1zM296.33 16h1v2h-1zM296.33 22h1v1h-1zM296.33 24h1v1h-1zM296.33 28h1v2h-1zM296.33 34h1v1h-1zM296.33 42h1v1h-1zM297.33 4h1v2h-1zM297.33 13h1v2h-1zM297.33 22h1v2h-1zM297.33 24h1v1h-1zM297.33 25h1v1h-1zM297.33 26h1v1h-1zM297.33 29h1v1h-1zM297.33 35h1v2h-1zM297.33 46h1v1h-1zM297.33 48h1v2h-1zM298.33 5h1v1h-1zM298.33 9h1v1h-1zM298.33 16h1v2h-1zM298.33 20h1v1h-1zM298.33 24h1v1h-1zM298.33 27h1v2h-1zM298.33 30h1v2h-1zM298.33 34h1v2h-1zM298.33 38h1v2h-1zM298.33 41h1v2h-1zM298.33 44h1v1h-1zM298.33 47h1v1h-1zM298.33 48h1v2h-1zM298.33 51h1v1h-1zM298.33 53h1v1h-1zM299.33 4h1v1h-1zM299.33 7h1v2h-1zM299.33 11h1v2h-1zM299.33 14h1v1h-1zM299.33 15h1v2h-1zM299.33 25h1v2h-1zM299.33 27h1v1h-1zM299.33 28h1v2h-1zM299.33 33h1v2h-1zM299.33 36h1v1h-1zM299.33 41h1v1h-1zM299.33 51h1v2h-1zM299.33 53h1v1h-1zM300.33 0h1v1h-1zM300.33 4h1v1h-1zM300.33 8h1v1h-1zM300.33 9h1v1h-1zM300.33 10h1v1h-1zM300.33 11h1v1h-1zM300.33 12h1v1h-1zM300.33 19h1v1h-1zM300.33 23h1v1h-1zM300.33 29h1v1h-1zM300.33 33h1v1h-1zM300.33 38h1v2h-1zM300.33 40h1v1h-1zM300.33 44h1v1h-1zM300.33 47h1v2h-1zM301.33 0h1v1h-1zM301.33 3h1v1h-1zM301.33 7h1v1h-1zM301.33 12h1v1h-1zM301.33 13h1v2h-1zM301.33 18h1v1h-1zM301.33 20h1v1h-1zM301.33 23h1v1h-1zM301.33 24h1v1h-1zM301.33 30h1v1h-1zM301.33 48h1v2h-1zM301.33 51h1v2h-1zM302.33 12h1v2h-1zM302.33 19h1v2h-1zM302.33 24h1v1h-1zM302.33 25h1v1h-1zM302.33 27h1v1h-1zM302.33 29h1v2h-1zM302.33 37h1v2h-1zM302.33 40h1v1h-1zM302.33 42h1v2h-1zM302.33 44h1v1h-1zM302.33 49h1v1h-1zM302.33 51h1v2h-1zM303.33 2h1v2h-1zM303.33 8h1v1h-1zM303.33 13h1v1h-1zM303.33 14h1v2h-1zM303.33 19h1v1h-1zM303.33 21h1v1h-1zM303.33 22h1v1h-1zM303.33 26h1v1h-1zM303.33 27h1v1h-1zM303.33 28h1v2h-1zM303.33 38h1v1h-1zM303.33 39h1v1h-1zM303.33 43h1v1h-1zM303.33 44h1v1h-1zM303.33 45h1v2h-1zM303.33 50h1v1h-1zM303.33 53h1v1h-1zM304.33 35h1v1h-1zM304.33 39h1v1h-1zM305.33 16h1v2h-1zM305.33 26h1v1h-1zM305.33 39h1v1h-1zM305.33 46h1v1h-1zM305.33 47h1v1h-1zM306.33 0h1v1h-1zM306.33 8h1v1h-1zM306.33 11h1v1h-1zM306.33 12h1v1h-1zM306.33 13h1v2h-1zM306.33 18h1v1h-1zM306.33 21h1v2h-1zM306.33 37h1v1h-1zM306.33 42h1v1h-1zM306.33 43h1v1h-1zM306.33 44h1v1h-1zM307.33 13h1v1h-1zM307.33 14h1v1h-1zM307.33 15h1v1h-1zM307.33 20h1v1h-1zM307.33 23h1v1h-1zM307.33 24h1v1h-1zM307.33 26h1v2h-1zM307.33 35h1v1h-1zM307.33 43h1v1h-1zM307.33 44h1v1h-1zM307.33 45h1v1h-1zM307.33 49h1v1h-1zM307.33 51h1v1h-1zM307.33 52h1v1h-1zM308.33 1h1v1h-1zM308.33 4h1v1h-1zM308.33 9h1v1h-1zM308.33 10h1v1h-1zM308.33 16h1v2h-1zM308.33 18h1v2h-1zM308.33 21h1v2h-1zM308.33 26h1v1h-1zM308.33 27h1v2h-1zM308.33 38h1v2h-1zM308.33 46h1v1h-1zM308.33 49h1v1h-1zM308.33 51h1v1h-1zM309.33 1h1v1h-1zM309.33 3h1v2h-1zM309.33 6h1v1h-1zM309.33 7h1v2h-1zM309.33 12h1v1h-1zM309.33 15h1v1h-1zM309.33 16h1v1h-1zM309.33 17h1v2h-1zM309.33 25h1v2h-1zM309.33 31h1v2h-1zM309.33 36h1v1h-1zM309.33 38h1v2h-1zM309.33 43h1v1h-1zM309.33 49h1v2h-1zM309.33 53h1v1h-1zM310.33 4h1v1h-1zM310.33 5h1v1h-1zM310.33 6h1v1h-1zM310.33 9h1v1h-1zM310.33 13h1v2h-1zM310.33 15h1v1h-1zM310.33 17h1v2h-1zM310.33 19h1v1h-1zM310.33 23h1v1h-1zM310.33 31h1v2h-1zM310.33 33h1v1h-1zM310.33 39h1v1h-1zM311.33 6h1v1h-1zM311.33 15h1v1h-1zM311.33 20h1v1h-1zM311.33 23h1v2h-1zM311.33 25h1v1h-1zM311.33 26h1v2h-1zM311.33 33h1v2h-1zM311.33 40h1v2h-1zM311.33 50h1v1h-1zM312.33 3h1v2h-1zM312.33 6h1v2h-1zM312.33 8h1v1h-1zM312.33 9h1v1h-1zM312.33 15h1v1h-1zM312.33 18h1v2h-1zM312.33 27h1v1h-1zM312.33 37h1v1h-1zM312.33 43h1v1h-1zM312.33 46h1v1h-1zM312.33 47h1v2h-1zM313.33 1h1v2h-1zM313.33 5h1v1h-1zM313.33 12h1v1h-1zM313.33 13h1v2h-1zM313.33 18h1v1h-1zM313.33 22h1v1h-1zM313.33 29h1v1h-1zM313.33 31h1v1h-1zM313.33 41h1v1h-1zM313.33 42h1v1h-1zM313.33 47h1v1h-1zM313.33 49h1v2h-1zM314.33 3h1v2h-1zM314.33 8h1v1h-1zM314.33 11h1v1h-1zM314.33 29h1v2h-1zM314.33 33h1v1h-1zM314.33 35h1v1h-1zM314.33 44h1v1h-1zM314.33 45h1v2h-1zM314.33 49h1v1h-1zM314.33 50h1v2h-1zM314.33 53h1v1h-1zM315.33 19h1v1h-1zM315.33 20h1v2h-1zM315.33 23h1v2h-1zM315.33 26h1v1h-1zM315.33 29h1v1h-1zM315.33 33h1v1h-1zM315.33 37h1v1h-1zM315.33 38h1v1h-1zM315.33 45h1v1h-1zM315.33 46h1v2h-1zM316.33 0h1v1h-1zM316.33 7h1v1h-1zM316.33 19h1v2h-1zM316.33 28h1v1h-1zM316.33 38h1v1h-1zM316.33 48h1v1h-1zM316.33 50h1v1h-1zM317.33 0h1v2h-1zM317.33 2h1v1h-1zM317.33 3h1v1h-1zM317.33 5h1v1h-1zM317.33 9h1v2h-1zM317.33 11h1v1h-1zM317.33 17h1v1h-1zM317.33 20h1v1h-1zM317.33 31h1v1h-1zM317.33 32h1v2h-1zM317.33 44h1v2h-1zM317.33 48h1v1h-1zM317.33 50h1v1h-1zM318.33 4h1v1h-1zM318.33 7h1v2h-1zM318.33 9h1v1h-1zM318.33 10h1v2h-1zM318.33 17h1v1h-1zM318.33 19h1v1h-1zM318.33 22h1v1h-1zM318.33 31h1v1h-1zM318.33 36h1v1h-1zM318.33 37h1v2h-1zM318.33 44h1v1h-1zM318.33 46h1v1h-1zM318.33 53h1v1h-1zM319.33 6h1v2h-1zM319.33 8h1v1h-1zM319.33 10h1v2h-1zM319.33 29h1v1h-1zM319.33 30h1v1h-1zM319.33 31h1v2h-1zM319.33 34h1v1h-1zM319.33 37h1v2h-1zM319.33 43h1v2h-1zM319.33 47h1v1h-1zM319.33 48h1v1h-1zM319.33 49h1v2h-1zM319.33 51h1v1h-1zM320.33 0h1v1h-1zM320.33 2h1v1h-1zM320.33 8h1v1h-1zM320.33 17h1v1h-1zM320.33 19h1v1h-1zM320.33 21h1v1h-1zM320.33 26h1v2h-1zM320.33 31h1v2h-1zM320.33 34h1v1h-1zM320.33 35h1v1h-1zM320.33 36h1v1h-1zM320.33 38h1v2h-1zM320.33 46h1v2h-1zM321.33 4h1v1h-1zM321.33 8h1v2h-1zM321.33 21h1v1h-1zM321.33 22h1v1h-1zM321.33 25h1v1h-1zM321.33 30h1v1h-1zM321.33 35h1v2h-1zM321.33 46h1v2h-1zM321.33 49h1v1h-1zM322.33 2h1v1h-1zM322.33 3h1v2h-1zM322.33 8h1v1h-1zM322.33 9h1v1h-1zM322.33 10h1v1h-1zM322.33 20h1v2h-1zM322.33 23h1v2h-1zM322.33 25h1v1h-1zM322.33 32h1v1h-1zM322.33 37h1v2h-1zM322.33 42h1v1h-1zM322.33 46h1v1h-1zM322.33 47h1v1h-1zM322.33 53h1v1h-1zM323.33 0h1v1h-1zM323.33 2h1v1h-1zM323.33 8h1v1h-1zM323.33 11h1v2h-1zM323.33 17h1v1h-1zM323.33 18h1v1h-1zM323.33 26h1v2h-1zM323.33 28h1v1h-1zM323.33 31h1v1h-1zM323.33 32h1v2h-1zM323.33 36h1v2h-1zM323.33 38h1v1h-1zM323.33 39h1v1h-1zM323.33 40h1v2h-1zM323.33 44h1v1h-1zM323.33 45h1v1h-1zM323.33 46h1v1h-1zM323.33 49h1v2h-1zM324.33 1h1v1h-1zM324.33 2h1v1h-1zM324.33 10h1v1h-1zM324.33 12h1v1h-1zM324.33 18h1v1h-1zM324.33 26h1v1h-1zM324.33 27h1v2h-1zM324.33 39h1v1h-1zM324.33 45h1v2h-1zM324.33 47h1v1h-1zM324.33 48h1v2h-1zM325.33 0h1v1h-1zM325.33 11h1v1h-1zM325.33 31h1v2h-1zM325.33 35h1v1h-1zM325.33 36h1v1h-1zM325.33 38h1v1h-1zM326.33 3h1v2h-1zM326.33 6h1v2h-1zM326.33 9h1v1h-1zM326.33 10h1v1h-1zM326.33 12h1v1h-1zM326.33 17h1v2h-1zM326.33 19h1v1h-1zM326.33 29h1v2h-1zM326.33 31h1v1h-1zM326.33 34h1v1h-1zM326.33 36h1v2h-1zM326.33 39h1v1h-1zM326.33 49h1v1h-1zM326.33 52h1v2h-1zM327.33 0h1v2h-1zM327.33 6h1v2h-1zM327.33 13h1v1h-1zM327.33 20h1v1h-1zM327.33 22h1v1h-1zM327.33 25h1v1h-1zM327.33 29h1v1h-1zM327.33 30h1v2h-1zM327.33 36h1v1h-1zM327.33 45h1v2h-1zM327.33 47h1v1h-1zM328.33 9h1v1h-1zM328.33 21h1v1h-1zM328.33 26h1v2h-1zM328.33 30h1v2h-1zM328.33 33h1v1h-1zM328.33 50h1v1h-1zM328.33 51h1v1h-1zM328.33 52h1v1h-1zM329.33 2h1v1h-1zM329.33 4h1v2h-1zM329.33 8h1v1h-1zM329.33 10h1v1h-1zM329.33 14h1v2h-1zM329.33 16h1v1h-1zM329.33 17h1v1h-1zM329.33 24h1v2h-1zM329.33 28h1v1h-1zM329.33 34h1v1h-1zM329.33 40h1v1h-1zM329.33 46h1v1h-1zM329.33 50h1v1h-1zM330.33 0h1v2h-1zM330.33 14h1v1h-1zM330.33 15h1v1h-1zM330.33 16h1v1h-1zM330.33 19h1v1h-1zM330.33 30h1v2h-1zM330.33 32h1v1h-1zM330.33 33h1v1h-1zM330.33 41h1v2h-1zM330.33 51h1v2h-1zM331.33 9h1v2h-1zM331.33 12h1v1h-1zM331.33 14h1v1h-1zM331.33 18h1v1h-1zM331.33 24h1v1h-1zM331.33 25h1v2h-1zM331.33 27h1v1h-1zM331.33 30h1v1h-1zM331.33 31h1v2h-1zM331.33 41h1v1h-1zM331.33 42h1v2h-1zM331.33 46h1v2h-1zM332.33 3h1v1h-1zM332.33 7h1v1h-1zM332.33 11h1v1h-1zM332.33 13h1v1h-1zM332.33 22h1v1h-1zM332.33 28h1v1h-1zM332.33 31h1v1h-1zM332.33 38h1v1h-1zM332.33 39h1v1h-1zM332.33 40h1v2h-1zM332.33 52h1v1h-1zM333.33 4h1v1h-1zM333.33 7h1v1h-1zM333.33 8h1v1h-1zM333.33 13h1v1h-1zM333.33 19h1v2h-1zM333.33 43h1v2h-1zM333.33 52h1v1h-1zM334.33 4h1v1h-1zM334.33 5h1v1h-1zM334.33 6h1v1h-1zM334.33 7h1v1h-1zM334.33 16h1v1h-1zM334.33 18h1v2h-1zM334.33 21h1v1h-1zM334.33 30h1v2h-1zM334.33 32h1v1h-1zM334.33 40h1v1h-1zM334.33 42h1v2h-1zM334.33 45h1v1h-1zM334.33 46h1v2h-1zM335.33 0h1v1h-1zM335.33 1h1v1h-1zM335.33 3h1v2h-1zM335.33 6h1v2h-1zM335.33 23h1v2h-1zM335.33 26h1v1h-1zM335.33 27h1v1h-1zM335.33 31h1v1h-1zM335.33 39h1v2h-1zM335.33 41h1v2h-1zM335.33 50h1v1h-1zM335.33 51h1v1h-1zM335.33 52h1v2h-1zM336.33 6h1v1h-1zM336.33 10h1v2h-1zM336.33 13h1v2h-1zM336.33 16h1v1h-1zM336.33 20h1v1h-1zM336.33 21h1v2h-1zM336.33 26h1v1h-1zM336.33 27h1v1h-1zM336.33 30h1v1h-1zM336.33 37h1v2h-1zM336.33 39h1v1h-1zM336.33 40h1v1h-1zM336.33 41h1v1h-1zM336.33 42h1v2h-1zM336.33 44h1v1h-1zM336.33 47h1v1h-1zM337.33 3h1v1h-1zM337.33 4h1v2h-1zM337.33 12h1v1h-1zM337.33 13h1v1h-1zM337.33 26h1v1h-1zM337.33 27h1v2h-1zM337.33 31h1v1h-1zM337.33 32h1v1h-1zM337.33 38h1v2h-1zM337.33 40h1v1h-1zM337.33 43h1v1h-1zM337.33 45h1v2h-1zM337.33 47h1v1h-1zM337.33 51h1v1h-1zM338.33 0h1v1h-1zM338.33 1h1v2h-1zM338.33 3h1v2h-1zM338.33 8h1v1h-1zM338.33 9h1v2h-1zM338.33 13h1v1h-1zM338.33 20h1v2h-1zM338.33 22h1v1h-1zM338.33 24h1v1h-1zM338.33 25h1v2h-1zM338.33 27h1v1h-1zM338.33 28h1v1h-1zM338.33 30h1v1h-1zM338.33 31h1v1h-1zM338.33 32h1v2h-1zM338.33 41h1v1h-1zM338.33 42h1v1h-1zM338.33 45h1v1h-1zM338.33 46h1v1h-1zM339.33 3h1v2h-1zM339.33 6h1v2h-1zM339.33 8h1v1h-1zM339.33 14h1v1h-1zM339.33 21h1v1h-1zM339.33 22h1v1h-1zM339.33 26h1v2h-1zM339.33 31h1v2h-1zM339.33 33h1v1h-1zM339.33 46h1v2h-1zM339.33 48h1v2h-1zM339.33 50h1v2h-1zM339.33 52h1v1h-1zM340.33 3h1v2h-1zM340.33 10h1v1h-1zM340.33 12h1v2h-1zM340.33 21h1v1h-1zM340.33 24h1v1h-1zM340.33 26h1v1h-1zM340.33 39h1v1h-1zM340.33 40h1v2h-1zM340.33 44h1v1h-1zM340.33 52h1v1h-1zM340.33 53h1v1h-1zM341.33 1h1v2h-1zM341.33 12h1v2h-1zM341.33 21h1v2h-1zM341.33 25h1v2h-1zM341.33 38h1v1h-1zM341.33 40h1v1h-1zM341.33 49h1v1h-1zM342.33 0h1v1h-1zM342.33 1h1v1h-1zM342.33 14h1v1h-1zM342.33 24h1v2h-1zM342.33 45h1v1h-1zM342.33 48h1v2h-1zM342.33 52h1v1h-1zM343.33 2h1v2h-1zM343.33 4h1v1h-1zM343.33 9h1v1h-1zM343.33 12h1v1h-1zM343.33 29h1v1h-1zM343.33 33h1v1h-1zM343.33 34h1v1h-1zM344.33 0h1v1h-1zM344.33 8h1v1h-1zM344.33 11h1v1h-1zM344.33 16h1v1h-1zM344.33 23h1v1h-1zM344.33 24h1v2h-1zM344.33 28h1v1h-1zM344.33 32h1v1h-1zM344.33 44h1v2h-1zM345.33 1h1v1h-1zM345.33 9h1v2h-1zM345.33 11h1v2h-1zM345.33 13h1v1h-1zM345.33 16h1v2h-1zM345.33 19h1v1h-1zM345.33 20h1v1h-1zM345.33 21h1v1h-1zM345.33 25h1v2h-1zM345.33 36h1v2h-1zM345.33 40h1v1h-1zM345.33 50h1v1h-1zM346.33 3h1v1h-1zM346.33 7h1v1h-1zM346.33 21h1v1h-1zM346.33 22h1v2h-1zM346.33 36h1v1h-1zM346.33 39h1v1h-1zM346.33 46h1v2h-1zM346.33 48h1v1h-1zM346.33 50h1v1h-1zM346.33 51h1v1h-1zM346.33 52h1v1h-1zM347.33 1h1v1h-1zM347.33 4h1v1h-1zM347.33 5h1v2h-1zM347.33 10h1v1h-1zM347.33 11h1v1h-1zM347.33 12h1v2h-1zM347.33 16h1v1h-1zM347.33 19h1v1h-1zM347.33 22h1v2h-1zM347.33 26h1v1h-1zM347.33 27h1v1h-1zM347.33 29h1v1h-1zM347.33 38h1v1h-1zM347.33 39h1v1h-1zM347.33 43h1v1h-1zM347.33 46h1v1h-1zM347.33 49h1v1h-1zM347.33 50h1v2h-1zM348.33 0h1v1h-1zM348.33 6h1v1h-1zM348.33 8h1v1h-1zM348.33 15h1v1h-1zM348.33 23h1v2h-1zM348.33 29h1v1h-1zM348.33 32h1v1h-1zM348.33 37h1v1h-1zM348.33 42h1v1h-1zM348.33 44h1v1h-1zM348.33 45h1v1h-1zM348.33 47h1v1h-1zM348.33 50h1v1h-1zM348.33 53h1v1h-1zM349.33 8h1v2h-1zM349.33 15h1v2h-1zM349.33 27h1v1h-1zM349.33 29h1v2h-1zM349.33 33h1v2h-1zM349.33 41h1v1h-1zM349.33 51h1v1h-1zM350.33 1h1v1h-1zM350.33 5h1v1h-1zM350.33 6h1v1h-1zM350.33 16h1v1h-1zM350.33 19h1v1h-1zM350.33 35h1v2h-1zM350.33 44h1v1h-1zM350.33 49h1v1h-1zM350.33 52h1v2h-1zM351.33 4h1v1h-1zM351.33 10h1v2h-1zM351.33 13h1v1h-1zM351.33 22h1v1h-1zM351.33 25h1v1h-1zM351.33 26h1v1h-1zM351.33 33h1v1h-1zM351.33 36h1v1h-1zM351.33 37h1v1h-1zM351.33 38h1v1h-1zM351.33 48h1v2h-1zM351.33 50h1v2h-1zM352.33 2h1v2h-1zM352.33 8h1v2h-1zM352.33 10h1v1h-1zM352.33 15h1v1h-1zM352.33 16h1v2h-1zM352.33 31h1v1h-1zM352.33 36h1v2h-1zM352.33 38h1v1h-1zM352.33 45h1v1h-1zM352.33 48h1v1h-1zM352.33 49h1v2h-1zM352.33 51h1v1h-1zM353.33 5h1v2h-1zM353.33 19h1v1h-1zM353.33 20h1v1h-1zM353.33 21h1v2h-1zM353.33 31h1v1h-1zM353.33 33h1v1h-1zM353.33 36h1v1h-1zM353.33 40h1v1h-1zM353.33 42h1v1h-1zM353.33 47h1v1h-1zM354.33 13h1v1h-1zM354.33 15h1v2h-1zM354.33 22h1v1h-1zM354.33 24h1v1h-1zM354.33 25h1v1h-1zM354.33 28h1v1h-1zM354.33 29h1v1h-1zM354.33 30h1v2h-1zM354.33 37h1v1h-1zM354.33 39h1v1h-1zM354.33 42h1v2h-1zM354.33 48h1v1h-1zM354.33 51h1v2h-1zM355.33 3h1v1h-1zM355.33 4h1v2h-1zM355.33 8h1v1h-1zM355.33 19h1v2h-1zM355.33 27h1v2h-1zM355.33 29h1v1h-1zM355.33 41h1v2h-1zM356.33 7h1v2h-1zM356.33 18h1v1h-1zM356.33 19h1v2h-1zM356.33 26h1v1h-1zM356.33 38h1v1h-1zM356.33 41h1v2h-1zM356.33 44h1v1h-1zM356.33 47h1v1h-1zM356.33 53h1v1h-1zM357.33 1h1v1h-1zM357.33 7h1v1h-1zM357.33 11h1v2h-1zM357.33 14h1v2h-1zM357.33 20h1v1h-1zM357.33 21h1v1h-1zM357.33 29h1v1h-1zM357.33 34h1v1h-1zM357.33 35h1v1h-1zM357.33 36h1v2h-1zM357.33 39h1v1h-1zM357.33 40h1v2h-1zM357.33 46h1v2h-1zM358.33 2h1v1h-1zM358.33 3h1v1h-1zM358.33 4h1v2h-1zM358.33 7h1v2h-1zM358.33 12h1v1h-1zM358.33 16h1v1h-1zM358.33 18h1v1h-1zM358.33 27h1v1h-1zM358.33 33h1v1h-1zM358.33 36h1v1h-1zM358.33 37h1v2h-1zM358.33 40h1v2h-1zM358.33 44h1v1h-1zM359.33 1h1v1h-1zM359.33 11h1v2h-1zM359.33 16h1v2h-1zM359.33 27h1v1h-1zM359.33 35h1v1h-1zM359.33 41h1v1h-1zM359.33 45h1v1h-1zM359.33 51h1v1h-1zM360.33 18h1v2h-1zM360.33 20h1v1h-1zM360.33 29h1v1h-1zM360.33 34h1v1h-1zM360.33 35h1v2h-1zM360.33 43h1v1h-1zM360.33 44h1v2h-1zM360.33 46h1v2h-1zM360.33 51h1v1h-1zM361.33 12h1v1h-1zM361.33 13h1v1h-1zM361.33 17h1v1h-1zM361.33 28h1v2h-1zM361.33 37h1v1h-1zM361.33 38h1v2h-1zM361.33 45h1v2h-1zM361.33 49h1v1h-1zM361.33 52h1v1h-1zM362.33 0h1v2h-1zM362.33 2h1v1h-1zM362.33 13h1v1h-1zM362.33 14h1v1h-1zM362.33 15h1v2h-1zM362.33 17h1v1h-1zM362.33 18h1v1h-1zM362.33 19h1v1h-1zM362.33 26h1v2h-1zM362.33 31h1v2h-1zM362.33 35h1v1h-1zM362.33 36h1v2h-1zM362.33 43h1v2h-1zM362.33 49h1v1h-1zM362.33 53h1v1h-1zM363.33 0h1v1h-1zM363.33 3h1v1h-1zM363.33 8h1v1h-1zM363.33 9h1v2h-1zM363.33 26h1v1h-1zM363.33 27h1v2h-1zM363.33 31h1v2h-1zM363.33 37h1v1h-1zM363.33 42h1v1h-1zM363.33 43h1v1h-1zM363.33 46h1v1h-1zM363.33 49h1v1h-1zM364.33 1h1v2h-1zM364.33 3h1v2h-1zM364.33 6h1v1h-1zM364.33 7h1v2h-1zM364.33 14h1v2h-1zM364.33 20h1v1h-1zM364.33 36h1v1h-1zM364.33 38h1v2h-1zM364.33 40h1v2h-1zM365.33 0h1v1h-1zM365.33 1h1v1h-1zM365.33 7h1v1h-1zM365.33 10h1v1h-1zM365.33 14h1v1h-1zM365.33 15h1v1h-1zM365.33 19h1v1h-1zM365.33 20h1v2h-1zM365.33 23h1v1h-1zM365.33 26h1v1h-1zM365.33 31h1v1h-1zM365.33 34h1v1h-1zM365.33 37h1v1h-1zM365.33 41h1v1h-1zM365.33 43h1v1h-1zM366.33 1h1v1h-1zM366.33 7h1v1h-1zM366.33 8h1v1h-1zM366.33 11h1v1h-1zM366.33 25h1v2h-1zM366.33 29h1v1h-1zM366.33 36h1v1h-1zM366.33 38h1v2h-1zM366.33 42h1v1h-1zM366.33 46h1v2h-1zM366.33 48h1v1h-1zM366.33 51h1v1h-1zM367.33 0h1v2h-1zM367.33 7h1v1h-1zM367.33 13h1v2h-1zM367.33 15h1v2h-1zM367.33 18h1v1h-1zM367.33 22h1v1h-1zM367.33 25h1v1h-1zM367.33 26h1v1h-1zM367.33 29h1v2h-1zM367.33 32h1v1h-1zM367.33 36h1v1h-1zM367.33 37h1v1h-1zM367.33 39h1v2h-1zM367.33 45h1v1h-1zM367.33 49h1v1h-1zM368.33 4h1v1h-1zM368.33 5h1v1h-1zM368.33 7h1v2h-1zM368.33 10h1v1h-1zM368.33 11h1v1h-1zM368.33 17h1v1h-1zM368.33 18h1v2h-1zM368.33 22h1v1h-1zM368.33 32h1v1h-1zM368.33 34h1v1h-1zM368.33 36h1v2h-1zM368.33 45h1v2h-1zM368.33 49h1v1h-1zM368.33 52h1v2h-1zM369.33 0h1v1h-1zM369.33 2h1v2h-1zM369.33 22h1v1h-1zM369.33 38h1v2h-1zM369.33 40h1v2h-1zM369.33 46h1v2h-1zM369.33 50h1v1h-1zM369.33 53h1v1h-1zM370.33 1h1v1h-1zM370.33 5h1v2h-1zM370.33 7h1v1h-1zM370.33 10h1v1h-1zM370.33 12h1v2h-1zM370.33 15h1v1h-1zM370.33 17h1v1h-1zM370.33 19h1v1h-1zM370.33 22h1v1h-1zM370.33 23h1v2h-1zM370.33 25h1v1h-1zM370.33 28h1v1h-1zM370.33 31h1v2h-1zM370.33 39h1v1h-1zM370.33 42h1v1h-1zM370.33 49h1v2h-1zM371.33 0h1v1h-1zM371.33 5h1v1h-1zM371.33 10h1v2h-1zM371.33 14h1v1h-1zM371.33 36h1v2h-1zM371.33 44h1v1h-1zM371.33 45h1v1h-1zM371.33 49h1v1h-1zM372.33 0h1v2h-1zM372.33 7h1v1h-1zM372.33 21h1v2h-1zM372.33 28h1v1h-1zM372.33 31h1v2h-1zM372.33 35h1v1h-1zM372.33 52h1v1h-1zM372.33 53h1v1h-1zM373.33 7h1v1h-1zM373.33 9h1v2h-1zM373.33 15h1v1h-1zM373.33 18h1v1h-1zM373.33 23h1v1h-1zM373.33 32h1v1h-1zM373.33 39h1v1h-1zM373.33 41h1v1h-1zM373.33 45h1v1h-1zM373.33 51h1v2h-1zM374.33 0h1v1h-1zM374.33 1h1v1h-1zM374.33 5h1v1h-1zM374.33 9h1v2h-1zM374.33 13h1v2h-1zM374.33 23h1v2h-1zM374.33 27h1v2h-1zM374.33 33h1v2h-1zM374.33 38h1v1h-1zM374.33 39h1v2h-1zM374.33 41h1v2h-1zM374.33 46h1v1h-1zM374.33 53h1v1h-1zM375.33 4h1v2h-1zM375.33 13h1v1h-1zM375.33 26h1v1h-1zM375.33 32h1v2h-1zM375.33 34h1v1h-1zM375.33 37h1v1h-1zM375.33 38h1v1h-1zM375.33 48h1v2h-1zM376.33 3h1v1h-1zM376.33 14h1v1h-1zM376.33 15h1v2h-1zM376.33 34h1v1h-1zM376.33 35h1v1h-1zM376.33 40h1v1h-1zM376.33 48h1v1h-1zM376.33 52h1v2h-1zM377.33 1h1v1h-1zM377.33 5h1v2h-1zM377.33 7h1v1h-1zM377.33 8h1v1h-1zM377.33 9h1v2h-1zM377.33 17h1v2h-1zM377.33 21h1v1h-1zM377.33 25h1v1h-1zM377.33 29h1v1h-1zM377.33 30h1v1h-1zM377.33 36h1v2h-1zM377.33 39h1v1h-1zM377.33 41h1v2h-1zM377.33 44h1v1h-1zM377.33 45h1v1h-1zM377.33 46h1v1h-1zM377.33 51h1v1h-1zM377.33 52h1v1h-1zM378.33 7h1v2h-1zM378.33 16h1v1h-1zM378.33 27h1v1h-1zM378.33 29h1v1h-1zM378.33 32h1v2h-1zM378.33 34h1v1h-1zM378.33 37h1v1h-1zM378.33 40h1v2h-1zM378.33 52h1v1h-1zM378.33 53h1v1h-1zM379.33 1h1v1h-1zM379.33 2h1v2h-1zM379.33 8h1v1h-1zM379.33 9h1v1h-1zM379.33 18h1v1h-1zM379.33 19h1v1h-1zM379.33 20h1v1h-1zM379.33 22h1v1h-1zM379.33 25h1v2h-1zM379.33 37h1v2h-1zM379.33 50h1v2h-1zM379.33 52h1v1h-1zM379.33 53h1v1h-1zM380.33 1h1v1h-1zM380.33 2h1v1h-1zM380.33 10h1v2h-1zM380.33 14h1v1h-1zM380.33 20h1v1h-1zM380.33 21h1v1h-1zM380.33 22h1v1h-1zM380.33 25h1v2h-1zM380.33 31h1v1h-1zM380.33 32h1v2h-1zM380.33 34h1v2h-1zM380.33 37h1v1h-1zM380.33 39h1v1h-1zM381.33 4h1v2h-1zM381.33 6h1v2h-1zM381.33 8h1v2h-1zM381.33 11h1v1h-1zM381.33 13h1v1h-1zM381.33 15h1v1h-1zM381.33 27h1v2h-1zM381.33 30h1v2h-1zM381.33 32h1v1h-1zM381.33 37h1v2h-1zM381.33 39h1v2h-1zM381.33 43h1v1h-1zM381.33 44h1v2h-1zM381.33 52h1v2h-1zM382.33 5h1v2h-1zM382.33 11h1v1h-1zM382.33 14h1v1h-1zM382.33 15h1v1h-1zM382.33 16h1v1h-1zM382.33 17h1v1h-1zM382.33 21h1v1h-1zM382.33 25h1v2h-1zM382.33 35h1v2h-1zM382.33 43h1v1h-1zM382.33 47h1v2h-1zM383.33 3h1v1h-1zM383.33 4h1v1h-1zM383.33 5h1v2h-1zM383.33 7h1v1h-1zM383.33 30h1v1h-1zM383.33 32h1v1h-1zM383.33 33h1v2h-1zM383.33 35h1v1h-1zM383.33 36h1v1h-1zM384.33 9h1v1h-1zM384.33 17h1v2h-1zM384.33 36h1v2h-1zM384.33 40h1v2h-1zM384.33 43h1v1h-1zM385.33 2h1v1h-1zM385.33 13h1v2h-1zM385.33 20h1v2h-1zM385.33 23h1v2h-1zM385.33 31h1v2h-1zM385.33 35h1v1h-1zM385.33 42h1v1h-1zM386.33 0h1v2h-1zM386.33 2h1v1h-1zM386.33 4h1v2h-1zM386.33 11h1v2h-1zM386.33 15h1v2h-1zM386.33 20h1v2h-1zM386.33 27h1v2h-1zM386.33 29h1v1h-1zM386.33 31h1v2h-1zM386.33 34h1v2h-1zM386.33 37h1v1h-1zM386.33 43h1v1h-1zM386.33 45h1v1h-1zM386.33 46h1v2h-1zM386.33 49h1v2h-1zM387.33 4h1v1h-1zM387.33 5h1v1h-1zM387.33 6h1v1h-1zM387.33 10h1v2h-1zM387.33 16h1v1h-1zM387.33 17h1v1h-1zM387.33 18h1v1h-1zM387.33 23h1v1h-1zM387.33 32h1v1h-1zM387.33 36h1v1h-1zM387.33 46h1v1h-1zM387.33 49h1v1h-1zM388.33 4h1v1h-1zM388.33 7h1v1h-1zM388.33 11h1v2h-1zM388.33 15h1v1h-1zM388.33 34h1v1h-1zM388.33 38h1v1h-1zM388.33 40h1v2h-1zM388.33 43h1v1h-1zM388.33 44h1v1h-1zM389.33 17h1v1h-1zM389.33 30h1v1h-1zM389.33 36h1v1h-1zM389.33 38h1v2h-1zM389.33 40h1v1h-1zM389.33 42h1v1h-1zM389.33 44h1v1h-1zM389.33 53h1v1h-1zM390.33 0h1v1h-1zM390.33 1h1v1h-1zM390.33 2h1v2h-1zM390.33 17h1v1h-1zM390.33 18h1v1h-1zM390.33 31h1v2h-1zM390.33 42h1v1h-1zM391.33 0h1v1h-1zM391.33 1h1v2h-1zM391.33 4h1v2h-1zM391.33 14h1v1h-1zM391.33 15h1v2h-1zM391.33 18h1v1h-1zM391.33 19h1v2h-1zM391.33 21h1v1h-1zM391.33 23h1v2h-1zM391.33 29h1v2h-1zM391.33 48h1v2h-1zM391.33 50h1v1h-1zM391.33 51h1v1h-1zM391.33 53h1v1h-1zM392.33 0h1v2h-1zM392.33 2h1v1h-1zM392.33 5h1v1h-1zM392.33 8h1v1h-1zM392.33 13h1v1h-1zM392.33 17h1v1h-1zM392.33 18h1v1h-1zM392.33 35h1v1h-1zM392.33 41h1v1h-1zM393.33 3h1v2h-1zM393.33 10h1v1h-1zM393.33 12h1v2h-1zM393.33 24h1v1h-1zM393.33 37h1v1h-1zM393.33 45h1v1h-1zM393.33 51h1v1h-1zM394.33 3h1v1h-1zM394.33 6h1v1h-1zM394.33 7h1v1h-1zM394.33 8h1v1h-1zM394.33 10h1v1h-1zM394.33 22h1v1h-1zM394.33 25h1v2h-1zM394.33 31h1v1h-1zM395.33 0h1v2h-1zM395.33 8h1v1h-1zM395.33 24h1v1h-1zM395.33 25h1v1h-1zM395.33 31h1v1h-1zM395.33 32h1v1h-1zM395.33 34h1v1h-1zM395.33 46h1v1h-1zM395.33 50h1v1h-1zM396.33 4h1v2h-1zM396.33 6h1v1h-1zM396.33 19h1v1h-1zM396.33 26h1v2h-1zM396.33 31h1v1h-1zM396.33 32h1v1h-1zM396.33 35h1v2h-1zM396.33 42h1v1h-1zM396.33 44h1v2h-1zM396.33 48h1v2h-1zM396.33 50h1v1h-1zM397.33 0h1v2h-1zM397.33 2h1v1h-1zM397.33 7h1v1h-1zM397.33 8h1v1h-1zM397.33 12h1v1h-1zM397.33 13h1v1h-1zM397.33 16h1v2h-1zM397.33 20h1v1h-1zM397.33 21h1v1h-1zM397.33 24h1v1h-1zM397.33 25h1v2h-1zM397.33 28h1v1h-1zM397.33 31h1v2h-1zM397.33 43h1v1h-1zM397.33 44h1v2h-1zM397.33 48h1v1h-1zM397.33 50h1v1h-1zM398.33 1h1v1h-1zM398.33 3h1v2h-1zM398.33 8h1v1h-1zM398.33 9h1v2h-1zM398.33 12h1v1h-1zM398.33 15h1v1h-1zM398.33 28h1v2h-1zM398.33 43h1v1h-1zM399.33 3h1v1h-1zM399.33 6h1v1h-1zM399.33 10h1v1h-1zM399.33 23h1v1h-1zM399.33 32h1v1h-1zM399.33 39h1v2h-1zM399.33 46h1v2h-1zM399.33 48h1v1h-1zM399.33 49h1v1h-1zM399.33 53h1v1h-1zM400.33 5h1v2h-1zM400.33 7h1v2h-1zM400.33 9h1v1h-1zM400.33 21h1v1h-1zM400.33 26h1v1h-1zM400.33 32h1v1h-1zM400.33 38h1v1h-1zM400.33 39h1v1h-1zM400.33 40h1v2h-1zM400.33 42h1v2h-1zM400.33 46h1v2h-1zM400.33 48h1v2h-1zM401.33 0h1v1h-1zM401.33 1h1v1h-1zM401.33 5h1v1h-1zM401.33 6h1v1h-1zM401.33 8h1v2h-1zM401.33 17h1v2h-1zM401.33 30h1v2h-1zM401.33 36h1v1h-1zM401.33 40h1v1h-1zM401.33 48h1v1h-1zM401.33 49h1v2h-1zM402.33 3h1v2h-1zM402.33 9h1v1h-1zM402.33 10h1v2h-1zM402.33 15h1v2h-1zM402.33 17h1v2h-1zM402.33 23h1v1h-1zM402.33 30h1v1h-1zM402.33 32h1v1h-1zM402.33 33h1v1h-1zM402.33 39h1v1h-1zM402.33 42h1v2h-1zM403.33 2h1v2h-1zM403.33 8h1v1h-1zM403.33 14h1v1h-1zM403.33 19h1v2h-1zM403.33 25h1v2h-1zM403.33 27h1v1h-1zM403.33 31h1v1h-1zM403.33 34h1v1h-1zM403.33 41h1v2h-1zM403.33 44h1v1h-1zM404.33 0h1v1h-1zM404.33 4h1v1h-1zM404.33 5h1v1h-1zM404.33 7h1v1h-1zM404.33 8h1v1h-1zM404.33 10h1v1h-1zM404.33 11h1v2h-1zM404.33 19h1v1h-1zM404.33 21h1v2h-1zM404.33 24h1v1h-1zM404.33 34h1v1h-1zM404.33 41h1v2h-1zM404.33 45h1v1h-1zM404.33 46h1v2h-1zM404.33 48h1v1h-1zM405.33 12h1v1h-1zM405.33 13h1v1h-1zM405.33 22h1v1h-1zM405.33 24h1v1h-1zM405.33 25h1v1h-1zM405.33 45h1v2h-1zM405.33 50h1v1h-1zM405.33 51h1v1h-1zM406.33 2h1v1h-1zM406.33 3h1v2h-1zM406.33 8h1v1h-1zM406.33 14h1v1h-1zM406.33 18h1v1h-1zM406.33 19h1v1h-1zM406.33 21h1v1h-1zM406.33 30h1v1h-1zM406.33 33h1v1h-1zM406.33 34h1v1h-1zM406.33 38h1v1h-1zM406.33 39h1v1h-1zM406.33 43h1v1h-1zM406.33 44h1v1h-1zM406.33 47h1v1h-1zM406.33 50h1v2h-1zM406.33 53h1v1h-1zM407.33 4h1v1h-1zM407.33 10h1v1h-1zM407.33 11h1v2h-1zM407.33 24h1v1h-1zM407.33 25h1v2h-1zM407.33 28h1v2h-1zM407.33 30h1v2h-1zM407.33 36h1v2h-1zM407.33 43h1v2h-1zM407.33 50h1v1h-1zM408.33 0h1v1h-1zM408.33 2h1v1h-1zM408.33 3h1v1h-1zM408.33 4h1v1h-1zM408.33 7h1v1h-1zM408.33 9h1v1h-1zM408.33 20h1v1h-1zM408.33 22h1v1h-1zM408.33 27h1v1h-1zM408.33 32h1v2h-1zM408.33 46h1v2h-1zM409.33 2h1v2h-1zM409.33 6h1v1h-1zM409.33 8h1v1h-1zM409.33 16h1v1h-1zM409.33 19h1v1h-1zM409.33 22h1v1h-1zM409.33 23h1v1h-1zM409.33 24h1v1h-1zM409.33 26h1v2h-1zM409.33 28h1v1h-1zM409.33 32h1v1h-1zM409.33 36h1v1h-1zM409.33 40h1v1h-1zM409.33 45h1v1h-1zM409.33 52h1v1h-1zM409.33 53h1v1h-1zM410.33 2h1v1h-1zM410.33 10h1v2h-1zM410.33 12h1v2h-1zM410.33 21h1v1h-1zM410.33 24h1v1h-1zM410.33 33h1v1h-1zM410.33 34h1v2h-1zM410.33 36h1v2h-1zM410.33 40h1v1h-1zM411.33 2h1v1h-1zM411.33 4h1v1h-1zM411.33 9h1v2h-1zM411.33 11h1v1h-1zM411.33 18h1v1h-1zM411.33 21h1v1h-1zM411.33 22h1v1h-1zM411.33 24h1v2h-1zM411.33 29h1v1h-1zM411.33 30h1v1h-1zM411.33 35h1v2h-1zM411.33 37h1v2h-1zM411.33 42h1v1h-1zM411.33 46h1v1h-1zM411.33 49h1v2h-1zM411.33 51h1v2h-1zM412.33 1h1v1h-1zM412.33 4h1v1h-1zM412.33 5h1v2h-1zM412.33 11h1v2h-1zM412.33 14h1v1h-1zM412.33 20h1v2h-1zM412.33 22h1v1h-1zM412.33 30h1v1h-1zM412.33 40h1v2h-1zM412.33 44h1v1h-1zM412.33 46h1v1h-1zM412.33 47h1v2h-1zM412.33 52h1v1h-1zM413.33 6h1v1h-1zM413.33 11h1v2h-1zM413.33 21h1v1h-1zM413.33 22h1v1h-1zM413.33 25h1v1h-1zM413.33 26h1v1h-1zM413.33 27h1v1h-1zM413.33 32h1v1h-1zM413.33 40h1v1h-1zM413.33 52h1v1h-1zM414.33 4h1v2h-1zM414.33 11h1v2h-1zM414.33 13h1v1h-1zM414.33 14h1v1h-1zM414.33 21h1v1h-1zM414.33 26h1v1h-1zM414.33 28h1v1h-1zM414.33 33h1v1h-1zM414.33 35h1v2h-1zM414.33 41h1v2h-1zM414.33 43h1v1h-1zM414.33 44h1v1h-1zM414.33 45h1v1h-1zM414.33 48h1v1h-1zM414.33 49h1v2h-1zM414.33 51h1v1h-1zM415.33 0h1v1h-1zM415.33 1h1v2h-1zM415.33 5h1v1h-1zM415.33 6h1v1h-1zM415.33 12h1v1h-1zM415.33 21h1v1h-1zM415.33 30h1v1h-1zM415.33 39h1v1h-1zM415.33 40h1v1h-1zM415.33 42h1v1h-1zM415.33 43h1v1h-1zM415.33 46h1v1h-1zM415.33 50h1v1h-1zM415.33 51h1v1h-1zM415.33 52h1v2h-1zM416.33 21h1v1h-1zM416.33 31h1v2h-1zM416.33 34h1v1h-1zM416.33 38h1v2h-1zM416.33 41h1v1h-1zM416.33 45h1v1h-1zM416.33 48h1v1h-1zM416.33 49h1v1h-1zM417.33 9h1v1h-1zM417.33 11h1v1h-1zM417.33 28h1v2h-1zM417.33 30h1v2h-1zM417.33 36h1v1h-1zM417.33 41h1v1h-1zM417.33 42h1v1h-1zM417.33 49h1v1h-1zM417.33 53h1v1h-1zM418.33 5h1v1h-1zM418.33 8h1v2h-1zM418.33 10h1v1h-1zM418.33 11h1v1h-1zM418.33 18h1v1h-1zM418.33 19h1v2h-1zM418.33 21h1v1h-1zM418.33 22h1v1h-1zM418.33 35h1v1h-1zM418.33 37h1v2h-1zM418.33 51h1v1h-1zM419.33 4h1v2h-1zM419.33 6h1v2h-1zM419.33 20h1v1h-1zM419.33 24h1v2h-1zM419.33 27h1v2h-1zM419.33 30h1v1h-1zM419.33 31h1v1h-1zM419.33 34h1v1h-1zM419.33 38h1v1h-1zM419.33 43h1v1h-1zM419.33 46h1v1h-1zM420.33 4h1v1h-1zM420.33 6h1v1h-1zM420.33 8h1v1h-1zM420.33 18h1v1h-1zM420.33 21h1v1h-1zM420.33 24h1v1h-1zM420.33 25h1v1h-1zM420.33 27h1v2h-1zM420.33 42h1v2h-1zM420.33 49h1v2h-1zM421.33 0h1v1h-1zM421.33 15h1v1h-1zM421.33 17h1v1h-1zM421.33 18h1v2h-1zM421.33 22h1v1h-1zM421.33 29h1v1h-1zM421.33 31h1v1h-1zM421.33 34h1v1h-1zM421.33 35h1v2h-1zM421.33 46h1v1h-1zM421.33 47h1v1h-1zM421.33 48h1v2h-1zM421.33 50h1v1h-1zM422.33 4h1v2h-1zM422.33 6h1v2h-1zM422.33 12h1v1h-1zM422.33 13h1v1h-1zM422.33 17h1v1h-1zM422.33 18h1v1h-1zM422.33 21h1v2h-1zM422.33 23h1v1h-1zM422.33 26h1v1h-1zM422.33 27h1v1h-1zM422.33 35h1v2h-1zM422.33 37h1v1h-1zM422.33 40h1v1h-1zM422.33 41h1v1h-1zM422.33 42h1v1h-1zM422.33 46h1v1h-1zM423.33 0h1v1h-1zM423.33 1h1v1h-1zM423.33 3h1v1h-1zM423.33 4h1v1h-1zM423.33 7h1v1h-1zM423.33 8h1v1h-1zM423.33 10h1v1h-1zM423.33 14h1v1h-1zM423.33 15h1v1h-1zM423.33 17h1v1h-1zM423.33 20h1v1h-1zM423.33 26h1v2h-1zM423.33 48h1v1h-1zM423.33 51h1v1h-1zM423.33 52h1v2h-1zM424.33 0h1v2h-1zM424.33 6h1v1h-1zM424.33 7h1v1h-1zM424.33 10h1v2h-1zM424.33 13h1v2h-1zM424.33 19h1v1h-1zM424.33 31h1v2h-1zM424.33 35h1v1h-1zM424.33 37h1v1h-1zM424.33 38h1v2h-1zM424.33 41h1v2h-1zM424.33 44h1v1h-1zM424.33 50h1v1h-1zM425.33 5h1v1h-1zM425.33 10h1v1h-1zM425.33 11h1v1h-1zM425.33 13h1v2h-1zM425.33 19h1v1h-1zM425.33 24h1v1h-1zM425.33 25h1v1h-1zM425.33 27h1v1h-1zM425.33 28h1v1h-1zM425.33 29h1v1h-1zM425.33 36h1v2h-1zM425.33 39h1v2h-1zM425.33 45h1v1h-1zM426.33 6h1v1h-1zM426.33 19h1v1h-1zM426.33 22h1v2h-1zM426.33 24h1v1h-1zM426.33 31h1v1h-1zM426.33 37h1v2h-1zM426.33 41h1v1h-1zM426.33 42h1v1h-1zM426.33 43h1v1h-1zM427.33 3h1v2h-1zM427.33 7h1v1h-1zM427.33 12h1v1h-1zM427.33 19h1v2h-1zM427.33 28h1v1h-1zM427.33 30h1v2h-1zM427.33 34h1v1h-1zM427.33 37h1v1h-1zM427.33 39h1v1h-1zM427.33 42h1v1h-1zM427.33 49h1v1h-1zM428.33 0h1v2h-1zM428.33 2h1v1h-1zM428.33 7h1v1h-1zM428.33 9h1v1h-1zM428.33 10h1v1h-1zM428.33 11h1v1h-1zM428.33 14h1v1h-1zM428.33 19h1v1h-1zM428.33 32h1v2h-1zM428.33 34h1v1h-1zM428.33 38h1v2h-1zM428.33 41h1v2h-1zM429.33 4h1v1h-1zM429.33 8h1v1h-1zM429.33 14h1v1h-1zM429.33 15h1v1h-1zM429.33 30h1v1h-1zM429.33 32h1v2h-1zM429.33 36h1v1h-1zM429.33 38h1v1h-1zM429.33 41h1v2h-1zM429.33 44h1v1h-1zM429.33 45h1v1h-1zM429.33 46h1v1h-1zM429.33 50h1v1h-1zM429.33 51h1v1h-1zM429.33 52h1v2h-1zM430.33 7h1v1h-1zM430.33 8h1v1h-1zM430.33 9h1v1h-1zM430.33 13h1v1h-1zM430.33 15h1v1h-1zM430.33 16h1v1h-1zM430.33 23h1v2h-1zM430.33 25h1v2h-1zM430.33 27h1v1h-1zM430.33 37h1v1h-1zM430.33 38h1v2h-1zM430.33 40h1v2h-1zM430.33 52h1v1h-1zM431.33 0h1v1h-1zM431.33 3h1v1h-1zM431.33 5h1v2h-1zM431.33 9h1v1h-1zM431.33 13h1v1h-1zM431.33 14h1v1h-1zM431.33 16h1v2h-1zM431.33 18h1v1h-1zM431.33 29h1v1h-1zM431.33 31h1v1h-1zM431.33 32h1v2h-1zM431.33 35h1v2h-1zM431.33 37h1v1h-1zM431.33 41h1v2h-1zM431.33 43h1v1h-1zM431.33 44h1v1h-1zM432.33 0h1v1h-1zM432.33 2h1v1h-1zM432.33 7h1v1h-1zM432.33 17h1v1h-1zM432.33 19h1v1h-1zM432.33 21h1v1h-1zM432.33 29h1v1h-1zM432.33 34h1v2h-1zM432.33 52h1v1h-1zM433.33 10h1v1h-1zM433.33 14h1v1h-1zM433.33 15h1v1h-1zM433.33 16h1v1h-1zM433.33 17h1v2h-1zM433.33 19h1v1h-1zM433.33 20h1v1h-1zM433.33 22h1v2h-1zM433.33 24h1v1h-1zM433.33 25h1v1h-1zM433.33 26h1v2h-1zM433.33 28h1v1h-1zM433.33 35h1v1h-1zM433.33 44h1v1h-1zM433.33 47h1v1h-1zM433.33 49h1v2h-1zM433.33 53h1v1h-1zM434.33 0h1v1h-1zM434.33 1h1v1h-1zM434.33 19h1v1h-1zM434.33 20h1v1h-1zM434.33 21h1v1h-1zM434.33 25h1v1h-1zM434.33 32h1v2h-1zM434.33 36h1v1h-1zM434.33 42h1v1h-1zM435.33 0h1v1h-1zM435.33 5h1v2h-1zM435.33 11h1v1h-1zM435.33 12h1v2h-1zM435.33 15h1v2h-1zM435.33 17h1v1h-1zM435.33 24h1v1h-1zM435.33 34h1v2h-1zM435.33 48h1v1h-1zM435.33 49h1v1h-1z"/>
<path fill="#ffb400" d="M112 9h1v1h-1zM112 22h1v1h-1zM112 23h1v1h-1zM112 24h1v1h-1zM112 25h1v1h-1zM112 31h1v2h-1zM112 34h1v1h-1zM112 35h1v1h-1zM112 36h1v1h-1zM112 45h1v1h-1zM113 0h1v1h-1zM113 49h1v1h-1zM114 3h1v1h-1zM114 13h1v1h-1zM114 14h1v1h-1zM114 17h1v2h-1zM114 23h1v1h-1zM114 31h1v1h-1zM114 34h1v2h-1zM114 40h1v1h-1zM114 41h1v2h-1zM114 43h1v1h-1zM114 44h1v1h-1zM114 46h1v1h-1zM114 48h1v1h-1zM114 50h1v1h-1zM115 11h1v1h-1zM115 16h1v1h-1zM115 18h1v1h-1zM115 21h1v2h-1zM115 24h1v1h-1zM115 28h1v1h-1zM115 29h1v1h-1zM115 33h1v1h-1zM115 34h1v1h-1zM115 40h1v2h-1zM116 1h1v1h-1zM116 22h1v1h-1zM116 25h1v1h-1zM116 32h1v2h-1zM116 36h1v1h-1zM116 38h1v2h-1zM117 5h1v2h-1zM117 11h1v1h-1zM117 31h1v2h-1zM117 33h1v1h-1zM117 37h1v1h-1zM117 41h1v1h-1zM117 52h1v1h-1zM118 9h1v1h-1zM118 38h1v2h-1zM118 52h1v2h-1zM119 0h1v2h-1zM119 2h1v1h-1zM119 21h1v1h-1zM119 22h1v2h-1zM119 29h1v1h-1zM119 41h1v2h-1zM119 43h1v2h-1zM120 17h1v1h-1zM120 29h1v1h-1zM120 38h1v1h-1zM120 51h1v1h-1zM121 4h1v1h-1zM121 7h1v2h-1zM121 14h1v2h-1zM121 21h1v1h-1zM121 37h1v1h-1zM121 44h1v1h-1zM122 13h1v1h-1zM122 16h1v1h-1zM122 17h1v1h-1zM122 34h1v1h-1zM122 41h1v1h-1zM122 42h1v2h-1zM122 52h1v1h-1zM123 6h1v2h-1zM123 16h1v1h-1zM123 20h1v1h-1zM123 34h1v2h-1zM123 37h1v2h-1zM123 46h1v1h-1zM123 47h1v1h-1zM123 49h1v2h-1zM124 6h1v2h-1zM124 9h1v2h-1zM124 11h1v1h-1zM124 30h1v1h-1zM124 44h1v2h-1zM124 49h1v1h-1zM124 53h1v1h-1zM125 8h1v1h-1zM125 10h1v2h-1zM125 23h1v2h-1zM125 25h1v2h-1zM125 34h1v1h-1zM125 35h1v1h-1zM125 39h1v1h-1zM125 51h1v1h-1zM125 52h1v2h-1zM126 10h1v1h-1zM126 29h1v2h-1zM126 31h1v1h-1zM126 34h1v1h-1zM126 38h1v1h-1zM126 46h1v2h-1zM126 51h1v1h-1zM127 4h1v1h-1zM127 7h1v1h-1zM127 15h1v1h-1zM127 16h1v1h-1zM127 17h1v1h-1zM127 37h1v2h-1zM127 45h1v1h-1zM127 49h1v2h-1zM128 5h1v2h-1zM128 17h1v1h-1zM128 18h1v1h-1zM128 28h1v1h-1zM128 35h1v1h-1zM129 0h1v1h-1zM129 2h1v1h-1zM129 5h1v2h-1zM129 10h1v1h-1zM129 23h1v1h-1zM129 26h1v1h-1zM129 30h1v1h-1zM129 33h1v1h-1zM129 34h1v1h-1zM129 39h1v2h-1zM129 42h1v2h-1zM129 52h1v1h-1zM130 2h1v1h-1zM130 23h1v2h-1zM130 32h1v2h-1zM130 34h1v1h-1zM130 37h1v1h-1zM130 51h1v1h-1zM131 0h1v2h-1zM131 16h1v1h-1zM131 17h1v2h-1zM131 29h1v1h-1zM131 36h1v1h-1zM131 40h1v1h-1zM131 43h1v1h-1zM131 44h1v2h-1zM131 51h1v1h-1zM132 0h1v1h-1zM132 5h1v2h-1zM132 17h1v2h-1zM132 33h1v1h-1zM132 51h1v1h-1zM133 6h1v1h-1zM133 23h1v1h-1zM133 25h1v1h-1zM133 33h1v1h-1zM133 37h1v2h-1zM133 40h1v2h-1zM133 44h1v2h-1zM134 4h1v2h-1zM134 15h1v1h-1zM134 28h1v2h-1zM134 41h1v1h-1zM135 1h1v1h-1zM135 5h1v1h-1zM135 6h1v1h-1zM135 15h1v1h-1zM135 19h1v1h-1zM135 21h1v1h-1zM135 29h1v2h-1zM135 31h1v1h-1zM136 22h1v2h-1zM136 47h1v1h-1zM136 48h1v1h-1zM136 53h1v1h-1zM137 32h1v2h-1zM138 6h1v1h-1zM138 9h1v1h-1zM138 11h1v1h-1zM138 32h1v1h-1zM138 37h1v1h-1zM138 40h1v1h-1zM139 5h1v1h-1zM139 8h1v2h-1zM139 16h1v1h-1zM139 28h1v2h-1zM139 30h1v1h-1zM139 48h1v1h-1zM139 50h1v1h-1zM139 51h1v1h-1zM140 32h1v1h-1zM140 42h1v1h-1zM140 43h1v2h-1zM140 50h1v2h-1zM140 53h1v1h-1zM141 19h1v1h-1zM141 25h1v1h-1zM141 29h1v1h-1zM141 41h1v2h-1zM142 18h1v1h-1zM142 27h1v2h-1zM142 34h1v2h-1zM143 1h1v2h-1zM143 11h1v1h-1zM143 21h1v1h-1zM143 22h1v2h-1zM143 32h1v1h-1zM143 33h1v1h-1zM143 38h1v1h-1zM143 47h1v2h-1zM143 49h1v1h-1zM144 4h1v1h-1zM144 9h1v2h-1zM144 13h1v1h-1zM144 14h1v1h-1zM144 17h1v1h-1zM144 20h1v2h-1zM144 39h1v1h-1zM144 43h1v1h-1zM144 50h1v1h-1zM145 0h1v1h-1zM145 17h1v1h-1zM145 26h1v2h-1zM145 30h1v1h-1zM145 31h1v1h-1zM145 37h1v1h-1zM145 42h1v2h-1zM145 46h1v1h-1zM145 48h1v2h-1zM146 31h1v2h-1zM146 41h1v1h-1zM146 43h1v1h-1zM147 5h1v2h-1zM147 7h1v1h-1zM147 21h1v2h-1zM147 29h1v1h-1zM147 32h1v2h-1zM147 34h1v2h-1zM147 38h1v1h-1zM147 49h1v2h-1zM147 53h1v1h-1zM148 37h1v1h-1zM148 38h1v1h-1zM148 47h1v1h-1zM149 15h1v1h-1zM149 17h1v1h-1zM149 53h1v1h-1zM150 6h1v2h-1zM151 3h1v2h-1zM151 7h1v2h-1zM151 14h1v2h-1zM151 16h1v1h-1zM151 19h1v1h-1zM151 23h1v1h-1zM151 24h1v2h-1zM151 27h1v1h-1zM151 28h1v1h-1zM151 29h1v1h-1zM151 33h1v1h-1zM152 2h1v2h-1zM152 20h1v2h-1zM152 23h1v2h-1zM152 26h1v1h-1zM152 32h1v1h-1zM152 34h1v1h-1zM152 44h1v1h-1zM153 1h1v1h-1zM153 15h1v1h-1zM153 17h1v1h-1zM153 30h1v2h-1zM153 48h1v1h-1zM154 6h1v1h-1zM154 12h1v1h-1zM154 16h1v1h-1zM154 22h1v1h-1zM154 23h1v2h-1zM154 42h1v1h-1zM155 1h1v1h-1zM155 4h1v1h-1zM155 15h1v2h-1zM155 23h1v1h-1zM155 25h1v1h-1zM156 20h1v2h-1zM156 22h1v1h-1zM156 31h1v1h-1zM156 42h1v1h-1zM156 43h1v2h-1zM156 45h1v1h-1zM156 49h1v2h-1zM157 16h1v1h-1zM157 50h1v1h-1zM158 3h1v1h-1zM158 4h1v1h-1zM158 7h1v1h-1zM158 17h1v1h-1zM158 20h1v2h-1zM158 23h1v1h-1zM158 29h1v1h-1zM158 32h1v2h-1zM158 38h1v1h-1zM158 39h1v1h-1zM158 47h1v2h-1zM158 51h1v2h-1zM159 1h1v1h-1zM159 7h1v2h-1zM159 10h1v1h-1zM159 13h1v1h-1zM159 22h1v2h-1zM159 38h1v2h-1zM159 42h1v1h-1zM159 43h1v1h-1zM159 50h1v1h-1zM160 6h1v1h-1zM160 7h1v2h-1zM160 16h1v1h-1zM160 21h1v1h-1zM160 41h1v1h-1zM160 49h1v1h-1zM161 7h1v1h-1zM161 9h1v1h-1zM161 18h1v1h-1zM161 21h1v1h-1zM161 27h1v1h-1zM161 30h1v2h-1zM161 51h1v1h-1zM161 53h1v1h-1zM162 0h1v1h-1zM162 16h1v1h-1zM163 4h1v1h-1zM163 7h1v1h-1zM163 18h1v1h-1zM163 26h1v2h-1zM163 41h1v2h-1zM164 5h1v1h-1zM164 6h1v1h-1zM164 7h1v2h-1zM164 9h1v2h-1zM164 17h1v1h-1zM164 25h1v2h-1zM164 38h1v1h-1zM164 42h1v2h-1zM164 46h1v1h-1zM164 49h1v2h-1zM165 4h1v1h-1zM165 14h1v1h-1zM165 15h1v2h-1zM165 24h1v2h-1zM165 29h1v1h-1zM165 33h1v1h-1zM165 35h1v2h-1zM165 39h1v2h-1zM166 1h1v1h-1zM166 3h1v2h-1zM166 11h1v1h-1zM166 20h1v1h-1zM166 21h1v1h-1zM166 31h1v1h-1zM166 33h1v1h-1zM166 37h1v2h-1zM166 39h1v1h-1zM166 49h1v1h-1zM166 52h1v1h-1zM167 9h1v1h-1zM167 15h1v1h-1zM167 21h1v1h-1zM167 26h1v1h-1zM167 44h1v1h-1zM167 46h1v2h-1zM167 49h1v2h-1zM168 13h1v1h-1zM168 16h1v1h-1zM168 25h1v1h-1zM168 29h1v1h-1zM168 41h1v2h-1zM168 43h1v1h-1zM168 45h1v1h-1zM168 48h1v1h-1zM168 53h1v1h-1zM169 3h1v1h-1zM169 8h1v1h-1zM169 23h1v1h-1zM169 26h1v1h-1zM169 32h1v1h-1zM169 36h1v1h-1zM169 49h1v1h-1zM170 11h1v2h-1zM170 15h1v1h-1zM170 20h1v1h-1zM170 27h1v1h-1zM170 40h1v1h-1zM170 41h1v1h-1zM171 7h1v1h-1zM171 36h1v2h-1zM171 49h1v2h-1zM172 9h1v1h-1zM172 13h1v2h-1zM172 19h1v1h-1zM172 24h1v1h-1zM172 49h1v1h-1zM173 0h1v1h-1zM173 31h1v1h-1zM173 33h1v2h-1zM173 40h1v1h-1zM173 41h1v1h-1zM173 53h1v1h-1zM174 10h1v1h-1zM174 11h1v1h-1zM174 19h1v2h-1zM174 38h1v1h-1zM174 41h1v1h-1zM175 20h1v1h-1zM175 28h1v2h-1zM175 41h1v2h-1zM175 43h1v1h-1zM175 44h1v1h-1zM175 45h1v1h-1zM175 52h1v1h-1zM175 53h1v1h-1zM176 7h1v1h-1zM176 8h1v2h-1zM176 13h1v1h-1zM176 15h1v1h-1zM176 18h1v1h-1zM176 22h1v1h-1zM176 39h1v1h-1zM176 49h1v1h-1zM176 52h1v1h-1zM177 5h1v2h-1zM177 25h1v1h-1zM177 35h1v1h-1zM178 10h1v2h-1zM178 14h1v1h-1zM178 24h1v2h-1zM178 35h1v2h-1zM178 46h1v2h-1zM178 48h1v2h-1zM179 0h1v1h-1zM179 5h1v2h-1zM179 8h1v1h-1zM179 9h1v1h-1zM179 14h1v2h-1zM179 32h1v2h-1zM179 45h1v2h-1zM179 47h1v1h-1zM179 50h1v1h-1zM180 1h1v2h-1zM180 3h1v2h-1zM180 6h1v1h-1zM180 30h1v1h-1zM180 37h1v1h-1zM180 44h1v1h-1zM180 45h1v2h-1zM180 47h1v2h-1zM180 53h1v1h-1zM181 1h1v1h-1zM181 4h1v2h-1zM181 10h1v2h-1zM181 15h1v1h-1zM181 32h1v2h-1zM181 34h1v1h-1zM181 37h1v1h-1zM181 44h1v1h-1zM181 52h1v2h-1zM182 0h1v1h-1zM182 7h1v1h-1zM182 20h1v1h-1zM182 38h1v1h-1zM182 43h1v1h-1zM182 45h1v2h-1zM182 48h1v1h-1zM183 6h1v1h-1zM183 10h1v1h-1zM183 11h1v1h-1zM183 14h1v1h-1zM183 15h1v2h-1zM183 22h1v1h-1zM183 26h1v1h-1zM183 33h1v2h-1zM183 39h1v1h-1zM183 41h1v1h-1zM183 46h1v1h-1zM183 52h1v1h-1zM183 53h1v1h-1zM184 16h1v1h-1zM184 19h1v1h-1zM184 23h1v1h-1zM184 27h1v1h-1zM184 28h1v2h-1zM184 41h1v2h-1zM184 52h1v1h-1zM185 7h1v1h-1zM185 10h1v2h-1zM185 23h1v1h-1zM185 27h1v1h-1zM185 53h1v1h-1zM186 14h1v2h-1zM186 26h1v2h-1zM186 34h1v2h-1zM186 37h1v2h-1zM187 8h1v2h-1zM187 12h1v1h-1zM187 20h1v1h-1zM187 21h1v1h-1zM187 31h1v1h-1zM187 35h1v2h-1zM187 38h1v1h-1zM187 40h1v1h-1zM187 41h1v1h-1zM188 16h1v1h-1zM188 20h1v2h-1zM188 23h1v1h-1zM188 24h1v1h-1zM189 3h1v1h-1zM189 10h1v1h-1zM190 5h1v1h-1zM190 10h1v1h-1zM190 13h1v1h-1zM190 14h1v1h-1zM190 18h1v1h-1zM190 25h1v2h-1zM190 31h1v2h-1zM190 42h1v2h-1zM190 53h1v1h-1zM191 5h1v2h-1zM191 25h1v1h-1zM191 26h1v1h-1zM191 27h1v1h-1zM191 33h1v1h-1zM191 39h1v1h-1zM191 43h1v2h-1zM191 45h1v1h-1zM191 47h1v1h-1zM191 48h1v2h-1zM191 51h1v2h-1zM234.33 11h1v1h-1zM234.33 13h1v2h-1zM234.33 15h1v1h-1zM234.33 20h1v1h-1zM234.33 30h1v2h-1zM234.33 32h1v2h-1zM234.33 44h1v2h-1zM234.33 46h1v1h-1zM235.33 16h1v1h-1zM235.33 22h1v1h-1zM235.33 25h1v2h-1zM235.33 37h1v1h-1zM235.33 38h1v1h-1zM235.33 39h1v2h-1zM235.33 43h1v2h-1zM235.33 50h1v1h-1zM236.33 19h1v2h-1zM236.33 26h1v1h-1zM236.33 34h1v1h-1zM236.33 35h1v1h-1zM237.33 4h1v2h-1zM237.33 9h1v1h-1zM237.33 21h1v2h-1zM237.33 23h1v1h-1zM237.33 30h1v1h-1zM237.33 33h1v1h-1zM237.33 44h1v2h-1zM237.33 52h1v2h-1zM238.33 1h1v1h-1zM238.33 2h1v1h-1zM238.33 7h1v1h-1zM238.33 9h1v1h-1zM238.33 10h1v1h-1zM238.33 21h1v1h-1zM238.33 26h1v1h-1zM238.33 30h1v1h-1zM238.33 40h1v1h-1zM238.33 50h1v1h-1zM238.33 52h1v1h-1zM238.33 53h1v1h-1zM239.33 19h1v1h-1zM239.33 20h1v1h-1zM239.33 46h1v1h-1zM239.33 47h1v1h-1zM239.33 50h1v1h-1zM240.33 2h1v2h-1zM240.33 21h1v1h-1zM240.33 26h1v2h-1zM240.33 30h1v1h-1zM241.33 3h1v1h-1zM241.33 13h1v1h-1zM241.33 21h1v1h-1zM241.33 26h1v2h-1zM241.33 48h1v2h-1zM242.33 4h1v1h-1zM242.33 14h1v1h-1zM242.33 25h1v2h-1zM242.33 46h1v2h-1zM243.33 2h1v1h-1zM243.33 19h1v1h-1zM243.33 27h1v1h-1zM243.33 48h1v2h-1zM244.33 20h1v1h-1zM244.33 27h1v1h-1zM244.33 46h1v1h-1zM244.33 47h1v1h-1zM244.33 48h1v1h-1zM244.33 52h1v1h-1zM245.33 1h1v1h-1zM245.33 7h1v2h-1zM245.33 26h1v1h-1zM245.33 34h1v1h-1zM245.33 35h1v1h-1zM245.33 46h1v2h-1zM246.33 5h1v1h-1zM246.33 8h1v1h-1zM246.33 9h1v1h-1zM246.33 13h1v1h-1zM246.33 20h1v1h-1zM246.33 32h1v1h-1zM246.33 36h1v2h-1zM246.33 38h1v2h-1zM246.33 48h1v1h-1zM246.33 51h1v1h-1zM247.33 7h1v1h-1zM247.33 11h1v1h-1zM247.33 16h1v1h-1zM247.33 20h1v1h-1zM247.33 23h1v1h-1zM247.33 28h1v1h-1zM247.33 33h1v1h-1zM248.33 3h1v1h-1zM248.33 10h1v1h-1zM248.33 15h1v2h-1zM248.33 34h1v1h-1zM248.33 42h1v2h-1zM248.33 47h1v2h-1zM249.33 5h1v1h-1zM249.33 6h1v1h-1zM249.33 9h1v1h-1zM249.33 32h1v1h-1zM250.33 0h1v1h-1zM250.33 4h1v1h-1zM250.33 17h1v2h-1zM250.33 21h1v1h-1zM250.33 38h1v1h-1zM251.33 6h1v1h-1zM251.33 12h1v1h-1zM251.33 30h1v2h-1zM251.33 41h1v1h-1zM252.33 23h1v2h-1zM252.33 38h1v1h-1zM252.33 45h1v2h-1zM253.33 3h1v2h-1zM253.33 15h1v1h-1zM253.33 16h1v1h-1zM253.33 30h1v1h-1zM253.33 33h1v2h-1zM253.33 53h1v1h-1zM254.33 2h1v2h-1zM254.33 7h1v1h-1zM254.33 11h1v1h-1zM254.33 15h1v1h-1zM254.33 22h1v1h-1zM254.33 27h1v2h-1zM254.33 43h1v2h-1zM255.33 0h1v1h-1zM255.33 11h1v1h-1zM255.33 34h1v1h-1zM255.33 35h1v1h-1zM255.33 39h1v1h-1zM255.33 42h1v1h-1zM256.33 0h1v1h-1zM256.33 3h1v2h-1zM256.33 14h1v2h-1zM256.33 18h1v1h-1zM256.33 24h1v2h-1zM256.33 33h1v1h-1zM256.33 34h1v1h-1zM256.33 37h1v1h-1zM256.33 41h1v1h-1zM256.33 48h1v2h-1zM256.33 52h1v2h-1zM257.33 19h1v1h-1zM257.33 25h1v1h-1zM257.33 30h1v1h-1zM257.33 34h1v1h-1zM257.33 36h1v1h-1zM257.33 44h1v1h-1zM257.33 47h1v1h-1zM258.33 1h1v1h-1zM258.33 11h1v1h-1zM258.33 22h1v1h-1zM258.33 26h1v1h-1zM258.33 30h1v1h-1zM258.33 41h1v1h-1zM258.33 47h1v2h-1zM259.33 5h1v2h-1zM259.33 21h1v1h-1zM259.33 26h1v1h-1zM259.33 36h1v2h-1zM259.33 46h1v1h-1zM260.33 0h1v1h-1zM260.33 15h1v2h-1zM260.33 19h1v2h-1zM260.33 38h1v1h-1zM260.33 39h1v1h-1zM260.33 47h1v1h-1zM260.33 49h1v2h-1zM261.33 15h1v1h-1zM261.33 16h1v1h-1zM261.33 19h1v1h-1zM261.33 22h1v1h-1zM261.33 28h1v2h-1zM261.33 39h1v1h-1zM261.33 44h1v2h-1zM262.33 7h1v1h-1zM262.33 31h1v2h-1zM262.33 44h1v1h-1zM262.33 47h1v1h-1zM262.33 51h1v1h-1zM263.33 4h1v2h-1zM263.33 15h1v1h-1zM263.33 20h1v1h-1zM263.33 24h1v1h-1zM263.33 31h1v2h-1zM263.33 33h1v1h-1zM263.33 42h1v1h-1zM264.33 3h1v1h-1zM264.33 16h1v2h-1zM264.33 20h1v2h-1zM264.33 29h1v1h-1zM264.33 38h1v1h-1zM265.33 17h1v1h-1zM265.33 34h1v2h-1zM266.33 11h1v1h-1zM266.33 13h1v1h-1zM266.33 22h1v2h-1zM266.33 24h1v1h-1zM266.33 28h1v2h-1zM266.33 32h1v1h-1zM266.33 39h1v2h-1zM267.33 3h1v1h-1zM267.33 8h1v1h-1zM267.33 9h1v1h-1zM267.33 23h1v1h-1zM267.33 33h1v1h-1zM267.33 41h1v1h-1zM268.33 3h1v1h-1zM268.33 10h1v1h-1zM268.33 12h1v2h-1zM268.33 14h1v2h-1zM268.33 16h1v2h-1zM268.33 20h1v2h-1zM268.33 25h1v2h-1zM268.33 29h1v1h-1zM268.33 37h1v1h-1zM268.33 43h1v1h-1zM268.33 44h1v1h-1zM268.33 45h1v2h-1zM269.33 8h1v1h-1zM269.33 35h1v2h-1zM270.33 3h1v2h-1zM270.33 18h1v2h-1zM270.33 24h1v1h-1zM270.33 25h1v1h-1zM270.33 29h1v1h-1zM270.33 42h1v2h-1zM271.33 0h1v2h-1zM271.33 2h1v1h-1zM271.33 7h1v2h-1zM271.33 12h1v1h-1zM271.33 16h1v2h-1zM271.33 18h1v2h-1zM271.33 21h1v2h-1zM271.33 27h1v1h-1zM271.33 30h1v2h-1zM271.33 39h1v1h-1zM271.33 41h1v1h-1zM272.33 13h1v2h-1zM272.33 15h1v1h-1zM272.33 20h1v1h-1zM272.33 23h1v1h-1zM272.33 27h1v1h-1zM272.33 32h1v1h-1zM272.33 40h1v1h-1zM272.33 42h1v1h-1zM272.33 43h1v1h-1zM273.33 0h1v2h-1zM273.33 4h1v2h-1zM273.33 7h1v1h-1zM273.33 8h1v2h-1zM273.33 17h1v1h-1zM273.33 36h1v2h-1zM273.33 41h1v2h-1zM273.33 50h1v1h-1zM273.33 51h1v1h-1zM274.33 0h1v1h-1zM274.33 1h1v1h-1zM274.33 4h1v1h-1zM274.33 6h1v2h-1zM274.33 9h1v2h-1zM274.33 11h1v1h-1zM274.33 13h1v2h-1zM274.33 25h1v1h-1zM274.33 34h1v2h-1zM274.33 37h1v1h-1zM274.33 49h1v1h-1zM275.33 4h1v1h-1zM275.33 13h1v2h-1zM275.33 16h1v1h-1zM275.33 19h1v1h-1zM275.33 29h1v2h-1zM275.33 33h1v2h-1zM275.33 37h1v2h-1zM275.33 42h1v1h-1zM275.33 50h1v1h-1zM275.33 53h1v1h-1zM276.33 1h1v1h-1zM276.33 10h1v1h-1zM276.33 20h1v1h-1zM276.33 22h1v1h-1zM276.33 25h1v1h-1zM276.33 39h1v2h-1zM277.33 11h1v1h-1zM277.33 14h1v1h-1zM277.33 15h1v1h-1zM277.33 26h1v1h-1zM277.33 29h1v1h-1zM277.33 31h1v2h-1zM277.33 40h1v1h-1zM277.33 43h1v1h-1zM277.33 51h1v1h-1zM277.33 52h1v2h-1zM278.33 1h1v1h-1zM278.33 4h1v2h-1zM278.33 7h1v1h-1zM278.33 8h1v1h-1zM278.33 12h1v1h-1zM278.33 16h1v1h-1zM278.33 22h1v1h-1zM278.33 27h1v1h-1zM278.33 33h1v1h-1zM279.33 13h1v1h-1zM279.33 23h1v1h-1zM279.33 30h1v1h-1zM279.33 31h1v2h-1zM279.33 43h1v1h-1zM279.33 47h1v2h-1zM279.33 53h1v1h-1zM280.33 11h1v2h-1zM280.33 16h1v1h-1zM280.33 26h1v1h-1zM280.33 27h1v2h-1zM280.33 35h1v2h-1zM280.33 43h1v2h-1zM280.33 52h1v2h-1zM281.33 2h1v1h-1zM281.33 8h1v2h-1zM281.33 17h1v1h-1zM281.33 18h1v2h-1zM281.33 21h1v1h-1zM281.33 29h1v2h-1zM282.33 2h1v2h-1zM282.33 7h1v2h-1zM282.33 17h1v1h-1zM282.33 22h1v1h-1zM282.33 24h1v1h-1zM282.33 34h1v1h-1zM282.33 38h1v1h-1zM282.33 41h1v1h-1zM283.33 3h1v2h-1zM283.33 13h1v1h-1zM283.33 26h1v1h-1zM283.33 29h1v1h-1zM283.33 33h1v1h-1zM283.33 41h1v1h-1zM283.33 46h1v2h-1zM284.33 10h1v1h-1zM284.33 13h1v1h-1zM284.33 27h1v1h-1zM284.33 33h1v1h-1zM284.33 41h1v1h-1zM284.33 46h1v1h-1zM285.33 1h1v1h-1zM285.33 22h1v1h-1zM285.33 36h1v1h-1zM285.33 39h1v2h-1zM286.33 0h1v1h-1zM286.33 4h1v2h-1zM286.33 10h1v2h-1zM286.33 29h1v1h-1zM287.33 3h1v1h-1zM287.33 11h1v2h-1zM287.33 13h1v1h-1zM287.33 22h1v2h-1zM287.33 31h1v1h-1zM287.33 47h1v2h-1zM288.33 2h1v2h-1zM288.33 10h1v1h-1zM288.33 12h1v1h-1zM288.33 26h1v2h-1zM288.33 28h1v1h-1zM288.33 29h1v2h-1zM288.33 33h1v2h-1zM288.33 35h1v2h-1zM288.33 46h1v1h-1zM289.33 19h1v1h-1zM289.33 28h1v1h-1zM289.33 32h1v2h-1zM289.33 34h1v1h-1zM289.33 43h1v1h-1zM289.33 53h1v1h-1zM290.33 13h1v1h-1zM290.33 41h1v1h-1zM290.33 42h1v2h-1zM290.33 48h1v2h-1zM290.33 52h1v1h-1zM291.33 7h1v2h-1zM291.33 28h1v1h-1zM291.33 35h1v1h-1zM291.33 36h1v1h-1zM292.33 3h1v1h-1zM292.33 20h1v1h-1zM292.33 29h1v2h-1zM292.33 37h1v1h-1zM292.33 38h1v1h-1zM292.33 41h1v1h-1zM293.33 2h1v1h-1zM293.33 5h1v2h-1zM293.33 8h1v1h-1zM293.33 11h1v2h-1zM293.33 23h1v1h-1zM293.33 28h1v1h-1zM293.33 32h1v2h-1zM293.33 37h1v1h-1zM293.33 48h1v1h-1zM293.33 49h1v1h-1zM293.33 53h1v1h-1zM294.33 0h1v1h-1zM294.33 21h1v1h-1zM294.33 26h1v1h-1zM294.33 33h1v1h-1zM295.33 4h1v2h-1zM295.33 9h1v1h-1zM295.33 18h1v1h-1zM295.33 34h1v2h-1zM296.33 9h1v2h-1zM296.33 19h1v2h-1zM296.33 25h1v1h-1zM296.33 30h1v1h-1zM296.33 33h1v1h-1zM296.33 41h1v1h-1zM296.33 43h1v1h-1zM296.33 48h1v1h-1zM297.33 6h1v1h-1zM297.33 8h1v1h-1zM297.33 9h1v2h-1zM297.33 17h1v1h-1zM297.33 19h1v2h-1zM297.33 30h1v2h-1zM297.33 40h1v1h-1zM298.33 0h1v1h-1zM298.33 8h1v1h-1zM298.33 10h1v1h-1zM298.33 25h1v2h-1zM298.33 43h1v1h-1zM299.33 22h1v1h-1zM299.33 30h1v1h-1zM299.33 38h1v1h-1zM299.33 44h1v1h-1zM299.33 49h1v2h-1zM300.33 5h1v1h-1zM300.33 13h1v1h-1zM300.33 14h1v1h-1zM300.33 30h1v2h-1zM300.33 32h1v1h-1zM300.33 45h1v2h-1zM300.33 51h1v1h-1zM301.33 19h1v1h-1zM301.33 21h1v2h-1zM301.33 25h1v2h-1zM301.33 41h1v1h-1zM301.33 47h1v1h-1zM301.33 53h1v1h-1zM302.33 2h1v1h-1zM302.33 9h1v2h-1zM302.33 35h1v1h-1zM302.33 36h1v1h-1zM302.33 45h1v1h-1zM303.33 0h1v2h-1zM303.33 6h1v1h-1zM303.33 18h1v1h-1zM303.33 36h1v1h-1zM304.33 25h1v1h-1zM304.33 26h1v2h-1zM304.33 46h1v1h-1zM304.33 47h1v1h-1zM304.33 50h1v1h-1zM304.33 51h1v1h-1zM305.33 0h1v1h-1zM305.33 3h1v1h-1zM305.33 7h1v1h-1zM305.33 20h1v1h-1zM305.33 27h1v1h-1zM305.33 32h1v1h-1zM305.33 33h1v1h-1zM305.33 35h1v2h-1zM305.33 43h1v1h-1zM306.33 9h1v1h-1zM306.33 20h1v1h-1zM306.33 26h1v1h-1zM306.33 29h1v1h-1zM306.33 32h1v1h-1zM306.33 33h1v1h-1zM306.33 35h1v1h-1zM306.33 36h1v1h-1zM306.33 39h1v1h-1zM306.33 45h1v2h-1zM306.33 50h1v1h-1zM307.33 11h1v1h-1zM307.33 12h1v1h-1zM307.33 28h1v1h-1zM307.33 33h1v1h-1zM307.33 40h1v1h-1zM307.33 41h1v2h-1zM307.33 48h1v1h-1zM308.33 20h1v1h-1zM308.33 31h1v1h-1zM308.33 50h1v1h-1zM309.33 11h1v1h-1zM309.33 22h1v1h-1zM309.33 27h1v1h-1zM309.33 30h1v1h-1zM310.33 2h1v1h-1zM310.33 3h1v1h-1zM310.33 7h1v2h-1zM310.33 10h1v1h-1zM310.33 12h1v1h-1zM310.33 20h1v1h-1zM310.33 25h1v2h-1zM310.33 37h1v2h-1zM310.33 41h1v1h-1zM311.33 2h1v2h-1zM311.33 7h1v1h-1zM311.33 9h1v1h-1zM311.33 14h1v1h-1zM311.33 16h1v2h-1zM311.33 21h1v1h-1zM311.33 22h1v1h-1zM311.33 37h1v1h-1zM312.33 5h1v1h-1zM312.33 13h1v1h-1zM312.33 40h1v1h-1zM312.33 44h1v1h-1zM313.33 3h1v1h-1zM313.33 8h1v2h-1zM313.33 10h1v1h-1zM313.33 28h1v1h-1zM313.33 34h1v1h-1zM314.33 0h1v1h-1zM314.33 5h1v1h-1zM314.33 14h1v2h-1zM314.33 27h1v1h-1zM314.33 39h1v1h-1zM314.33 47h1v1h-1zM315.33 4h1v1h-1zM315.33 25h1v1h-1zM315.33 30h1v1h-1zM315.33 31h1v1h-1zM316.33 8h1v1h-1zM316.33 9h1v1h-1zM316.33 15h1v2h-1zM316.33 18h1v1h-1zM316.33 30h1v2h-1zM316.33 37h1v1h-1zM316.33 39h1v1h-1zM316.33 42h1v2h-1zM317.33 25h1v1h-1zM317.33 29h1v2h-1zM317.33 40h1v2h-1zM318.33 2h1v2h-1zM318.33 5h1v1h-1zM318.33 6h1v1h-1zM318.33 12h1v2h-1zM318.33 25h1v1h-1zM318.33 27h1v2h-1zM318.33 40h1v2h-1zM319.33 3h1v1h-1zM319.33 4h1v2h-1zM319.33 13h1v1h-1zM319.33 21h1v1h-1zM319.33 22h1v1h-1zM319.33 26h1v1h-1zM319.33 52h1v1h-1zM320.33 6h1v1h-1zM320.33 43h1v1h-1zM320.33 49h1v1h-1zM320.33 53h1v1h-1zM321.33 0h1v2h-1zM321.33 2h1v2h-1zM321.33 13h1v2h-1zM321.33 27h1v1h-1zM321.33 28h1v2h-1zM321.33 34h1v1h-1zM321.33 37h1v1h-1zM322.33 5h1v1h-1zM322.33 6h1v2h-1zM322.33 13h1v1h-1zM322.33 19h1v1h-1zM322.33 27h1v2h-1zM322.33 39h1v1h-1zM322.33 44h1v1h-1zM322.33 45h1v1h-1zM323.33 5h1v1h-1zM323.33 6h1v1h-1zM323.33 10h1v1h-1zM323.33 16h1v1h-1zM323.33 22h1v1h-1zM323.33 25h1v1h-1zM323.33 29h1v1h-1zM323.33 30h1v1h-1zM323.33 48h1v1h-1zM323.33 51h1v1h-1zM324.33 5h1v2h-1zM324.33 11h1v1h-1zM324.33 19h1v1h-1zM324.33 35h1v1h-1zM324.33 44h1v1h-1zM325.33 2h1v1h-1zM325.33 9h1v1h-1zM325.33 19h1v2h-1zM325.33 23h1v1h-1zM325.33 39h1v2h-1zM326.33 1h1v1h-1zM326.33 2h1v1h-1zM326.33 20h1v2h-1zM326.33 24h1v2h-1zM326.33 26h1v1h-1zM326.33 38h1v1h-1zM326.33 45h1v2h-1zM327.33 18h1v2h-1zM327.33 21h1v1h-1zM327.33 32h1v2h-1zM327.33 34h1v2h-1zM327.33 39h1v1h-1zM327.33 44h1v1h-1zM327.33 50h1v1h-1zM327.33 51h1v1h-1zM327.33 52h1v1h-1zM328.33 3h1v2h-1zM328.33 7h1v2h-1zM328.33 11h1v1h-1zM328.33 22h1v2h-1zM328.33 37h1v2h-1zM328.33 44h1v1h-1zM329.33 6h1v1h-1zM329.33 7h1v1h-1zM329.33 18h1v2h-1zM329.33 22h1v1h-1zM329.33 29h1v1h-1zM329.33 33h1v1h-1zM329.33 36h1v1h-1zM329.33 41h1v2h-1zM329.33 43h1v1h-1zM330.33 7h1v1h-1zM330.33 8h1v2h-1zM330.33 13h1v1h-1zM330.33 17h1v2h-1zM330.33 22h1v2h-1zM330.33 24h1v2h-1zM330.33 39h1v1h-1zM330.33 40h1v1h-1zM330.33 48h1v2h-1zM330.33 53h1v1h-1zM331.33 0h1v2h-1zM331.33 8h1v1h-1zM331.33 16h1v2h-1zM331.33 21h1v1h-1zM331.33 35h1v2h-1zM331.33 37h1v1h-1zM331.33 40h1v1h-1zM331.33 44h1v2h-1zM331.33 52h1v2h-1zM332.33 8h1v1h-1zM332.33 25h1v1h-1zM332.33 37h1v1h-1zM332.33 43h1v2h-1zM332.33 47h1v1h-1zM333.33 10h1v1h-1zM333.33 11h1v1h-1zM333.33 18h1v1h-1zM333.33 25h1v2h-1zM333.33 38h1v1h-1zM334.33 0h1v2h-1zM334.33 10h1v1h-1zM334.33 23h1v2h-1zM334.33 28h1v1h-1zM334.33 34h1v1h-1zM334.33 37h1v2h-1zM334.33 48h1v2h-1zM335.33 10h1v1h-1zM335.33 25h1v1h-1zM335.33 32h1v2h-1zM335.33 35h1v2h-1zM335.33 38h1v1h-1zM336.33 0h1v1h-1zM336.33 12h1v1h-1zM336.33 36h1v1h-1zM337.33 33h1v1h-1zM337.33 34h1v1h-1zM337.33 37h1v1h-1zM338.33 6h1v1h-1zM338.33 16h1v2h-1zM338.33 19h1v1h-1zM338.33 23h1v1h-1zM338.33 34h1v2h-1zM338.33 36h1v1h-1zM338.33 43h1v1h-1zM339.33 2h1v1h-1zM339.33 30h1v1h-1zM339.33 36h1v1h-1zM339.33 37h1v1h-1zM339.33 38h1v2h-1zM339.33 41h1v2h-1zM339.33 53h1v1h-1zM340.33 2h1v1h-1zM340.33 14h1v1h-1zM340.33 28h1v2h-1zM340.33 42h1v1h-1zM340.33 45h1v2h-1zM341.33 4h1v2h-1zM341.33 18h1v1h-1zM341.33 19h1v1h-1zM341.33 24h1v1h-1zM341.33 27h1v1h-1zM341.33 33h1v1h-1zM341.33 41h1v2h-1zM341.33 46h1v1h-1zM341.33 51h1v2h-1zM342.33 7h1v1h-1zM342.33 9h1v2h-1zM342.33 11h1v2h-1zM342.33 29h1v1h-1zM342.33 30h1v2h-1zM342.33 33h1v1h-1zM342.33 42h1v1h-1zM342.33 53h1v1h-1zM343.33 6h1v2h-1zM343.33 15h1v1h-1zM343.33 19h1v1h-1zM343.33 20h1v1h-1zM343.33 41h1v1h-1zM343.33 43h1v1h-1zM343.33 44h1v2h-1zM343.33 46h1v1h-1zM344.33 3h1v1h-1zM344.33 4h1v2h-1zM344.33 7h1v1h-1zM344.33 9h1v2h-1zM344.33 12h1v2h-1zM344.33 14h1v1h-1zM344.33 17h1v1h-1zM344.33 22h1v1h-1zM344.33 26h1v1h-1zM344.33 33h1v2h-1zM345.33 2h1v1h-1zM345.33 27h1v2h-1zM345.33 45h1v1h-1zM346.33 0h1v1h-1zM346.33 1h1v2h-1zM346.33 8h1v2h-1zM346.33 18h1v1h-1zM346.33 19h1v1h-1zM346.33 26h1v1h-1zM346.33 29h1v1h-1zM346.33 33h1v1h-1zM346.33 34h1v1h-1zM346.33 37h1v2h-1zM346.33 42h1v1h-1zM347.33 35h1v1h-1zM347.33 36h1v1h-1zM347.33 40h1v1h-1zM347.33 47h1v2h-1zM348.33 5h1v1h-1zM348.33 14h1v1h-1zM348.33 16h1v1h-1zM348.33 36h1v1h-1zM348.33 41h1v1h-1zM348.33 49h1v1h-1zM348.33 51h1v2h-1zM349.33 13h1v1h-1zM349.33 14h1v1h-1zM349.33 28h1v1h-1zM349.33 32h1v1h-1zM349.33 36h1v2h-1zM349.33 38h1v2h-1zM349.33 43h1v2h-1zM350.33 14h1v1h-1zM350.33 21h1v1h-1zM350.33 24h1v2h-1zM350.33 26h1v2h-1zM350.33 32h1v1h-1zM350.33 33h1v2h-1zM350.33 37h1v2h-1zM351.33 3h1v1h-1zM351.33 27h1v1h-1zM351.33 47h1v1h-1zM351.33 52h1v1h-1zM352.33 14h1v1h-1zM352.33 18h1v1h-1zM352.33 28h1v2h-1zM352.33 32h1v2h-1zM352.33 42h1v1h-1zM352.33 47h1v1h-1zM353.33 0h1v1h-1zM353.33 9h1v2h-1zM353.33 16h1v1h-1zM353.33 34h1v1h-1zM353.33 43h1v1h-1zM353.33 48h1v1h-1zM353.33 49h1v1h-1zM354.33 1h1v2h-1zM354.33 3h1v1h-1zM354.33 10h1v1h-1zM354.33 34h1v1h-1zM354.33 35h1v1h-1zM354.33 44h1v2h-1zM354.33 47h1v1h-1zM355.33 12h1v1h-1zM355.33 13h1v1h-1zM355.33 21h1v2h-1zM355.33 23h1v2h-1zM355.33 30h1v2h-1zM356.33 11h1v1h-1zM356.33 30h1v2h-1zM356.33 43h1v1h-1zM356.33 46h1v1h-1zM356.33 50h1v1h-1zM356.33 51h1v2h-1zM357.33 5h1v1h-1zM357.33 8h1v2h-1zM357.33 19h1v1h-1zM357.33 31h1v1h-1zM357.33 51h1v1h-1zM358.33 10h1v1h-1zM358.33 14h1v2h-1zM358.33 19h1v1h-1zM358.33 21h1v2h-1zM358.33 25h1v2h-1zM358.33 29h1v1h-1zM358.33 32h1v1h-1zM358.33 43h1v1h-1zM359.33 0h1v1h-1zM359.33 3h1v1h-1zM359.33 9h1v2h-1zM359.33 21h1v1h-1zM359.33 23h1v1h-1zM359.33 28h1v2h-1zM359.33 33h1v1h-1zM359.33 37h1v2h-1zM359.33 44h1v1h-1zM360.33 0h1v2h-1zM360.33 23h1v1h-1zM360.33 25h1v1h-1zM360.33 30h1v1h-1zM360.33 38h1v2h-1zM360.33 41h1v1h-1zM361.33 0h1v2h-1zM361.33 4h1v1h-1zM361.33 34h1v1h-1zM361.33 43h1v2h-1zM361.33 47h1v2h-1zM361.33 53h1v1h-1zM362.33 6h1v1h-1zM362.33 20h1v1h-1zM362.33 41h1v2h-1zM362.33 45h1v2h-1zM362.33 50h1v1h-1zM363.33 1h1v1h-1zM363.33 4h1v2h-1zM363.33 7h1v1h-1zM363.33 11h1v1h-1zM363.33 24h1v2h-1zM363.33 35h1v2h-1zM363.33 38h1v1h-1zM363.33 50h1v1h-1zM364.33 12h1v1h-1zM364.33 21h1v1h-1zM364.33 28h1v1h-1zM364.33 32h1v2h-1zM364.33 47h1v1h-1zM365.33 9h1v1h-1zM365.33 13h1v1h-1zM365.33 32h1v1h-1zM365.33 39h1v1h-1zM365.33 50h1v1h-1zM365.33 52h1v2h-1zM366.33 3h1v1h-1zM366.33 4h1v1h-1zM366.33 19h1v2h-1zM366.33 21h1v1h-1zM366.33 22h1v1h-1zM366.33 23h1v2h-1zM366.33 27h1v2h-1zM366.33 33h1v1h-1zM366.33 34h1v1h-1zM367.33 5h1v1h-1zM367.33 27h1v2h-1zM367.33 31h1v1h-1zM367.33 33h1v2h-1zM367.33 44h1v1h-1zM368.33 2h1v2h-1zM368.33 6h1v1h-1zM368.33 15h1v2h-1zM368.33 38h1v1h-1zM368.33 40h1v1h-1zM368.33 50h1v2h-1zM369.33 4h1v1h-1zM369.33 6h1v1h-1zM369.33 9h1v1h-1zM369.33 10h1v1h-1zM369.33 12h1v1h-1zM369.33 13h1v1h-1zM369.33 16h1v1h-1zM369.33 21h1v1h-1zM369.33 31h1v2h-1zM369.33 37h1v1h-1zM369.33 42h1v1h-1zM369.33 45h1v1h-1zM370.33 2h1v1h-1zM370.33 26h1v2h-1zM370.33 29h1v1h-1zM370.33 36h1v2h-1zM371.33 1h1v1h-1zM371.33 20h1v2h-1zM371.33 25h1v2h-1zM371.33 27h1v1h-1zM371.33 34h1v1h-1zM372.33 2h1v2h-1zM372.33 6h1v1h-1zM372.33 8h1v1h-1zM372.33 9h1v2h-1zM372.33 13h1v1h-1zM372.33 15h1v1h-1zM372.33 23h1v1h-1zM372.33 24h1v1h-1zM372.33 29h1v1h-1zM372.33 30h1v1h-1zM372.33 43h1v2h-1zM373.33 13h1v2h-1zM373.33 33h1v1h-1zM373.33 53h1v1h-1zM374.33 4h1v1h-1zM374.33 11h1v2h-1zM374.33 17h1v2h-1zM374.33 25h1v2h-1zM374.33 43h1v1h-1zM374.33 51h1v2h-1zM375.33 2h1v1h-1zM375.33 3h1v1h-1zM375.33 6h1v1h-1zM375.33 9h1v1h-1zM375.33 15h1v1h-1zM375.33 19h1v1h-1zM375.33 25h1v1h-1zM375.33 30h1v2h-1zM375.33 41h1v1h-1zM375.33 44h1v1h-1zM375.33 45h1v1h-1zM375.33 47h1v1h-1zM376.33 0h1v1h-1zM376.33 1h1v2h-1zM376.33 13h1v1h-1zM376.33 24h1v1h-1zM376.33 29h1v1h-1zM376.33 38h1v1h-1zM376.33 43h1v2h-1zM376.33 45h1v1h-1zM377.33 0h1v1h-1zM377.33 4h1v1h-1zM377.33 13h1v1h-1zM377.33 26h1v1h-1zM377.33 33h1v1h-1zM377.33 49h1v1h-1zM377.33 50h1v1h-1zM378.33 11h1v1h-1zM378.33 18h1v1h-1zM378.33 19h1v1h-1zM378.33 21h1v1h-1zM378.33 23h1v1h-1zM378.33 25h1v2h-1zM378.33 47h1v1h-1zM378.33 48h1v2h-1zM378.33 50h1v1h-1zM379.33 5h1v2h-1zM379.33 7h1v1h-1zM379.33 12h1v1h-1zM379.33 13h1v1h-1zM379.33 17h1v1h-1zM379.33 33h1v1h-1zM379.33 41h1v1h-1zM379.33 49h1v1h-1zM380.33 8h1v2h-1zM380.33 16h1v2h-1zM380.33 18h1v1h-1zM380.33 23h1v2h-1zM380.33 36h1v1h-1zM380.33 40h1v1h-1zM380.33 45h1v2h-1zM380.33 49h1v1h-1zM381.33 42h1v1h-1zM382.33 28h1v1h-1zM382.33 38h1v1h-1zM382.33 42h1v1h-1zM382.33 50h1v2h-1zM383.33 17h1v1h-1zM383.33 19h1v1h-1zM383.33 28h1v2h-1zM383.33 41h1v1h-1zM384.33 5h1v1h-1zM384.33 6h1v2h-1zM384.33 19h1v1h-1zM384.33 21h1v2h-1zM384.33 24h1v1h-1zM384.33 25h1v2h-1zM384.33 31h1v2h-1zM384.33 34h1v2h-1zM384.33 38h1v2h-1zM384.33 50h1v1h-1zM385.33 0h1v1h-1zM385.33 6h1v2h-1zM385.33 12h1v1h-1zM385.33 26h1v1h-1zM385.33 50h1v2h-1zM385.33 52h1v2h-1zM386.33 6h1v1h-1zM386.33 9h1v2h-1zM386.33 22h1v1h-1zM386.33 24h1v1h-1zM386.33 36h1v1h-1zM386.33 40h1v2h-1zM387.33 8h1v1h-1zM387.33 30h1v1h-1zM387.33 35h1v1h-1zM387.33 39h1v1h-1zM387.33 41h1v1h-1zM388.33 3h1v1h-1zM388.33 24h1v1h-1zM388.33 45h1v1h-1zM388.33 50h1v1h-1zM388.33 51h1v1h-1zM388.33 53h1v1h-1zM389.33 3h1v2h-1zM389.33 9h1v2h-1zM389.33 11h1v1h-1zM389.33 28h1v1h-1zM389.33 33h1v2h-1zM389.33 43h1v1h-1zM390.33 4h1v1h-1zM390.33 39h1v1h-1zM390.33 43h1v1h-1zM390.33 47h1v1h-1zM391.33 6h1v1h-1zM391.33 7h1v2h-1zM391.33 9h1v2h-1zM391.33 13h1v1h-1zM391.33 38h1v1h-1zM392.33 3h1v1h-1zM392.33 4h1v1h-1zM392.33 6h1v1h-1zM392.33 14h1v1h-1zM392.33 15h1v1h-1zM392.33 27h1v1h-1zM392.33 30h1v2h-1zM392.33 39h1v2h-1zM392.33 44h1v2h-1zM392.33 50h1v1h-1zM392.33 51h1v1h-1zM393.33 16h1v1h-1zM393.33 19h1v2h-1zM393.33 21h1v1h-1zM393.33 29h1v1h-1zM393.33 36h1v1h-1zM393.33 47h1v2h-1zM393.33 49h1v1h-1zM394.33 4h1v1h-1zM394.33 5h1v1h-1zM394.33 18h1v2h-1zM394.33 20h1v1h-1zM394.33 46h1v2h-1zM394.33 49h1v1h-1zM395.33 3h1v2h-1zM395.33 9h1v2h-1zM395.33 18h1v1h-1zM395.33 28h1v1h-1zM395.33 37h1v2h-1zM395.33 51h1v1h-1zM396.33 1h1v2h-1zM396.33 17h1v2h-1zM396.33 30h1v1h-1zM396.33 40h1v2h-1zM396.33 46h1v2h-1zM396.33 53h1v1h-1zM397.33 18h1v1h-1zM397.33 22h1v1h-1zM397.33 27h1v1h-1zM397.33 36h1v1h-1zM397.33 41h1v2h-1zM397.33 46h1v1h-1zM397.33 47h1v1h-1zM398.33 18h1v1h-1zM398.33 20h1v1h-1zM398.33 31h1v1h-1zM398.33 33h1v1h-1zM398.33 38h1v1h-1zM398.33 40h1v1h-1zM398.33 42h1v1h-1zM398.33 44h1v1h-1zM398.33 48h1v2h-1zM399.33 0h1v2h-1zM399.33 14h1v1h-1zM399.33 16h1v1h-1zM399.33 25h1v1h-1zM399.33 30h1v2h-1zM399.33 35h1v1h-1zM399.33 36h1v1h-1zM399.33 50h1v1h-1zM400.33 12h1v2h-1zM400.33 14h1v2h-1zM400.33 22h1v1h-1zM400.33 24h1v1h-1zM400.33 29h1v1h-1zM400.33 30h1v1h-1zM400.33 31h1v1h-1zM400.33 52h1v2h-1zM401.33 2h1v1h-1zM401.33 3h1v2h-1zM401.33 7h1v1h-1zM401.33 11h1v2h-1zM401.33 13h1v2h-1zM401.33 25h1v1h-1zM401.33 47h1v1h-1zM401.33 53h1v1h-1zM402.33 0h1v2h-1zM402.33 21h1v2h-1zM402.33 28h1v1h-1zM402.33 48h1v1h-1zM403.33 5h1v2h-1zM403.33 21h1v1h-1zM403.33 29h1v2h-1zM403.33 35h1v2h-1zM404.33 1h1v1h-1zM404.33 14h1v1h-1zM404.33 17h1v2h-1zM404.33 38h1v2h-1zM404.33 43h1v2h-1zM404.33 52h1v1h-1zM405.33 3h1v1h-1zM405.33 9h1v2h-1zM405.33 19h1v1h-1zM405.33 35h1v1h-1zM406.33 0h1v2h-1zM406.33 6h1v2h-1zM406.33 10h1v1h-1zM406.33 15h1v2h-1zM406.33 22h1v1h-1zM406.33 27h1v2h-1zM406.33 45h1v1h-1zM406.33 46h1v1h-1zM407.33 0h1v1h-1zM407.33 6h1v1h-1zM407.33 8h1v1h-1zM407.33 17h1v1h-1zM407.33 22h1v2h-1zM407.33 35h1v1h-1zM408.33 5h1v1h-1zM408.33 6h1v1h-1zM408.33 16h1v2h-1zM408.33 23h1v1h-1zM408.33 29h1v1h-1zM408.33 30h1v1h-1zM408.33 42h1v1h-1zM409.33 4h1v2h-1zM409.33 11h1v1h-1zM409.33 25h1v1h-1zM409.33 33h1v1h-1zM409.33 37h1v1h-1zM409.33 49h1v1h-1zM410.33 17h1v1h-1zM410.33 18h1v1h-1zM410.33 19h1v2h-1zM410.33 25h1v2h-1zM410.33 29h1v1h-1zM410.33 46h1v1h-1zM411.33 0h1v2h-1zM411.33 23h1v1h-1zM411.33 34h1v1h-1zM411.33 39h1v2h-1zM411.33 47h1v1h-1zM412.33 16h1v2h-1zM412.33 35h1v1h-1zM412.33 36h1v1h-1zM413.33 0h1v1h-1zM413.33 5h1v1h-1zM413.33 9h1v1h-1zM413.33 17h1v2h-1zM413.33 34h1v1h-1zM413.33 35h1v1h-1zM413.33 38h1v2h-1zM413.33 48h1v2h-1zM413.33 50h1v2h-1zM413.33 53h1v1h-1zM414.33 15h1v2h-1zM414.33 19h1v2h-1zM414.33 30h1v2h-1zM414.33 40h1v1h-1zM414.33 53h1v1h-1zM415.33 4h1v1h-1zM415.33 23h1v1h-1zM415.33 27h1v2h-1zM415.33 31h1v1h-1zM415.33 37h1v1h-1zM416.33 19h1v2h-1zM416.33 22h1v2h-1zM416.33 36h1v2h-1zM416.33 46h1v1h-1zM417.33 1h1v1h-1zM417.33 2h1v1h-1zM417.33 3h1v2h-1zM417.33 6h1v1h-1zM417.33 7h1v2h-1zM417.33 12h1v1h-1zM417.33 15h1v2h-1zM417.33 20h1v1h-1zM417.33 24h1v2h-1zM417.33 26h1v1h-1zM417.33 34h1v1h-1zM417.33 37h1v2h-1zM417.33 39h1v1h-1zM417.33 46h1v2h-1zM417.33 51h1v2h-1zM418.33 16h1v1h-1zM418.33 17h1v1h-1zM418.33 23h1v1h-1zM418.33 24h1v2h-1zM418.33 30h1v2h-1zM418.33 36h1v1h-1zM418.33 45h1v1h-1zM419.33 2h1v2h-1zM419.33 21h1v2h-1zM419.33 26h1v1h-1zM419.33 44h1v2h-1zM419.33 48h1v1h-1zM419.33 52h1v1h-1zM420.33 0h1v1h-1zM420.33 5h1v1h-1zM420.33 14h1v1h-1zM420.33 23h1v1h-1zM420.33 26h1v1h-1zM420.33 31h1v1h-1zM420.33 36h1v1h-1zM420.33 47h1v2h-1zM421.33 3h1v1h-1zM421.33 4h1v1h-1zM421.33 8h1v2h-1zM421.33 12h1v1h-1zM421.33 20h1v1h-1zM421.33 25h1v1h-1zM421.33 37h1v1h-1zM421.33 44h1v1h-1zM422.33 1h1v1h-1zM422.33 43h1v1h-1zM422.33 49h1v2h-1zM423.33 2h1v1h-1zM423.33 5h1v2h-1zM423.33 9h1v1h-1zM423.33 13h1v1h-1zM423.33 18h1v2h-1zM423.33 24h1v2h-1zM423.33 35h1v2h-1zM423.33 42h1v2h-1zM423.33 49h1v2h-1zM424.33 2h1v1h-1zM424.33 4h1v2h-1zM424.33 8h1v1h-1zM424.33 25h1v2h-1zM424.33 33h1v1h-1zM424.33 43h1v1h-1zM424.33 46h1v1h-1zM424.33 48h1v2h-1zM425.33 6h1v1h-1zM425.33 7h1v1h-1zM425.33 8h1v1h-1zM425.33 12h1v1h-1zM425.33 15h1v1h-1zM425.33 21h1v2h-1zM425.33 30h1v1h-1zM425.33 31h1v1h-1zM425.33 48h1v1h-1zM426.33 3h1v2h-1zM426.33 7h1v1h-1zM426.33 12h1v2h-1zM426.33 16h1v2h-1zM426.33 18h1v1h-1zM426.33 21h1v1h-1zM426.33 35h1v1h-1zM426.33 36h1v1h-1zM426.33 48h1v1h-1zM426.33 49h1v2h-1zM426.33 53h1v1h-1zM427.33 5h1v2h-1zM427.33 8h1v2h-1zM427.33 22h1v1h-1zM427.33 23h1v1h-1zM427.33 29h1v1h-1zM427.33 33h1v1h-1zM427.33 36h1v1h-1zM427.33 46h1v1h-1zM428.33 5h1v2h-1zM428.33 20h1v2h-1zM428.33 30h1v1h-1zM428.33 35h1v2h-1zM428.33 40h1v1h-1zM429.33 6h1v2h-1zM429.33 17h1v1h-1zM429.33 18h1v1h-1zM429.33 28h1v1h-1zM430.33 0h1v1h-1zM430.33 1h1v2h-1zM430.33 32h1v1h-1zM430.33 34h1v1h-1zM430.33 35h1v2h-1zM430.33 42h1v1h-1zM430.33 43h1v1h-1zM430.33 47h1v2h-1zM431.33 4h1v1h-1zM431.33 10h1v2h-1zM431.33 12h1v1h-1zM431.33 19h1v2h-1zM431.33 25h1v2h-1zM431.33 27h1v2h-1zM432.33 5h1v2h-1zM432.33 10h1v2h-1zM432.33 18h1v1h-1zM432.33 27h1v2h-1zM432.33 32h1v1h-1zM432.33 42h1v1h-1zM432.33 44h1v1h-1zM432.33 46h1v2h-1zM433.33 0h1v1h-1zM433.33 6h1v2h-1zM433.33 13h1v1h-1zM433.33 21h1v1h-1zM433.33 29h1v1h-1zM433.33 40h1v1h-1zM433.33 41h1v1h-1zM433.33 48h1v1h-1zM434.33 5h1v2h-1zM434.33 10h1v2h-1zM434.33 13h1v1h-1zM434.33 16h1v2h-1zM434.33 26h1v2h-1zM434.33 31h1v1h-1zM434.33 39h1v2h-1zM435.33 7h1v1h-1zM435.33 9h1v2h-1zM435.33 20h1v1h-1zM435.33 21h1v2h-1zM435.33 36h1v1h-1zM435.33 37h1v1h-1zM435.33 40h1v1h-1zM435.33 43h1v1h-1zM435.33 52h1v1h-1z"/>
<path fill="#e4ff20" d="M112 39h1v1h-1zM113 11h1v1h-1zM113 13h1v1h-1zM113 40h1v2h-1zM113 44h1v1h-1zM113 46h1v1h-1zM113 48h1v1h-1zM114 51h1v1h-1zM115 45h1v2h-1zM116 11h1v1h-1zM116 16h1v1h-1zM116 40h1v1h-1zM117 8h1v2h-1zM117 21h1v2h-1zM117 28h1v1h-1zM117 29h1v2h-1zM117 44h1v2h-1zM118 4h1v2h-1zM118 25h1v2h-1zM118 29h1v1h-1zM118 36h1v2h-1zM118 50h1v1h-1zM119 14h1v1h-1zM119 39h1v2h-1zM120 5h1v1h-1zM120 6h1v1h-1zM120 11h1v1h-1zM120 34h1v1h-1zM120 39h1v1h-1zM121 5h1v1h-1zM121 11h1v1h-1zM121 13h1v1h-1zM121 26h1v1h-1zM122 30h1v1h-1zM122 35h1v1h-1zM123 29h1v1h-1zM124 0h1v1h-1zM124 1h1v2h-1zM124 22h1v1h-1zM124 26h1v1h-1zM124 36h1v2h-1zM124 38h1v2h-1zM125 5h1v2h-1zM125 27h1v1h-1zM125 28h1v1h-1zM125 50h1v1h-1zM126 17h1v2h-1zM126 32h1v1h-1zM126 50h1v1h-1zM127 8h1v2h-1zM127 20h1v2h-1zM127 22h1v1h-1zM127 27h1v1h-1zM127 34h1v1h-1zM127 48h1v1h-1zM128 4h1v1h-1zM128 7h1v2h-1zM128 12h1v1h-1zM128 40h1v2h-1zM128 51h1v1h-1zM129 9h1v1h-1zM129 14h1v1h-1zM129 41h1v1h-1zM130 26h1v2h-1zM130 35h1v1h-1zM130 36h1v1h-1zM132 3h1v2h-1zM133 16h1v1h-1zM133 22h1v1h-1zM133 31h1v1h-1zM133 32h1v1h-1zM134 7h1v1h-1zM134 12h1v1h-1zM134 38h1v2h-1zM134 47h1v1h-1zM135 27h1v1h-1zM135 36h1v2h-1zM136 28h1v1h-1zM136 39h1v1h-1zM137 7h1v1h-1zM137 24h1v2h-1zM137 41h1v1h-1zM138 30h1v2h-1zM138 45h1v1h-1zM138 49h1v1h-1zM138 50h1v1h-1zM139 1h1v1h-1zM139 23h1v1h-1zM139 33h1v2h-1zM139 52h1v2h-1zM140 0h1v1h-1zM140 5h1v1h-1zM140 9h1v2h-1zM140 23h1v1h-1zM140 35h1v1h-1zM141 6h1v1h-1zM141 8h1v1h-1zM141 34h1v1h-1zM141 35h1v1h-1zM141 43h1v2h-1zM142 10h1v1h-1zM142 12h1v1h-1zM142 29h1v2h-1zM143 9h1v2h-1zM143 51h1v1h-1zM144 3h1v1h-1zM144 12h1v1h-1zM144 27h1v1h-1zM144 49h1v1h-1zM144 51h1v2h-1zM146 2h1v1h-1zM146 9h1v2h-1zM146 24h1v1h-1zM146 35h1v1h-1zM147 3h1v2h-1zM147 40h1v1h-1zM147 41h1v1h-1zM148 3h1v1h-1zM148 16h1v2h-1zM148 20h1v1h-1zM148 24h1v1h-1zM148 27h1v2h-1zM148 43h1v2h-1zM149 9h1v1h-1zM149 33h1v1h-1zM149 47h1v1h-1zM150 0h1v1h-1zM150 35h1v1h-1zM150 50h1v1h-1zM150 53h1v1h-1zM151 32h1v1h-1zM151 35h1v2h-1zM152 6h1v1h-1zM153 5h1v2h-1zM153 42h1v1h-1zM154 25h1v1h-1zM155 6h1v2h-1zM155 13h1v1h-1zM155 18h1v1h-1zM155 22h1v1h-1zM155 32h1v2h-1zM155 46h1v2h-1zM156 12h1v2h-1zM156 27h1v2h-1zM156 33h1v1h-1zM156 39h1v1h-1zM157 0h1v2h-1zM157 3h1v1h-1zM157 26h1v1h-1zM157 35h1v1h-1zM157 42h1v2h-1zM158 16h1v1h-1zM158 30h1v1h-1zM158 34h1v2h-1zM159 2h1v1h-1zM159 11h1v1h-1zM159 16h1v1h-1zM159 27h1v1h-1zM159 34h1v2h-1zM159 47h1v1h-1zM160 0h1v2h-1zM160 2h1v1h-1zM160 28h1v1h-1zM161 33h1v2h-1zM161 38h1v2h-1zM161 43h1v1h-1zM161 46h1v1h-1zM162 43h1v1h-1zM162 49h1v1h-1zM162 52h1v1h-1zM163 3h1v1h-1zM163 8h1v1h-1zM163 46h1v2h-1zM164 1h1v1h-1zM164 28h1v1h-1zM164 36h1v2h-1zM165 19h1v1h-1zM165 44h1v1h-1zM165 49h1v1h-1zM166 23h1v1h-1zM166 50h1v1h-1zM167 13h1v1h-1zM167 24h1v2h-1zM167 36h1v1h-1zM168 11h1v1h-1zM168 20h1v1h-1zM168 21h1v2h-1zM169 43h1v2h-1zM170 16h1v1h-1zM170 43h1v1h-1zM171 16h1v1h-1zM171 20h1v1h-1zM171 52h1v1h-1zM172 5h1v1h-1zM172 26h1v1h-1zM172 33h1v2h-1zM172 46h1v1h-1zM173 8h1v1h-1zM173 16h1v2h-1zM174 14h1v1h-1zM174 48h1v1h-1zM175 31h1v1h-1zM175 34h1v1h-1zM175 40h1v1h-1zM176 3h1v1h-1zM176 27h1v1h-1zM176 30h1v1h-1zM176 53h1v1h-1zM177 4h1v1h-1zM177 21h1v2h-1zM177 23h1v2h-1zM178 0h1v1h-1zM178 1h1v1h-1zM178 26h1v1h-1zM178 39h1v1h-1zM179 7h1v1h-1zM179 36h1v1h-1zM179 40h1v1h-1zM179 41h1v1h-1zM179 51h1v1h-1zM179 53h1v1h-1zM180 19h1v2h-1zM180 31h1v1h-1zM181 26h1v2h-1zM181 41h1v2h-1zM182 9h1v2h-1zM182 19h1v1h-1zM182 50h1v1h-1zM183 28h1v2h-1zM183 44h1v1h-1zM183 45h1v1h-1zM184 1h1v1h-1zM185 28h1v1h-1zM185 29h1v1h-1zM186 39h1v2h-1zM187 22h1v1h-1zM187 33h1v2h-1zM188 3h1v2h-1zM188 38h1v1h-1zM188 47h1v2h-1zM189 14h1v1h-1zM189 16h1v1h-1zM189 26h1v1h-1zM189 38h1v1h-1zM189 45h1v1h-1zM189 48h1v2h-1zM189 53h1v1h-1zM190 0h1v1h-1zM190 8h1v2h-1zM190 49h1v2h-1zM191 8h1v2h-1zM191 19h1v1h-1zM191 28h1v1h-1zM234.33 0h1v1h-1zM234.33 2h1v2h-1zM235.33 3h1v1h-1zM235.33 7h1v1h-1zM235.33 41h1v1h-1zM236.33 41h1v2h-1zM236.33 48h1v1h-1zM237.33 38h1v2h-1zM237.33 41h1v1h-1zM238.33 12h1v2h-1zM238.33 18h1v1h-1zM238.33 19h1v2h-1zM239.33 2h1v1h-1zM239.33 21h1v1h-1zM240.33 4h1v1h-1zM240.33 8h1v2h-1zM240.33 15h1v2h-1zM240.33 28h1v2h-1zM240.33 38h1v1h-1zM241.33 0h1v2h-1zM241.33 15h1v2h-1zM241.33 34h1v1h-1zM242.33 5h1v2h-1zM242.33 29h1v1h-1zM242.33 37h1v1h-1zM242.33 40h1v2h-1zM242.33 51h1v1h-1zM243.33 16h1v1h-1zM243.33 21h1v1h-1zM243.33 24h1v2h-1zM243.33 52h1v1h-1zM244.33 9h1v2h-1zM244.33 14h1v1h-1zM244.33 15h1v2h-1zM244.33 18h1v1h-1zM244.33 23h1v1h-1zM244.33 45h1v1h-1zM245.33 9h1v1h-1zM245.33 11h1v1h-1zM245.33 23h1v1h-1zM245.33 38h1v1h-1zM245.33 41h1v2h-1zM245.33 50h1v1h-1zM246.33 26h1v1h-1zM246.33 53h1v1h-1zM248.33 30h1v1h-1zM248.33 35h1v2h-1zM248.33 51h1v1h-1zM249.33 15h1v1h-1zM249.33 23h1v1h-1zM249.33 30h1v1h-1zM250.33 6h1v2h-1zM250.33 13h1v1h-1zM250.33 15h1v2h-1zM250.33 19h1v1h-1zM250.33 22h1v1h-1zM250.33 33h1v2h-1zM251.33 7h1v2h-1zM251.33 16h1v2h-1zM252.33 12h1v1h-1zM252.33 51h1v1h-1zM253.33 6h1v1h-1zM253.33 9h1v2h-1zM253.33 35h1v2h-1zM253.33 42h1v2h-1zM253.33 51h1v1h-1zM254.33 4h1v1h-1zM254.33 41h1v1h-1zM255.33 3h1v2h-1zM255.33 7h1v1h-1zM255.33 45h1v2h-1zM256.33 5h1v1h-1zM256.33 16h1v2h-1zM257.33 3h1v1h-1zM257.33 21h1v1h-1zM257.33 50h1v2h-1zM258.33 45h1v1h-1zM259.33 7h1v1h-1zM259.33 8h1v2h-1zM259.33 10h1v1h-1zM259.33 13h1v2h-1zM259.33 25h1v1h-1zM259.33 38h1v1h-1zM259.33 41h1v1h-1zM260.33 6h1v1h-1zM260.33 24h1v1h-1zM260.33 35h1v1h-1zM261.33 34h1v1h-1zM261.33 49h1v1h-1zM262.33 34h1v1h-1zM262.33 35h1v2h-1zM263.33 7h1v1h-1zM263.33 27h1v1h-1zM263.33 53h1v1h-1zM264.33 22h1v1h-1zM264.33 25h1v2h-1zM264.33 39h1v2h-1zM264.33 45h1v1h-1zM265.33 0h1v2h-1zM265.33 18h1v1h-1zM265.33 28h1v1h-1zM266.33 36h1v1h-1zM266.33 45h1v1h-1zM266.33 49h1v2h-1zM266.33 51h1v1h-1zM267.33 37h1v1h-1zM267.33 52h1v1h-1zM268.33 1h1v1h-1zM268.33 2h1v1h-1zM268.33 6h1v2h-1zM268.33 30h1v1h-1zM270.33 5h1v1h-1zM270.33 6h1v1h-1zM270.33 23h1v1h-1zM270.33 35h1v1h-1zM271.33 14h1v2h-1zM271.33 42h1v2h-1zM272.33 28h1v2h-1zM273.33 10h1v2h-1zM273.33 45h1v2h-1zM274.33 15h1v2h-1zM274.33 28h1v1h-1zM274.33 38h1v2h-1zM274.33 43h1v2h-1zM275.33 2h1v2h-1zM275.33 11h1v2h-1zM276.33 11h1v2h-1zM277.33 1h1v1h-1zM278.33 15h1v1h-1zM278.33 42h1v1h-1zM278.33 45h1v1h-1zM279.33 0h1v2h-1zM279.33 4h1v1h-1zM279.33 7h1v1h-1zM279.33 14h1v2h-1zM279.33 34h1v2h-1zM279.33 41h1v2h-1zM280.33 17h1v1h-1zM280.33 24h1v2h-1zM281.33 22h1v2h-1zM281.33 24h1v2h-1zM281.33 40h1v1h-1zM282.33 36h1v1h-1zM283.33 0h1v1h-1zM283.33 2h1v1h-1zM283.33 14h1v2h-1zM283.33 18h1v1h-1zM283.33 37h1v1h-1zM284.33 5h1v1h-1zM284.33 9h1v1h-1zM284.33 16h1v2h-1zM285.33 11h1v1h-1zM285.33 26h1v1h-1zM285.33 52h1v2h-1zM286.33 1h1v2h-1zM286.33 6h1v2h-1zM286.33 8h1v1h-1zM286.33 13h1v1h-1zM286.33 34h1v1h-1zM286.33 42h1v1h-1zM286.33 45h1v1h-1zM286.33 52h1v1h-1zM287.33 29h1v1h-1zM287.33 32h1v2h-1zM287.33 35h1v1h-1zM287.33 49h1v1h-1zM288.33 0h1v2h-1zM288.33 22h1v1h-1zM288.33 31h1v2h-1zM289.33 10h1v1h-1zM289.33 51h1v1h-1zM290.33 10h1v1h-1zM290.33 16h1v2h-1zM290.33 20h1v2h-1zM290.33 30h1v1h-1zM290.33 31h1v1h-1zM292.33 6h1v1h-1zM292.33 25h1v2h-1zM292.33 34h1v1h-1zM292.33 35h1v1h-1zM292.33 47h1v2h-1zM293.33 9h1v1h-1zM293.33 31h1v1h-1zM294.33 1h1v1h-1zM294.33 19h1v1h-1zM294.33 32h1v1h-1zM294.33 34h1v1h-1zM294.33 42h1v1h-1zM295.33 6h1v2h-1zM295.33 10h1v1h-1zM295.33 23h1v1h-1zM295.33 36h1v2h-1zM295.33 42h1v1h-1zM295.33 49h1v1h-1zM296.33 4h1v1h-1zM296.33 7h1v1h-1zM296.33 15h1v1h-1zM296.33 44h1v1h-1zM297.33 15h1v1h-1zM297.33 16h1v1h-1zM297.33 32h1v1h-1zM297.33 39h1v1h-1zM297.33 41h1v2h-1zM298.33 52h1v1h-1zM299.33 0h1v1h-1zM299.33 6h1v1h-1zM300.33 22h1v1h-1zM301.33 33h1v2h-1zM302.33 6h1v1h-1zM302.33 8h1v1h-1zM302.33 17h1v2h-1zM302.33 22h1v1h-1zM303.33 30h1v1h-1zM303.33 51h1v2h-1zM304.33 2h1v1h-1zM304.33 20h1v1h-1zM304.33 24h1v1h-1zM304.33 29h1v1h-1zM305.33 1h1v1h-1zM305.33 4h1v1h-1zM306.33 6h1v1h-1zM306.33 7h1v1h-1zM306.33 23h1v1h-1zM306.33 34h1v1h-1zM307.33 3h1v2h-1zM307.33 50h1v1h-1zM308.33 5h1v2h-1zM308.33 25h1v1h-1zM308.33 41h1v2h-1zM308.33 44h1v2h-1zM309.33 5h1v1h-1zM309.33 48h1v1h-1zM310.33 29h1v2h-1zM310.33 42h1v1h-1zM310.33 53h1v1h-1zM311.33 32h1v1h-1zM311.33 43h1v1h-1zM311.33 44h1v2h-1zM312.33 0h1v1h-1zM312.33 32h1v1h-1zM313.33 4h1v1h-1zM313.33 35h1v1h-1zM314.33 6h1v2h-1zM314.33 9h1v2h-1zM314.33 12h1v1h-1zM314.33 37h1v1h-1zM314.33 52h1v1h-1zM315.33 3h1v1h-1zM315.33 32h1v1h-1zM315.33 36h1v1h-1zM316.33 10h1v2h-1zM316.33 12h1v1h-1zM317.33 4h1v1h-1zM317.33 43h1v1h-1zM317.33 46h1v1h-1zM317.33 53h1v1h-1zM318.33 15h1v2h-1zM318.33 23h1v2h-1zM318.33 42h1v1h-1zM318.33 48h1v2h-1zM318.33 50h1v1h-1zM319.33 1h1v1h-1zM319.33 16h1v1h-1zM319.33 17h1v1h-1zM319.33 18h1v2h-1zM319.33 20h1v1h-1zM319.33 27h1v2h-1zM320.33 5h1v1h-1zM320.33 41h1v2h-1zM320.33 44h1v2h-1zM321.33 19h1v2h-1zM321.33 50h1v2h-1zM322.33 14h1v1h-1zM322.33 36h1v1h-1zM323.33 4h1v1h-1zM323.33 9h1v1h-1zM323.33 19h1v2h-1zM323.33 21h1v1h-1zM323.33 47h1v1h-1zM323.33 52h1v1h-1zM324.33 29h1v2h-1zM325.33 21h1v1h-1zM325.33 22h1v1h-1zM325.33 28h1v1h-1zM325.33 45h1v1h-1zM326.33 47h1v2h-1zM327.33 8h1v1h-1zM328.33 0h1v2h-1zM328.33 46h1v1h-1zM329.33 11h1v1h-1zM329.33 44h1v2h-1zM329.33 52h1v1h-1zM330.33 2h1v1h-1zM330.33 20h1v1h-1zM330.33 26h1v1h-1zM331.33 11h1v1h-1zM331.33 38h1v2h-1zM332.33 14h1v1h-1zM332.33 34h1v1h-1zM332.33 36h1v1h-1zM333.33 6h1v1h-1zM333.33 23h1v1h-1zM333.33 47h1v1h-1zM334.33 8h1v2h-1zM334.33 25h1v1h-1zM334.33 33h1v1h-1zM335.33 5h1v1h-1zM335.33 47h1v1h-1zM335.33 48h1v1h-1zM336.33 9h1v1h-1zM336.33 31h1v1h-1zM336.33 45h1v2h-1zM336.33 51h1v2h-1zM337.33 0h1v1h-1zM337.33 10h1v2h-1zM337.33 16h1v1h-1zM337.33 35h1v1h-1zM337.33 44h1v1h-1zM338.33 7h1v1h-1zM338.33 14h1v1h-1zM338.33 37h1v1h-1zM338.33 39h1v2h-1zM338.33 47h1v2h-1zM339.33 25h1v1h-1zM340.33 16h1v1h-1zM340.33 19h1v1h-1zM340.33 27h1v1h-1zM340.33 49h1v2h-1zM341.33 8h1v2h-1zM341.33 10h1v2h-1zM341.33 28h1v2h-1zM341.33 30h1v2h-1zM341.33 39h1v1h-1zM341.33 47h1v1h-1zM342.33 8h1v1h-1zM343.33 16h1v1h-1zM343.33 23h1v1h-1zM343.33 38h1v2h-1zM344.33 20h1v1h-1zM344.33 31h1v1h-1zM344.33 39h1v1h-1zM344.33 46h1v1h-1zM345.33 35h1v1h-1zM345.33 44h1v1h-1zM345.33 49h1v1h-1zM345.33 51h1v1h-1zM346.33 12h1v2h-1zM346.33 31h1v2h-1zM346.33 53h1v1h-1zM348.33 9h1v1h-1zM348.33 33h1v1h-1zM349.33 2h1v2h-1zM349.33 5h1v1h-1zM349.33 20h1v1h-1zM349.33 25h1v1h-1zM349.33 40h1v1h-1zM350.33 28h1v1h-1zM350.33 39h1v1h-1zM350.33 40h1v2h-1zM351.33 8h1v1h-1zM351.33 18h1v2h-1zM351.33 24h1v1h-1zM351.33 46h1v1h-1zM352.33 22h1v1h-1zM352.33 25h1v1h-1zM353.33 30h1v1h-1zM353.33 38h1v2h-1zM354.33 0h1v1h-1zM354.33 6h1v1h-1zM354.33 23h1v1h-1zM354.33 32h1v2h-1zM354.33 50h1v1h-1zM356.33 0h1v1h-1zM356.33 13h1v1h-1zM356.33 22h1v2h-1zM356.33 29h1v1h-1zM357.33 4h1v1h-1zM358.33 20h1v1h-1zM359.33 4h1v2h-1zM359.33 46h1v1h-1zM360.33 8h1v2h-1zM360.33 12h1v1h-1zM360.33 17h1v1h-1zM360.33 28h1v1h-1zM361.33 10h1v1h-1zM361.33 30h1v2h-1zM362.33 23h1v2h-1zM362.33 51h1v2h-1zM363.33 12h1v1h-1zM363.33 51h1v1h-1zM364.33 5h1v1h-1zM364.33 13h1v1h-1zM364.33 24h1v2h-1zM364.33 45h1v1h-1zM364.33 46h1v1h-1zM365.33 11h1v2h-1zM365.33 16h1v2h-1zM365.33 22h1v1h-1zM365.33 33h1v1h-1zM365.33 45h1v1h-1zM366.33 5h1v1h-1zM366.33 6h1v1h-1zM366.33 14h1v2h-1zM366.33 16h1v2h-1zM367.33 41h1v1h-1zM367.33 42h1v2h-1zM367.33 52h1v1h-1zM368.33 0h1v1h-1zM368.33 12h1v1h-1zM368.33 35h1v1h-1zM369.33 5h1v1h-1zM369.33 17h1v1h-1zM369.33 30h1v1h-1zM369.33 33h1v1h-1zM369.33 49h1v1h-1zM370.33 4h1v1h-1zM370.33 14h1v1h-1zM370.33 34h1v2h-1zM371.33 4h1v1h-1zM371.33 7h1v1h-1zM371.33 24h1v1h-1zM371.33 38h1v2h-1zM371.33 50h1v1h-1zM372.33 42h1v1h-1zM373.33 6h1v1h-1zM373.33 30h1v2h-1zM373.33 44h1v1h-1zM373.33 48h1v1h-1zM374.33 16h1v1h-1zM374.33 20h1v1h-1zM374.33 30h1v1h-1zM374.33 47h1v1h-1zM375.33 7h1v2h-1zM375.33 16h1v2h-1zM375.33 27h1v1h-1zM375.33 39h1v2h-1zM375.33 50h1v1h-1zM377.33 22h1v1h-1zM377.33 31h1v2h-1zM377.33 38h1v1h-1zM378.33 6h1v1h-1zM378.33 9h1v2h-1zM378.33 42h1v2h-1zM379.33 23h1v2h-1zM381.33 16h1v1h-1zM381.33 18h1v2h-1zM381.33 22h1v2h-1zM381.33 33h1v1h-1zM382.33 12h1v2h-1zM382.33 22h1v1h-1zM382.33 30h1v2h-1zM382.33 32h1v2h-1zM382.33 49h1v1h-1zM383.33 13h1v2h-1zM383.33 22h1v2h-1zM383.33 42h1v1h-1zM384.33 8h1v1h-1zM384.33 28h1v1h-1zM385.33 33h1v1h-1zM385.33 41h1v1h-1zM386.33 8h1v1h-1zM386.33 13h1v2h-1zM387.33 7h1v1h-1zM387.33 12h1v2h-1zM387.33 22h1v1h-1zM387.33 27h1v1h-1zM387.33 38h1v1h-1zM388.33 0h1v1h-1zM388.33 22h1v2h-1zM388.33 29h1v1h-1zM388.33 30h1v2h-1zM389.33 5h1v2h-1zM389.33 16h1v1h-1zM389.33 24h1v1h-1zM389.33 26h1v2h-1zM389.33 37h1v1h-1zM390.33 9h1v1h-1zM390.33 10h1v2h-1zM390.33 16h1v1h-1zM390.33 24h1v2h-1zM390.33 29h1v2h-1zM390.33 38h1v1h-1zM390.33 40h1v1h-1zM391.33 35h1v1h-1zM391.33 36h1v2h-1zM392.33 23h1v1h-1zM392.33 24h1v2h-1zM392.33 48h1v2h-1zM393.33 7h1v2h-1zM393.33 38h1v1h-1zM394.33 35h1v2h-1zM395.33 6h1v2h-1zM395.33 20h1v1h-1zM395.33 49h1v1h-1zM396.33 8h1v2h-1zM396.33 10h1v1h-1zM396.33 11h1v2h-1zM396.33 24h1v1h-1zM396.33 33h1v2h-1zM397.33 3h1v2h-1zM397.33 14h1v1h-1zM397.33 19h1v1h-1zM398.33 11h1v1h-1zM399.33 37h1v2h-1zM400.33 18h1v1h-1zM400.33 25h1v1h-1zM400.33 35h1v2h-1zM400.33 45h1v1h-1zM401.33 33h1v1h-1zM401.33 41h1v2h-1zM402.33 24h1v2h-1zM402.33 38h1v1h-1zM402.33 41h1v1h-1zM402.33 52h1v2h-1zM403.33 18h1v1h-1zM403.33 38h1v1h-1zM404.33 25h1v2h-1zM404.33 32h1v2h-1zM404.33 53h1v1h-1zM405.33 8h1v1h-1zM405.33 20h1v2h-1zM405.33 49h1v1h-1zM406.33 11h1v1h-1zM408.33 11h1v1h-1zM408.33 24h1v1h-1zM408.33 36h1v2h-1zM408.33 38h1v1h-1zM409.33 15h1v1h-1zM409.33 17h1v1h-1zM409.33 50h1v1h-1zM410.33 14h1v1h-1zM410.33 30h1v1h-1zM411.33 44h1v2h-1zM411.33 48h1v1h-1zM411.33 53h1v1h-1zM412.33 0h1v1h-1zM412.33 2h1v1h-1zM412.33 28h1v2h-1zM412.33 50h1v2h-1zM413.33 4h1v1h-1zM413.33 23h1v2h-1zM414.33 3h1v1h-1zM415.33 22h1v1h-1zM415.33 26h1v1h-1zM415.33 36h1v1h-1zM415.33 44h1v1h-1zM416.33 52h1v1h-1zM416.33 53h1v1h-1zM417.33 10h1v1h-1zM417.33 14h1v1h-1zM417.33 18h1v2h-1zM417.33 32h1v1h-1zM417.33 50h1v1h-1zM418.33 1h1v1h-1zM418.33 7h1v1h-1zM418.33 12h1v1h-1zM418.33 15h1v1h-1zM418.33 52h1v1h-1zM419.33 15h1v2h-1zM419.33 39h1v1h-1zM419.33 53h1v1h-1zM420.33 1h1v2h-1zM420.33 35h1v1h-1zM420.33 46h1v1h-1zM421.33 26h1v1h-1zM421.33 27h1v2h-1zM421.33 32h1v2h-1zM421.33 39h1v2h-1zM421.33 43h1v1h-1zM421.33 45h1v1h-1zM422.33 20h1v1h-1zM423.33 28h1v1h-1zM423.33 37h1v1h-1zM424.33 34h1v1h-1zM424.33 40h1v1h-1zM426.33 8h1v1h-1zM426.33 44h1v2h-1zM427.33 0h1v2h-1zM427.33 32h1v1h-1zM427.33 38h1v1h-1zM427.33 40h1v1h-1zM427.33 43h1v2h-1zM428.33 15h1v2h-1zM428.33 25h1v2h-1zM428.33 31h1v1h-1zM428.33 45h1v1h-1zM429.33 27h1v1h-1zM429.33 35h1v1h-1zM429.33 39h1v1h-1zM429.33 43h1v1h-1zM430.33 21h1v1h-1zM430.33 44h1v2h-1zM430.33 46h1v1h-1zM431.33 15h1v1h-1zM431.33 21h1v2h-1zM431.33 34h1v1h-1zM431.33 46h1v1h-1zM431.33 52h1v2h-1zM432.33 9h1v1h-1zM432.33 12h1v2h-1zM432.33 30h1v1h-1zM432.33 49h1v1h-1zM433.33 39h1v1h-1zM433.33 42h1v2h-1zM433.33 51h1v1h-1zM434.33 34h1v2h-1zM434.33 38h1v1h-1zM435.33 38h1v1h-1zM435.33 50h1v2h-1z"/>
<path fill="#a0ff60" d="M112 18h1v1h-1zM112 29h1v1h-1zM113 15h1v2h-1zM116 28h1v1h-1zM117 34h1v1h-1zM117 53h1v1h-1zM118 1h1v1h-1zM118 43h1v2h-1zM119 7h1v2h-1zM120 35h1v2h-1zM121 42h1v1h-1zM123 39h1v2h-1zM124 8h1v1h-1zM127 18h1v1h-1zM128 24h1v1h-1zM129 4h1v1h-1zM131 9h1v2h-1zM131 22h1v2h-1zM132 19h1v1h-1zM132 24h1v1h-1zM134 14h1v1h-1zM134 16h1v2h-1zM141 53h1v1h-1zM142 15h1v2h-1zM145 1h1v1h-1zM145 12h1v1h-1zM149 18h1v1h-1zM150 18h1v2h-1zM150 27h1v2h-1zM150 38h1v1h-1zM150 51h1v2h-1zM155 26h1v1h-1zM156 37h1v1h-1zM157 2h1v1h-1zM157 47h1v2h-1zM158 8h1v1h-1zM158 22h1v1h-1zM158 31h1v1h-1zM160 44h1v1h-1zM161 20h1v1h-1zM162 2h1v2h-1zM163 49h1v2h-1zM164 30h1v2h-1zM164 52h1v2h-1zM165 1h1v2h-1zM165 20h1v1h-1zM168 2h1v1h-1zM170 33h1v2h-1zM172 12h1v1h-1zM173 10h1v2h-1zM173 49h1v1h-1zM174 4h1v1h-1zM176 51h1v1h-1zM177 28h1v2h-1zM177 39h1v2h-1zM179 38h1v1h-1zM181 23h1v2h-1zM182 3h1v1h-1zM182 39h1v1h-1zM183 3h1v1h-1zM185 1h1v1h-1zM186 6h1v1h-1zM187 42h1v1h-1zM187 43h1v1h-1zM189 50h1v1h-1zM190 15h1v1h-1zM234.33 48h1v1h-1zM235.33 12h1v2h-1zM237.33 32h1v1h-1zM238.33 33h1v1h-1zM238.33 48h1v1h-1zM240.33 49h1v1h-1zM242.33 17h1v1h-1zM246.33 10h1v2h-1zM248.33 45h1v2h-1zM253.33 22h1v1h-1zM253.33 41h1v1h-1zM254.33 42h1v1h-1zM256.33 26h1v2h-1zM256.33 47h1v1h-1zM257.33 5h1v2h-1zM259.33 30h1v1h-1zM262.33 0h1v2h-1zM262.33 5h1v1h-1zM262.33 16h1v1h-1zM262.33 30h1v1h-1zM262.33 50h1v1h-1zM264.33 12h1v1h-1zM269.33 10h1v2h-1zM272.33 44h1v1h-1zM273.33 28h1v1h-1zM279.33 3h1v1h-1zM280.33 37h1v2h-1zM284.33 8h1v1h-1zM284.33 32h1v1h-1zM284.33 47h1v2h-1zM285.33 33h1v1h-1zM288.33 11h1v1h-1zM288.33 52h1v1h-1zM290.33 9h1v1h-1zM291.33 25h1v1h-1zM296.33 40h1v1h-1zM297.33 44h1v1h-1zM297.33 45h1v1h-1zM298.33 2h1v2h-1zM299.33 31h1v2h-1zM301.33 28h1v2h-1zM301.33 36h1v2h-1zM301.33 39h1v2h-1zM301.33 46h1v1h-1zM302.33 14h1v1h-1zM304.33 14h1v2h-1zM304.33 48h1v2h-1zM305.33 14h1v1h-1zM306.33 4h1v2h-1zM306.33 40h1v2h-1zM307.33 0h1v2h-1zM308.33 36h1v1h-1zM309.33 28h1v2h-1zM311.33 29h1v2h-1zM312.33 14h1v1h-1zM315.33 6h1v1h-1zM315.33 41h1v2h-1zM317.33 8h1v1h-1zM317.33 27h1v1h-1zM318.33 39h1v1h-1zM321.33 24h1v1h-1zM321.33 33h1v1h-1zM322.33 29h1v1h-1zM323.33 14h1v1h-1zM324.33 3h1v2h-1zM324.33 21h1v1h-1zM325.33 15h1v2h-1zM326.33 11h1v1h-1zM327.33 40h1v1h-1zM330.33 4h1v2h-1zM330.33 12h1v1h-1zM331.33 28h1v1h-1zM331.33 48h1v1h-1zM332.33 26h1v2h-1zM335.33 22h1v1h-1zM338.33 15h1v1h-1zM339.33 28h1v1h-1zM342.33 40h1v2h-1zM343.33 18h1v1h-1zM344.33 1h1v2h-1zM345.33 42h1v1h-1zM347.33 8h1v1h-1zM347.33 21h1v1h-1zM348.33 38h1v1h-1zM348.33 39h1v1h-1zM348.33 40h1v1h-1zM349.33 31h1v1h-1zM349.33 48h1v2h-1zM350.33 0h1v1h-1zM350.33 9h1v1h-1zM350.33 10h1v1h-1zM350.33 17h1v2h-1zM350.33 29h1v1h-1zM350.33 48h1v1h-1zM351.33 0h1v1h-1zM352.33 41h1v1h-1zM353.33 29h1v1h-1zM354.33 7h1v2h-1zM355.33 39h1v2h-1zM356.33 16h1v1h-1zM356.33 24h1v2h-1zM357.33 25h1v2h-1zM358.33 23h1v1h-1zM358.33 45h1v1h-1zM358.33 46h1v2h-1zM358.33 48h1v2h-1zM358.33 51h1v2h-1zM361.33 36h1v1h-1zM362.33 9h1v1h-1zM362.33 38h1v2h-1zM364.33 52h1v1h-1zM366.33 18h1v1h-1zM369.33 43h1v1h-1zM370.33 45h1v1h-1zM371.33 40h1v1h-1zM371.33 43h1v1h-1zM372.33 37h1v1h-1zM374.33 29h1v1h-1zM374.33 31h1v2h-1zM375.33 53h1v1h-1zM376.33 5h1v2h-1zM376.33 11h1v2h-1zM376.33 20h1v1h-1zM376.33 41h1v2h-1zM377.33 53h1v1h-1zM378.33 22h1v1h-1zM379.33 10h1v2h-1zM380.33 41h1v1h-1zM383.33 44h1v2h-1zM384.33 49h1v1h-1zM387.33 14h1v1h-1zM387.33 40h1v1h-1zM387.33 45h1v1h-1zM388.33 16h1v1h-1zM391.33 46h1v1h-1zM394.33 37h1v1h-1zM398.33 30h1v1h-1zM401.33 35h1v1h-1zM403.33 43h1v1h-1zM403.33 52h1v2h-1zM404.33 6h1v1h-1zM407.33 20h1v1h-1zM407.33 21h1v1h-1zM408.33 48h1v1h-1zM409.33 43h1v2h-1zM409.33 51h1v1h-1zM410.33 3h1v2h-1zM414.33 22h1v1h-1zM414.33 32h1v1h-1zM415.33 45h1v1h-1zM416.33 9h1v1h-1zM416.33 29h1v2h-1zM417.33 5h1v1h-1zM418.33 34h1v1h-1zM419.33 23h1v1h-1zM419.33 50h1v1h-1zM420.33 17h1v1h-1zM420.33 32h1v1h-1zM420.33 53h1v1h-1zM423.33 23h1v1h-1zM425.33 32h1v1h-1zM425.33 44h1v1h-1zM428.33 37h1v1h-1zM428.33 48h1v1h-1zM429.33 2h1v2h-1zM429.33 22h1v1h-1zM433.33 8h1v1h-1zM433.33 52h1v1h-1zM434.33 18h1v1h-1z"/>
</g>
<rect x="196.9" y="428.13" width="3.5" height="2.47" fill="#50f0c0"/>
<rect x="197.4" y="425.67" width="2.5" height="2.47" fill="#70ffa0"/>
<rect x="226.7" y="428.13" width="3.5" height="2.47" fill="#50f0c0"/>
<rect x="227.2" y="425.67" width="2.5" height="2.47" fill="#70ffa0"/>
<rect x="227.7" y="423.20" width="1.5" height="2.47" fill="#90ff70"/>
<rect x="258.5" y="428.13" width="3.5" height="2.47" fill="#50f0c0"/>
<rect x="259.0" y="425.67" width="2.5" height="2.47" fill="#70ffa0"/>
<rect x="259.5" y="423.20" width="1.5" height="2.47" fill="#90ff70"/>
<rect x="379.3" y="428.13" width="3.5" height="2.47" fill="#50f0c0"/>
<rect x="379.8" y="425.67" width="2.5" height="2.47" fill="#70ffa0"/>
<rect x="380.3" y="423.20" width="1.5" height="2.47" fill="#90ff70"/>
<rect x="410.1" y="428.13" width="3.5" height="2.47" fill="#50f0c0"/>
<rect x="410.6" y="425.67" width="2.5" height="2.47" fill="#70ffa0"/>
<rect x="442.0" y="428.13" width="3.5" height="2.47" fill="#50f0c0"/>
<rect x="442.5" y="425.67" width="2.5" height="2.47" fill="#70ffa0"/>
<rect x="472.9" y="428.13" width="3.5" height="2.47" fill="#50f0c0"/>
<rect x="473.4" y="425.67" width="2.5" height="2.47" fill="#70ffa0"/>
<rect x="473.9" y="423.20" width="1.5" height="2.47" fill="#90ff70"/>
<rect x="502.3" y="428.13" width="3.5" height="2.47" fill="#50f0c0"/>
<rect x="503.3" y="423.20" width="1.5" height="2.47" fill="#90ff70"/>
<rect x="532.5" y="428.13" width="3.5" height="2.47" fill="#50f0c0"/>
<rect x="533.0" y="425.67" width="2.5" height="2.47" fill="#70ffa0"/>
<rect x="533.5" y="423.20" width="1.5" height="2.47" fill="#90ff70"/>
<rect x="564.4" y="428.13" width="3.5" height="2.47" fill="#50f0c0"/>
<rect x="565.4" y="423.20" width="1.5" height="2.47" fill="#90ff70"/>
<rect x="594.4" y="428.13" width="3.5" height="2.47" fill="#50f0c0"/>
<rect x="594.9" y="425.67" width="2.5" height="2.47" fill="#70ffa0"/>
<rect x="595.4" y="423.20" width="1.5" height="2.47" fill="#90ff70"/>
<rect x="624.0" y="428.13" width="3.5" height="2.47" fill="#50f0c0"/>
<rect x="624.5" y="425.67" width="2.5" height="2.47" fill="#70ffa0"/>
<rect x="625.0" y="423.20" width="1.5" height="2.47" fill="#90ff70"/>
<rect x="288.0" y="298.5" width="2" height="132.1" fill="#20f8e8"/>
<rect x="228.2" y="298.5" width="1.4" height="132.1" fill="#40e8d8" opacity="0.85"/>
<rect x="381.2" y="298.5" width="1.4" height="132.1" fill="#40e8d8" opacity="0.85"/>
<rect x="411.6" y="298.5" width="1.8" height="132.1" fill="#20e0e8" opacity="0.95"/>
<rect x="533.8" y="298.5" width="2.2" height="132.1" fill="#18e4f0" opacity="1.00"/>
<rect x="595.4" y="298.5" width="1.5" height="132.1" fill="#50f0b0" opacity="0.55"/>
<rect x="45.5" y="430.60" width="733.5" height="3" fill="#00007f"/>
<path d="M106.5 298.5V433.5M259.5 298.5V433.5M412.5 298.5V433.5M565.5 298.5V433.5M718.5 298.5V433.5M45.5 394.5H779.0M45.5 356.5H779.0M45.5 317.5H779.0" stroke="#c8c8ff" stroke-opacity="0.25" stroke-width="1" fill="none"/>
</g>
<path d="M60.5 298.5v3 M60.5 433.5v-3M75.5 298.5v3 M75.5 433.5v-3M91.5 298.5v3 M91.5 433.5v-3M106.5 298.5v6 M106.5 433.5v-6M121.5 298.5v3 M121.5 433.5v-3M137.5 298.5v3 M137.5 433.5v-3M152.5 298.5v3 M152.5 433.5v-3M167.5 298.5v3 M167.5 433.5v-3M183.5 298.5v3 M183.5 433.5v-3M198.5 298.5v3 M198.5 433.5v-3M213.5 298.5v3 M213.5 433.5v-3M228.5 298.5v3 M228.5 433.5v-3M244.5 298.5v3 M244.5 433.5v-3M259.5 298.5v6 M259.5 433.5v-6M274.5 298.5v3 M274.5 433.5v-3M290.5 298.5v3 M290.5 433.5v-3M305.5 298.5v3 M305.5 433.5v-3M320.5 298.5v3 M320.5 433.5v-3M336.5 298.5v3 M336.5 433.5v-3M351.5 298.5v3 M351.5 433.5v-3M366.5 298.5v3 M366.5 433.5v-3M381.5 298.5v3 M381.5 433.5v-3M397.5 298.5v3 M397.5 433.5v-3M412.5 298.5v6 M412.5 433.5v-6M427.5 298.5v3 M427.5 433.5v-3M443.5 298.5v3 M443.5 433.5v-3M458.5 298.5v3 M458.5 433.5v-3M473.5 298.5v3 M473.5 433.5v-3M489.5 298.5v3 M489.5 433.5v-3M504.5 298.5v3 M504.5 433.5v-3M519.5 298.5v3 M519.5 433.5v-3M534.5 298.5v3 M534.5 433.5v-3M550.5 298.5v3 M550.5 433.5v-3M565.5 298.5v6 M565.5 433.5v-6M580.5 298.5v3 M580.5 433.5v-3M596.5 298.5v3 M596.5 433.5v-3M611.5 298.5v3 M611.5 433.5v-3M626.5 298.5v3 M626.5 433.5v-3M642.5 298.5v3 M642.5 433.5v-3M657.5 298.5v3 M657.5 433.5v-3M672.5 298.5v3 M672.5 433.5v-3M687.5 298.5v3 M687.5 433.5v-3M703.5 298.5v3 M703.5 433.5v-3M718.5 298.5v6 M718.5 433.5v-6M733.5 298.5v3 M733.5 433.5v-3M749.5 298.5v3 M749.5 433.5v-3M764.5 298.5v3 M764.5 433.5v-3" stroke="#d9d9d9" stroke-width="1" fill="none"/>
<path d="M45.5 414.5h3 M779.0 414.5h-3M45.5 394.5h6 M779.0 394.5h-6M45.5 375.5h3 M779.0 375.5h-3M45.5 356.5h6 M779.0 356.5h-6M45.5 337.5h3 M779.0 337.5h-3M45.5 317.5h6 M779.0 317.5h-6" stroke="#d9d9d9" stroke-width="1" fill="none"/>
<rect x="45.5" y="298.5" width="733.5" height="135.0" fill="none" stroke="#d9d9d9" stroke-width="1"/>
<text x="40.5" y="437.0" font-size="11" font-weight="bold" fill="#d6d6d6" text-anchor="end">0</text>
<text x="40.5" y="398.5" font-size="11" font-weight="bold" fill="#d6d6d6" text-anchor="end">20</text>
<text x="40.5" y="360.0" font-size="11" font-weight="bold" fill="#d6d6d6" text-anchor="end">40</text>
<text x="40.5" y="321.4" font-size="11" font-weight="bold" fill="#d6d6d6" text-anchor="end">60</text>
<text x="106.0" y="447" font-size="11" font-weight="bold" fill="#d6d6d6" text-anchor="middle">-200</text>
<text x="259.0" y="447" font-size="11" font-weight="bold" fill="#d6d6d6" text-anchor="middle">-100</text>
<text x="412.0" y="447" font-size="11" font-weight="bold" fill="#d6d6d6" text-anchor="middle">0</text>
<text x="565.0" y="447" font-size="11" font-weight="bold" fill="#d6d6d6" text-anchor="middle">100</text>
<text x="718.0" y="447" font-size="11" font-weight="bold" fill="#d6d6d6" text-anchor="middle">200</text>
<text x="412.1" y="464.6" font-size="13" fill="#d6d6d6" stroke="#d6d6d6" stroke-width="0.3" text-anchor="middle">Frequency (MHz)</text>
<text transform="translate(18.3 365.9) rotate(-90)" font-size="13" fill="#d6d6d6" stroke="#d6d6d6" stroke-width="0.3" text-anchor="middle">Time (secs)</text>
<rect x="0" y="477" width="800" height="23" fill="#e6e6e6"/>
<text x="7.5" y="493" font-size="12" fill="#262626">Processing</text>
<text x="102.5" y="493" font-size="12" fill="#262626" xml:space="preserve">ΔT=12.8000 us  Samples/Update=6144  VBW=37.3019 kHz  RBW=78.1250 kHz  Sample Rate=480.0000 MHz  Updates=54  T=0.0000 secs</text>
</svg></body></html>
